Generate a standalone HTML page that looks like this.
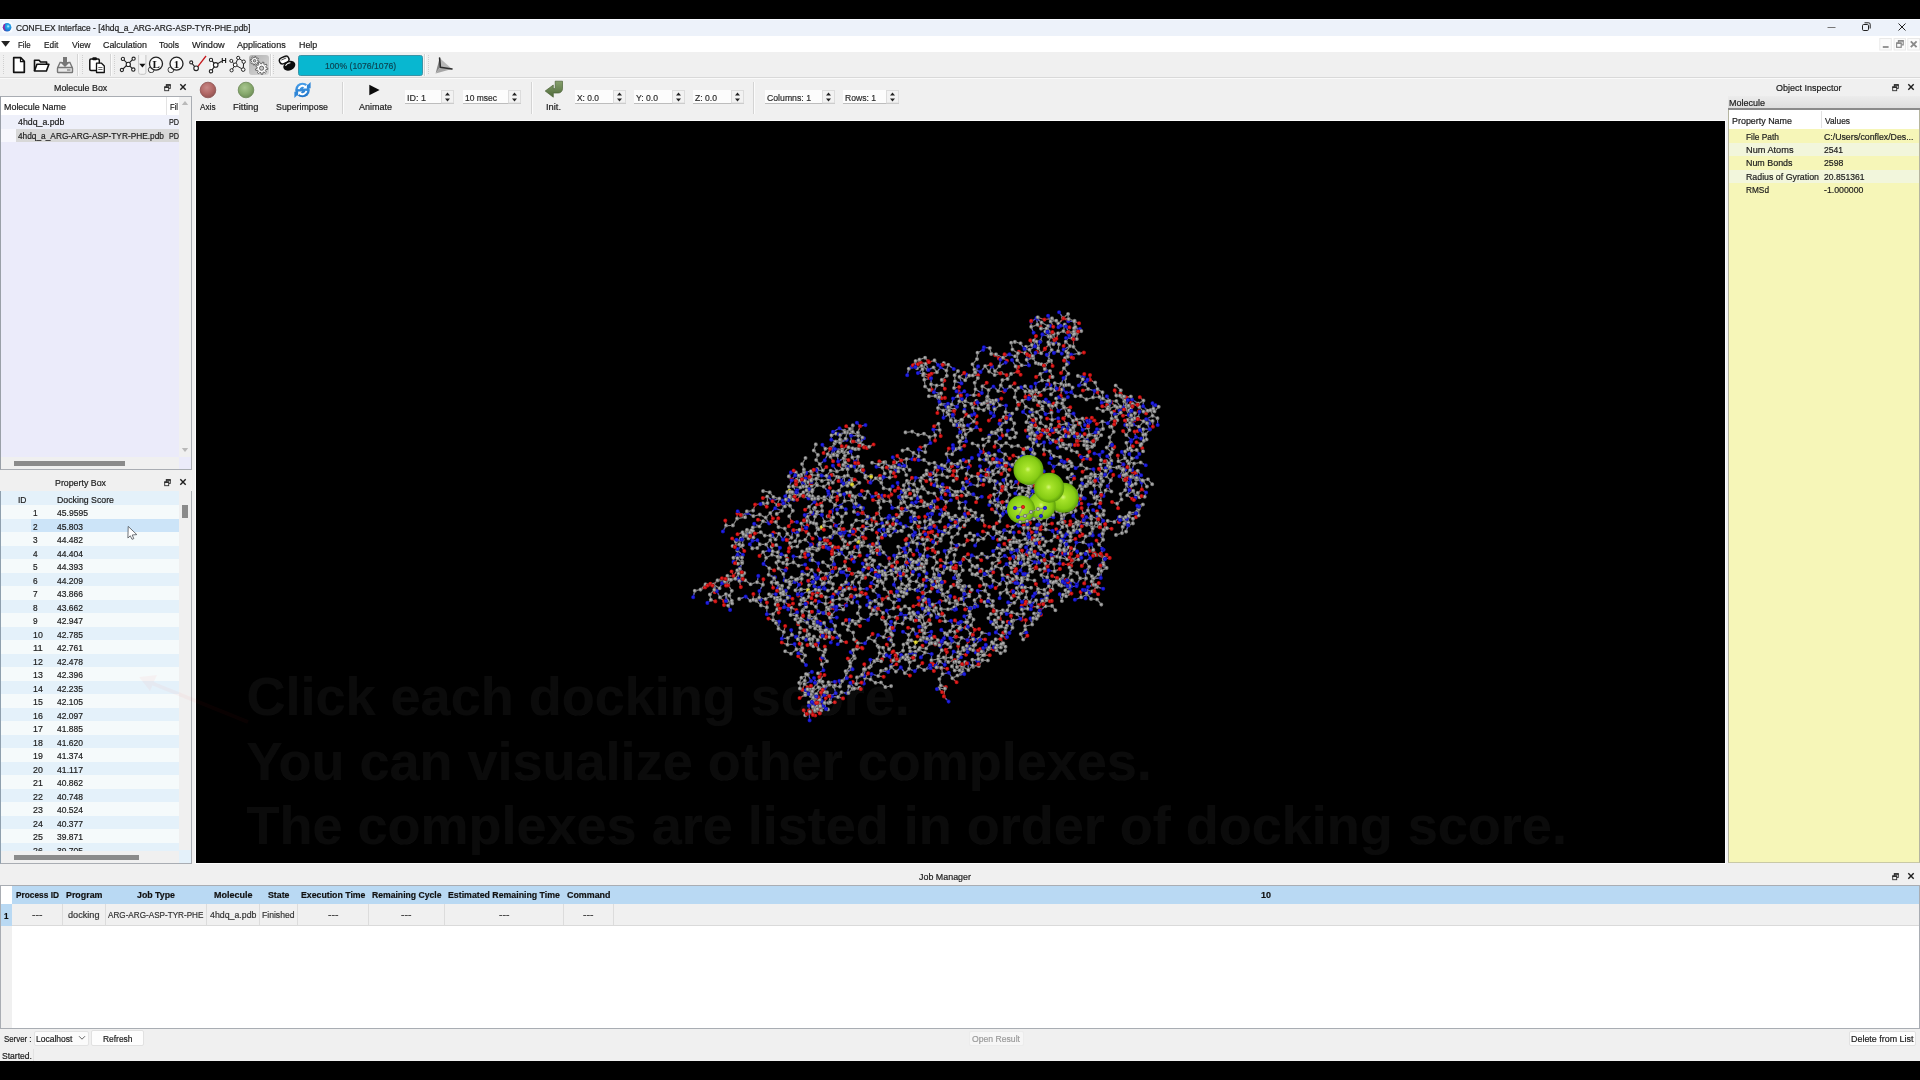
<!DOCTYPE html>
<html><head><meta charset="utf-8"><title>CONFLEX Interface</title>
<style>
html,body{margin:0;padding:0;background:#000;}
body{width:1920px;height:1080px;position:relative;overflow:hidden;font-family:"Liberation Sans",sans-serif;}
body div, body svg{position:absolute;box-sizing:border-box;}
.t{white-space:nowrap;transform-origin:0 50%;-webkit-text-stroke:0.2px;}
</style></head><body><div id="root" style="left:0;top:0;width:1920px;height:1080px;will-change:transform;">
<div style="left:0px;top:19px;width:1920px;height:1042px;background:#f0f0f0;"></div>
<div style="left:0px;top:19px;width:1920px;height:17px;background:#edf2fa;"></div>
<div style="left:0px;top:19px;width:1920px;height:1px;background:#f8fbff;"></div>
<svg style="left:1px;top:21px;" width="12" height="12" viewBox="0 0 12 12"><defs><radialGradient id="ai" cx="0.620" cy="0.400" r="0.650"><stop offset="0" stop-color="#c8f2ff"/><stop offset="0.300" stop-color="#22a8ea"/><stop offset="0.800" stop-color="#1c6fd0"/><stop offset="1" stop-color="#2a4fb0"/></radialGradient></defs><rect x="0.600" y="0.400" width="10.800" height="11.300" rx="2.500" fill="#f7fbff"/><circle cx="6.100" cy="6.200" r="4.300" fill="url(#ai)"/><path d="M3.800 3.200a4.300 4.300 0 0 0 0 6a5.500 5.500 0 0 1 0-6z" fill="#b0189a" stroke="#b0189a" stroke-width="0.800"/></svg>
<div class="t" style="left:16.00px;top:20.80px;line-height:14px;font-size:9.6px;color:#1b1b1b;transform:scaleX(0.8755);">CONFLEX Interface - [4hdq_a_ARG-ARG-ASP-TYR-PHE.pdb]</div>
<svg style="left:1820px;top:19px;" width="100" height="17" viewBox="0 0 100 17"><g stroke="#222" stroke-width="1" fill="none"><path d="M7.5 8.5h8" stroke="#777"/><rect x="42.5" y="5.5" width="6" height="6" rx="1.2"/><path d="M44.5 3.8h4.2a1.5 1.5 0 0 1 1.5 1.5v4.2" /><path d="M78.5 4.5l7 7M85.500 4.5l-7 7"/></g></svg>
<div style="left:0px;top:36px;width:1920px;height:16px;background:#ffffff;"></div>
<svg style="left:0.4px;top:39px;" width="12" height="10" viewBox="0 0 12 10"><path d="M1.1 2.1h9l-4.5 5.700z" fill="#222"/></svg>
<div class="t" style="left:18.30px;top:37.60px;line-height:14px;font-size:9.6px;color:#1b1b1b;transform:scaleX(0.8210);">File</div>
<div class="t" style="left:44.00px;top:37.60px;line-height:14px;font-size:9.6px;color:#1b1b1b;transform:scaleX(0.8644);">Edit</div>
<div class="t" style="left:71.70px;top:37.60px;line-height:14px;font-size:9.6px;color:#1b1b1b;transform:scaleX(0.9014);">View</div>
<div class="t" style="left:102.70px;top:37.60px;line-height:14px;font-size:9.6px;color:#1b1b1b;transform:scaleX(0.9264);">Calculation</div>
<div class="t" style="left:159.30px;top:37.60px;line-height:14px;font-size:9.6px;color:#1b1b1b;transform:scaleX(0.8924);">Tools</div>
<div class="t" style="left:192.00px;top:37.60px;line-height:14px;font-size:9.6px;color:#1b1b1b;transform:scaleX(0.9577);">Window</div>
<div class="t" style="left:237.30px;top:37.60px;line-height:14px;font-size:9.6px;color:#1b1b1b;transform:scaleX(0.9408);">Applications</div>
<div class="t" style="left:298.70px;top:37.60px;line-height:14px;font-size:9.6px;color:#1b1b1b;transform:scaleX(0.9268);">Help</div>
<svg style="left:1876px;top:37px;" width="44" height="15" viewBox="0 0 44 15"><g fill="none"><rect x="3.800" y="1.500" width="11.500" height="11.500" stroke="#e9e9e9" fill="#fbfbfb"/><rect x="18.100" y="1.500" width="11.400" height="11.500" stroke="#e9e9e9" fill="#fbfbfb"/><rect x="31.800" y="1.500" width="11.700" height="11.500" stroke="#e9e9e9" fill="#fbfbfb"/><path d="M6.800 10h5.800" stroke="#8a8a8a" stroke-width="1.800"/><g stroke="#8a8a8a" stroke-width="1.200"><rect x="20.600" y="6.300" width="4.600" height="4"/><path d="M22.400 6v-2.100h4.800v4h-1.800"/><path d="M22 3.700h5.600M20.200 6.100h5.400" stroke-width="1.600"/></g><path d="M34.800 4.400l5.800 5.800M40.600 4.400l-5.800 5.800" stroke="#8a8a8a" stroke-width="1.900"/></g></svg>
<div style="left:0px;top:52px;width:1920px;height:26px;background:#f0f0f0;"></div>
<div style="left:0px;top:77px;width:1920px;height:1px;background:#d9d9d9;"></div>
<div style="left:0px;top:78px;width:1920px;height:1px;background:#fafafa;"></div>
<svg style="left:2px;top:55px;" width="3" height="20" viewBox="0 0 3 20"><path d="M1.500 0v20" stroke="#d0d0d0" stroke-width="1" stroke-dasharray="1 1"/></svg>
<div style="left:77px;top:54px;width:1px;height:22px;background:#d4d4d4;"></div>
<div style="left:78px;top:54px;width:1px;height:22px;background:#fbfbfb;"></div>
<svg style="left:81px;top:55px;" width="3" height="20" viewBox="0 0 3 20"><path d="M1.500 0v20" stroke="#d0d0d0" stroke-width="1" stroke-dasharray="1 1"/></svg>
<div style="left:110px;top:54px;width:1px;height:22px;background:#d4d4d4;"></div>
<div style="left:111px;top:54px;width:1px;height:22px;background:#fbfbfb;"></div>
<svg style="left:113px;top:55px;" width="3" height="20" viewBox="0 0 3 20"><path d="M1.500 0v20" stroke="#d0d0d0" stroke-width="1" stroke-dasharray="1 1"/></svg>
<div style="left:270px;top:54px;width:1px;height:22px;background:#d4d4d4;"></div>
<div style="left:271px;top:54px;width:1px;height:22px;background:#fbfbfb;"></div>
<svg style="left:272px;top:55px;" width="3" height="20" viewBox="0 0 3 20"><path d="M1.500 0v20" stroke="#d0d0d0" stroke-width="1" stroke-dasharray="1 1"/></svg>
<div style="left:424px;top:54px;width:1px;height:22px;background:#d4d4d4;"></div>
<div style="left:425px;top:54px;width:1px;height:22px;background:#fbfbfb;"></div>
<svg style="left:427px;top:55px;" width="3" height="20" viewBox="0 0 3 20"><path d="M1.500 0v20" stroke="#d0d0d0" stroke-width="1" stroke-dasharray="1 1"/></svg>
<svg style="left:12px;top:56px;" width="14" height="18" viewBox="0 0 14 18"><path d="M1.700 1.700h7l3.600 3.700v10.900h-10.600z" fill="#fff" stroke="#111" stroke-width="1.700" stroke-linejoin="round"/><path d="M8.500 1.700v4h3.800" fill="none" stroke="#111" stroke-width="1.200"/></svg>
<svg style="left:33px;top:58px;" width="17" height="15" viewBox="0 0 17 15"><path d="M1.500 13V2.300h4.600l1.500 1.700h6v2.200" fill="none" stroke="#111" stroke-width="1.600" stroke-linejoin="round"/><path d="M1.500 13l2.400-6.800h12l-2.500 6.800z" fill="#fff" stroke="#111" stroke-width="1.600" stroke-linejoin="round"/></svg>
<svg style="left:56px;top:56px;" width="18" height="18" viewBox="0 0 18 18"><path d="M7 1h4v5h3l-5 5-5-5h3z" fill="#777"/><path d="M1.500 12l2.600-5.500h1.600M16.500 12l-2.600-5.500h-1.600" fill="none" stroke="#777" stroke-width="1.400"/><rect x="1.500" y="11.500" width="15" height="5" rx="0.800" fill="#e9e9e9" stroke="#777" stroke-width="1.400"/><path d="M11 14h3.500" stroke="#777" stroke-width="1.200"/></svg>
<svg style="left:88px;top:56px;" width="18" height="18" viewBox="0 0 18 18"><rect x="1.800" y="3" width="9.500" height="11.500" rx="1.200" fill="#fff" stroke="#111" stroke-width="1.500"/><rect x="4.300" y="1.200" width="4.600" height="3" rx="1" fill="#111"/><path d="M8.500 7.200h5l2.800 2.800v6.500h-7.800z" fill="#fff" stroke="#111" stroke-width="1.300" stroke-linejoin="round"/><path d="M10.300 11.500h4.200M10.300 13.500h4.200" stroke="#555" stroke-width="0.900"/></svg>
<svg style="left:119px;top:55px;" width="18" height="18" viewBox="0 0 18 18"><g stroke="#222" stroke-width="1.100" fill="#fff"><path d="M3.900 3.900L14.300 14.600M14.600 3.700L2.900 15"/><circle cx="9.300" cy="9.400" r="2.100"/><circle cx="3.900" cy="3.900" r="1.600"/><circle cx="2.900" cy="15" r="1.600"/><circle cx="14.300" cy="14.600" r="1.700"/><circle cx="14.600" cy="3.700" r="1.600"/></g></svg>
<svg style="left:138px;top:55px;" width="9" height="20" viewBox="0 0 9 20"><path d="M0.600 0v17.300a2 2 0 0 0 2 2h3.300a2 2 0 0 0 2-2v-17.300" fill="#f4f4f4" stroke="#c4c4c4"/><path d="M1.300 8.800h6.200l-3.100 3.600z" fill="#111"/></svg>
<svg style="left:147px;top:56px;" width="17" height="17" viewBox="0 0 17 17"><circle cx="4.200" cy="13.800" r="2.900" fill="#f4f4f4" stroke="#333" stroke-width="0.900"/><circle cx="9" cy="7.700" r="6.500" fill="#fbfbfb" stroke="#222" stroke-width="1.300"/><text x="9.100" y="11.700" font-family="Liberation Serif,serif" font-weight="700" font-size="11" text-anchor="middle" fill="#111">L</text></svg>
<svg style="left:167px;top:56px;" width="17" height="17" viewBox="0 0 17 17"><circle cx="3.900" cy="13.800" r="2.900" fill="#f4f4f4" stroke="#333" stroke-width="0.900"/><circle cx="9.500" cy="7.700" r="6.500" fill="#fbfbfb" stroke="#222" stroke-width="1.300"/><text x="9.600" y="11.600" font-family="Liberation Serif,serif" font-weight="700" font-size="11" text-anchor="middle" fill="#111">1</text></svg>
<svg style="left:188px;top:54px;" width="20" height="20" viewBox="0 0 20 20"><path d="M9.600 12.800L18 2" stroke="#c4181c" stroke-width="1.300"/><g stroke="#222" stroke-width="1.100" fill="#fff"><path d="M3.200 8.400l4.900 5.900"/><circle cx="3.200" cy="8.400" r="1.500"/><circle cx="8.100" cy="14.300" r="2.300"/></g></svg>
<svg style="left:207px;top:54px;" width="21" height="21" viewBox="0 0 21 21"><g stroke="#222" stroke-width="1.100" fill="#fff"><path d="M4 5.900l4.700 5l-4.700 6.400M8.700 10.900l6-3.600"/><circle cx="4" cy="5.900" r="1.600"/><circle cx="8.700" cy="10.900" r="2.300"/><circle cx="4" cy="17.300" r="1.700"/></g><text x="14.200" y="8.500" font-size="7.500" font-weight="700" fill="#111" font-family="Liberation Sans,sans-serif">H</text></svg>
<svg style="left:228px;top:54px;" width="20" height="21" viewBox="0 0 20 21"><g stroke="#222" stroke-width="1" fill="#fff"><path fill="none" d="M3.300 6.900l3.900 4l3-7l5.500 3.800l-0.500 7.900l-8-4.700M7.200 10.900l-3.600 5.400"/><circle cx="3.300" cy="6.900" r="1.500"/><circle cx="7.200" cy="10.900" r="1.900"/><circle cx="10.200" cy="3.900" r="1.600"/><circle cx="15.700" cy="7.700" r="1.700"/><circle cx="15.200" cy="15.600" r="1.800"/><circle cx="3.600" cy="16.300" r="1.600"/></g></svg>
<div style="left:249px;top:55px;width:19.5px;height:20px;background:linear-gradient(135deg,#b0b0b0,#dadada);border-radius:3px;"></div>
<svg style="left:249px;top:55px;" width="20" height="20" viewBox="0 0 20 20"><g fill="#fdfdfd" stroke="#4c4c4c" stroke-width="0.800" stroke-linejoin="round"><path d="M8.70 5.69L9.89 6.05L9.65 7.24L8.41 7.11L7.87 7.91L8.46 9.01L7.45 9.68L6.66 8.71L5.71 8.90L5.35 10.09L4.16 9.85L4.29 8.61L3.49 8.07L2.39 8.66L1.72 7.65L2.69 6.86L2.50 5.91L1.31 5.55L1.55 4.36L2.79 4.49L3.33 3.69L2.74 2.59L3.75 1.92L4.54 2.89L5.49 2.70L5.85 1.51L7.04 1.75L6.91 2.99L7.71 3.53L8.81 2.94L9.48 3.95L8.51 4.74z"/><circle cx="5.600" cy="5.800" r="1.300" fill="#bdbdbd"/><path d="M17.07 12.71L18.80 13.04L18.64 14.59L16.89 14.57L16.34 15.70L17.45 17.06L16.34 18.15L15.00 17.00L13.86 17.52L13.83 19.28L12.28 19.39L11.99 17.66L10.79 17.32L9.64 18.65L8.38 17.74L9.27 16.23L8.56 15.19L6.83 15.47L6.45 13.96L8.10 13.38L8.23 12.13L6.72 11.23L7.40 9.83L9.04 10.45L9.94 9.57L9.36 7.91L10.78 7.27L11.64 8.80L12.89 8.71L13.52 7.07L15.02 7.49L14.69 9.22L15.71 9.95L17.25 9.09L18.12 10.38L16.76 11.49z"/><circle cx="12.600" cy="13.200" r="2.100" fill="#c8c8c8"/></g></svg>
<svg style="left:277px;top:55px;" width="20" height="19" viewBox="0 0 20 19"><g transform="rotate(-24 7.500 5)"><rect x="2.300" y="1.800" width="9.800" height="6.300" rx="3.100" fill="#fff" stroke="#111" stroke-width="1.500"/><path d="M4.500 3.800h5.500" stroke="#333" stroke-width="0.800"/></g><g transform="rotate(-24 12.300 10.800)"><ellipse cx="12.300" cy="10.800" rx="6.300" ry="4.600" fill="#0c0c0c"/><path d="M8.800 9.300c1.600-1.300 4-1.600 5.800-0.900" stroke="#fff" stroke-width="1" fill="none"/></g></svg>
<div style="left:298px;top:55px;width:125.3px;height:20.8px;background:#08b7d0;border:1px solid #3a93a6;border-radius:2.5px;"></div>
<div class="t" style="left:325.00px;top:58.90px;line-height:14px;font-size:9.6px;color:#0c4452;transform:scaleX(0.9013);">100% (1076/1076)</div>
<svg style="left:434px;top:56px;" width="20" height="20" viewBox="0 0 20 20"><path d="M5.600 2L18 13 6.400 11.300z" fill="#b8b8b8"/><path d="M5.600 2L6.400 11.300 1.600 17.500z" fill="#858585"/><path d="M6.400 11.300L18 13 1.600 17.500z" fill="#a6a6a6"/><path d="M5.600 2L6.400 11.300 18 13" fill="none" stroke="#2c2c2c" stroke-width="1.600" stroke-linejoin="round" stroke-linecap="round"/></svg>
<svg style="left:199px;top:81px;" width="18" height="18" viewBox="0 0 18 18"><defs><radialGradient id="b1" cx="0.420" cy="0.350" r="0.700"><stop offset="0" stop-color="#c98a88"/><stop offset="0.600" stop-color="#b06664"/><stop offset="1" stop-color="#8c5250"/></radialGradient></defs><circle cx="9" cy="9" r="7.800" fill="url(#b1)" stroke="#8c5250" stroke-width="0.800"/></svg>
<div class="t" style="left:199.75px;top:99.70px;line-height:14px;font-size:9.6px;color:#1b1b1b;transform:scaleX(0.8546);">Axis</div>
<svg style="left:237px;top:81px;" width="18" height="18" viewBox="0 0 18 18"><defs><radialGradient id="b2" cx="0.420" cy="0.350" r="0.700"><stop offset="0" stop-color="#a9c690"/><stop offset="0.600" stop-color="#86a86c"/><stop offset="1" stop-color="#6b8856"/></radialGradient></defs><circle cx="9" cy="9" r="7.800" fill="url(#b2)" stroke="#6b8856" stroke-width="0.800"/></svg>
<div class="t" style="left:233.25px;top:99.70px;line-height:14px;font-size:9.6px;color:#1b1b1b;transform:scaleX(0.9754);">Fitting</div>
<svg style="left:293px;top:80px;" width="19" height="19" viewBox="0 0 19 19"><defs><linearGradient id="sup" x1="0" y1="0" x2="0" y2="1"><stop offset="0" stop-color="#4aa0ea"/><stop offset="1" stop-color="#1f74c8"/></linearGradient></defs><circle cx="9.500" cy="10" r="7.300" fill="url(#sup)"/><path d="M17.600 2v6.200h-6.200z" fill="#2f86d8"/><path d="M1.400 18v-6.200h6.200z" fill="#2f86d8"/><g fill="none" stroke="#fff" stroke-width="1.900"><path d="M5.600 9.200a4 4 0 0 1 6.800-2.200"/><path d="M13.400 10.800a4 4 0 0 1-6.800 2.200"/></g><path d="M13.900 4.500v4h-4z" fill="#fff"/><path d="M5.100 15.500v-4h4z" fill="#fff"/></svg>
<div class="t" style="left:276.00px;top:99.70px;line-height:14px;font-size:9.6px;color:#1b1b1b;transform:scaleX(0.9193);">Superimpose</div>
<div style="left:342px;top:82px;width:1px;height:32px;background:#d4d4d4;"></div>
<div style="left:343px;top:82px;width:1px;height:32px;background:#fbfbfb;"></div>
<svg style="left:368px;top:84px;" width="13" height="12" viewBox="0 0 13 12"><path d="M1.300 0.800L11.600 6 1.300 11.200z" fill="#0a0a0a"/></svg>
<div class="t" style="left:358.50px;top:99.70px;line-height:14px;font-size:9.6px;color:#1b1b1b;transform:scaleX(0.9370);">Animate</div>
<div style="left:404.5px;top:90px;width:49.0px;height:14px;background:#fcfcfc;border-bottom:1px solid #bdbdbd;"></div>
<svg style="left:440.5px;top:90px;" width="13" height="14" viewBox="0 0 13 14"><rect x="0.500" y="0.500" width="12" height="12.500" fill="#f2f2f2" stroke="#dcdcdc"/><path d="M4 5.600h5l-2.500-3zM4 8.400h5l-2.500 3z" fill="#222"/></svg>
<div class="t" style="left:406.50px;top:90.50px;line-height:14px;font-size:9.6px;color:#2a2a2a;transform:scaleX(0.9372);">ID: 1</div>
<div style="left:462.5px;top:90px;width:58.5px;height:14px;background:#fcfcfc;border-bottom:1px solid #bdbdbd;"></div>
<svg style="left:508px;top:90px;" width="13" height="14" viewBox="0 0 13 14"><rect x="0.500" y="0.500" width="12" height="12.500" fill="#f2f2f2" stroke="#dcdcdc"/><path d="M4 5.600h5l-2.500-3zM4 8.400h5l-2.500 3z" fill="#222"/></svg>
<div class="t" style="left:464.50px;top:90.50px;line-height:14px;font-size:9.6px;color:#2a2a2a;transform:scaleX(0.8820);">10 msec</div>
<div style="left:531px;top:82px;width:1px;height:32px;background:#d4d4d4;"></div>
<div style="left:532px;top:82px;width:1px;height:32px;background:#fbfbfb;"></div>
<svg style="left:544px;top:80px;" width="21" height="19" viewBox="0 0 21 19"><defs><linearGradient id="ini" x1="0" y1="0" x2="0" y2="1"><stop offset="0" stop-color="#86a06c"/><stop offset="1" stop-color="#4f6a3a"/></linearGradient></defs><path d="M11.200 1.200h7.300v7.600a4.200 4.200 0 0 1-4.200 4.200h-5v4.200L1.200 11 9.300 5v3.600h1.400a.5 .5 0 0 0 .5-.5z" fill="url(#ini)" stroke="#4c6338" stroke-width="0.700" stroke-linejoin="round"/></svg>
<div class="t" style="left:546.00px;top:99.70px;line-height:14px;font-size:9.6px;color:#1b1b1b;transform:scaleX(0.9694);">Init.</div>
<div style="left:574.5px;top:90px;width:51.0px;height:14px;background:#fcfcfc;border-bottom:1px solid #bdbdbd;"></div>
<svg style="left:612.5px;top:90px;" width="13" height="14" viewBox="0 0 13 14"><rect x="0.500" y="0.500" width="12" height="12.500" fill="#f2f2f2" stroke="#dcdcdc"/><path d="M4 5.600h5l-2.500-3zM4 8.400h5l-2.500 3z" fill="#222"/></svg>
<div class="t" style="left:576.50px;top:90.50px;line-height:14px;font-size:9.6px;color:#2a2a2a;transform:scaleX(0.8771);">X: 0.0</div>
<div style="left:634px;top:90px;width:51px;height:14px;background:#fcfcfc;border-bottom:1px solid #bdbdbd;"></div>
<svg style="left:672px;top:90px;" width="13" height="14" viewBox="0 0 13 14"><rect x="0.500" y="0.500" width="12" height="12.500" fill="#f2f2f2" stroke="#dcdcdc"/><path d="M4 5.600h5l-2.500-3zM4 8.400h5l-2.500 3z" fill="#222"/></svg>
<div class="t" style="left:636.00px;top:90.50px;line-height:14px;font-size:9.6px;color:#2a2a2a;transform:scaleX(0.8960);">Y: 0.0</div>
<div style="left:693px;top:90px;width:51px;height:14px;background:#fcfcfc;border-bottom:1px solid #bdbdbd;"></div>
<svg style="left:731px;top:90px;" width="13" height="14" viewBox="0 0 13 14"><rect x="0.500" y="0.500" width="12" height="12.500" fill="#f2f2f2" stroke="#dcdcdc"/><path d="M4 5.600h5l-2.500-3zM4 8.400h5l-2.500 3z" fill="#222"/></svg>
<div class="t" style="left:695.00px;top:90.50px;line-height:14px;font-size:9.6px;color:#2a2a2a;transform:scaleX(0.8964);">Z: 0.0</div>
<div style="left:753px;top:82px;width:1px;height:32px;background:#d4d4d4;"></div>
<div style="left:754px;top:82px;width:1px;height:32px;background:#fbfbfb;"></div>
<div style="left:764.5px;top:90px;width:70.0px;height:14px;background:#fcfcfc;border-bottom:1px solid #bdbdbd;"></div>
<svg style="left:821.5px;top:90px;" width="13" height="14" viewBox="0 0 13 14"><rect x="0.500" y="0.500" width="12" height="12.500" fill="#f2f2f2" stroke="#dcdcdc"/><path d="M4 5.600h5l-2.500-3zM4 8.400h5l-2.500 3z" fill="#222"/></svg>
<div class="t" style="left:766.50px;top:90.50px;line-height:14px;font-size:9.6px;color:#2a2a2a;transform:scaleX(0.9062);">Columns: 1</div>
<div style="left:843px;top:90px;width:56px;height:14px;background:#fcfcfc;border-bottom:1px solid #bdbdbd;"></div>
<svg style="left:886px;top:90px;" width="13" height="14" viewBox="0 0 13 14"><rect x="0.500" y="0.500" width="12" height="12.500" fill="#f2f2f2" stroke="#dcdcdc"/><path d="M4 5.600h5l-2.500-3zM4 8.400h5l-2.500 3z" fill="#222"/></svg>
<div class="t" style="left:845.00px;top:90.50px;line-height:14px;font-size:9.6px;color:#2a2a2a;transform:scaleX(0.8939);">Rows: 1</div>
<div class="t" style="left:54.00px;top:81.00px;line-height:14px;font-size:9.6px;color:#1b1b1b;transform:scaleX(0.9249);">Molecule Box</div>
<svg style="left:164.0px;top:83.5px;" width="8" height="8" viewBox="0 0 8 8"><g fill="none" stroke="#2e2e2e" stroke-width="0.900"><rect x="2.300" y="0.800" width="4" height="3.600"/><path d="M1.900 1h4.800" stroke-width="1.600"/><rect x="0.700" y="3" width="4" height="3.700" fill="#f0f0f0"/><path d="M0.300 3.200h4.800" stroke-width="1.600"/></g></svg>
<svg style="left:179px;top:83px;" width="8" height="8" viewBox="0 0 8 8"><path d="M1.300 1.300l5.400 5.400M6.700 1.300l-5.400 5.400" stroke="#1d1d1d" stroke-width="1.400"/></svg>
<div style="left:0px;top:96px;width:192px;height:374px;background:#ebebfa;border:1px solid #a9adb3;border-left-color:#9aa0a8;"></div>
<div style="left:1px;top:97px;width:190px;height:18px;background:#ffffff;"></div>
<div style="left:166px;top:97px;width:1px;height:18px;background:#e3e3e3;"></div>
<div class="t" style="left:4.00px;top:99.70px;line-height:14px;font-size:9.6px;color:#1b1b1b;transform:scaleX(0.9296);">Molecule Name</div>
<div style="left:1px;top:115px;width:178px;height:13.5px;background:#eef0fa;"></div>
<div class="t" style="left:18.00px;top:115.30px;line-height:14px;font-size:9.6px;color:#1b1b1b;transform:scaleX(0.9148);">4hdq_a.pdb</div>
<div style="left:1px;top:128.5px;width:15px;height:13.5px;background:#f7f7fd;"></div>
<div style="left:16px;top:128.5px;width:163px;height:13.5px;background:#d8d8d8;"></div>
<div class="t" style="left:18.00px;top:128.70px;line-height:14px;font-size:9.6px;color:#1b1b1b;transform:scaleX(0.8659);">4hdq_a_ARG-ARG-ASP-TYR-PHE.pdb</div>
<div style="left:167px;top:97px;width:12px;height:46px;overflow:hidden;">
<div class="t" style="left:3.00px;top:2.70px;line-height:14px;font-size:9.6px;color:#1b1b1b;transform:scaleX(0.7897);">Fil</div>
<div class="t" style="left:2.00px;top:18.20px;line-height:14px;font-size:9.6px;color:#1b1b1b;transform:scaleX(0.7599);">PDB</div>
<div class="t" style="left:2.00px;top:31.70px;line-height:14px;font-size:9.6px;color:#1b1b1b;transform:scaleX(0.7599);">PDB</div>
</div>
<div style="left:179px;top:97px;width:12px;height:360px;background:#f0f0f0;"></div>
<svg style="left:181px;top:100px;" width="8" height="6" viewBox="0 0 8 6"><path d="M0.800 5h6.400l-3.200-4z" fill="#b9b9b9"/></svg>
<svg style="left:181px;top:447px;" width="8" height="6" viewBox="0 0 8 6"><path d="M0.800 1h6.400l-3.200 4z" fill="#b9b9b9"/></svg>
<div style="left:1px;top:457px;width:178px;height:12px;background:#f0f0f0;"></div>
<div style="left:13.5px;top:461px;width:111.5px;height:5px;background:#8b8b8b;"></div>
<div class="t" style="left:55.00px;top:476.20px;line-height:14px;font-size:9.6px;color:#1b1b1b;transform:scaleX(0.9190);">Property Box</div>
<svg style="left:164.0px;top:478.5px;" width="8" height="8" viewBox="0 0 8 8"><g fill="none" stroke="#2e2e2e" stroke-width="0.900"><rect x="2.300" y="0.800" width="4" height="3.600"/><path d="M1.900 1h4.800" stroke-width="1.600"/><rect x="0.700" y="3" width="4" height="3.700" fill="#f0f0f0"/><path d="M0.300 3.200h4.800" stroke-width="1.600"/></g></svg>
<svg style="left:179px;top:478px;" width="8" height="8" viewBox="0 0 8 8"><path d="M1.300 1.300l5.400 5.400M6.700 1.300l-5.400 5.400" stroke="#1d1d1d" stroke-width="1.400"/></svg>
<div style="left:0px;top:491px;width:192px;height:373px;background:#f0f0f0;border:1px solid #a9adb3;border-top:none;border-left-color:#8fa0ae;"></div>
<div style="left:1px;top:491px;width:178px;height:359.6px;overflow:hidden;background:#f5fafb;">
<div style="left:0px;top:0px;width:178px;height:14px;background:#e4f1fa;"></div>
<div class="t" style="left:17.00px;top:1.60px;line-height:14px;font-size:9.6px;color:#1b1b1b;transform:scaleX(0.8854);">ID</div>
<div class="t" style="left:56.00px;top:1.60px;line-height:14px;font-size:9.6px;color:#1b1b1b;transform:scaleX(0.9130);">Docking Score</div>
<div class="t" style="left:32.00px;top:15.30px;line-height:14px;font-size:9.6px;color:#1b1b1b;transform:scaleX(0.8615);">1</div>
<div class="t" style="left:56.00px;top:15.30px;line-height:14px;font-size:9.6px;color:#1b1b1b;transform:scaleX(0.8933);">45.9595</div>
<div style="left:0px;top:27.5px;width:178px;height:13.5px;background:#e4f1fa;"></div>
<div style="left:30px;top:27.5px;width:148px;height:13.5px;background:#cce4f8;"></div>
<div class="t" style="left:32.00px;top:28.80px;line-height:14px;font-size:9.6px;color:#1b1b1b;transform:scaleX(0.8615);">2</div>
<div class="t" style="left:56.00px;top:28.80px;line-height:14px;font-size:9.6px;color:#1b1b1b;transform:scaleX(0.8855);">45.803</div>
<div class="t" style="left:32.00px;top:42.30px;line-height:14px;font-size:9.6px;color:#1b1b1b;transform:scaleX(0.8615);">3</div>
<div class="t" style="left:56.00px;top:42.30px;line-height:14px;font-size:9.6px;color:#1b1b1b;transform:scaleX(0.8855);">44.482</div>
<div style="left:0px;top:54.5px;width:178px;height:13.5px;background:#e4f1fa;"></div>
<div class="t" style="left:32.00px;top:55.80px;line-height:14px;font-size:9.6px;color:#1b1b1b;transform:scaleX(0.8615);">4</div>
<div class="t" style="left:56.00px;top:55.80px;line-height:14px;font-size:9.6px;color:#1b1b1b;transform:scaleX(0.8855);">44.404</div>
<div class="t" style="left:32.00px;top:69.30px;line-height:14px;font-size:9.6px;color:#1b1b1b;transform:scaleX(0.8615);">5</div>
<div class="t" style="left:56.00px;top:69.30px;line-height:14px;font-size:9.6px;color:#1b1b1b;transform:scaleX(0.8855);">44.393</div>
<div style="left:0px;top:81.5px;width:178px;height:13.5px;background:#e4f1fa;"></div>
<div class="t" style="left:32.00px;top:82.80px;line-height:14px;font-size:9.6px;color:#1b1b1b;transform:scaleX(0.8615);">6</div>
<div class="t" style="left:56.00px;top:82.80px;line-height:14px;font-size:9.6px;color:#1b1b1b;transform:scaleX(0.8855);">44.209</div>
<div class="t" style="left:32.00px;top:96.30px;line-height:14px;font-size:9.6px;color:#1b1b1b;transform:scaleX(0.8615);">7</div>
<div class="t" style="left:56.00px;top:96.30px;line-height:14px;font-size:9.6px;color:#1b1b1b;transform:scaleX(0.8855);">43.866</div>
<div style="left:0px;top:108.5px;width:178px;height:13.5px;background:#e4f1fa;"></div>
<div class="t" style="left:32.00px;top:109.80px;line-height:14px;font-size:9.6px;color:#1b1b1b;transform:scaleX(0.8615);">8</div>
<div class="t" style="left:56.00px;top:109.80px;line-height:14px;font-size:9.6px;color:#1b1b1b;transform:scaleX(0.8855);">43.662</div>
<div class="t" style="left:32.00px;top:123.30px;line-height:14px;font-size:9.6px;color:#1b1b1b;transform:scaleX(0.8615);">9</div>
<div class="t" style="left:56.00px;top:123.30px;line-height:14px;font-size:9.6px;color:#1b1b1b;transform:scaleX(0.8855);">42.947</div>
<div style="left:0px;top:135.5px;width:178px;height:13.5px;background:#e4f1fa;"></div>
<div class="t" style="left:32.00px;top:136.80px;line-height:14px;font-size:9.6px;color:#1b1b1b;transform:scaleX(0.9177);">10</div>
<div class="t" style="left:56.00px;top:136.80px;line-height:14px;font-size:9.6px;color:#1b1b1b;transform:scaleX(0.8855);">42.785</div>
<div class="t" style="left:32.00px;top:150.30px;line-height:14px;font-size:9.6px;color:#1b1b1b;transform:scaleX(0.9833);">11</div>
<div class="t" style="left:56.00px;top:150.30px;line-height:14px;font-size:9.6px;color:#1b1b1b;transform:scaleX(0.8855);">42.761</div>
<div style="left:0px;top:162.5px;width:178px;height:13.5px;background:#e4f1fa;"></div>
<div class="t" style="left:32.00px;top:163.80px;line-height:14px;font-size:9.6px;color:#1b1b1b;transform:scaleX(0.9177);">12</div>
<div class="t" style="left:56.00px;top:163.80px;line-height:14px;font-size:9.6px;color:#1b1b1b;transform:scaleX(0.8855);">42.478</div>
<div class="t" style="left:32.00px;top:177.30px;line-height:14px;font-size:9.6px;color:#1b1b1b;transform:scaleX(0.9177);">13</div>
<div class="t" style="left:56.00px;top:177.30px;line-height:14px;font-size:9.6px;color:#1b1b1b;transform:scaleX(0.8855);">42.396</div>
<div style="left:0px;top:189.5px;width:178px;height:13.5px;background:#e4f1fa;"></div>
<div class="t" style="left:32.00px;top:190.80px;line-height:14px;font-size:9.6px;color:#1b1b1b;transform:scaleX(0.9177);">14</div>
<div class="t" style="left:56.00px;top:190.80px;line-height:14px;font-size:9.6px;color:#1b1b1b;transform:scaleX(0.8855);">42.235</div>
<div class="t" style="left:32.00px;top:204.30px;line-height:14px;font-size:9.6px;color:#1b1b1b;transform:scaleX(0.9177);">15</div>
<div class="t" style="left:56.00px;top:204.30px;line-height:14px;font-size:9.6px;color:#1b1b1b;transform:scaleX(0.8855);">42.105</div>
<div style="left:0px;top:216.5px;width:178px;height:13.5px;background:#e4f1fa;"></div>
<div class="t" style="left:32.00px;top:217.80px;line-height:14px;font-size:9.6px;color:#1b1b1b;transform:scaleX(0.9177);">16</div>
<div class="t" style="left:56.00px;top:217.80px;line-height:14px;font-size:9.6px;color:#1b1b1b;transform:scaleX(0.8855);">42.097</div>
<div class="t" style="left:32.00px;top:231.30px;line-height:14px;font-size:9.6px;color:#1b1b1b;transform:scaleX(0.9177);">17</div>
<div class="t" style="left:56.00px;top:231.30px;line-height:14px;font-size:9.6px;color:#1b1b1b;transform:scaleX(0.8855);">41.885</div>
<div style="left:0px;top:243.5px;width:178px;height:13.5px;background:#e4f1fa;"></div>
<div class="t" style="left:32.00px;top:244.80px;line-height:14px;font-size:9.6px;color:#1b1b1b;transform:scaleX(0.9177);">18</div>
<div class="t" style="left:56.00px;top:244.80px;line-height:14px;font-size:9.6px;color:#1b1b1b;transform:scaleX(0.8855);">41.620</div>
<div class="t" style="left:32.00px;top:258.30px;line-height:14px;font-size:9.6px;color:#1b1b1b;transform:scaleX(0.9177);">19</div>
<div class="t" style="left:56.00px;top:258.30px;line-height:14px;font-size:9.6px;color:#1b1b1b;transform:scaleX(0.8855);">41.374</div>
<div style="left:0px;top:270.5px;width:178px;height:13.5px;background:#e4f1fa;"></div>
<div class="t" style="left:32.00px;top:271.80px;line-height:14px;font-size:9.6px;color:#1b1b1b;transform:scaleX(0.9177);">20</div>
<div class="t" style="left:56.00px;top:271.80px;line-height:14px;font-size:9.6px;color:#1b1b1b;transform:scaleX(0.9075);">41.117</div>
<div class="t" style="left:32.00px;top:285.30px;line-height:14px;font-size:9.6px;color:#1b1b1b;transform:scaleX(0.9177);">21</div>
<div class="t" style="left:56.00px;top:285.30px;line-height:14px;font-size:9.6px;color:#1b1b1b;transform:scaleX(0.8855);">40.862</div>
<div style="left:0px;top:297.5px;width:178px;height:13.5px;background:#e4f1fa;"></div>
<div class="t" style="left:32.00px;top:298.80px;line-height:14px;font-size:9.6px;color:#1b1b1b;transform:scaleX(0.9177);">22</div>
<div class="t" style="left:56.00px;top:298.80px;line-height:14px;font-size:9.6px;color:#1b1b1b;transform:scaleX(0.8855);">40.748</div>
<div class="t" style="left:32.00px;top:312.30px;line-height:14px;font-size:9.6px;color:#1b1b1b;transform:scaleX(0.9177);">23</div>
<div class="t" style="left:56.00px;top:312.30px;line-height:14px;font-size:9.6px;color:#1b1b1b;transform:scaleX(0.8855);">40.524</div>
<div style="left:0px;top:324.5px;width:178px;height:13.5px;background:#e4f1fa;"></div>
<div class="t" style="left:32.00px;top:325.80px;line-height:14px;font-size:9.6px;color:#1b1b1b;transform:scaleX(0.9177);">24</div>
<div class="t" style="left:56.00px;top:325.80px;line-height:14px;font-size:9.6px;color:#1b1b1b;transform:scaleX(0.8855);">40.377</div>
<div class="t" style="left:32.00px;top:339.30px;line-height:14px;font-size:9.6px;color:#1b1b1b;transform:scaleX(0.9177);">25</div>
<div class="t" style="left:56.00px;top:339.30px;line-height:14px;font-size:9.6px;color:#1b1b1b;transform:scaleX(0.8855);">39.871</div>
<div style="left:0px;top:351.5px;width:178px;height:13.5px;background:#e4f1fa;"></div>
<div class="t" style="left:32.00px;top:352.80px;line-height:14px;font-size:9.6px;color:#1b1b1b;transform:scaleX(0.9177);">26</div>
<div class="t" style="left:56.00px;top:352.80px;line-height:14px;font-size:9.6px;color:#1b1b1b;transform:scaleX(0.8855);">39.705</div>
</div>
<div style="left:182px;top:505px;width:6px;height:13px;background:#8b8b8b;"></div>
<div style="left:13.7px;top:855px;width:125.3px;height:5px;background:#8b8b8b;"></div>
<div style="left:179px;top:850px;width:12px;height:13px;background:#e4f1fa;"></div>
<svg style="left:126px;top:525px;" width="13" height="16" viewBox="0 0 13 16"><path d="M2.200 1.400L1.900 13 4.300 10.800 6 14.300 7.800 13.600 6.200 10 10.800 9.600z" fill="#fff" stroke="#4a4f55" stroke-width="0.800" stroke-linejoin="round"/></svg>
<div class="t" style="left:1776.00px;top:81.00px;line-height:14px;font-size:9.6px;color:#1b1b1b;transform:scaleX(0.9370);">Object Inspector</div>
<svg style="left:1892.0px;top:83.5px;" width="8" height="8" viewBox="0 0 8 8"><g fill="none" stroke="#2e2e2e" stroke-width="0.900"><rect x="2.300" y="0.800" width="4" height="3.600"/><path d="M1.900 1h4.800" stroke-width="1.600"/><rect x="0.700" y="3" width="4" height="3.700" fill="#f0f0f0"/><path d="M0.300 3.200h4.800" stroke-width="1.600"/></g></svg>
<svg style="left:1907px;top:83px;" width="8" height="8" viewBox="0 0 8 8"><path d="M1.300 1.300l5.400 5.400M6.700 1.300l-5.400 5.400" stroke="#1d1d1d" stroke-width="1.400"/></svg>
<div style="left:1728px;top:96px;width:192px;height:13px;background:linear-gradient(#ececec,#dcdcdc);"></div>
<div style="left:1728px;top:108.4px;width:192px;height:1.6px;background:#8a8a8a;"></div>
<div class="t" style="left:1728.50px;top:95.70px;line-height:14px;font-size:9.6px;color:#1b1b1b;transform:scaleX(0.9370);">Molecule</div>
<div style="left:1728px;top:110px;width:192px;height:753px;background:#f6f6b8;border-left:1px solid #b5b5a0;border-right:1px solid #b5b5a0;border-bottom:1px solid #c9c9a6;"></div>
<div style="left:1729px;top:110px;width:190px;height:19px;background:#ffffff;"></div>
<div style="left:1821px;top:111px;width:1px;height:17px;background:#e2e2e2;"></div>
<div class="t" style="left:1732.00px;top:113.80px;line-height:14px;font-size:9.6px;color:#1b1b1b;transform:scaleX(0.9294);">Property Name</div>
<div class="t" style="left:1825.00px;top:113.80px;line-height:14px;font-size:9.6px;color:#1b1b1b;transform:scaleX(0.8729);">Values</div>
<div class="t" style="left:1746.00px;top:129.60px;line-height:14px;font-size:9.6px;color:#1b1b1b;transform:scaleX(0.8710);">File Path</div>
<div class="t" style="left:1824.00px;top:129.60px;line-height:14px;font-size:9.6px;color:#1b1b1b;transform:scaleX(0.9118);">C:/Users/conflex/Des...</div>
<div style="left:1729px;top:142.9px;width:190px;height:13.4px;background:#f2f6dc;"></div>
<div class="t" style="left:1746.00px;top:143.00px;line-height:14px;font-size:9.6px;color:#1b1b1b;transform:scaleX(0.9574);">Num Atoms</div>
<div class="t" style="left:1824.00px;top:143.00px;line-height:14px;font-size:9.6px;color:#1b1b1b;transform:scaleX(0.8896);">2541</div>
<div class="t" style="left:1746.00px;top:156.40px;line-height:14px;font-size:9.6px;color:#1b1b1b;transform:scaleX(0.9271);">Num Bonds</div>
<div class="t" style="left:1824.00px;top:156.40px;line-height:14px;font-size:9.6px;color:#1b1b1b;transform:scaleX(0.9130);">2598</div>
<div style="left:1729px;top:169.7px;width:190px;height:13.4px;background:#f2f6dc;"></div>
<div class="t" style="left:1746.00px;top:169.80px;line-height:14px;font-size:9.6px;color:#1b1b1b;transform:scaleX(0.9182);">Radius of Gyration</div>
<div class="t" style="left:1824.00px;top:169.80px;line-height:14px;font-size:9.6px;color:#1b1b1b;transform:scaleX(0.8924);">20.851361</div>
<div class="t" style="left:1746.00px;top:183.20px;line-height:14px;font-size:9.6px;color:#1b1b1b;transform:scaleX(0.8623);">RMSd</div>
<div class="t" style="left:1824.00px;top:183.20px;line-height:14px;font-size:9.6px;color:#1b1b1b;transform:scaleX(0.9135);">-1.000000</div>
<div class="t" style="left:918.50px;top:869.50px;line-height:14px;font-size:9.6px;color:#1b1b1b;transform:scaleX(0.9280);">Job Manager</div>
<svg style="left:1891.5px;top:872.5px;" width="8" height="8" viewBox="0 0 8 8"><g fill="none" stroke="#2e2e2e" stroke-width="0.900"><rect x="2.300" y="0.800" width="4" height="3.600"/><path d="M1.900 1h4.800" stroke-width="1.600"/><rect x="0.700" y="3" width="4" height="3.700" fill="#f0f0f0"/><path d="M0.300 3.200h4.800" stroke-width="1.600"/></g></svg>
<svg style="left:1907px;top:872px;" width="8" height="8" viewBox="0 0 8 8"><path d="M1.300 1.300l5.400 5.400M6.700 1.300l-5.400 5.400" stroke="#1d1d1d" stroke-width="1.400"/></svg>
<div style="left:0px;top:885px;width:1920px;height:144px;background:#ffffff;border:1px solid #a9adb3;"></div>
<div style="left:1px;top:886px;width:11px;height:142px;background:#f0f0f0;"></div>
<div style="left:1px;top:886px;width:11px;height:18px;background:#ffffff;"></div>
<div style="left:12px;top:886px;width:1907px;height:18px;background:#b9d9f3;"></div>
<div style="left:1px;top:904px;width:11px;height:22.2px;background:#b9d9f3;"></div>
<div class="t" style="left:3.50px;top:908.50px;line-height:14px;font-size:9.6px;color:#111;transform:scaleX(0.8428);font-weight:700;">1</div>
<div style="left:12px;top:904px;width:1907px;height:22.2px;background:#f0f0f0;border-bottom:1px solid #dadada;"></div>
<div class="t" style="left:15.50px;top:887.90px;line-height:14px;font-size:9.6px;color:#111;transform:scaleX(0.8665);font-weight:700;">Process ID</div>
<div class="t" style="left:31.75px;top:908.20px;line-height:14px;font-size:9.6px;color:#333;transform:scaleX(1.0947);">---</div>
<div class="t" style="left:65.50px;top:887.90px;line-height:14px;font-size:9.6px;color:#111;transform:scaleX(0.9246);font-weight:700;">Program</div>
<div class="t" style="left:68.00px;top:908.20px;line-height:14px;font-size:9.6px;color:#333;transform:scaleX(0.9519);">docking</div>
<div style="left:61.5px;top:904px;width:1px;height:21px;background:#dcdcdc;"></div>
<div class="t" style="left:137.00px;top:887.90px;line-height:14px;font-size:9.6px;color:#111;transform:scaleX(0.9172);font-weight:700;">Job Type</div>
<div class="t" style="left:108.25px;top:908.20px;line-height:14px;font-size:9.6px;color:#333;transform:scaleX(0.8485);">ARG-ARG-ASP-TYR-PHE</div>
<div style="left:105.0px;top:904px;width:1px;height:21px;background:#dcdcdc;"></div>
<div class="t" style="left:213.50px;top:887.90px;line-height:14px;font-size:9.6px;color:#111;transform:scaleX(0.9373);font-weight:700;">Molecule</div>
<div class="t" style="left:209.50px;top:908.20px;line-height:14px;font-size:9.6px;color:#333;transform:scaleX(0.9168);">4hdq_a.pdb</div>
<div style="left:206.0px;top:904px;width:1px;height:21px;background:#dcdcdc;"></div>
<div class="t" style="left:267.50px;top:887.90px;line-height:14px;font-size:9.6px;color:#111;transform:scaleX(0.9158);font-weight:700;">State</div>
<div class="t" style="left:262.00px;top:908.20px;line-height:14px;font-size:9.6px;color:#333;transform:scaleX(0.8956);">Finished</div>
<div style="left:258.5px;top:904px;width:1px;height:21px;background:#dcdcdc;"></div>
<div class="t" style="left:300.75px;top:887.90px;line-height:14px;font-size:9.6px;color:#111;transform:scaleX(0.9113);font-weight:700;">Execution Time</div>
<div class="t" style="left:327.75px;top:908.20px;line-height:14px;font-size:9.6px;color:#333;transform:scaleX(1.0947);">---</div>
<div style="left:297.0px;top:904px;width:1px;height:21px;background:#dcdcdc;"></div>
<div class="t" style="left:371.75px;top:887.90px;line-height:14px;font-size:9.6px;color:#111;transform:scaleX(0.8984);font-weight:700;">Remaining Cycle</div>
<div class="t" style="left:401.25px;top:908.20px;line-height:14px;font-size:9.6px;color:#333;transform:scaleX(1.0947);">---</div>
<div style="left:368.0px;top:904px;width:1px;height:21px;background:#dcdcdc;"></div>
<div class="t" style="left:448.00px;top:887.90px;line-height:14px;font-size:9.6px;color:#111;transform:scaleX(0.9141);font-weight:700;">Estimated Remaining Time</div>
<div class="t" style="left:498.75px;top:908.20px;line-height:14px;font-size:9.6px;color:#333;transform:scaleX(1.0947);">---</div>
<div style="left:444.0px;top:904px;width:1px;height:21px;background:#dcdcdc;"></div>
<div class="t" style="left:566.50px;top:887.90px;line-height:14px;font-size:9.6px;color:#111;transform:scaleX(0.9268);font-weight:700;">Command</div>
<div class="t" style="left:583.00px;top:908.20px;line-height:14px;font-size:9.6px;color:#333;transform:scaleX(1.0947);">---</div>
<div style="left:563.0px;top:904px;width:1px;height:21px;background:#dcdcdc;"></div>
<div class="t" style="left:1261.00px;top:887.90px;line-height:14px;font-size:9.6px;color:#111;transform:scaleX(0.9365);font-weight:700;">10</div>
<div style="left:612.5px;top:904px;width:1px;height:21px;background:#dcdcdc;"></div>
<div class="t" style="left:4.00px;top:1031.70px;line-height:14px;font-size:9.6px;color:#1b1b1b;transform:scaleX(0.8182);">Server :</div>
<div style="left:33.5px;top:1031px;width:55.5px;height:14.5px;background:#fbfbfb;border:1px solid #e3e3e3;border-radius:2px;"></div>
<div class="t" style="left:36.00px;top:1031.70px;line-height:14px;font-size:9.6px;color:#1b1b1b;transform:scaleX(0.8882);">Localhost</div>
<svg style="left:78px;top:1035px;" width="8" height="6" viewBox="0 0 8 6"><path d="M1 1.200l3 3 3-3" fill="none" stroke="#555" stroke-width="0.900"/></svg>
<div style="left:91px;top:1030px;width:53px;height:16px;background:#fdfdfd;border:1px solid #e1e1e1;border-radius:2px;"></div>
<div class="t" style="left:102.75px;top:1031.60px;line-height:14px;font-size:9.6px;color:#1b1b1b;transform:scaleX(0.8776);">Refresh</div>
<div style="left:969px;top:1030.5px;width:54.5px;height:15px;background:#f6f6f6;border:1px solid #ececec;border-radius:2px;"></div>
<div class="t" style="left:972.00px;top:1031.50px;line-height:14px;font-size:9.6px;color:#9a9a9a;transform:scaleX(0.8995);">Open Result</div>
<div style="left:1848.5px;top:1030.5px;width:67px;height:15px;background:#fdfdfd;border:1px solid #e1e1e1;border-radius:2px;"></div>
<div class="t" style="left:1850.75px;top:1031.50px;line-height:14px;font-size:9.6px;color:#1b1b1b;transform:scaleX(0.9297);">Delete from List</div>
<div class="t" style="left:1.50px;top:1049.20px;line-height:14px;font-size:9.6px;color:#1b1b1b;transform:scaleX(0.8923);">Started.</div>
<div style="left:33px;top:1049px;width:1px;height:12px;background:#e2e2e2;"></div>
<div style="left:192px;top:119px;width:1536px;height:746px;background:#f0f0f0;"></div>
<div style="left:195px;top:120px;width:1531px;height:744px;background:#fbfbfb;"></div>
<div style="left:196px;top:121px;width:1528.5px;height:742px;background:#000000;"></div>
<svg style="left:196px;top:121px;" width="1528" height="742" viewBox="0 0 1528 742"><defs><radialGradient id="sg" cx="0.480" cy="0.480" r="0.560"><stop offset="0" stop-color="#d4f77a"/><stop offset="0.180" stop-color="#a6e32a"/><stop offset="0.700" stop-color="#86cc14"/><stop offset="0.920" stop-color="#5fa00c"/><stop offset="1" stop-color="#3d6d06"/></radialGradient></defs><g fill="none" stroke-width="1.250" stroke-linecap="round"><path stroke="#858585" d="M846.6 487.4L849.5 485.3M849.5 485.3L852.8 485.1M852.8 485.1L856.1 484.9M856.1 484.9L857.7 487.1M857.7 487.1L859.4 489.3M849.5 485.3L848 482.6M848 482.6L846.5 480M846.5 480L844.7 482M846.5 480L848.7 477.2M849.7 471.6L848.4 468.8M848.4 468.8L845.3 468.4M845.3 468.4L842.1 468.1M842.1 468.1L840.5 470.4M842.1 468.1L841 465.6M848.4 468.8L850.7 467M850.7 467L852.9 465.2M852.9 465.2L853.7 467.5M852.9 465.2L852 462.1M854 460.4L856.9 461.9M856.9 461.9L856.6 465.2M856.6 465.2L856.4 468.4M856.4 468.4L854.1 470.2M854.1 470.2L851.9 472.1M851.9 472.1L851.3 474.7M851.3 474.7L850.7 477.3M850.7 477.3L852.4 478.8M850.7 477.3L848.1 478.1M856.9 461.9L859.1 459.6M859.1 459.6L861.2 457.2M861.2 457.2L858.7 456.1M861.2 457.2L864 458.9M867.1 457.7L867.5 454.8M867.5 454.8L865.6 456.7M865.6 456.7L863.8 458.6M867.5 454.8L866.4 457.6M866.4 457.6L865.4 460.4M865.4 460.4L863.2 458.6M865.4 460.4L868.2 459.9M872.2 462.2L873.3 465M873.3 465L871 463.4M866 462.8L863.2 463.8M863.2 463.8L860.6 462.4M860.6 462.4L858 461M858 461L855.2 461.8M873.3 465L874.6 462.2M874.6 462.2L875.9 459.4M875.9 459.4L872.9 459.1M875.9 459.4L878.4 461.5M882.5 460.4L884.2 457.3M884.2 457.3L882.6 454.6M882.6 454.6L881.1 451.9M881.1 451.9L878.2 450.8M878.2 450.8L875.3 449.7M875.3 449.7L874 446.6M884.2 457.3L887.1 457.3M887.1 457.3L890 457.4M890 457.4L889.1 459.9M890 457.4L889.5 453.8M891.1 448L893.2 445.8M893.2 445.8L892.5 448.6M892.5 448.6L891.9 451.4M891.9 451.4L894 453.3M894 453.3L896 455.3M896 455.3L895.8 457.9M895.8 457.9L895.7 460.5M895.7 460.5L897.7 462.2M897.7 462.2L899.7 464M899.7 464L899.1 467.1M893.2 445.8L891.3 443M891.3 443L889.5 440.2M889.5 440.2L887.7 442.5M889.5 440.2L891.9 438.5M892.6 433.9L890.9 430.8M890.9 430.8L887.8 431.9M887.8 431.9L884.8 432.9M884.8 432.9L883.7 435.7M883.7 435.7L882.6 438.5M882.6 438.5L879.7 439.2M879.7 439.2L876.7 439.9M876.7 439.9L876 442.4M876.7 439.9L875.1 438.2M890.9 430.8L894.1 429.9M894.1 429.9L897.3 428.9M897.3 428.9L897.2 431.9M897.3 428.9L896.5 426.1M683.5 346.3L686.5 346.7M686.5 346.7L687.6 349.6M687.6 349.6L688.7 352.5M688.7 352.5L686.4 355M686.4 355L684.2 357.5M686.5 346.7L687.9 343.9M687.9 343.9L689.2 341.1M689.2 341.1L686.2 340.7M689.2 341.1L691.1 343.7M695.9 346L698.7 345.7M698.7 345.7L695.7 345.6M695.7 345.6L692.7 345.4M692.7 345.4L690.3 343.3M690.3 343.3L687.9 341.3M687.9 341.3L685.2 342.4M685.2 342.4L682.6 343.5M682.6 343.5L679.3 342.6M679.3 342.6L676.1 341.7M698.7 345.7L700.6 348.1M700.6 348.1L702.4 350.5M702.4 350.5L700 351.3M702.4 350.5L702.8 347.3M706.6 344.6L710 345.2M710 345.2L711.8 347.1M711.8 347.1L713.7 348.9M710 345.2L710.3 341.6M710.3 341.6L710.6 338.1M710.6 338.1L707.8 338.8M710.6 338.1L713.4 338.2M716.9 335.1L717.5 331.9M717.5 331.9L714.6 330M714.6 330L711.7 328M711.7 328L709.1 328.8M709.1 328.8L706.5 329.6M717.5 331.9L720.1 333.6M720.1 333.6L722.7 335.3M722.7 335.3L720.7 336.9M722.7 335.3L722.8 331.9M726 329.8L729.3 331.1M729.3 331.1L729.3 328M729.3 328L729.3 324.9M729.3 324.9L726.8 325.8M729.3 324.9L731.9 323.5M734 319L733.5 316.1M733.5 316.1L730.7 314.4M730.7 314.4L728 312.7M728 312.7L725.1 313.3M725.1 313.3L722.1 313.8M722.1 313.8L719.2 312.2M719.2 312.2L716.2 310.6M716.2 310.6L712.9 311M712.9 311L709.5 311.4M733.5 316.1L736.3 315.1M736.3 315.1L739.2 314.2M739.2 314.2L739.2 316.9M739.2 314.2L738.2 311.3M740.5 308.7L743.7 309M743.7 309L744.2 312.1M743.7 309L743.1 305.9M743.1 305.9L742.5 302.8M742.5 302.8L740.3 304M603.6 516.5L607.2 516.9M607.2 516.9L610.1 515.2M610.1 515.2L613.1 513.4M613.1 513.4L610.7 511.4M613.1 513.4L611.5 516.1M613.2 518.4L616.4 518.1M616.4 518.1L613.8 516.3M613.8 516.3L611.2 514.6M611.2 514.6L610.9 512M610.9 512L610.6 509.4M610.6 509.4L607.4 508.2M607.4 508.2L604.3 507M604.3 507L603.4 504.3M603.4 504.3L602.5 501.6M616.4 518.1L616.9 521.7M616.9 521.7L617.3 525.3M617.3 525.3L614.3 524.7M617.3 525.3L619.7 523.5M622.4 525.1L622.7 528.5M622.7 528.5L621.2 526.1M617.2 523.3L614.6 523M614.6 523L614 520.6M614 520.6L613.5 518.2M613.5 518.2L615.7 516.9M615.7 516.9L617.9 515.6M617.9 515.6L619.9 517.3M619.9 517.3L621.8 519.1M621.8 519.1L620.8 521.4M622.7 528.5L625.6 529.7M625.6 529.7L628.5 530.9M628.5 530.9L628.6 528.2M628.5 530.9L627.4 533.7M628.7 538.4L631 540.3M631 540.3L629.2 537.3M629.2 537.3L627.3 534.4M627.3 534.4L628.4 531.6M628.4 531.6L629.4 528.8M631 540.3L628.5 541.8M628.5 541.8L625.9 543.3M625.9 543.3L625.4 540.5M625.9 543.3L626.7 546.3M624.8 550.8L622 552.3M622 552.3L623.1 555M623.1 555L624.2 557.7M624.2 557.7L626.3 555.8M624.2 557.7L621.6 559.7M620.7 564L622.5 566.3M622.5 566.3L625.6 566.7M631.1 565.4L633.5 563.7M633.5 563.7L636.2 564.1M636.2 564.1L638.9 564.5M622.5 566.3L619.5 568.3M619.5 568.3L616.5 570.4M616.5 570.4L615.7 567.7M616.5 570.4L618.5 572.9M617.6 575.2L614.8 575M614.8 575L617.6 574M617.6 574L620.4 573M620.4 573L622.2 570.1M622.2 570.1L624 567.1M624 567.1L626.7 566.4M626.7 566.4L629.5 565.7M629.5 565.7L631 563.5M631 563.5L632.5 561.3M632.5 561.3L635.7 561M614.8 575L616.1 577.7M616.1 577.7L617.4 580.4M617.4 580.4L619.4 578.5M617.4 580.4L615.1 582.6M613.3 587.7L613.8 590.8M613.8 590.8L611.5 592.5M611.5 592.5L609.2 594.2M609.2 594.2L608.5 591.7M529.9 476.6L529.9 473.2M529.9 473.2L530.7 476.5M530.7 476.5L531.4 479.8M531.4 479.8L533.8 481.1M533.8 481.1L536.2 482.5M529.9 473.2L526.9 474.8M526.9 474.8L524 476.4M524 476.4L526.1 478.4M524 476.4L522.4 473.2M519.1 466.7L517.4 463.5M517.4 463.5L517.9 466.1M517.9 466.1L518.3 468.8M518.3 468.8L516.1 471.2M516.1 471.2L513.9 473.6M513.9 473.6L514.4 476.2M514.4 476.2L514.9 478.8M514.9 478.8L517.2 479.6M514.9 478.8L513.1 480.4M517.4 463.5L520.5 465.4M520.5 465.4L523.6 467.3M523.6 467.3L521.2 469.3M523.6 467.3L524.8 464.8M529.2 463L532.3 463.9M532.3 463.9L534.1 466.8M534.1 466.8L535.8 469.8M535.8 469.8L534.6 472.2M534.6 472.2L533.4 474.6M533.4 474.6L534.6 477.2M534.6 477.2L535.8 479.8M535.8 479.8L534 482.2M534 482.2L532.2 484.6M532.2 484.6L533.2 486.8M532.2 484.6L530.1 484.4M532.3 463.9L533.7 461.3M533.7 461.3L535.1 458.8M535.1 458.8L532.3 458.3M535.1 458.8L538.8 458.5M542.5 455.4L542.5 452.6M542.5 452.6L541 455.1M541 455.1L539.4 457.7M539.4 457.7L536 458M536 458L532.6 458.4M532.6 458.4L531.3 461.5M542.5 452.6L545.4 452.4M545.4 452.4L548.3 452.1M548.3 452.1L547.6 455.1M548.3 452.1L545.9 449.7M544.9 444.6L546.2 441.9M546.2 441.9L545 444.9M545 444.9L543.8 447.9M543.8 447.9L544.9 451.2M544.9 451.2L546.1 454.4M546.1 454.4L544.8 457.2M544.8 457.2L543.4 460M543.4 460L544.1 463.1M546.2 441.9L543.9 439.5M543.9 439.5L541.5 437.2M541.5 437.2L540.3 439.7M541.5 437.2L544.2 435.5M544.1 431.7L541.3 429.5M541.3 429.5L543.2 427.2M543.2 427.2L545 424.9M545 424.9L546.6 427.4M698.3 338.9L699.8 341.5M699.8 341.5L697.6 343.7M697.6 343.7L695.5 345.9M699.8 341.5L702.4 340.4M702.4 340.4L705.1 339.4M705.1 339.4L703.2 337.1M705.1 339.4L706.7 342.1M705.4 345.9L702.4 347.1M702.4 347.1L705.1 347.7M705.1 347.7L707.7 348.3M707.7 348.3L709 351.1M709 351.1L710.3 354M702.4 347.1L699 346.6M699 346.6L695.6 346.1M695.6 346.1L696.8 343.7M695.6 346.1L698.2 347.9M697.7 350.3L694.6 350.9M694.6 350.9L692.6 348.7M694.6 350.9L694.2 353.7M694.2 353.7L693.7 356.6M693.7 356.6L696.6 356M693.7 356.6L690.7 356.3M686.5 358.9L685.3 361.8M685.3 361.8L686.5 364.5M686.5 364.5L687.6 367.2M687.6 367.2L690.7 367.8M690.7 367.8L693.8 368.5M693.8 368.5L695.3 366.9M693.8 368.5L694.6 371.1M685.3 361.8L682.5 359.6M682.5 359.6L679.8 357.3M679.8 357.3L681.9 356M679.8 357.3L677.1 359.5M674.8 358.2L675.1 354.6M675.1 354.6L672.2 355.6M672.2 355.6L669.3 356.6M669.3 356.6L671 358.8M669.3 356.6L668.4 353.3M664.1 349.8L660.6 349.6M660.6 349.6L663.3 350.1M663.3 350.1L665.9 350.5M665.9 350.5L667.7 352.6M667.7 352.6L669.5 354.7M669.5 354.7L672.3 355.2M660.6 349.6L662.1 347.2M662.1 347.2L663.6 344.8M663.6 344.8L665.4 346.9M663.6 344.8L661.3 342.9M660.5 338.3L662 335.7M662 335.7L662.1 338.9M664.4 343.7L666.6 345.3M666.6 345.3L665.9 347.2M665.9 347.2L665.2 349.2M665.2 349.2L662.7 349.5M662.7 349.5L660.1 349.8M660.1 349.8L659.2 347.6M662 335.7L659.2 336.1M659.2 336.1L656.4 336.5M656.4 336.5L657.8 339.2M656.4 336.5L655.6 333.5M651.8 332.7L648.9 334.8M648.9 334.8L649.1 338.3M649.1 338.3L649.3 341.7M649.3 341.7L652.2 343.4M652.2 343.4L655.1 345.1M647.4 320.2L644 321.6M644 321.6L646.9 319.7M646.9 319.7L649.7 317.7M649.7 317.7L650.3 314.7M650.3 314.7L650.9 311.6M650.9 311.6L652.8 309.9M652.8 309.9L654.7 308.1M644 321.6L645.1 325M645.1 325L646.3 328.3M646.3 328.3L648.3 326.8M646.3 328.3L642.6 328.2M638.3 330.9L637.6 333.7M637.6 333.7L639.9 332.2M639.9 332.2L642.2 330.8M642.2 330.8L645.1 331.1M645.1 331.1L647.9 331.5M647.9 331.5L650.3 329M650.3 329L652.6 326.4M652.6 326.4L655.9 327.3M655.9 327.3L659.3 328.2M659.3 328.2L661.3 326.4M637.6 333.7L634.6 333.5M634.6 333.5L631.7 333.2M631.7 333.2L632.9 330.5M631.7 333.2L630.2 336.3M626.3 341.3L623.8 343.2M623.8 343.2L622 341.1M622 341.1L620.2 339M620.2 339L621 336.4M621 336.4L621.9 333.9M621.9 333.9L619.8 331.7M619.8 331.7L617.8 329.5M617.8 329.5L618.8 326.4M618.8 326.4L619.8 323.4M623.8 343.2L625.3 346.4M625.3 346.4L626.7 349.5M626.7 349.5L628.6 347.8M626.7 349.5L623.4 349.3M621.2 351.7L622.2 354.3M622.2 354.3L621.7 351.2M621.7 351.2L621.3 348M622.2 354.3L619 354.2M619 354.2L615.7 354.1M615.7 354.1L616.7 351.4M615.7 354.1L615.6 357.5M612.1 360.3L608.7 359.8M608.7 359.8L607.1 356.7M607.1 356.7L605.4 353.7M605.4 353.7L606.7 351.2M606.7 351.2L607.9 348.6M607.9 348.6L607 345.9M607 345.9L606.1 343.1M606.1 343.1L607.8 340.1M607.8 340.1L609.5 337M608.7 359.8L609.7 362.7M609.7 362.7L610.6 365.6M610.6 365.6L612.9 363.9M610.6 365.6L608.8 363.3M605.7 363.8L604.4 366.5M604.4 366.5L600.8 365.9M600.8 365.9L597.2 365.3M597.2 365.3L598.5 362.8M597.2 365.3L598.8 368.3M597.3 371.1L594.1 370.9M594.1 370.9L593.5 368.4M593.5 368.4L592.9 365.8M592.9 365.8L594.3 362.7M594.3 357.4L592.8 355.4M592.8 355.4L593.8 353.4M597.3 351.3L599.8 351.3M599.8 351.3L601.3 352.9M601.3 352.9L602.8 354.5M602.8 354.5L601.7 356.7M601.7 356.7L600.7 358.8M600.7 358.8L598.2 359.1M594.1 370.9L593.7 373.8M593.7 373.8L593.4 376.7M593.4 376.7L596 376.1M593.4 376.7L590 378.1M587.8 382.5L588.9 385.4M588.9 385.4L589.4 381.9M589.4 381.9L589.9 378.5M589.9 378.5L591.8 376.7M591.8 376.7L593.8 375M593.8 375L593.7 372.3M543.6 418.7L546.6 418.7M546.6 418.7L546.7 421.5M546.7 421.5L546.8 424.3M546.8 424.3L544.2 426.2M543.8 435.2L546 436.6M546 436.6L546.1 438.7M546.1 438.7L546.2 440.7M546.2 440.7L544.1 441.7M544.1 441.7L541.9 442.7M541.9 442.7L539.7 441.8M537.5 438.8L537.4 436.8M537.4 436.8L539.5 435.3M546.6 418.7L546.6 415.1M546.6 415.1L546.6 411.4M546.6 411.4L544 412.3M546.6 411.4L549.5 413.5M551.7 412.2L551 408.9M551 408.9L550.6 411.8M550.6 411.8L550.2 414.7M550.2 414.7L547.6 416.1M547.6 416.1L545 417.4M545 417.4L544.1 420.4M544.1 420.4L543.3 423.4M543.3 423.4L540 424.2M540 424.2L536.6 425M551 408.9L554 409.4M554 409.4L557 410M557 410L555.6 412.5M557 410L557.6 406.4M560.8 404.1L563.5 405.5M563.5 405.5L560.1 406M560.1 406L556.8 406.6M556.8 406.6L555.4 409.1M555.4 409.1L553.9 411.6M553.9 411.6L550.6 412.5M550.6 412.5L547.4 413.3M547.4 413.3L546.7 416M542.9 419.6L539.9 420.7M539.9 420.7L539.4 423.3M539.9 420.7L538.1 419.1M563.5 405.5L565.3 402.8M565.3 402.8L567.1 400.2M567.1 400.2L564.5 399.4M567.1 400.2L570.2 401.4M571.4 399.6L569.7 396.6M569.7 396.6L566.7 395.1M566.7 395.1L563.8 393.6M563.8 393.6L560.6 394.4M560.6 394.4L557.4 395.1M557.4 395.1L554.4 393.6M548.6 393L545.8 394M545.8 394L543.7 392.2M569.7 396.6L572 394.4M572 394.4L574.3 392.1M574.3 392.1L575.6 394.8M574.3 392.1L576.8 389.6M582.6 388.5L586 389.8M586 389.8L583.4 391.4M583.4 391.4L580.8 392.9M586 389.8L587 386.8M587 386.8L588.1 383.7M588.1 383.7L585.4 383.7M884.8 255.2L881.9 254.9M881.9 254.9L884.4 256.6M884.4 256.6L886.8 258.3M886.8 258.3L887.5 255.7M886.8 258.3L884.9 261.4M886 263.9L889 263.4M889 263.4L890.3 261M889 263.4L890.6 265.7M890.6 265.7L892.2 268M892.2 268L889.5 268.8M892.2 268L895.4 268.9M897.8 273.2L897 276.5M897 276.5L893.8 277.4M893.8 277.4L890.5 278.4M890.5 278.4L887.6 276.7M887.6 276.7L884.7 274.9M884.7 274.9L882 275.1M882 275.1L879.4 275.3M879.4 275.3L877.3 273.2M867.5 266.5L868.2 264.4M868.2 264.4L870.6 264.1M870.6 264.1L873 263.8M873 263.8L874.8 265.1M874.8 265.1L876.6 266.5M876.6 266.5L875.9 268.8M897 276.5L900.3 276.2M900.3 276.2L903.5 276M903.5 276L902.4 273.5M903.5 276L904.6 278.9M908.6 281.1L911.4 280.3M911.4 280.3L909.1 278.9M909.1 278.9L906.8 277.5M906.8 277.5L906.6 274.4M906.6 274.4L906.5 271.3M906.5 271.3L904 269.7M904 269.7L901.5 268.1M901.5 268.1L900.3 264.9M900.3 264.9L899.2 261.6M899.2 261.6L896.6 260.2M911.4 280.3L911.9 283.3M911.9 283.3L912.3 286.3M912.3 286.3L909.3 285.8M912.3 286.3L913.4 283.6M913.9 284.4L913.4 287.8M913.4 287.8L910.2 288.9M910.2 288.9L907.1 290M907.1 290L904.2 288.7M904.2 288.7L901.3 287.5M913.4 287.8L916.3 286.4M916.3 286.4L919.1 285M919.1 285L917.1 283.1M919.1 285L921.3 287.4M926.5 288.6L929.5 287.4M929.5 287.4L926.9 286.5M926.9 286.5L924.4 285.6M924.4 285.6L922.4 282.8M922.4 282.8L920.4 280M920.4 280L916.9 280M916.9 280L913.5 279.9M913.5 279.9L912.3 281.9M913.5 279.9L912.2 277.6M929.5 287.4L931.2 290.6M931.2 290.6L932.9 293.8M932.9 293.8L929.9 294.3M932.9 293.8L935.5 296.1M934.7 298.7L931.4 299M931.4 299L933.3 296.7M933.3 296.7L935.2 294.4M935.2 294.4L934.3 291.8M934.3 291.8L933.3 289.3M933.3 289.3L930.6 288.9M933.3 289.3L934.9 287.4M931.4 299L933.5 301.5M933.5 301.5L935.7 304M935.7 304L937 301.7M935.7 304L932.4 304M931.3 306.5L933.5 309M933.5 309L933.8 305.5M933.8 305.5L934.1 302.1M934.1 302.1L936.3 299.7M936.3 299.7L938.5 297.4M938.5 297.4L938.7 294.8M938.7 294.8L938.9 292.2M938.9 292.2L937.1 291M938.9 292.2L940.9 291.2M933.5 309L931.9 311.5M931.9 311.5L930.3 314M930.3 314L928.7 312M930.3 314L932.9 316.6M932.9 320.5L930.4 321.8M930.4 321.8L931.2 325.1M931.2 325.1L932 328.5M932 328.5L934.4 326.9M932 328.5L929 329.7M927.5 334L929 337.2M929 337.2L929.1 333.9M929.1 333.9L929.2 330.6M929.2 330.6L931.7 329M931.7 329L934.1 327.3M934.1 327.3L934.6 323.9M929 337.2L925.7 338.7M925.7 338.7L922.5 340.3M922.5 340.3L922.1 337.4M922.5 340.3L925 341.8M924.3 345L921 346.6M921 346.6L917.6 346.3M917.6 346.3L914.1 346M914.1 346L912.2 343.1M912.2 343.1L910.3 340.2M910.3 340.2L907.6 339.7M907.6 339.7L905 339.1M905 339.1L904.3 336.5M921 346.6L923.9 347.9M923.9 347.9L926.8 349.2M926.8 349.2L927.1 346.3M926.8 349.2L925.1 352.2M927 354L930.5 352.9M930.5 352.9L932.3 351M932.3 351L934.1 349.1M934.1 349.1L933.6 345.8M933.6 345.8L933 342.5M933 342.5L934.4 340M934.4 340L935.9 337.5M935.9 337.5L934.6 335.3M934.5 331.3L935.7 329.5M935.7 329.5L938.2 329.3M938.2 329.3L940.7 329M940.7 329L942 331M938.4 336.9L935.9 337.5M930.5 352.9L929.3 355.9M929.3 355.9L928 358.9M928 358.9L926 357.1M928 358.9L930.5 360.8M797.1 523.8L796 521.2M796 521.2L798.4 522.8M798.4 522.8L800.9 524.5M800.9 524.5L803.1 523.8M803.1 523.8L805.4 523.1M805.4 523.1L807.4 524.4M807.4 524.4L809.5 525.7M809.5 525.7L809.3 527.8M809.3 527.8L809.1 529.8M809.1 529.8L806.8 531M806.8 531L804.6 532.2M804.6 532.2L802.5 530.7M802.5 530.7L800.5 529.3M800.5 529.3L800.7 526.9M800.7 526.9L800.9 524.5M796 521.2L794.6 523.9M794.6 523.9L793.2 526.6M793.2 526.6L795.7 527M793.2 526.6L790.3 526.8M787.9 530.5L788.4 533.9M788.4 533.9L790.2 531.1M790.2 531.1L792.1 528.2M792.1 528.2L791 526.1M792.1 528.2L794.8 528.3M788.4 533.9L785.2 533.6M785.2 533.6L782 533.4M782 533.4L783.2 530.7M782 533.4L782.1 537.1M779.3 539.7L776.4 538.7M776.4 538.7L779.4 538.5M779.4 538.5L782.5 538.2M782.5 538.2L784.7 536.3M784.7 536.3L787 534.3M787 534.3L790.4 534.3M776.4 538.7L776.7 542.3M776.7 542.3L777 545.8M777 545.8L779.8 544.6M777 545.8L774.6 544.1M772.2 545.6L772.4 548.9M772.4 548.9L774.5 546.8M774.5 546.8L776.7 544.7M776.7 544.7L779.7 544.8M779.7 544.8L782.8 544.9M782.8 544.9L784.6 542M784.6 542L786.4 539.1M786.4 539.1L789.2 539.3M789.2 539.3L791.9 539.5M772.4 548.9L769.6 547.4M769.6 547.4L766.9 545.8M766.9 545.8L768.9 544M766.9 545.8L767.6 549.4M764.9 553.8L761.5 554.5M761.5 554.5L763.9 552.8M763.9 552.8L766.3 551M766.3 551L766.2 548.2M766.2 548.2L766.1 545.5M766.1 545.5L767.6 543.2M767.6 543.2L769.2 541M761.5 554.5L758.9 555.9M758.9 555.9L756.4 557.3M756.4 557.3L758.5 559.3M756.4 557.3L754.6 554.5M749.7 552.3L746.6 553M746.6 553L745 555.6M745 555.6L743.4 558.1M743.4 558.1L744.1 561.4M744.1 561.4L744.8 564.6M744.8 564.6L747.3 565.4M744.8 564.6L742.9 566.3M746.6 553L746 549.9M746 549.9L745.4 546.9M745.4 546.9L748.3 547.4M745.4 546.9L742.6 545.8M741 541.4L742.2 538.1M742.2 538.1L745 537.3M745 537.3L747.8 536.5M747.8 536.5L750 538.8M750 538.8L752.3 541M752.3 541L755.5 540M742.2 538.1L738.8 538.6M738.8 538.6L735.4 539.2M735.4 539.2L736.6 541.3M735.4 539.2L735.5 536.1M732.2 532.3L728.8 531.6M728.8 531.6L726.8 534M728.8 531.6L725.7 530.2M725.7 530.2L722.7 528.7M722.7 528.7L724.6 526.7M722.7 528.7L720.8 531.1M716.6 531.9L714.2 530.2M714.2 530.2L716.9 530.4M716.9 530.4L719.6 530.7M719.6 530.7L721.7 528.8M721.7 528.8L723.9 526.9M723.9 526.9L727 527.2M727 527.2L730.2 527.5M730.2 527.5L732 525M732 525L733.8 522.6M733.8 522.6L736.5 523M714.2 530.2L712.9 533.2M712.9 533.2L711.6 536.3M711.6 536.3L714.4 536.5M711.6 536.3L708.4 535.1M704.1 536.9L703 539.9M703 539.9L705 538.2M705 538.2L707 536.5M707 536.5L709.7 537.5M709.7 537.5L712.3 538.5M712.3 538.5L714.8 537.4M714.8 537.4L717.2 536.4M703 539.9L700.2 539.8M700.2 539.8L697.3 539.6M697.3 539.6L698.4 536.9M697.3 539.6L696 542.4M568 382.6L571.5 382.1M571.5 382.1L571.4 378.8M571.4 378.8L571.3 375.5M571.3 375.5L569.1 376.3M571.3 375.5L573.8 377.5M579.9 378.6L583.4 377.6M583.4 377.6L580.4 376.8M580.4 376.8L577.5 376M577.5 376L575.6 373.7M575.6 373.7L573.7 371.4M573.7 371.4L570.4 370.7M570.4 370.7L567.1 370.1M583.4 377.6L582.3 380.8M582.3 380.8L581.2 383.9M581.2 383.9L578.8 382.1M581.2 383.9L584.4 383.1M590.8 383.6L594 384.8M594 384.8L595.4 387.3M595.4 387.3L596.8 389.8M596.8 389.8L595 392.5M595 392.5L593.2 395.2M593.2 395.2L594.5 398M594 384.8L592.5 381.6M592.5 381.6L590.9 378.4M590.9 378.4L589.2 380.1M590.9 378.4L594.5 378.6M597.6 375.6L597.2 372.4M597.2 372.4L600.7 373.4M600.7 373.4L604.2 374.4M604.2 374.4L602.7 376.6M604.2 374.4L602.6 371.9M604 367.5L607.2 365.6M607.2 365.6L610 366.8M610 366.8L612.8 367.9M612.8 367.9L613.1 371.3M613.1 371.3L613.5 374.8M613.5 374.8L616 376.2M616 376.2L618.6 377.6M618.6 377.6L619.7 380.6M623.3 384.2L625.8 384.9M625.8 384.9L625.9 387.4M625.9 387.4L626.1 389.9M626.1 389.9L623.6 390.4M623.6 390.4L621.2 390.9M621.2 390.9L619.6 389.4M619.6 389.4L618 387.8M618 387.8L619.4 385.7M607.2 365.6L605.5 362.6M605.5 362.6L603.9 359.5M603.9 359.5L602 361.5M603.9 359.5L606.8 358.6M608.9 354.4L608.1 351.1M608.1 351.1L606.3 353.3M606.3 353.3L604.4 355.5M604.4 355.5L601.8 355M608.1 351.1L611.5 350.7M611.5 350.7L615 350.3M615 350.3L614.4 353.1M806.5 243.4L803.4 245.2M803.4 245.2L804 241.9M803.4 245.2L801.2 247.6M801.2 247.6L799 250.1M799 250.1L801.7 251.2M799 250.1L797.5 247.6M794.5 247.9L793.1 250.6M793.1 250.6L795.9 252.3M795.9 252.3L798.7 254M798.7 254L802.1 253M802.1 253L805.4 252M805.4 252L808 253.1M793.1 250.6L791.1 247.8M791.1 247.8L789.2 245.1M789.2 245.1L792 244.3M789.2 245.1L786.9 248M781.5 249.7L778.4 248.6M778.4 248.6L777.5 245.9M777.5 245.9L776.5 243.3M776.5 243.3L778.8 240.7M778.8 240.7L781 238.1M781 238.1L781.3 234.9M781.3 234.9L781.5 231.7M781.5 231.7L784.4 230.3M778.4 248.6L777.6 251.6M777.6 251.6L776.8 254.5M776.8 254.5L779.6 254.3M776.8 254.5L773.6 254M769.8 256.3L769.2 259.2M769.2 259.2L771.3 256.9M771.3 256.9L773.3 254.6M769.2 259.2L766.4 257.5M766.4 257.5L763.5 255.9M763.5 255.9L765.8 253.9M763.5 255.9L764.5 259.1M762.2 261.3L759 260.3M759 260.3L758.8 257.3M758.8 257.3L758.6 254.2M758.6 254.2L760.3 252.2M760.3 252.2L762 250.1M759 260.3L758.5 263.6M758.5 263.6L758.1 267M758.1 267L760.6 266.5M938.3 373.4L937.2 369.9M937.2 369.9L938.7 372.5M938.7 372.5L940.2 375.1M940.2 375.1L942.9 375.1M940.2 375.1L939.1 377.1M937.2 369.9L934.2 372M934.2 372L931.2 374.2M931.2 374.2L933.7 376M931.2 374.2L932.3 371.6M931.9 366.2L930.5 363.3M930.5 363.3L929.9 366.2M929.9 366.2L929.2 369.1M929.2 369.1L926.9 371.1M926.9 371.1L924.6 373.1M924.6 373.1L925 375.8M925 375.8L925.5 378.5M925.5 378.5L923.3 380.6M923.3 380.6L921.1 382.6M921.1 382.6L921.6 384.9M921.1 382.6L918.6 381.8M930.5 363.3L933.4 363.7M933.4 363.7L936.4 364M936.4 364L935.3 366.3M936.4 364L935.3 360.9M937.5 357.3L940.7 357M940.7 357L943.2 359.3M949.4 373.6L948.7 375.7M948.7 375.7L946.1 376M946.1 376L943.5 376.3M943.5 376.3L942.7 374.1M942.7 374.1L941.8 371.9M941.8 371.9L943.8 370.2M940.7 357L941.2 353.4M941.2 353.4L941.7 349.8M941.7 349.8L939.1 350.3M941.7 349.8L943.4 352M943.2 356.4L941.1 358.5M941.1 358.5L944.2 359.1M944.2 359.1L947.2 359.8M947.2 359.8L949 362.7M949 362.7L950.9 365.6M941.1 358.5L938.5 356.9M938.5 356.9L935.8 355.3M935.8 355.3L937.7 353.7M935.8 355.3L934.5 358.5M934 358.8L934.9 355.8M934.9 355.8L937.8 355.5M943.6 357.3L946.4 359.4M946.4 359.4L949.2 358.8M949.2 358.8L952 358.3M952 358.3L954.1 360.8M954.1 360.8L956.2 363.2M934.9 355.8L932 354.8M932 354.8L929.1 353.9M929.1 353.9L929.1 356.4M929.1 353.9L929.3 351.1M926.2 347L922.9 345.8M922.9 345.8L925.2 347.2M925.2 347.2L927.5 348.5M927.5 348.5L927.4 351.3M927.4 351.3L927.3 354.1M927.3 354.1L929.5 355.7M933.9 356.6L936.2 356.1M936.2 356.1L938.2 357.2M938.2 357.2L940.2 358.4M940.2 358.4L940 360.5M940 360.5L939.7 362.7M939.7 362.7L937.4 363.7M937.4 363.7L935.1 364.7M935.1 364.7L933.1 363.2M933.1 363.2L931.1 361.8M931.1 361.8L931.4 359.5M810.3 513.3L809.5 510.6M809.5 510.6L810.2 507.6M810.2 507.6L810.9 504.7M810.9 504.7L813.3 502.5M813.3 502.5L815.8 500.3M815.8 500.3L815.4 497.6M809.5 510.6L807.6 512.7M807.6 512.7L805.6 514.8M805.6 514.8L807.8 515.8M805.6 514.8L802.7 513.1M801.4 508.7L803 506M803 506L801.5 503.6M801.5 503.6L800.1 501.2M800.1 501.2L797.6 501.2M793.7 499.1L792.4 497.1M792.4 497.1L793.6 495.1M793.6 495.1L794.8 493M794.8 493L797.3 493.1M797.3 493.1L799.8 493.1M799.8 493.1L801.1 495M801.1 495L802.4 496.8M802.4 496.8L801.2 499M801.2 499L800.1 501.2M803 506L806.4 506.5M806.4 506.5L809.8 507.1M809.8 507.1L808.5 509.4M809.8 507.1L811.7 504.5M815.1 504.2L816.5 506.7M816.5 506.7L815 509.3M810.7 511.9L807.9 511.9M807.9 511.9L806.3 515M806 520.1L807.3 522.3M807.3 522.3L806.1 524.4M806.1 524.4L804.9 526.5M804.9 526.5L802.4 526.6M802.4 526.6L799.9 526.8M799.9 526.8L798.6 524.7M798.6 524.7L797.3 522.6M797.3 522.6L798.5 520.5M798.5 520.5L799.7 518.4M799.7 518.4L802.2 518.2M816.5 506.7L816.9 503.1M816.9 503.1L817.2 499.5M817.2 499.5L814.4 500.2M817.2 499.5L820.8 498.6M822.7 495.4L821.1 493.1M821.1 493.1L818.5 492.3M818.5 492.3L815.8 491.4M815.8 491.4L813.3 492.2M808.8 491.2L806.8 489.3M806.8 489.3L803.8 489.7M803.8 489.7L800.7 490M800.7 490L798.3 487.5M798.3 487.5L796 485M796 485L793.4 485M793.4 485L790.8 485M790.8 485L789.7 483M789.7 483L788.6 481M788.6 481L790.5 479.3M790.5 479.3L792.4 477.7M792.4 477.7L794.7 478.9M794.7 478.9L796.9 480.1M796.9 480.1L796.4 482.6M796.4 482.6L796 485M821.1 493.1L824.4 493.1M824.4 493.1L827.6 493M827.6 493L826.7 495.9M827.6 493L826.5 489.9M828.7 487.2L831.9 487.7M831.9 487.7L828.9 488.1M828.9 488.1L825.9 488.5M831.9 487.7L831.1 484.8M831.1 484.8L830.4 481.8M830.4 481.8L828 483.4M830.4 481.8L832.9 483.1M837.7 481.8L840.1 479.3M840.1 479.3L837.3 481.1M840.1 479.3L840.9 482.6M840.9 482.6L841.7 486M841.7 486L838.7 485.7M841.7 486L843 489.2M841.3 492.5L838.1 492.5M838.1 492.5L840.7 491.8M840.7 491.8L843.2 491.1M838.1 492.5L839.4 495.2M839.4 495.2L840.7 497.8M840.7 497.8L842.8 495.7M840.7 497.8L837.6 497.6M835.3 500.5L836.2 503.5M836.2 503.5L836.8 500.4M836.8 500.4L837.3 497.2M837.3 497.2L839.8 496M839.8 496L842.3 494.7M842.3 494.7L843.3 491.8M836.2 503.5L832.7 504.3M832.7 504.3L829.1 505M829.1 505L829.5 502M829.1 505L829.8 508.3M827.6 512.3L824.8 513M824.8 513L827.1 510.9M827.1 510.9L829.4 508.9M824.8 513L826 515.7M826 515.7L827.2 518.5M827.2 518.5L829.3 516.6M689 397.2L685.6 398.1M685.6 398.1L684 395.2M684 395.2L682.3 392.3M682.3 392.3L683.3 389.5M683.3 389.5L684.3 386.8M684.3 386.8L683.3 384.3M683.3 384.3L682.4 381.8M682.4 381.8L683.1 378.9M683.1 378.9L683.8 376M683.8 376L682 374.2M683.8 376L686.3 375.3M685.6 398.1L686.4 401.7M686.4 401.7L687.2 405.2M687.2 405.2L689.4 403.9M687.2 405.2L685.1 407.2M685 411.4L686.9 413.8M686.9 413.8L689.7 412.2M689.7 412.2L692.4 410.5M692.4 410.5L693.3 408M693.3 408L694.2 405.4M694.2 405.4L692.6 403.5M692.6 403.5L691 401.6M691 401.6L691.8 399.4M700 401.8L699.1 403.6M699.1 403.6L696.7 404.5M696.7 404.5L694.2 405.4M686.9 413.8L684.5 415.3M684.5 415.3L682 416.8M682 416.8L681.5 414.1M682 416.8L682.2 419.8M679.1 424.2L675.8 425.7M675.8 425.7L678.3 424M678.3 424L680.9 422.4M680.9 422.4L681.8 419.7M681.8 419.7L682.7 417M682.7 417L685.9 415.7M690.6 411.5L692.1 408.5M692.1 408.5L694.9 408.1M694.9 408.1L697.8 407.6M697.8 407.6L698.6 405.4M698.6 405.4L699.5 403.2M699.5 403.2L702 402.9M706 404.3L707.6 406.1M707.6 406.1L706.8 408M706.8 408L705.9 410M705.9 410L703.4 410.3M703.4 410.3L701 410.5M701 410.5L699.4 409.1M699.4 409.1L697.8 407.6M675.8 425.7L676.4 428.8M676.4 428.8L677.1 431.8M677.1 431.8L679.2 430.5M677.1 431.8L674.2 433.1M674 436.8L676.7 439.1M676.7 439.1L674.2 441.6M674.2 441.6L671.8 444.1M671.8 444.1L670.5 441.6M671.8 444.1L673.8 446.4M674 451.1L672.2 453.5M672.2 453.5L669.6 454.1M669.6 454.1L666.9 454.6M666.9 454.6L664.7 452.9M664.7 452.9L662.4 451.2M662.4 451.2L659.6 451.9M659.6 451.9L656.8 452.7M656.8 452.7L653.9 450.8M653.9 450.8L651 449M651 449L648.1 450M672.2 453.5L675.5 455.2M675.5 455.2L678.8 456.8M678.8 456.8L679.1 454.3M678.8 456.8L677.1 459.4M678.2 463.4L681 464.9M681 464.9L682.9 462.4M682.9 462.4L684.9 460M684.9 460L684.2 457.4M681 464.9L679.2 467.3M679.2 467.3L677.4 469.7M677.4 469.7L675.9 467.6M677.4 469.7L680 472.1M681.2 477.4L679.7 480.2M679.7 480.2L676.6 480.2M679.7 480.2L682.6 481.9M682.6 481.9L685.5 483.6M685.5 483.6L686 480.8M685.5 483.6L682.4 484.9M680 489.6L680.7 493.1M680.7 493.1L681.1 490.2M681.1 490.2L681.4 487.3M681.4 487.3L683.5 485.5M683.5 485.5L685.6 483.8M685.6 483.8L686 481M686 481L686.5 478.3M686.5 478.3L684.6 476.8M686.5 478.3L688.8 477.3M680.7 493.1L677.9 493.2M677.9 493.2L675.1 493.3M675.1 493.3L675.9 490.7M675.1 493.3L673.6 496.1M668.5 498.3L664.8 497.7M664.8 497.7L663.3 494.9M663.3 494.9L661.8 492.2M661.8 492.2L662.8 489.1M662.8 489.1L663.8 486M663.8 486L662.5 483.5M664.8 497.7L662.2 500.2M662.2 500.2L659.6 502.7M659.6 502.7L661.8 503.9M659.6 502.7L656.5 500.8M653 502L652.6 505.3M652.6 505.3L654.5 502.5M654.5 502.5L656.5 499.7M656.5 499.7L659.6 499.9M659.6 499.9L662.8 500.2M652.6 505.3L649.7 504.1M649.7 504.1L646.8 502.8M646.8 502.8L648.5 500.9M791.6 335.3L790.3 338.5M790.3 338.5L790.1 335.9M790.1 335.9L789.9 333.2M789.9 333.2L787.4 332M783.4 327.7L782 324.6M782 324.6L779.3 323.5M779.3 323.5L776.5 322.5M790.3 338.5L792.6 340.6M792.6 340.6L794.9 342.7M794.9 342.7L795.9 340.3M794.9 342.7L793.5 345.8M794.7 351.1L797.4 353.3M797.4 353.3L799.9 352.2M799.9 352.2L802.5 351M802.5 351L804 348M797.4 353.3L795.7 355.8M795.7 355.8L794.1 358.4M794.1 358.4L792.3 356.1M794.1 358.4L797.4 359.7M799.7 364.1L798.7 367.2M798.7 367.2L798.7 363.7M798.7 363.7L798.7 360.2M798.7 360.2L796.2 358.7M796.2 358.7L793.7 357.3M793.7 357.3L792.7 354.4M792.7 354.4L791.7 351.5M791.7 351.5L788.4 350.6M788.4 350.6L785.1 349.7M785.1 349.7L783.6 351.2M785.1 349.7L784.5 347.4M798.7 367.2L801.6 369.4M801.6 369.4L804.4 371.7M804.4 371.7L805.4 368.8M804.4 371.7L802.9 375M801.9 381.5L802.2 384.7M802.2 384.7L804.6 385.9M804.6 385.9L806.9 387.2M806.9 387.2L809 385.9M806.9 387.2L806.9 390M802.2 384.7L801 388M801 388L799.8 391.4M799.8 391.4L797.9 389.8M799.8 391.4L802.7 392.9M804.5 397.5L803.4 400.5M803.4 400.5L803.9 397.6M803.9 397.6L804.5 394.7M804.5 394.7L802.5 392.9M800.4 387.6L800.2 384.2M800.2 384.2L797.2 382.5M797.2 382.5L794.3 380.9M794.3 380.9L794.4 377.8M813.7 295.2L816.2 292.5M816.2 292.5L815.5 295.4M815.5 295.4L814.9 298.2M814.9 298.2L816.6 300.3M816.6 300.3L818.3 302.4M818.3 302.4L817.5 305.4M817.5 305.4L816.7 308.3M816.7 308.3L818.4 310.2M818.4 310.2L820.2 312M820.2 312L819.5 314.1M819.5 314.1L818.8 316.2M818.8 316.2L816.4 316.7M816.4 316.7L814 317.2M814 317.2L812.2 315.7M812.2 315.7L810.5 314.1M810.5 314.1L811.2 311.9M814.3 309L816.7 308.3M816.2 292.5L812.9 291.8M812.9 291.8L809.6 291.1M809.6 291.1L809.9 294M809.6 291.1L809.8 287.8M806.9 284.4L803.9 284.3M803.9 284.3L801.3 286.2M801.3 286.2L798.7 288.2M798.7 288.2L798.3 291.5M803.9 284.3L802 281.7M802 281.7L800.1 279.2M800.1 279.2L802.7 278.4M800.1 279.2L797.4 280.8M792.9 279.4L791.1 276.3M791.1 276.3L793.9 278M793.9 278L796.7 279.7M791.1 276.3L789.6 279.2M789.6 279.2L788.1 282.1M788.1 282.1L790.8 282.5M788.1 282.1L784.7 281.8M781.9 284.6L782.5 287.7M782.5 287.7L785.2 288.4M785.2 288.4L787.8 289.1M787.8 289.1L789.9 286.7M789.9 286.7L792.1 284.4M782.5 287.7L779.7 287.2M779.7 287.2L776.8 286.7M776.8 286.7L778 284.5M776.8 286.7L777.7 289.8M775.6 294.1L772.8 295.3M772.8 295.3L770.4 293M770.4 293L768.1 290.8M768.1 290.8L768.5 287.7M768.5 287.7L768.9 284.7M768.9 284.7L766.8 282M766.8 282L764.7 279.4M764.7 279.4L764.6 276M772.8 295.3L775.3 297.9M775.3 297.9L777.8 300.5M777.8 300.5L779.2 297.8M777.8 300.5L774.8 302.4M773.5 306.6L775.3 308.9M775.3 308.9L777.9 307.6M775.3 308.9L772.5 311.2M772.5 311.2L769.6 313.4M769.6 313.4L768.7 311M769.6 313.4L769.9 316.9M766.7 320.6L763.3 321M763.3 321L765 318.8M765 318.8L766.6 316.7M766.6 316.7L765.8 313.9M765.8 313.9L765 311.1M765 311.1L766.3 307.9M766.3 307.9L767.7 304.7M767.7 304.7L766.9 301.7M766.9 301.7L766.1 298.7M766.1 298.7L768.2 296.1M763.3 321L763.5 323.9M763.5 323.9L763.7 326.7M763.7 326.7L766.1 325.7M763.7 326.7L760.3 327.1M756.6 330.4L756.2 333.3M756.2 333.3L757.8 330.8M757.8 330.8L759.3 328.4M759.3 328.4L758.1 326.2M759.3 328.4L762 328.4M756.2 333.3L753.4 333.2M753.4 333.2L750.6 333M750.6 333L751.7 330.3M750.6 333L751.5 336.3M750.6 342.3L748.7 345M748.7 345L745.8 345.6M740.8 344L738.5 341.8M738.5 341.8L735.8 342.2M735.8 342.2L733.1 342.6M733.1 342.6L730.6 340.7M730.6 340.7L728 338.9M728 338.9L725.3 339M748.7 345L751.1 347.5M751.1 347.5L753.5 350M753.5 350L754.8 347.6M824.8 338.9L823.8 342.1M823.8 342.1L823.3 339.4M823.3 339.4L822.9 336.6M822.9 336.6L820.1 335.6M823.8 342.1L826.8 343.4M826.8 343.4L829.8 344.6M829.8 344.6L829.9 342M829.8 344.6L828.1 347.7M829 352L831.5 353.3M831.5 353.3L834.6 352.9M834.6 352.9L837.8 352.5M837.8 352.5L839.7 350.2M831.5 353.3L830.1 356.3M830.1 356.3L828.8 359.2M828.8 359.2L826.9 357.4M828.8 359.2L831.9 360.3M833.8 364.2L832.7 367.1M832.7 367.1L829.3 367.1M829.3 367.1L825.9 367.1M832.7 367.1L835.3 368.6M835.3 368.6L837.9 370.1M837.9 370.1L838.4 367.6M837.9 370.1L836.2 373.2M837.7 377.9L840.7 379.5M840.7 379.5L843.7 378.6M843.7 378.6L846.6 377.6M846.6 377.6L847.5 375.2M847.5 375.2L848.4 372.7M848.4 372.7L851.1 371.4M851.1 371.4L853.7 370M853.7 370L854.8 367.5M854.8 367.5L855.9 364.9M855.9 364.9L854.4 362.9M853.9 358.6L854.9 356.3M854.9 356.3L857.4 356.5M861.4 358.2L862.9 359.7M862.9 359.7L861.9 361.6M861.9 361.6L860.9 363.4M860.9 363.4L858.4 364.1M858.4 364.1L855.9 364.9M840.7 379.5L838.4 381.9M838.4 381.9L836.1 384.2M836.1 384.2L834.9 381.8M836.1 384.2L838.6 386.7M840.1 392L839.1 394.8M839.1 394.8L839.2 391.4M839.2 391.4L839.3 387.9M839.3 387.9L837 385.5M837 385.5L834.6 383.1M834.6 383.1L835.4 380.3M835.4 380.3L836.1 377.6M836.1 377.6L834.4 374.6M834.4 374.6L832.6 371.6M832.6 371.6L833.7 368.5M833.7 368.5L834.8 365.4M834.8 365.4L833.3 363.6M834.8 365.4L837.5 364.9M839.1 394.8L841.9 396.6M841.9 396.6L844.8 398.3M844.8 398.3L845.3 395.9M844.8 398.3L843 401M844.6 403.5L848 403.1M848 403.1L848.9 405.8M848.9 405.8L849.8 408.5M849.8 408.5L847.1 408.5M849.8 408.5L853.2 409.2M857.6 412.6L858.7 415.4M858.7 415.4L857 417.5M857 417.5L855.4 419.7M855.4 419.7L852.6 420.2M852.6 420.2L849.9 420.6M849.9 420.6L849 422.5M849 422.5L848.1 424.4M848.1 424.4L845.7 425.3M845.7 425.3L843.2 426.1M843.2 426.1L841.6 424.1M840.9 420.2L841.8 418.3M841.8 418.3L844.3 417.7M848.3 418.9L849.9 420.6M858.7 415.4L861.5 413.4M861.5 413.4L864.4 411.5M864.4 411.5L862.3 409.9M864.4 411.5L866.5 413.3M870.4 412.9L872.2 410.6M872.2 410.6L871.6 407.9M871.6 407.9L870.9 405.1M870.9 405.1L868.8 403.3M868.8 403.3L866.6 401.4M866.6 401.4L866.2 398.1M866.2 398.1L865.8 394.8M865.8 394.8L863.4 392.4M863.4 392.4L861 390M861 390L860.5 387.2M860.5 387.2L860 384.4M615.3 436.3L616.3 433.6M616.3 433.6L616.3 436.4M616.3 436.4L616.4 439.1M616.4 439.1L619.4 440.8M616.3 433.6L613.8 431M613.8 431L611.2 428.3M611.2 428.3L610 430.6M611.2 428.3L613 426M612.1 421.1L609.3 418.7M609.3 418.7L606.7 419.5M606.7 419.5L604 420.4M604 420.4L602.7 423M602.7 423L601.3 425.5M601.3 425.5L598.3 425.7M598.3 425.7L595.4 426M595.4 426L594 428.3M609.3 418.7L611 415.8M611 415.8L612.6 413M612.6 413L614.6 415.3M612.6 413L611.2 409.8M612.3 404.1L614.7 401.5M614.7 401.5L617.5 402.2M617.5 402.2L620.4 402.9M620.4 402.9L621.5 405.6M621.5 405.6L622.6 408.2M622.6 408.2L625.2 408.5M614.7 401.5L613.1 398.6M613.1 398.6L611.5 395.6M611.5 395.6L609.8 397.5M611.5 395.6L614 394.1M617.8 389.7L619 386.7M619 386.7L619.7 389.9M619.7 389.9L620.3 393.1M620.3 393.1L617.9 392.8M620.3 393.1L623.1 393.5M627.1 397.4L628.4 400.8M628.4 400.8L627 403.5M628.4 400.8L631.9 400.1M631.9 400.1L635.4 399.3M635.4 399.3L634.1 397.2M635.4 399.3L637.8 402M643.1 403L646.1 401.3M646.1 401.3L645.9 398.4M645.9 398.4L645.8 395.6M645.8 395.6L643.6 394.1M643.6 394.1L641.4 392.6M641.4 392.6L641.3 390.6M643.3 387.4L645.4 386.1M645.4 386.1L647.6 387.1M649.9 390.2L650 392.3M650 392.3L647.9 393.9M647.9 393.9L645.8 395.6M646.1 401.3L644.6 404.7M644.6 404.7L643.2 408.1M643.2 408.1L641 406.2M643.2 408.1L645.9 409.9M647.7 415.1L646.8 418.5M646.8 418.5L645.8 415.6M641.4 411.6L638.1 410.7M638.1 410.7L636.4 408.4M636.4 408.4L634.6 406M634.6 406L631.3 405.3M631.3 405.3L628 404.6M646.8 418.5L647.6 422M647.6 422L648.3 425.5M648.3 425.5L650.4 424.3M648.3 425.5L645.1 426.6M642.5 430.4L643.1 433.1M643.1 433.1L644.4 430.6M644.4 430.6L645.7 428.1M645.7 428.1L648.5 427.5M648.5 427.5L651.3 427M651.3 427L652.7 424.4M652.7 424.4L654 421.8M654 421.8L656.9 420.4M656.9 420.4L659.8 419M643.1 433.1L639.9 434.7M639.9 434.7L636.7 436.2M636.7 436.2L636.4 433.3M636.7 436.2L637.5 439.7M635.2 444.1L632.2 445M632.2 445L629.6 443.1M629.6 443.1L627 441.2M632.2 445L634.2 448.1M634.2 448.1L636.1 451.2M636.1 451.2L637.8 449.1M636.1 451.2L633.4 453.7M632.4 458.9L634.1 461.6M634.1 461.6L634.5 458.9M634.5 458.9L634.9 456.3M634.9 456.3L637.8 455.2M637.8 455.2L640.7 454.1M640.7 454.1L642.2 451M642.2 451L643.7 448M643.7 448L646.3 446.7M646.3 446.7L648.8 445.4M648.8 445.4L648.9 442.9M648.8 445.4L651 446.8M634.1 461.6L631.1 461.9M631.1 461.9L628.1 462.1M628.1 462.1L628.7 459.7M628.1 462.1L628.4 464.9M625.9 468.5L623 469.3M623 469.3L625.4 468.2M630.6 461.8L632.9 461.2M632.9 461.2L634.9 462.1M634.9 462.1L637 463.1M637 463.1L636.7 465.4M636.7 465.4L636.5 467.6M636.5 467.6L634.2 468.6M634.2 468.6L631.9 469.6M631.9 469.6L629.9 468.4M623 469.3L621.8 472M621.8 472L620.6 474.8M620.6 474.8L623 475M620.6 474.8L620.2 471.8M616.6 470.1L613.4 471.4M613.4 471.4L616.5 470M616.5 470L619.6 468.7M725.1 422.9L727.9 423.3M727.9 423.3L728.6 425.9M728.6 425.9L729.4 428.6M729.4 428.6L728.3 431.8M728.3 431.8L727.3 435.1M727.3 435.1L728.8 437.3M728.8 437.3L730.4 439.5M730.4 439.5L729.2 442.8M729.2 442.8L727.9 446M727.9 446L729.3 449.1M727.9 423.3L729.6 421M729.6 421L731.3 418.8M731.3 418.8L728.7 417.9M731.3 418.8L734.2 419.9M738.3 418.2L739.5 415.4M739.5 415.4L737 413.4M739.5 415.4L742.1 416.7M742.1 416.7L744.6 417.9M744.6 417.9L742.5 420.1M744.6 417.9L745.8 414.5M749.8 411.5L752.7 411.9M752.7 411.9L749.6 412.8M749.6 412.8L746.6 413.7M746.6 413.7L745.7 416.7M745.7 416.7L744.7 419.7M744.7 419.7L742 421M742 421L739.3 422.3M739.3 422.3L738.1 424.8M738.1 424.8L736.8 427.3M736.8 427.3L738.2 429.3M736.8 427.3L734.2 427.4M752.7 411.9L753.7 409.2M753.7 409.2L754.8 406.4M754.8 406.4L751.9 406.3M754.8 406.4L758.2 406.1M762.6 402.6L763.6 399.4M763.6 399.4L761.3 402M761.3 402L759.1 404.6M759.1 404.6L755.8 404.3M750.7 406.8L748.8 409.5M748.8 409.5L745.8 409.9M763.6 399.4L766.9 399.6M766.9 399.6L770.3 399.8M770.3 399.8L769.2 402.6M770.3 399.8L769.7 396.8M771.9 391.6L774.6 389.4M774.6 389.4L777 390.6M777 390.6L779.4 391.8M779.4 391.8L779.9 394.6M779.9 394.6L780.3 397.3M780.3 397.3L783.5 398.3M783.5 398.3L786.7 399.3M786.7 399.3L787.7 402M774.6 389.4L771.8 388.3M771.8 388.3L769.1 387.1M769.1 387.1L768.9 390M769.1 387.1L769.4 384.1M766.4 381.3L763.2 381.7M763.2 381.7L763.3 384.4M763.3 384.4L763.4 387.2M763.2 381.7L762 378.2M762 378.2L760.8 374.7M760.8 374.7L763.3 374.7M760.8 374.7L757.6 374.5M753.9 370.8L753.4 367.3M753.4 367.3L756.4 369.1M756.4 369.1L759.4 370.8M759.4 370.8L762.4 370.4M762.4 370.4L765.5 370.1M765.5 370.1L767.9 372.2M767.9 372.2L770.4 374.3M770.4 374.3L773.8 373.9M773.8 373.9L777.2 373.5M777.2 373.5L779.1 375.3M779.1 375.3L781.1 377.1M781.1 377.1L783.4 376.4M781.1 377.1L780.6 379.2M753.4 367.3L750 368.4M750 368.4L746.6 369.5M746.6 369.5L748 371.5M746.6 369.5L746.6 366.4M796.1 381.7L799 379.4M799 379.4L802.1 380.6M802.1 380.6L805.2 381.8M805.2 381.8L805.6 384.5M805.6 384.5L806 387.3M806 387.3L808.3 389.1M799 379.4L798.5 376.4M798.5 376.4L798 373.5M798 373.5L795.4 374.8M798 373.5L801.2 372M804.4 366.8L804.3 363.2M804.3 363.2L801.7 361.6M801.7 361.6L799 360M799 360L796.2 360.2M796.2 360.2L793.4 360.5M793.4 360.5L791.9 358.1M791.9 358.1L790.3 355.8M790.3 355.8L787.4 355.3M804.3 363.2L807 364.7M807 364.7L809.6 366.2M809.6 366.2L807.6 367.9M809.6 366.2L808.4 362.6M809.8 356.6L812.2 354M812.2 354L810.8 356.3M810.8 356.3L809.4 358.5M809.4 358.5L810.5 360.9M810.5 360.9L811.6 363.3M811.6 363.3L810.7 365.9M810.7 365.9L809.8 368.5M809.8 368.5L811.7 371.2M811.7 371.2L813.5 373.9M813.5 373.9L812.3 377.1M812.3 377.1L811 380.4M811 380.4L812.4 382M811 380.4L808.7 380.7M812.2 354L810.7 351.3M810.7 351.3L809.2 348.6M809.2 348.6L807.3 350.7M809.2 348.6L810.4 345.6M809.2 340.5L806.9 338.5M806.9 338.5L804 338.3M799.7 339.8L798.4 341.5M798.4 341.5L795.9 341.5M795.9 341.5L793.4 341.5M793.4 341.5L792.2 339.7M792.2 339.7L791.1 337.9M791.1 337.9L792.4 336.1M792.4 336.1L793.7 334.4M793.7 334.4L796.2 334.2M796.2 334.2L798.7 333.9M798.7 333.9L799.9 336.1M806.9 338.5L808 335.9M808 335.9L809.2 333.3M809.2 333.3L811.4 335.4M809.2 333.3L806.1 331.6M804.2 327.3L805.4 324.8M805.4 324.8L807.8 323.4M807.8 323.4L810.2 322M810.2 322L813 323.7M813 323.7L815.8 325.4M815.8 325.4L818.9 325.1M818.9 325.1L822.1 324.7M822.1 324.7L824.8 326.5M829.8 327.4L832 326.6M832 326.6L834.1 327.8M834.1 327.8L836.2 329M836.2 329L836.1 331.3M833.8 334.7L831.6 335.8M831.6 335.8L829.5 334.4M829.5 334.4L827.4 332.9M827.4 332.9L827.5 330.6M805.4 324.8L802.5 322.9M802.5 322.9L799.7 321M799.7 321L799.1 323.4M799.7 321L801.9 319.2M801.9 314.7L799.7 312.1M799.7 312.1L796.5 313.3M793 317.3L792.6 320.1M792.6 320.1L790.1 322.4M790.1 322.4L787.7 324.6M787.7 324.6L787.4 327.8M789 332.9L790.9 334.7M790.9 334.7L789.8 336.7M786.2 338.7L783.7 338.5M783.7 338.5L783.1 336.3M799.7 312.1L802.5 310.4M802.5 310.4L805.3 308.7M805.3 308.7L805.9 311.6M805.3 308.7L804.3 305.7M806.7 302L810.1 301.3M810.1 301.3L807.4 302.7M807.4 302.7L804.7 304M804.7 304L803.4 306.5M803.4 306.5L802 309M802 309L798.9 310.2M798.9 310.2L795.8 311.4M795.8 311.4L794.4 313.8M794.4 313.8L793 316.3M793 316.3L789.9 317.3M789.9 317.3L786.9 318.3M810.1 301.3L808.9 298.6M808.9 298.6L807.7 296M807.7 296L805.8 297.8M807.7 296L811 295M667.6 467.8L664.2 467.7M664.2 467.7L663.6 464.6M663.6 464.6L663 461.6M663 461.6L664.6 459.2M664.6 459.2L666.2 456.9M666.2 456.9L665.3 454.5M665.3 454.5L664.4 452M664.4 452L666.4 449.4M666.4 449.4L668.4 446.7M668.4 446.7L667.6 444.7M668.4 446.7L670.5 447M664.2 467.7L664.1 471.2M664.1 471.2L664 474.7M664 474.7L666.9 473.8M664 474.7L661 475.5M657 479L656.1 481.7M656.1 481.7L653.8 479.9M653.8 479.9L651.4 478.1M651.4 478.1L653.4 476.8M651.4 478.1L650.9 481.3M646.9 484.4L643.4 484.2M643.4 484.2L645.3 486.3M645.3 486.3L647.2 488.5M647.2 488.5L648.5 486.2M647.2 488.5L643.7 488.6M637.8 491.3L635.4 493.9M635.4 493.9L635.2 497.2M637.1 502.7L639.2 504.9M639.2 504.9L639 508M639 508L638.7 511M638.7 511L641.1 512.8M641.1 512.8L643.6 514.6M643.6 514.6L644.3 517.3M644.3 517.3L645 520M645 520L647.6 520.6M645 520L643.4 521.6M635.4 493.9L633.9 491.1M633.9 491.1L632.5 488.2M632.5 488.2L635.3 487.8M632.5 488.2L629.9 490.2M788.7 434.6L785.9 432.7M785.9 432.7L788.6 434.5M788.6 434.5L791.2 436.4M791.2 436.4L794.3 435.3M794.3 435.3L797.4 434.2M797.4 434.2L799.9 435.9M799.9 435.9L802.4 437.6M802.4 437.6L805.6 436.2M816 436.4L818.2 435.2M818.2 435.2L820.4 436.4M820.4 436.4L822.5 437.7M822.5 437.7L822.6 440M822.6 440L822.6 442.3M822.6 442.3L820.5 443.5M820.5 443.5L818.3 444.7M818.3 444.7L816.1 443.5M816.1 443.5L814 442.3M814 442.3L813.9 439.9M785.9 432.7L783.5 434.5M783.5 434.5L781.1 436.4M781.1 436.4L783.2 437.8M781.1 436.4L778.5 435.4M774.7 437.1L773.6 439.8M773.6 439.8L775 442.2M775 442.2L776.4 444.7M776.4 444.7L778.9 444.7M778.9 444.7L781.4 444.7M781.4 444.7L782.7 446.8M782.7 450.7L781.4 452.5M781.4 452.5L778.9 452.9M778.9 452.9L776.4 453.2M776.4 453.2L775.2 451.1M775.2 451.1L773.9 449M773.9 449L775.2 446.8M775.2 446.8L776.4 444.7M773.6 439.8L770.8 438.2M770.8 438.2L768.1 436.5M768.1 436.5L770 434.9M768.1 436.5L766.1 439.2M761 441.3L758 440.7M758 440.7L758.3 437.3M758.3 437.3L758.5 433.9M758 440.7L756.4 443.5M756.4 443.5L754.8 446.3M754.8 446.3L757.3 446.7M754.8 446.3L751.6 445.9M747.6 448.7L746.9 451.8M746.9 451.8L748.8 449.4M748.8 449.4L750.8 446.9M750.8 446.9L754.1 446.8M746.9 451.8L743.9 450.3M743.9 450.3L741 448.7M741 448.7L743 446.9M741 448.7L742.1 451.5M742.3 457.3L741.4 460.3M741.4 460.3L742.2 457.1M742.2 457.1L743 453.9M743 453.9L741.9 451.1M741.9 451.1L740.9 448.3M741.4 460.3L743.1 462.9M743.1 462.9L744.8 465.6M744.8 465.6L746.7 463.2M744.8 465.6L743.2 468M744.4 471.8L747 473.2M747 473.2L749.4 472.1M749.4 472.1L751.8 471M751.8 471L753.4 468.4M753.4 468.4L754.9 465.7M754.9 465.7L758.2 465M758.2 465L761.4 464.2M761.4 464.2L763 461.8M763 461.8L764.6 459.5M747 473.2L748.5 476.4M748.5 476.4L749.9 479.6M749.9 479.6L747.1 479.8M749.9 479.6L752.1 477.3M753.9 478.5L753.6 481.9M753.6 481.9L753.1 478.9M753.1 478.9L752.6 476M752.6 476L749.7 475M749.7 475L746.7 473.9M746.7 473.9L746.1 471.3M746.1 471.3L745.6 468.6M745.6 468.6L742.9 467M742.9 467L740.2 465.3M740.2 465.3L738 466.5M740.2 465.3L740.3 462.7M753.6 481.9L757.2 481.8M757.2 481.8L760.7 481.7M760.7 481.7L759.7 479.1M760.7 481.7L760.4 485M719.6 449L722.1 447.4M722.1 447.4L725.1 448.9M725.1 448.9L728.2 450.4M728.2 450.4L729.3 453.3M729.3 453.3L730.4 456.3M730.4 456.3L733.2 457.8M738.1 458.2L740.3 457.1M740.3 457.1L742.4 458.4M742.4 458.4L744.6 459.8M744.6 459.8L744.7 461.9M744.7 461.9L744.7 464M744.7 464L742.6 465.1M742.6 465.1L740.5 466.2M740.5 466.2L738.3 465M738.3 465L736.1 463.9M736.1 463.9L736 461.6M722.1 447.4L718.5 446.9M718.5 446.9L715 446.3M715 446.3L715.5 449.1M715 446.3L714.5 443M711.9 437.2L709.8 434.8M709.8 434.8L709.9 437.9M709.9 437.9L710 441M710 441L708.4 443.4M708.4 443.4L706.9 445.8M706.9 445.8L707.3 448.8M707.3 448.8L707.7 451.8M707.7 451.8L706.1 454.4M705.2 460L706 463M706 463L708.4 464.1M708.4 464.1L710.8 465.2M710.8 465.2L710.6 467.5M707.9 470.2L705.4 470.8M705.4 470.8L704.1 468.9M704.1 468.9L702.7 467M702.7 467L704.3 465M704.3 465L706 463M709.8 434.8L712 431.8M712 431.8L714.2 428.9M714.2 428.9L715.8 431.4M714.2 428.9L712.6 425.8M713.8 421.4L716.5 420.2M716.5 420.2L718.9 421.5M718.9 421.5L721.2 422.8M721.2 422.8L721.1 426M723.3 436.4L722.5 439.1M722.5 439.1L724.2 441.1M724.2 441.1L725.9 443M725.9 443L725.2 445M725.2 445L724.5 447.1M724.5 447.1L722.1 447.8M722.1 447.8L719.6 448.4M719.6 448.4L717.9 446.6M717.9 446.6L716.2 444.8M716.2 444.8L716.9 442.7M716.9 442.7L717.6 440.5M717.6 440.5L720.1 439.8M720.1 439.8L722.5 439.1M716.5 420.2L714.8 417.4M714.8 417.4L713.1 414.6M713.1 414.6L711.3 416.8M713.1 414.6L716 413.1M717.2 409L715.6 406.5M715.6 406.5L712.6 405.8M707.3 407.4L705.1 409.7M705.1 409.7L702.1 409.6M696.7 412L694.3 414.6M694.3 414.6L691.7 414M691.7 414L689.1 413.4M689.1 413.4L687.6 415M689.1 413.4L688.4 411M715.6 406.5L717.1 403.8M717.1 403.8L718.7 401.2M718.7 401.2L720.6 403.4M718.7 401.2L716.7 399M716.6 394.5L718.4 392.1M718.4 392.1L718.8 395M721.5 399.7L723.7 401.4M874.7 356.3L871.5 356.8M871.5 356.8L873.7 355M873.7 355L876 353.2M871.5 356.8L873.2 359.3M873.2 359.3L875 361.9M875 361.9L876.6 359.7M875 361.9L873.1 364.1M872.6 369L873.9 371.7M873.9 371.7L877 371.1M877 371.1L880 370.5M880 370.5L882.2 367.8M882.2 367.8L884.3 365.1M884.3 365.1L887 365.2M887 365.2L889.6 365.3M889.6 365.3L891.2 363M891.2 363L892.8 360.8M892.8 360.8L891.9 358.4M891.9 358.4L891.1 356M891.1 356L893.2 354.6M893.2 354.6L895.2 353.2M895.2 353.2L897.3 354.6M897.3 354.6L899.5 356M899.5 356L898.7 358M898.7 358L898 360.1M898 360.1L895.4 360.4M895.4 360.4L892.8 360.8M873.9 371.7L872.2 374.1M872.2 374.1L870.5 376.6M870.5 376.6L868.8 374.4M870.5 376.6L872.5 378.6M874.2 384.1L873.9 387.8M873.9 387.8L873.5 384.8M873.5 384.8L873.1 381.8M873.1 381.8L870.8 380.1M870.8 380.1L868.5 378.4M868.5 378.4L866 379.4M868.5 378.4L868.8 376.1M873.9 387.8L876.7 388.8M876.7 388.8L879.6 389.8M879.6 389.8L879.6 387.2M879.6 389.8L878.4 392.3M879.6 397.8L881.9 400.6M881.9 400.6L884.7 400.5M884.7 400.5L887.5 400.4M887.5 400.4L888.9 398.2M892.8 396.9L895.3 397.7M895.3 397.7L895.4 399.9M895.4 399.9L895.5 402.2M895.5 402.2L893.1 403M893.1 403L890.7 403.8M890.7 403.8L889.1 402.1M889.1 402.1L887.5 400.4M881.9 400.6L879.6 403.2M879.6 403.2L877.2 405.7M877.2 405.7L875.8 403.1M877.2 405.7L879.1 408.4M877.8 411.8L874.6 412.4M874.6 412.4L877.4 411.1M877.4 411.1L880.1 409.7M880.1 409.7L881 406.6M881 406.6L881.9 403.6M881.9 403.6L884.4 401.8M874.6 412.4L874.5 416M874.5 416L874.5 419.5M874.5 419.5L877 418.7M874.5 419.5L870.8 419.4M865.6 421.9L864 424.4M784.6 415.7L787.6 417.7M787.6 417.7L784.9 418.3M784.9 418.3L782.2 418.9M782.2 418.9L780.6 421.7M787.6 417.7L789.7 415M789.7 415L791.9 412.3M791.9 412.3L789.4 411.4M791.9 412.3L794.5 414.7M799 414.6L800.9 412.1M800.9 412.1L799.4 409.1M799.4 409.1L798 406.1M798 406.1L795.7 405.9M798 406.1L799.4 404.2M800.9 412.1L803.5 414M803.5 414L806.1 416M806.1 416L804 417.4M806.1 416L807.1 412.6M811 410.1L814 411M814 411L811.3 410.2M811.3 410.2L808.6 409.3M808.6 409.3L806.1 410.3M806.1 410.3L803.6 411.2M803.6 411.2L800.7 409.5M800.7 409.5L797.9 407.7M814 411L815.3 408.5M815.3 408.5L816.7 406M816.7 406L814.1 405.5M816.7 406L819.4 404M823.9 399.9L825.8 397.8M825.8 397.8L824.5 395.1M824.5 395.1L823.2 392.3M823.2 392.3L820 391.4M820 391.4L816.8 390.6M816.8 390.6L815 388.2M815 388.2L813.3 385.9M813.3 385.9L810.7 386.3M810.7 386.3L808.1 386.7M825.8 397.8L828.8 399.5M828.8 399.5L831.8 401.2M831.8 401.2L829.8 403M831.8 401.2L834.2 398.8M839.4 396.9L842.3 397.3M842.3 397.3L842.9 400.2M842.9 400.2L843.4 403M843.4 403L842.1 405.3M842.1 405.3L840.7 407.6M840.7 407.6L842 410.7M842 410.7L843.4 413.8M843.4 413.8L841.9 416.6M841.9 416.6L840.5 419.3M842.3 397.3L841.6 393.8M841.6 393.8L840.9 390.2M840.9 390.2L838.4 391.6M840.9 390.2L844.5 390.1M846.5 387.1L844.8 384.2M844.8 384.2L845.8 387M844.8 384.2L847.2 381.9M847.2 381.9L849.6 379.6M849.6 379.6L850.9 382.4M849.6 379.6L847.5 377M847.7 372.5L850.1 370.5M850.1 370.5L852.5 372.6M852.5 372.6L854.8 374.7M854.8 374.7L855.6 378.1M855.6 378.1L856.4 381.4M721.7 457.2L720.4 460.5M720.4 460.5L717.3 460.4M717.3 460.4L714.3 460.3M714.3 460.3L712.4 457.6M712.4 457.6L710.4 455M710.4 455L707.6 454.7M707.6 454.7L704.8 454.4M704.8 454.4L703.5 451.2M703.5 451.2L702.3 448M702.3 448L699.2 446.6M720.4 460.5L723.5 462.3M723.5 462.3L726.6 464.1M726.6 464.1L727.1 461.4M726.6 464.1L724.1 466.8M725 471L728.3 472.3M728.3 472.3L731.3 471.4M731.3 471.4L734.3 470.5M734.3 470.5L736.2 467.8M736.2 467.8L738.1 465.1M738.1 465.1L737.1 462.8M737.1 462.8L736 460.6M736 460.6L737.5 458.8M737.5 458.8L738.9 456.9M738.9 456.9L741.4 457M741.4 457L743.9 457.1M743.9 457.1L744.9 459.2M744.5 463L743.1 464.8M743.1 464.8L740.6 464.9M740.6 464.9L738.1 465.1M728.3 472.3L728 475.8M728 475.8L727.6 479.3M727.6 479.3L724.9 478M727.6 479.3L730.4 480.1M732.9 484.4L732.5 487.8M732.5 487.8L729.7 487.7M732.5 487.8L735.2 488.7M735.2 488.7L738 489.7M738 489.7L738 487.2M738 489.7L739.5 493M744.4 495.5L747.9 494.6M747.9 494.6L745.3 494M745.3 494L742.7 493.3M742.7 493.3L741.3 490.2M741.3 490.2L739.9 487M739.9 487L737.1 485.7M747.9 494.6L748.6 497.5M748.6 497.5L749.4 500.3M749.4 500.3L746.6 500.1M749.4 500.3L752.2 500.1M756 502.6L757 505.3M757 505.3L755.6 507.9M755.6 507.9L754.1 510.5M754.1 510.5L751.6 511.3M751.6 511.3L749 512.2M749 512.2L748.5 514.8M749 512.2L747.1 510.5M757 505.3L759.7 504.2M759.7 504.2L762.3 503.1M762.3 503.1L760.7 501.2M762.3 503.1L763.6 505.7M764.7 504.7L764.6 501.1M764.6 501.1L763.9 504.4M763.9 504.4L763.2 507.6M763.2 507.6L761.1 509.3M761.1 509.3L759 510.9M759 510.9L759.2 513.3M759.2 513.3L759.3 515.7M759.3 515.7L756.8 516.5M752.8 515.6L751.2 513.8M751.2 513.8L752.6 512M752.6 512L754.1 510.1M754.1 510.1L756.6 510.5M756.6 510.5L759 510.9M764.6 501.1L768 501.1M768 501.1L771.5 501.1M771.5 501.1L770.6 503.8M771.5 501.1L769.9 498.2M771.3 494.4L774.2 493.5M774.2 493.5L775.9 496M775.9 496L777.5 498.5M777.5 498.5L776.3 501.3M776.3 501.3L775.1 504.2M775.1 504.2L776.9 506.5M774.2 493.5L774.4 490.1M774.4 490.1L774.6 486.8M774.6 486.8L771.9 487.6M774.6 486.8L778 486M779.9 482.2L778.5 479.2M778.5 479.2L778.5 482.7M776 488.1L773.5 490M773.5 490L773.5 493M773.5 493L773.5 496M773.5 496L771.7 498.6M771.7 498.6L770 501.2M770 501.2L771 503.4M770 501.2L767.5 501M778.5 479.2L781.1 477.2M781.1 477.2L783.7 475.2M783.7 475.2L784.5 477.5M783.7 475.2L782.7 472.4M785.4 469.7L789 469.7M789 469.7L790.9 471.7M790.9 471.7L792.8 473.8M792.8 473.8L792.4 477M794.4 482.4L796.8 484.6M796.8 484.6L797.2 487.2M789 469.7L789.5 466.7M789.5 466.7L789.9 463.7M789.9 463.7L786.8 464.3M789.9 463.7L792.9 464.5M796.6 462.5L797.3 459.7M797.3 459.7L795.7 457.4M795.7 457.4L794.2 455.1M794.2 455.1L791.3 454.5M791.3 454.5L788.3 453.9M788.3 453.9L787 451.2M787 451.2L785.7 448.5M785.7 448.5L782.6 447.3M782.6 447.3L779.5 446.1M797.3 459.7L800.6 461.3M800.6 461.3L803.8 463M803.8 463L801.7 465M803.8 463L805.3 460.4M808.8 460.2L810.9 462.5M810.9 462.5L810.7 465.6M810.7 465.6L810.5 468.8M810.5 468.8L807.5 470.4M807.5 470.4L804.4 472.1M804.4 472.1L804 474.7M810.9 462.5L813.8 460.3M813.8 460.3L816.7 458.2M816.7 458.2L814.2 456.4M816.7 458.2L819.2 460.2M821 459L820.3 455.7M820.3 455.7L818 453.6M818 453.6L815.7 451.4M867.5 342.6L869.6 345.3M869.6 345.3L866.4 344.2M866.4 344.2L863.3 343.2M863.3 343.2L860.5 344.3M869.6 345.3L872.5 343.8M872.5 343.8L875.4 342.3M875.4 342.3L873.5 340.5M875.4 342.3L877.5 344.8M882.4 345.6L885 343.9M885 343.9L886 341.1M885 343.9L887.8 345.7M887.8 345.7L890.7 347.5M890.7 347.5L888.6 349.2M890.7 347.5L894.1 347.9M898.2 351L899 353.7M899 353.7L896.6 355.4M896.6 355.4L894.3 357.1M894.3 357.1L894.5 359.5M894.5 359.5L894.8 361.9M894.8 361.9L892.8 363.3M892.8 363.3L890.8 364.8M890.8 364.8L888.5 363.7M885.9 360.5L885.7 358.4M885.7 358.4L887.7 357.2M887.7 357.2L889.7 356.1M889.7 356.1L892 356.6M892 356.6L894.3 357.1M899 353.7L902.2 353.4M902.2 353.4L905.4 353M905.4 353L904.2 350.4M905.4 353L903.1 355.8M902.9 361.2L905 363.8M905 363.8L905.1 360.7M905.1 360.7L905.2 357.6M905.2 357.6L907.1 355.6M905 363.8L901.6 364.2M901.6 364.2L898.2 364.5M898.2 364.5L898.8 362.2M898.2 364.5L898.6 367.7M898.7 373.8L898.4 376.8M898.4 376.8L896.7 374.2M896.7 374.2L895 371.6M898.4 376.8L901.3 378.4M901.3 378.4L904.3 380.1M904.3 380.1L904.8 377.1M904.3 380.1L903.9 383M905.7 387.8L907.9 389.8M907.9 389.8L905.9 392.3M905.9 392.3L903.8 394.8M903.8 394.8L902.4 392.6M903.8 394.8L905.5 397.2M905 402.6L902.8 405.6M902.8 405.6L899.6 405.9M899.6 405.9L896.3 406.2M896.3 406.2L893.7 404.4M893.7 404.4L891 402.5M891 402.5L888 403.7M882.7 403.1L880.4 401.4M880.4 401.4L877.2 402.6M902.8 405.6L905.3 407.2M905.3 407.2L907.7 408.9M907.7 408.9L908.5 406.1M907.7 408.9L905.5 411.6M905.2 416.5L907.1 418.7M907.1 418.7L907 415.7M907 415.7L906.8 412.8M906.8 412.8L908.9 410M908.9 410L910.9 407.2M910.9 407.2L910 405.1M910.9 407.2L913.3 407.5M907.1 418.7L905.1 421.2M905.1 421.2L903.1 423.6M903.1 423.6L901.8 421.5M903.1 423.6L905.4 426.2M905.8 431.3L904 433.9M904 433.9L901.3 433.9M901.3 433.9L898.6 433.9M904 433.9L905.9 436.1M905.9 436.1L907.9 438.4M907.9 438.4L909.2 436.2M907.9 438.4L905.8 441.4M907.2 445.7L910.6 446.9M910.6 446.9L909 444.6M909 444.6L907.4 442.3M907.4 442.3L908 439.5M908 439.5L908.6 436.8M908.6 436.8L906.7 434.8M910.6 446.9L908 448.4M908 448.4L905.4 449.9M905.4 449.9L904.9 447.2M905.4 449.9L905.1 453.4M901.2 457.1L897.6 457.3M897.6 457.3L900.1 455.3M900.1 455.3L902.5 453.3M902.5 453.3L902.6 450.6M902.6 450.6L902.7 447.9M902.7 447.9L905.1 445.8M905.1 445.8L907.5 443.7M907.5 443.7L908.3 440.9M897.6 457.3L897.6 460.5M897.6 460.5L897.7 463.8M897.7 463.8L900.2 462.9M897.7 463.8L894.8 464.9M891.7 469.6L891.4 473.2M891.4 473.2L893.3 475.6M893.3 475.6L895.1 477.9M895.1 477.9L898.1 478.2M898.1 478.2L901.1 478.5M901.1 478.5L903.2 481M903.2 481L905.3 483.6M891.4 473.2L888.3 474.7M888.3 474.7L885.2 476.3M885.2 476.3L884.9 473.6M885.2 476.3L882.1 477.5M720 496.1L718.3 493.2M718.3 493.2L720.8 494.7M720.8 494.7L723.4 496.2M718.3 493.2L716.5 495.6M716.5 495.6L714.8 497.9M714.8 497.9L717.3 498.7M714.8 497.9L711.7 497M707.5 499.4L706.5 502.6M706.5 502.6L707.9 499.8M707.9 499.8L709.4 497M706.5 502.6L702.9 502.4M702.9 502.4L699.3 502.1M699.3 502.1L700.3 499.7M699.3 502.1L698.7 505.7M694.4 509.6L690.8 510.1M690.8 510.1L692.8 508.4M692.8 508.4L694.8 506.7M694.8 506.7L695 503.7M690.8 510.1L689.2 513.1M689.2 513.1L687.7 516.1M687.7 516.1L690.6 516.5M687.7 516.1L684.9 515M680.3 517L678.6 520.1M678.6 520.1L680.1 522.4M680.1 522.4L681.6 524.8M681.6 524.8L684.3 525.7M684.3 525.7L687.1 526.7M687.1 526.7L688.1 529.8M688.1 529.8L689.2 532.9M678.6 520.1L675.5 518.6M675.5 518.6L672.5 517.1M672.5 517.1L674.6 515M672.5 517.1L670.7 519.7M665.4 522.2L661.9 522.1M661.9 522.1L660 520.2M660 520.2L658.1 518.4M658.1 518.4L657.6 515M657.6 515L657.2 511.6M657.2 511.6L654.5 510.2M654.5 510.2L651.8 508.8M661.9 522.1L661.4 524.9M661.4 524.9L661 527.7M661 527.7L663.5 527.2M661 527.7L657.8 529.4M656.7 534.1L658.8 537.1M658.8 537.1L656.6 539.5M656.6 539.5L654.4 542M654.4 542L653.1 539.8M654.4 542L655.5 545.2M653.1 549.3L649.6 550.2M649.6 550.2L651.9 547.9M651.9 547.9L654.1 545.5M654.1 545.5L653.7 542.6M653.7 542.6L653.3 539.6M653.3 539.6L655.6 537.4M655.6 537.4L658 535.1M658 535.1L657.6 532.1M657.6 532.1L657.2 529.1M657.2 529.1L659.3 527.3M649.6 550.2L649.6 553.7M649.6 553.7L649.7 557.2M649.7 557.2L652.2 556.3M649.7 557.2L646.5 558.5M643.7 562.8L643.9 565.6M643.9 565.6L645.1 562.9M645.1 562.9L646.2 560.1M646.2 560.1L648.5 558.7M650.6 554.6L650.4 551.8M650.4 551.8L653.1 550M653.1 550L655.9 548.2M643.9 565.6L640.9 565.6M640.9 565.6L637.9 565.6M637.9 565.6L638.7 563.3M637.9 565.6L638.8 568.9M637 573.5L634.4 574.8M634.4 574.8L631.5 572.9M631.5 572.9L628.6 571M628.6 571L628.3 568.1M628.3 568.1L628.1 565.3M628.1 565.3L625.9 562.8M625.9 562.8L623.6 560.2M623.6 560.2L623.9 556.8M634.4 574.8L633.5 578.3M633.5 578.3L632.6 581.9M632.6 581.9L635.7 581.6M632.6 581.9L629.3 581.2M626.6 583.3L627.3 586.1M627.3 586.1L629.6 587.2M629.6 587.2L631.9 588.4M627.3 586.1L624.4 587M624.4 587L621.5 588M621.5 588L621.5 584.9M758 423.2L755.3 421.8M755.3 421.8L755.6 419M755.6 419L755.9 416.2M755.9 416.2L758.9 414.5M758.9 414.5L761.8 412.7M761.8 412.7L762.6 410.2M762.6 410.2L763.4 407.6M763.4 407.6L766 405.9M766 405.9L768.6 404.2M755.3 421.8L755.2 424.8M755.2 424.8L755.1 427.7M755.1 427.7L757.9 426.9M755.1 427.7L751.8 428.8M749.7 433.2L750.8 436.4M750.8 436.4L752.1 433.6M752.1 433.6L753.3 430.8M753.3 430.8L756.5 429.7M756.5 429.7L759.8 428.6M759.8 428.6L761.3 426.2M761.3 426.2L762.8 423.8M762.8 423.8L765.4 424M765.4 424L768 424.1M768 424.1L769.7 421.8M770.6 417.2L769.8 414.9M769.8 414.9L771.9 413.6M771.9 413.6L774 412.3M774 412.3L776.1 413.5M776.1 413.5L778.2 414.7M778.2 414.7L777.4 416.8M777.4 416.8L776.6 418.9M776.6 418.9L774 419.2M750.8 436.4L750.2 439.2M750.2 439.2L749.7 442.1M749.7 442.1L747.1 440.6M749.7 442.1L752.5 441.9M755 445.2L754.6 448.7M754.6 448.7L757.3 449.6M757.3 449.6L760 450.5M760 450.5L759.9 447.7M760 450.5L759 453.7M760.5 458.7L763.1 460.5M763.1 460.5L763.1 457.2M763.1 457.2L763.1 453.9M763.1 453.9L765 451.6M765 451.6L766.8 449.3M766.8 449.3L765.6 446.5M765.6 446.5L764.4 443.7M764.4 443.7L765.8 441M763.1 460.5L762.8 463.3M762.8 463.3L762.5 466.1M762.5 466.1L760 465M762.5 466.1L765.8 465.9M768.7 468.8L768.2 471.9M768.2 471.9L767.6 468.7M767.6 468.7L767 465.5M767 465.5L764.3 463.5M764.3 463.5L761.5 461.5M761.5 461.5L761.7 458.2M761.7 458.2L761.9 455M761.9 455L760.2 452.5M760.2 452.5L758.5 450M768.2 471.9L770.7 473.6M770.7 473.6L773.3 475.3M773.3 475.3L774 472.8M773.3 475.3L770.2 476.6M767.7 480.8L768.2 483.6M768.2 483.6L771.1 485.5M776.5 486.1L779 484.8M768.2 483.6L764.8 483.4M764.8 483.4L761.4 483.2M761.4 483.2L762.4 480.6M761.4 483.2L760.1 486M755.4 488.6L752 488.3M752 488.3L755.1 487.3M755.1 487.3L758.3 486.3M758.3 486.3L758.9 483M758.9 483L759.5 479.8M759.5 479.8L762.5 478.9M762.5 478.9L765.4 477.9M765.4 477.9L766.8 475.5M767 470.9L765.8 468.7M765.8 468.7L767.1 466.9M767.1 466.9L768.4 465.1M768.4 465.1L770.9 465.2M770.9 465.2L773.4 465.3M773.4 465.3L774.6 467.1M774.6 467.1L775.8 468.8M775.8 468.8L774.5 471M774.5 471L773.3 473.1M773.3 473.1L770.8 473.1M752 488.3L748.5 488.1M748.5 488.1L745 487.9M745 487.9L745.6 490.3M745 487.9L744.1 484.6M740 482.4L736.7 483.6M736.7 483.6L734.7 486.2M734.7 486.2L732.6 488.8M732.6 488.8L733.9 491.6M733.9 491.6L735.1 494.4M735.1 494.4L734.1 497.3M734.1 497.3L733 500.1M736.7 483.6L733.8 485.1M733.8 485.1L730.9 486.6M730.9 486.6L730.5 483.7M730.9 486.6L731.8 489.5M729.6 494.3L726.4 496.1M726.4 496.1L727.8 493M727.8 493L729.2 489.9M729.2 489.9L727.6 486.9M727.6 486.9L725.9 483.9M725.9 483.9L727.5 480.9M727.5 480.9L729.1 477.9M729.1 477.9L727.8 474.7M727.8 474.7L726.6 471.4M726.6 471.4L728.1 468.3M726.4 496.1L727.5 499.4M727.5 499.4L728.6 502.7M728.6 502.7L731 500.9M728.6 502.7L725.8 504.2M726.2 506.1L729.5 506.4M729.5 506.4L732 504.8M732 504.8L734.5 503.2M729.5 506.4L729.1 509.3M729.1 509.3L728.6 512.2M728.6 512.2L726.4 511.1M728.6 512.2L732 511.5M735.6 513.9L735.9 517.2M735.9 517.2L733 519M727.4 519.9L724.7 519M724.7 519L722.3 520.2M719.3 523.7L718.8 526.1M718.8 526.1L716.3 526.4M716.3 526.4L713.7 526.7M713.7 526.7L712.6 524.5M712.6 524.5L711.5 522.4M711.5 522.4L713.4 520.9M713.4 520.9L715.3 519.4M715.3 519.4L717.6 520.4M864.9 309.1L862.7 311.4M862.7 311.4L859.9 311.3M862.7 311.4L865.2 313.3M865.2 313.3L867.8 315.2M867.8 315.2L868.6 312.7M867.8 315.2L865 316.9M863.3 322.1L864.4 325.5M864.4 325.5L867.4 326.5M867.4 326.5L870.4 327.5M870.4 327.5L872.8 325.6M864.4 325.5L862.6 323.4M862.6 323.4L860.7 321.2M860.7 321.2L863.2 320.2M860.7 321.2L857.6 321.4M853 318.9L851.6 316M851.6 316L854.3 317.7M854.3 317.7L857 319.4M857 319.4L860.2 319.1M860.2 319.1L863.5 318.7M863.5 318.7L865.5 321.2M865.5 321.2L867.5 323.7M867.5 323.7L870.9 323.8M870.9 323.8L874.2 323.9M851.6 316L850.4 313.3M850.4 313.3L849.2 310.6M849.2 310.6L847 312.7M849.2 310.6L852.6 310M855.5 306.5L855 303.6M855 303.6L853.1 306.5M657.5 463.9L656.5 461.2M656.5 461.2L658.5 458.3M658.5 458.3L660.5 455.5M660.5 455.5L663.3 454.6M663.3 454.6L666 453.8M666 453.8L666.6 451.3M666 453.8L667.6 455.3M656.5 461.2L654.8 464.4M654.8 464.4L653.1 467.6M653.1 467.6L656.2 468M653.1 467.6L649.8 467.5M646.4 470.9L646.3 474.2M646.3 474.2L647.4 471.6M647.4 471.6L648.6 469M648.6 469L651.7 468.1M646.3 474.2L643.1 472.4M643.1 472.4L640 470.5M640 470.5L642 468.8M640 470.5L638.2 473.1M633.2 476L630 476.3M630 476.3L627.6 474.8M627.6 474.8L625.2 473.4M625.2 473.4L624.2 470.1M622.8 458.1L625.2 458.4M625.2 458.4L625.9 460.7M625.9 460.7L626.6 462.9M626.6 462.9L624.9 464.8M630 476.3L629.8 479.5M629.8 479.5L629.6 482.8M629.6 482.8L632.5 482M629.6 482.8L626.3 481.7M621.4 483.2L619.9 485.8M619.9 485.8L621.5 488.8M621.5 488.8L623.2 491.8M623.2 491.8L626.2 491.8M626.2 491.8L629.2 491.8M629.2 491.8L631.5 494.3M631.5 494.3L633.9 496.8M633.9 496.8L637.3 496.7M619.9 485.8L617.7 484M617.7 484L615.5 482.2M615.5 482.2L617.5 480.9M804.6 426.6L806.4 429.2M806.4 429.2L804 428M804 428L801.5 426.8M801.5 426.8L799.3 428.5M806.4 429.2L809.1 428.1M809.1 428.1L811.8 427M811.8 427L810.1 424.9M811.8 427L813.6 429.2M818.8 430.5L822.3 429.5M822.3 429.5L824.2 432M824.2 432L826.2 434.5M826.2 434.5L823.3 435.5M826.2 434.5L828.9 432.6M832.9 433.4L834.3 436.1M834.3 436.1L833.1 438.8M833.1 438.8L831.9 441.5M831.9 441.5L829.3 442.6M829.3 442.6L826.8 443.8M826.8 443.8L825.6 446.7M834.3 436.1L837.6 436M837.6 436L840.9 435.9M840.9 435.9L839.9 433.3M840.9 435.9L842.1 438.7M845.9 440.2L848.6 438.8M848.6 438.8L848.8 435.5M848.8 435.5L849.1 432.1M849.1 432.1L846.8 430.1M846.8 430.1L844.6 428.1M844.6 428.1L843.9 424.9M840.9 420.4L838.5 419.2M838.5 419.2L838.8 416.9M838.8 416.9L839.1 414.5M839.1 414.5L841.6 413.9M841.6 413.9L844.2 413.4M844.2 413.4L845.4 415.6M845.4 415.6L846.7 417.8M846.7 417.8L845 419.7M848.6 438.8L851.8 439.9M851.8 439.9L855 440.9M855 440.9L853.2 443.3M855 440.9L855.2 437.3M858.2 434.7L861 435.6M861 435.6L858.4 435.8M861 435.6L862.5 432.4M862.5 432.4L863.9 429.1M863.9 429.1L861.1 428.8M863.9 429.1L866.6 430.9M870.9 429.5L872.7 426.3M872.7 426.3L870.6 428.1M870.6 428.1L868.5 429.8M868.5 429.8L865.9 428.8M865.9 428.8L863.2 427.9M863.2 427.9L860.2 429.6M860.2 429.6L857.1 431.3M857.1 431.3L854.4 430.7M854.4 430.7L851.7 430M851.7 430L849.5 432.2M872.7 426.3L875.5 427.3M875.5 427.3L878.4 428.3M878.4 428.3L876.6 430.6M878.4 428.3L879.4 424.9M883.8 421.4L887.2 421.3M887.2 421.3L890 422.7M887.2 421.3L888.4 418.3M888.4 418.3L889.6 415.4M889.6 415.4L886.7 415.3M889.6 415.4L893.1 414.9M896.7 411L896.7 407.6M896.7 407.6L895.4 410.1M895.4 410.1L894.1 412.5M896.7 407.6L898.4 404.8M898.4 404.8L900.2 402M900.2 402L902 404.2M900.2 402L900.8 398.9M904.5 394.8L907.5 393.8M907.5 393.8L904.5 393.2M904.5 393.2L901.6 392.6M901.6 392.6L902 395.4M901.6 392.6L899.4 390.8M736.7 382.1L734.7 384.1M734.7 384.1L731.5 382.8M731.5 382.8L728.3 381.6M728.3 381.6L726.4 378.8M726.4 378.8L724.6 376M724.6 376L721.7 375.2M721.7 375.2L718.8 374.4M718.8 374.4L717 376M717 376L715.3 377.5M715.3 377.5L712.9 376.7M712.9 376.7L710.4 375.9M710.4 375.9L709.8 373.9M709.8 373.9L709.2 372M709.2 372L711 370.2M711 370.2L712.7 368.4M712.7 368.4L715.1 369M715.1 369L717.6 369.7M717.6 369.7L718.2 372M718.2 372L718.8 374.4M734.7 384.1L735.8 387M735.8 387L737 389.9M737 389.9L739.1 388.2M737 389.9L734.3 391.6M733 396.1L734.3 398.9M734.3 398.9L735.2 395.9M734.3 398.9L731.6 399.7M731.6 399.7L728.9 400.4M728.9 400.4L729 398M728.9 400.4L728.9 403.9M725.8 407.1L722.6 406.8M722.6 406.8L726 406.9M726 406.9L729.3 407M729.3 407L731.7 405.1M731.7 405.1L734.1 403.2M734.1 403.2L733.7 400.5M734.1 403.2L736.3 404M722.6 406.8L723.2 410.2M723.2 410.2L723.9 413.5M723.9 413.5L726 412.3M723.9 413.5L720.6 414M717.2 417.9L717.1 421.3M717.1 421.3L719.4 419M719.4 419L721.7 416.8M721.7 416.8L724.2 417.6M724.2 417.6L726.8 418.4M726.8 418.4L729.3 417.4M717.1 421.3L713.7 422.2M713.7 422.2L710.3 423.1M710.3 423.1L710.4 420.5M710.3 423.1L709.4 425.8M705.4 427.1L702.2 425.7M702.2 425.7L705.3 426.5M702.2 425.7L702.9 429.1M702.9 429.1L703.5 432.5M703.5 432.5L706.2 431M703.5 432.5L700.8 433.5M698.7 437.8L699.3 441.1M699.3 441.1L700.2 438.6M700.2 438.6L701.1 436.1M701.1 436.1L704.4 435.7M704.4 435.7L707.8 435.3M699.3 441.1L696.3 442.2M696.3 442.2L693.4 443.3M693.4 443.3L693.3 440.4M693.4 443.3L695.4 445.5M696.6 450.5L695.8 453.2M695.8 453.2L692.8 453.7M692.8 453.7L689.8 454.2M689.8 454.2L688.1 452.3M688.1 452.3L686.3 450.3M686.3 450.3L683 450M683 450L679.7 449.8M679.7 449.8L678 447M678 447L676.2 444.2M676.2 444.2L673.7 443.9M673.7 443.9L671.1 443.5M671.1 443.5L670.5 441.3M670.5 441.3L669.8 439M669.8 439L672 437.9M672 437.9L674.2 436.9M674.2 436.9L676.2 438.3M676.2 438.3L678.2 439.6M678.2 439.6L677.2 441.9M677.2 441.9L676.2 444.2M695.8 453.2L697.5 455.6M697.5 455.6L699.2 458M699.2 458L700.9 455.7M699.2 458L698.5 460.9M699.7 466.8L701.6 469.9M701.6 469.9L704.8 470.7M704.8 470.7L708.1 471.6M708.1 471.6L711 469.8M711 469.8L713.8 468M713.8 468L716.6 468.4M716.6 468.4L719.4 468.8M719.4 468.8L721.4 466.8M721.4 466.8L723.3 464.8M701.6 469.9L700.1 472.5M700.1 472.5L698.7 475.1M698.7 475.1L696.8 473M698.7 475.1L701 477M700.6 480.1L697.9 481.4M697.9 481.4L695.2 479.5M695.2 479.5L692.5 477.5M692.5 477.5L692.8 474.5M692.8 474.5L693.2 471.4M693.2 471.4L690.8 469.7M690.8 469.7L688.4 468M688.4 468L687.6 465M687.6 465L686.7 461.9M686.7 461.9L684.2 461M684.2 461L681.8 460.2M681.8 460.2L681.9 457.7M684.4 454.5L686.9 453.6M686.9 453.6L688.4 455.7M688.4 455.7L689.8 457.8M689.8 457.8L688.3 459.9M688.3 459.9L686.7 461.9M697.9 481.4L697.8 484.4M697.8 484.4L697.6 487.4M697.6 487.4L700.1 486.7M697.6 487.4L694.2 488.5M692 492.7L693.2 495.9M693.2 495.9L696.5 496M696.5 496L699.8 496.2M699.8 496.2L702.4 494.6M704.8 490.7L704.7 488.5M704.7 488.5L706.9 486.9M706.9 486.9L709 485.4M709 485.4L711.2 486.6M711.2 486.6L713.4 487.7M713.4 487.7L713.5 490M713.5 490L713.6 492.2M713.6 492.2L711.5 493.5M693.2 495.9L691.3 498.3M691.3 498.3L689.3 500.7M689.3 500.7L688 498.6M689.3 500.7L692.2 502.8M692.7 507.4L690.3 509.7M690.3 509.7L690.2 506.5M690.2 506.5L690.1 503.2M690.1 503.2L688 500.7M688 500.7L686 498.1M686 498.1L686.5 495M686.5 495L687.1 491.9M687.1 491.9L684.6 489.8M679.8 488.5L677.4 489.2M677.4 489.2L675.5 487.7M675.5 487.7L673.6 486.2M673.6 486.2L674 484.1M674 484.1L674.4 482.1M674.4 482.1L676.7 480.9M676.7 480.9L679.1 479.7M679.1 479.7L681 481.3M681 481.3L682.9 483M682.9 483L682.5 485.4M690.3 509.7L692.8 511.2M692.8 511.2L695.2 512.7M695.2 512.7L695.9 509.8M695.2 512.7L694.1 515.5M695.3 521L697.5 523.9M697.5 523.9L696.3 521.6M696.3 521.6L695 519.2M695 519.2L695.7 516.6M695.7 516.6L696.4 514M696.4 514L695.3 511M695.3 511L694.1 507.9M697.5 523.9L695.3 526M695.3 526L693 528.2M693 528.2L691.9 525.8M664.6 414.8L662.7 417M662.7 417L660.1 414.9M662.7 417L664.2 419.5M664.2 419.5L665.7 421.9M665.7 421.9L667.6 419.6M665.7 421.9L663.6 423.9M662.5 428.8L663.5 431.9M663.5 431.9L663.5 428.7M663.5 428.7L663.5 425.5M663.5 425.5L665.4 423.5M665.4 423.5L667.3 421.4M667.3 421.4L667.2 418.6M663.5 431.9L660.1 431.5M660.1 431.5L656.8 431.1M656.8 431.1L658 428.5M656.8 431.1L656.2 434.1M654.8 434.4L653.9 431.7M653.9 431.7L656.4 434M656.4 434L658.9 436.2M658.9 436.2L661.4 435.4M658.9 436.2L658.4 438.5M653.9 431.7L652.1 434.3M652.1 434.3L650.3 436.9M650.3 436.9L653.2 437.8M650.3 436.9L647.8 434.3M641.6 431.9L637.9 432M637.9 432L636.7 435M636.7 435L635.5 438M635.5 438L636.5 440.6M636.5 440.6L637.6 443.1M637.6 443.1L636.7 446.4M637.9 432L637.3 428.7M637.3 428.7L636.7 425.4M636.7 425.4L639.6 425.8M636.7 425.4L633.3 425.7M629.8 423L629.6 419.8M629.6 419.8L630 423.1M629.6 419.8L626.7 420.9M626.7 420.9L623.8 422M623.8 422L625.5 424.1M648.4 376.6L648.7 380M648.7 380L646.5 382.4M641.7 384.5L638.9 384.2M648.7 380L652.3 379.7M652.3 379.7L655.9 379.4M655.9 379.4L654.8 376.9M655.9 379.4L657.2 382.7M661.7 386.3L664.9 386.5M664.9 386.5L662.4 384.6M662.4 384.6L659.9 382.6M659.9 382.6L659.5 379.4M659.5 379.4L659.1 376.2M659.1 376.2L656.7 373.8M656.7 373.8L654.2 371.4M664.9 386.5L665.8 389.3M665.8 389.3L666.7 392.1M666.7 392.1L664.3 392.1M666.7 392.1L669.5 394M671.4 398.9L670.5 401.9M670.5 401.9L671 398.8M671 398.8L671.5 395.7M671.5 395.7L669 393.8M659.9 392.1L657.9 390.8M657.9 390.8L658.2 388.5M658.2 388.5L658.5 386.1M658.5 386.1L660.8 385.3M670.5 401.9L673 403.2M673 403.2L675.4 404.5M675.4 404.5L675.9 401.6M675.4 404.5L672.2 405.7M667.8 409.6L666.6 412.4M666.6 412.4L668.3 410.1M668.3 410.1L670 407.8M670 407.8L673.1 408.3M673.1 408.3L676.3 408.7M676.3 408.7L678.4 406M678.4 406L680.6 403.2M680.6 403.2L683.3 402.8M666.6 412.4L664.3 410.2M664.3 410.2L661.9 407.9M661.9 407.9L664.5 406.6M661.9 407.9L659.4 409.3M656.4 407.5L655.9 404.3M655.9 404.3L658 401.8M658 401.8L660.2 399.3M660.2 399.3L663.4 399.7M663.4 399.7L666.7 400M666.7 400L669.2 398.4M674.9 396.9L678 397.1M678 397.1L679.4 394.8M678 397.1L679 399.2M655.9 404.3L655 407.3M655 407.3L654.2 410.3M654.2 410.3L656.7 410.2M654.2 410.3L651.3 410.1M646.7 412.5L645 415.1M645 415.1L647 417.7M647 417.7L649 420.4M645 415.1L642.3 413.4M642.3 413.4L639.6 411.7M639.6 411.7L642 409.7M639.6 411.7L637.5 414.1M632 416.8L628.5 417.1M628.5 417.1L631.3 416.4M631.3 416.4L634.1 415.7M634.1 415.7L636.1 413.4M636.1 413.4L638.1 411.1M638.1 411.1L641.1 411.7M628.5 417.1L628.4 420.7M628.4 420.7L628.3 424.4M628.3 424.4L631.2 423.5M628.3 424.4L625.3 424.1M621.6 426.5L621 429.2M621 429.2L622.1 426.6M622.1 426.6L623.3 423.9M623.3 423.9L626.5 423.7M626.5 423.7L629.6 423.4M629.6 423.4L630.6 421.5M629.6 423.4L631 425.4M621 429.2L617.4 428.6M617.4 428.6L613.7 428M613.7 428L615 425.6M613.7 428L613 431M609.1 432.2L606 430.4M606 430.4L609.1 430.2M609.1 430.2L612.1 429.9M612.1 429.9L614.2 427.9M614.2 427.9L616.3 426M616.3 426L619.5 426.9M619.5 426.9L622.6 427.9M622.6 427.9L625.7 426.3M606 430.4L605.1 433.2M605.1 433.2L604.1 436M604.1 436L606.8 436M604.1 436L600.8 435.7M597.4 438.3L597.5 441.4M597.5 441.4L600 443M600 443L602.6 444.7M602.6 444.7L605.9 444.2M597.5 441.4L594.3 442.3M594.3 442.3L591.1 443.2M591.1 443.2L591.3 440.4M591.1 443.2L590.3 446.3M586 448.4L582.5 447.5M582.5 447.5L581.5 444.6M581.5 444.6L580.4 441.6M580.4 441.6L582.3 438.8M582.3 438.8L584.3 436M584.3 436L583 433.7M583 433.7L581.8 431.3M581.8 431.3L579.2 430.8M579.2 430.8L576.6 430.3M576.6 430.3L576.2 428.1M576.2 428.1L575.7 425.8M575.7 425.8L578 424.9M578 424.9L580.3 424M580.3 424L582.2 425.4M582.9 429.1L581.8 431.3M582.5 447.5L585 450.2M585 450.2L587.4 453M587.4 453L588.9 450.3M587.4 453L588 456.1M591.3 461.3L594.1 463.4M594.1 463.4L596.5 462.2M648.9 463.6L645.7 464.3M645.7 464.3L647.8 462.8M647.8 462.8L650 461.3M650 461.3L650.6 457.9M645.7 464.3L646.5 467.1M646.5 467.1L647.3 469.8M647.3 469.8L649.3 468.4M647.3 469.8L644.4 470.9M642.6 474.9L643.6 477.8M643.6 477.8L646.8 477.9M646.8 477.9L650 478M650 478L652.4 476.1M652.4 476.1L654.7 474.1M654.7 474.1L657.5 474.3M657.5 474.3L660.4 474.6M660.4 474.6L663 473M643.6 477.8L640.2 478.5M640.2 478.5L636.9 479.3M636.9 479.3L637.2 476.3M636.9 479.3L637.5 482.4M634.5 486.1L631 486.6M631 486.6L633.7 485M633.7 485L636.4 483.4M636.4 483.4L636.4 480.7M636.4 483.4L638.5 484.5M631 486.6L629.5 489.2M629.5 489.2L628 491.8M628 491.8L630.4 492.3M628 491.8L625.2 491M620.7 493.3L619 496.4M619 496.4L620.4 498.7M624.9 501.4L628.1 501.9M628.1 501.9L629.3 504.8M619 496.4L616.1 495.6M616.1 495.6L613.2 494.7M613.2 494.7L614.6 492.7M613.2 494.7L612.3 498.1M608.4 499.2L605.5 497.1M605.5 497.1L605.9 493.7M605.9 493.7L606.3 490.3M606.3 490.3L608.3 488.1M608.3 488.1L610.3 485.8M610.3 485.8L609.6 482.8M609.6 482.8L608.9 479.7M608.9 479.7L610.9 477.7M610.9 477.7L612.8 475.8M612.8 475.8L612.5 472.5M605.5 497.1L602.4 497.7M602.4 497.7L599.3 498.3M599.3 498.3L600.8 500.8M599.3 498.3L600.3 494.8M597.9 492.6L594.6 493.9M594.6 493.9L597.7 494.3M597.7 494.3L600.7 494.7M600.7 494.7L602.7 497.3M602.7 497.3L604.7 500M604.7 500L607.9 500.8M607.9 500.8L611.2 501.6M611.2 501.6L612.7 503.7M612.7 503.7L614.2 505.9M614.2 505.9L617.7 505.4M617.7 505.4L621.1 505M594.6 493.9L595 490.3M595 490.3L595.3 486.7M595.3 486.7L597.9 487.9M595.3 486.7L592 486.4M588.3 483.2L588.1 480.4M588.1 480.4L590.5 482.3M588.1 480.4L584.7 479.7M584.7 479.7L581.3 479M581.3 479L581.6 481.5M581.3 479L580.6 476.1M576.5 473.2L573.1 473.3M573.1 473.3L576.1 475.3M576.1 475.3L579 477.2M579 477.2L579.3 480.3M579.3 480.3L579.6 483.4M579.6 483.4L581.7 485.4M615.4 460.8L618.9 461.6M618.9 461.6L616 462.9M616 462.9L613 464.2M613 464.2L612.5 467.2M612.5 467.2L611.9 470.2M611.9 470.2L608.8 471.7M605.6 476.1L605.3 479.1M618.9 461.6L617.6 458.8M617.6 458.8L616.4 456M616.4 456L614.3 457.9M616.4 456L619.2 456.4M623.3 454L624.4 451.2M624.4 451.2L627.3 451.9M627.3 451.9L630.2 452.7M630.2 452.7L628.7 455.1M630.2 452.7L633.4 451.7M773.4 358L775.8 355.2M775.8 355.2L778.7 355.2M778.7 355.2L781.6 355.3M781.6 355.3L783.4 357.3M775.8 355.2L773.3 354M773.3 354L770.7 352.8M770.7 352.8L770.4 355.3M770.7 352.8L771.5 349.6M769.2 346.5L766 346.6M766 346.6L763.3 348.3M763.3 348.3L760.6 350.1M760.6 350.1L760.8 352.9M760.8 352.9L761 355.8M761 355.8L759.3 357.8M759.3 357.8L757.5 359.7M766 346.6L765.2 343.3M765.2 343.3L764.4 340M764.4 340L767.2 340.2M764.4 340L763 342.7M758.5 344L755.4 342.6M755.4 342.6L758.6 342.7M758.6 342.7L761.8 342.8M761.8 342.8L764.7 340.8M770.1 339.5L772.7 340.1M772.7 340.1L774.3 338.5M772.7 340.1L773.3 342.5M755.4 342.6L753.7 345.9M753.7 345.9L752.1 349.2M752.1 349.2L755 349.5M752.1 349.2L749.3 348.5M746.4 350.9L746.3 353.9M746.3 353.9L748.8 355M748.8 355L751.3 356.1M751.3 356.1L754.1 355.2M746.3 353.9L743.1 354M743.1 354L739.9 354.2M739.9 354.2L740.7 351.4M739.9 354.2L737.4 356M732.8 355.5L730.6 353.2M730.6 353.2L733.8 352.8M733.8 352.8L736.9 352.3M736.9 352.3L738.1 349.3M738.1 349.3L739.4 346.4M739.4 346.4L742.6 345.2M742.6 345.2L745.8 344M730.6 353.2L728.1 355.1M728.1 355.1L725.6 356.9M725.6 356.9L728 358.6M725.6 356.9L722.7 356.9M718.9 360.1L717.9 363.4M717.9 363.4L719.7 365.8M719.7 365.8L721.5 368.2M721.5 368.2L724.6 368M724.6 368L727.7 367.8M727.7 367.8L730 369.8M730 369.8L732.3 371.8M732.3 371.8L735.3 372.1M735.3 372.1L738.3 372.5M738.3 372.5L740 375.4M717.9 363.4L715.2 362.6M715.2 362.6L712.5 361.9M712.5 361.9L714.2 359.3M712.5 361.9L712.9 364.8M710.5 368.5L707.7 369.3M707.7 369.3L705 368.2M707.7 369.3L708.7 372.6M708.7 372.6L709.8 375.8M709.8 375.8L712 374.2M709.8 375.8L706.5 376M705.8 378.6L708.3 381M708.3 381L707.5 378.6M707.5 378.6L706.7 376.1M706.7 376.1L708 373.4M708 373.4L709.3 370.8M709.3 370.8L708.5 367.6M708.5 367.6L707.8 364.4M707.8 364.4L709.4 362.1M709.4 362.1L711 359.8M708.3 381L709.9 383.8M709.9 383.8L711.5 386.5M711.5 386.5L708.7 387.1M711.5 386.5L713.8 384.3M718.7 384L721.4 386M721.4 386L718.2 385.3M718.2 385.3L714.9 384.6M714.9 384.6L712.9 386.9M712.9 386.9L710.8 389.2M710.8 389.2L708.1 389.6M708.1 389.6L705.3 390.1M705.3 390.1L704.1 392.9M704.1 392.9L702.9 395.7M702.9 395.7L700.2 396.8M700.2 396.8L697.5 398M697.5 398L697.2 400.5M697.5 398L695.4 396.3M721.4 386L724.7 385.4M724.7 385.4L727.9 384.9M727.9 384.9L726.7 382.5M727.9 384.9L731.4 385.5M736 383.2L737.1 380.4M737.1 380.4L734.4 382M734.4 382L731.7 383.6M731.7 383.6L728.9 381.8M728.9 381.8L726.1 380.1M726.1 380.1L723.1 380.6M737.1 380.4L738.3 383.5M738.3 383.5L739.4 386.6M739.4 386.6L736.7 386.7M739.4 386.6L742.5 387.8M746.3 391.9L746.9 394.8M746.9 394.8L745.4 397.7M745.4 397.7L743.9 400.6M743.9 400.6L740.4 401M740.4 401L737 401.4M737 401.4L735.5 404.2M746.9 394.8L749.6 393.6M749.6 393.6L752.2 392.5M752.2 392.5L750.1 390.3M752.2 392.5L753.6 395.8M757.2 397L759.4 394.8M759.4 394.8L756.5 395.6M756.5 395.6L753.6 396.5M753.6 396.5L751.5 394.6M751.5 394.6L749.3 392.8M749.3 392.8L746.7 393.1M759.4 394.8L761.7 396.7M761.7 396.7L763.9 398.6M763.9 398.6L761.7 399.9M763.9 398.6L766.3 395.8M770.5 396.1L772.4 399M772.4 399L769.6 397.7M769.6 397.7L766.8 396.3M766.8 396.3L764 398M758.7 398.9L756.2 398.1M772.4 399L774.6 397M774.6 397L776.9 394.9M776.9 394.9L774.6 393.7M776.9 394.9L779.5 396.8M784.2 396.8L786.3 394.8M887.8 300.8L886.5 297.6M886.5 297.6L889 298.7M886.5 297.6L883.5 298.1M883.5 298.1L880.5 298.5M880.5 298.5L881.7 300.7M880.5 298.5L879.1 295.6M874.1 292.9L870.6 293.2M870.6 293.2L869.2 295.4M870.6 293.2L869.4 289.9M869.4 289.9L868.2 286.6M868.2 286.6L871.2 286.5M868.2 286.6L865.2 288.4M861.1 287.3L859.8 284.3M859.8 284.3L856.4 284.5M856.4 284.5L853.1 284.6M853.1 284.6L854.2 287.5M853.1 284.6L851.5 281.6M846.5 280.1L843.2 281.6M843.2 281.6L846 281.2M846 281.2L848.7 280.9M848.7 280.9L850.8 282.5M850.8 282.5L852.9 284.1M852.9 284.1L855.4 283.3M843.2 281.6L841.1 278.8M841.1 278.8L839 276M839 276L841.8 275.1M839 276L835.9 277.1M834.3 275.3L835.7 272.5M835.7 272.5L836.7 275.7M836.7 275.7L837.7 278.9M837.7 278.9L840.5 279.9M840.5 279.9L843.3 280.8M843.3 280.8L844.9 283.2M844.9 283.2L846.5 285.6M835.7 272.5L832.5 271.5M832.5 271.5L829.3 270.5M829.3 270.5L829.3 273.2M829.3 270.5L827.1 268.4M822.3 267.9L819.6 269.5M819.6 269.5L819.2 272.9M819.2 272.9L818.8 276.2M818.8 276.2L820.3 278.9M820.3 278.9L821.9 281.6M821.9 281.6L821.3 284.7M821.3 284.7L820.8 287.9M819.6 269.5L816.9 267.6M816.9 267.6L814.1 265.6M814.1 265.6L816.4 264M814.1 265.6L811.7 267.5M807 266.9L804.8 264.4M804.8 264.4L805.6 261.7M805.6 261.7L806.4 259.1M806.4 259.1L809 258.5M809 258.5L811.6 257.9M811.6 257.9L813.3 255.4M813.3 255.4L815.1 252.9M815.1 252.9L818.2 251.9M804.8 264.4L803.5 267.2M803.5 267.2L802.2 270M802.2 270L805.1 270.3M802.2 270L799.9 267.8M795.1 267.3L792.6 269.1M792.6 269.1L792.1 272.4M792.1 272.4L791.6 275.6M791.6 275.6L793.2 278.3M793.2 278.3L794.7 281M794.7 281L793.6 284M793.6 284L792.4 287.1M792.4 287.1L793.7 289.5M792.6 269.1L789.5 267.3M789.5 267.3L786.4 265.4M786.4 265.4L788.6 263.6M786.4 265.4L786.1 268.7M782.7 270.2L779.5 268.3M779.5 268.3L779.1 265M779.1 265L778.7 261.8M778.7 261.8L780.3 259.4M780.3 259.4L781.9 257.1M781.9 257.1L780.6 254.3M780.6 254.3L779.3 251.4M779.3 251.4L780.7 248.4M779.5 268.3L778.7 271.2M778.7 271.2L777.9 274.2M777.9 274.2L780.5 274.1M777.9 274.2L774.6 274.2M770.2 277.1L769.3 280.1M769.3 280.1L772.4 281.5M772.4 281.5L775.4 282.9M775.4 282.9L777.8 281.4M777.8 281.4L780.3 279.9M780.3 279.9L783 281.6M783 281.6L785.8 283.2M785.8 283.2L788.4 281.6M788.4 281.6L791.1 280M791.1 280L794.2 281.3M794.2 281.3L797.4 282.5M797.4 282.5L799.5 280.8M797.4 282.5L797.7 284.6M769.3 280.1L766.3 280.2M766.3 280.2L763.3 280.3M763.3 280.3L764.1 277.4M763.3 280.3L762.1 283.1M758.3 284.7L755.7 283.6M755.7 283.6L756.3 280.6M759.5 276.4L762.1 275.2M762.1 275.2L762.4 272.8M762.1 275.2L764 276.6M755.7 283.6L754.3 286.6M754.3 286.6L753 289.5M753 289.5L755.5 289.8M753 289.5L752.5 286.1M748.3 282.9L744.6 283.1M744.6 283.1L747.5 284.3M750.9 288.4L751.4 291.4M744.6 283.1L743.9 279.6M743.9 279.6L743.1 276.2M743.1 276.2L746 276.5M854.2 396.5L851 396.8M851 396.8L854.1 395.3M854.1 395.3L857.1 393.8M857.1 393.8L857.6 390.4M857.6 390.4L858 386.9M858 386.9L860.5 385.7M860.5 385.7L863.1 384.5M851 396.8L850.5 400.2M850.5 400.2L850 403.7M850 403.7L853 403.1M850 403.7L846.3 403.6M840.6 405.4L838.4 407.2M838.4 407.2L841.6 406.4M838.4 407.2L835.2 407M835.2 407L832 406.9M832 406.9L833 404.4M832 406.9L832.2 409.8M830.9 415.4L829.3 418.1M829.3 418.1L826.3 419.1M826.3 419.1L823.4 420M823.4 420L820.6 418.5M820.6 418.5L817.8 416.9M817.8 416.9L815.5 418.3M817.8 416.9L817.8 414.2M829.3 418.1L832.2 419.9M832.2 419.9L835 421.8M835 421.8L835.6 419.4M835 421.8L832.5 424.1M831.7 429.1L833.4 431.9M833.4 431.9L830.3 433.6M830.3 433.6L827.2 435.4M827.2 435.4L826.6 432.5M827.2 435.4L826 438.7M821.9 441.6L819.1 441.3M819.1 441.3L818.1 438.5M819.1 441.3L817.3 444.1M817.3 444.1L815.4 446.8M815.4 446.8L817.8 447.4M815.4 446.8L812.9 445M807.9 445.4L805.4 447.8M805.4 447.8L805.9 450.9M805.9 450.9L806.4 454M806.4 454L809.1 455.1M809.1 455.1L811.7 456.2M811.7 456.2L812.9 458.7M812.9 458.7L814.1 461.2M814.1 461.2L816.8 461.6M805.4 447.8L802.6 446.6M802.6 446.6L799.7 445.5M799.7 445.5L801.7 443.2M799.7 445.5L798.3 448M793.9 450.5L790.9 450.5M790.9 450.5L793.3 449.2M793.3 449.2L795.7 447.9M795.7 447.9L796 445M796 445L796.4 442.2M796.4 442.2L799.4 440.7M799.4 440.7L802.4 439.3M802.4 439.3L803.1 435.9M803.1 435.9L803.7 432.5M803.7 432.5L805.9 430.6M805.9 430.6L808 428.8M790.9 450.5L792.8 452.9M792.8 452.9L794.7 455.3M794.7 455.3L796 453.3M794.7 455.3L791.6 454.1M786.9 455.2L785.3 457.5M785.3 457.5L786.7 460.5M786.7 460.5L788.1 463.5M788.1 463.5L791.2 464.7M785.3 457.5L782.5 455.6M782.5 455.6L779.7 453.8M779.7 453.8L782.1 452M813.2 343.7L810.6 342.4M810.6 342.4L813.5 343.1M813.5 343.1L816.4 343.8M816.4 343.8L818.5 342.1M818.5 342.1L820.6 340.4M820.6 340.4L823.4 340.5M823.4 340.5L826.2 340.6M826.2 340.6L827.7 338.2M828.1 333.6L827 331.4M827 331.4L828.3 329.3M828.3 329.3L829.7 327.2M829.7 327.2L832.2 327.8M835.8 330.1L837 331.8M837 331.8L835.6 333.8M835.6 333.8L834.3 335.8M834.3 335.8L831.8 335.8M810.6 342.4L809.3 345.3M809.3 345.3L808 348.1M808 348.1L810.7 348.4M808 348.1L804.8 346.4M799.2 347.4L796.8 350.1M796.8 350.1L799 348M799 348L801.2 346M801.2 346L800.9 343.6M800.9 343.6L800.6 341.3M800.6 341.3L803 340.3M807.1 340.9L808.8 342.6M808.8 342.6L807.6 344.5M807.6 344.5L806.3 346.5M806.3 346.5L803.8 346.2M803.8 346.2L801.2 346M796.8 350.1L794.1 351.8M794.1 351.8L791.4 353.5M791.4 353.5L790.9 351.1M791.4 353.5L789.9 356.1M785.6 358.4L782.8 358.1M782.8 358.1L785.4 358.5M785.4 358.5L788 358.9M788 358.9L790 356.4M782.8 358.1L782.2 361.3M782.2 361.3L781.6 364.6M781.6 364.6L784.4 364.2M781.6 364.6L778.1 364M771.9 365.2L769.1 367.1M769.1 367.1L770.7 369.4M770.7 369.4L772.3 371.8M772.3 371.8L774.8 372.6M769.1 367.1L768 364.4M768 364.4L766.8 361.7M766.8 361.7L769.8 361.5M766.8 361.7L766.9 364.7M764.4 369.2L761.7 370.7M761.7 370.7L759.3 372.5M759.3 372.5L757 374.2M757 374.2L759 375.6M757 374.2L754.4 372M748.7 370.4L745.7 371.2M745.7 371.2L745.4 374.1M747.7 379L750.2 381M750.2 381L752.6 380.1M750.2 381L749.7 383.7M745.7 371.2L745.5 368.3M745.5 368.3L745.3 365.4M745.3 365.4L748.1 366.2M745.3 365.4L741.8 364.9M739.4 361.6L740.6 358.9M740.6 358.9L741 362.1M741 362.1L741.4 365.2M741.4 365.2L743.3 367.3M740.6 358.9L737.4 358.7M737.4 358.7L734.3 358.5M734.3 358.5L734.9 360.9M734.3 358.5L734.5 355.4M731.3 353.4L727.9 354.5M727.9 354.5L726.2 357.1M726.2 357.1L724.4 359.8M724.4 359.8L725.4 362.8M725.4 362.8L726.3 365.8M726.3 365.8L723.8 368.3M723.8 368.3L721.4 370.8M721.4 370.8L721.5 374.1M727.9 354.5L729.3 352M729.3 352L730.6 349.5M730.6 349.5L732.4 351.5M837.5 291L840.8 291.1M840.8 291.1L842.8 293.7M842.8 293.7L844.9 296.2M844.9 296.2L844.7 299M844.7 299L844.4 301.9M844.4 301.9L847.2 303.7M847.2 303.7L849.9 305.5M849.9 305.5L850.5 308.1M850.5 308.1L851.2 310.6M840.8 291.1L843.6 289.5M843.6 289.5L846.4 287.9M846.4 287.9L844.1 285.9M846.4 287.9L848 290.5M852.5 292.4L855.5 291.8M855.5 291.8L856 288.4M856 288.4L856.6 285M856.6 285L854.6 283.1M855.5 291.8L855.8 295.3M855.8 295.3L856.2 298.8M856.2 298.8L853.7 298.2M856.2 298.8L859.2 298M862.9 300.7L863.6 304M863.6 304L861.9 306.5M861.9 306.5L860.2 309M860.2 309L856.8 308.6M856.8 308.6L853.4 308.2M853.4 308.2L850.6 310M845 311.2L842.2 310.7M842.2 310.7L840.6 312.4M840.6 312.4L838.9 314.2M838.9 314.2L836.5 313.6M836.5 313.6L834 312.9M834 312.9L833.2 310.9M833.2 310.9L832.4 308.9M832.4 308.9L834 307.5M834 307.5L835.6 306M835.6 306L838.1 306M838.1 306L840.5 306M840.5 306L841.4 308.4M841.4 308.4L842.2 310.7M863.6 304L866.9 303.4M866.9 303.4L870.2 302.9M870.2 302.9L868.7 300.2M870.2 302.9L870.8 305.6M874.4 307.5L877.3 306.7M877.3 306.7L877.2 303.2M877.2 303.2L877.1 299.8M877.1 299.8L875 297.4M875 297.4L872.8 294.9M872.8 294.9L873 292.2M873 292.2L873.1 289.5M873.1 289.5L870.4 287.5M870.4 287.5L867.6 285.5M867.6 285.5L867.5 282.2M867.5 282.2L867.3 278.9M867.3 278.9L865 277.7M867.3 278.9L869.6 277.5M877.3 306.7L877 309.5M877 309.5L876.6 312.3M876.6 312.3L874.3 311.2M876.6 312.3L879.9 313.1M882.1 316.9L880.9 320.1M880.9 320.1L881.4 317.5M881.4 317.5L882 314.9M880.9 320.1L883.4 317.7M883.4 317.7L885.9 315.3M885.9 315.3L883.5 314M885.9 315.3L888.7 317.7M891.7 317.3L892.1 314.5M892.1 314.5L890.2 317.3M890.2 317.3L888.3 320.1M888.3 320.1L884.8 320.1M892.1 314.5L895.7 314.7M895.7 314.7L899.3 315M899.3 315L898.3 317.5M899.3 315L900.2 311.6M904 308.1L907 307.9M907 307.9L904.6 309.6M904.6 309.6L902.2 311.4M902.2 311.4L901.4 314.5M901.4 314.5L900.6 317.6M900.6 317.6L898.3 319.4M898.3 319.4L896 321.2M896 321.2L896.1 323.5M896.1 323.5L896.2 325.8M896.2 325.8L893.7 326.8M893.7 326.8L891.3 327.7M891.3 327.7L889.7 325.9M889.7 325.9L888.1 324.1M888.1 324.1L889.6 322.4M889.6 322.4L891 320.7M891 320.7L893.5 321M893.5 321L896 321.2M907 307.9L906.7 304.3M906.7 304.3L906.4 300.6M906.4 300.6L903.6 301.8M906.4 300.6L909.1 301.4M913.8 299.9L915.7 297.6M915.7 297.6L915.6 294.6M915.6 294.6L915.5 291.6M915.5 291.6L913.5 289.7M913.5 289.7L911.6 287.8M911.6 287.8L912.5 284.6M912.5 284.6L913.5 281.5M915.7 297.6L918.5 298.4M918.5 298.4L921.3 299.2M921.3 299.2L919.8 301.3M921.3 299.2L920.1 296.2M921.8 292.5L924.8 291.7M924.8 291.7L922.3 293.9M922.3 293.9L919.9 296.1M919.9 296.1L919.7 299.1M919.7 299.1L919.4 302M919.4 302L916.8 303.9M916.8 303.9L914.1 305.7M924.8 291.7L923 289.1M923 289.1L921.2 286.4M921.2 286.4L919.5 288.6M921.2 286.4L924.1 286.6M927.6 283.6L928.2 280.5M928.2 280.5L926.9 278.1M926.9 278.1L925.6 275.7M925.6 275.7L923 275.2M923 275.2L920.3 274.6M920.3 274.6L919.5 272M928.2 280.5L930.4 282.6M930.4 282.6L932.6 284.7M932.6 284.7L930.2 286M932.6 284.7L934.4 281.6M939.2 280.5L942.3 282.5M942.3 282.5L944.9 281.1M944.9 281.1L947.5 279.6M947.5 279.6L945.6 277.9M947.5 279.6L947.3 282.5M949.5 287.5L951.8 289.7M951.8 289.7L955.1 290.1M955.1 290.1L958.5 290.5M958.5 290.5L960.6 288.1M960.6 288.1L962.7 285.8M844.1 350.7L840.4 351.1M840.4 351.1L842.4 349.3M842.4 349.3L844.5 347.6M840.4 351.1L841.7 354.5M841.7 354.5L842.9 357.9M842.9 357.9L845.3 356M842.9 357.9L839.9 357.3M837.7 359.8L838.5 362.9M838.5 362.9L835.7 363.6M835.7 363.6L832.8 364.3M832.8 364.3L833 361.5M832.8 364.3L834.7 367.3M833.6 372.2L830.6 374.2M830.6 374.2L831.9 371.3M831.9 371.3L833.1 368.3M833.1 368.3L831.6 365.3M831.6 365.3L830.1 362.3M830.1 362.3L831.2 359.2M831.2 359.2L832.3 356.2M832.3 356.2L830.6 354.3M830.6 354.3L829 352.3M829 352.3L829.8 350.4M829.8 350.4L830.7 348.4M830.7 348.4L833.1 347.9M833.1 347.9L835.6 347.3M835.6 347.3L837.2 349.1M837.2 349.1L838.8 350.8M838.8 350.8L838 353M838 353L837.2 355.2M837.2 355.2L834.7 355.7M834.7 355.7L832.3 356.2M830.6 374.2L829.8 377.7M829.8 377.7L828.9 381.3M828.9 381.3L831.5 381.1M828.9 381.3L826.3 383M825.3 387.1L826.8 389.5M826.8 389.5L825.8 386.4M825.8 386.4L824.8 383.4M824.8 383.4L825.8 380.5M825.8 380.5L826.7 377.5M826.7 377.5L825.2 375.4M825.2 375.4L823.7 373.3M823.7 373.3L825.2 371.6M825.2 371.6L826.7 369.9M826.7 369.9L829.2 370.4M829.2 370.4L831.7 370.8M831.7 370.8L831.7 373.2M831.7 373.2L831.7 375.6M831.7 375.6L829.2 376.6M829.2 376.6L826.7 377.5M826.8 389.5L823.3 389.9M823.3 389.9L819.8 390.3M819.8 390.3L820.4 387.6M819.8 390.3L822.1 392.2M820.8 395.2L817.4 396.4M817.4 396.4L815.6 394.4M815.6 394.4L813.9 392.5M813.9 392.5L814.6 389.7M817.4 396.4L820.5 397.1M820.5 397.1L823.6 397.8M823.6 397.8L823.3 395.3M823.6 397.8L823.1 401.2M825.3 405.7L827.9 406.9M827.9 406.9L829.8 405M827.9 406.9L827.7 409.9M827.7 409.9L827.5 412.9M827.5 412.9L825.2 412M827.5 412.9L830.3 414.5M832.3 419.1L831.4 422M831.4 422L828.3 423M828.3 423L825.3 424M825.3 424L823 422.4M823 422.4L820.7 420.9M820.7 420.9L817.5 421.1M817.5 421.1L814.4 421.2M814.4 421.2L811.7 419.2M811.7 419.2L809.1 417.2M809.1 417.2L806.5 417.8M806.5 417.8L803.9 418.4M831.4 422L834.5 423M834.5 423L837.7 424M837.7 424L837.6 421M837.7 424L835.8 426.6M835.9 431.8L837.9 434.4M837.9 434.4L836.5 431.3M836.5 431.3L835.1 428.3M835.1 428.3L835.7 425.4M835.7 425.4L836.4 422.6M836.4 422.6L834.8 419.5M834.8 419.5L833.3 416.5M833.3 416.5L834.5 413.9M837.9 434.4L835.2 436.2M835.2 436.2L832.4 438.1M832.4 438.1L831.7 435.6M832.4 438.1L835.6 439.6M836.3 443.1L833.8 445M833.8 445L831.2 444M831.2 444L828.6 443.1M828.6 443.1L828.1 440.4M828.1 440.4L827.6 437.6M827.6 437.6L825.1 436.3M825.1 436.3L822.6 435M822.6 435L821.7 432.2M818.3 428.8L815.9 428.1M815.9 428.1L815.1 426M815.1 426L814.3 423.9M814.3 423.9L816 422.4M816 422.4L817.7 421M817.7 421L820.1 421.2M820.1 421.2L822.6 421.3M822.6 421.3L823.3 423.5M823.3 423.5L824.1 425.6M824.1 425.6L822.4 427.5M833.8 445L835 447.8M835 447.8L836.2 450.7M836.2 450.7L838.3 448.9M836.2 450.7L832.8 451.9M830.5 455.8L831.6 458.5M831.6 458.5L835 459M835 459L838.5 459.6M831.6 458.5L828.8 458.2M828.8 458.2L825.9 458M825.9 458L827.2 455.3M825.9 458L826.2 461.3M823.6 465.8L820.8 467M820.8 467L822.9 464.8M822.9 464.8L825 462.6M825 462.6L825.4 459.9M825.4 459.9L825.8 457.1M825.8 457.1L828.9 455.9M828.9 455.9L832.1 454.7M832.1 454.7L833 451.5M833 451.5L834 448.3M834 448.3L837 447.2M840.5 443.9L840.9 441.6M840.9 441.6L843.3 440.6M843.3 440.6L845.6 439.6M845.6 439.6L847.5 441.1M847.5 441.1L849.5 442.6M849.5 442.6L849 445.1M849 445.1L848.6 447.5M848.6 447.5L846.2 448.2M846.2 448.2L843.9 448.8M843.9 448.8L842 447.5M820.8 467L822.1 470M822.1 470L823.3 472.9M823.3 472.9L825.2 471.3M823.3 472.9L820.3 471.7M816.5 473.7L815.6 476.9M815.6 476.9L817.8 474.5M817.8 474.5L819.9 472.1M819.9 472.1L822.8 472M822.8 472L825.8 471.8M825.8 471.8L827.4 469.1M827.4 469.1L829.1 466.3M829.1 466.3L832.1 466.5M832.1 466.5L835.1 466.7M815.6 476.9L813.5 474.3M813.5 474.3L811.4 471.7M811.4 471.7L813.9 470.8M854.3 333.8L853.7 330.3M853.7 330.3L855.7 332.8M855.7 332.8L857.8 335.2M857.8 335.2L860.9 335.6M860.9 335.6L864 336.1M864 336.1L866.3 338.6M871.1 340.8L873.7 340.5M873.7 340.5L874.7 342.8M874.7 342.8L875.8 345.1M875.8 345.1L873.9 346.6M873.9 346.6L872 348.1M872 348.1L869.7 346.9M869.7 346.9L867.5 345.7M867.5 345.7L868 343.4M853.7 330.3L850.8 329.5M850.8 329.5L847.9 328.6M847.9 328.6L848 331M847.9 328.6L848 325M845.2 322.9L842.3 324.4M842.3 324.4L840.3 321.4M840.3 321.4L838.3 318.3M838.3 318.3L840.8 317.7M838.3 318.3L835.1 317M834.1 313.8L836.4 312M836.4 312L835.3 314.9M835.3 314.9L834.2 317.8M834.2 317.8L835.8 320M835.8 320L837.4 322.1M837.4 322.1L836.6 325.2M836.6 325.2L835.8 328.2M835.8 328.2L837.2 330.5M837.2 330.5L838.6 332.8M838.6 332.8L837.4 335.4M837.4 335.4L836.1 338M836.1 338L837.4 340.3M837.4 340.3L838.6 342.5M838.6 342.5L836.9 344.2M836.9 344.2L835.1 345.9M835.1 345.9L832.8 344.8M832.8 344.8L830.4 343.7M830.4 343.7L830.7 341.6M830.7 341.6L831.1 339.5M831.1 339.5L833.6 338.8M833.6 338.8L836.1 338M836.4 312L834.7 309M834.7 309L833 306M833 306L831.4 307.8M833 306L834.9 303.6M833.6 301.2L830.4 301.2M830.4 301.2L832.9 302.7M832.9 302.7L835.5 304.2M835.5 304.2L835.9 307.6M835.9 307.6L836.3 311M836.3 311L838.8 313.2M830.4 301.2L831.6 298.4M831.6 298.4L832.8 295.5M832.8 295.5L835 297.5M832.8 295.5L829.9 293.3M828.4 288.4L829.8 285.7M829.8 285.7L832.8 287.1M832.8 287.1L835.8 288.6M835.8 288.6L836.2 291.3M836.2 291.3L836.5 294.1M836.5 294.1L838.3 296.1M838.3 296.1L840 298M840 298L839.7 301.1M841.3 306L843.2 307.8M843.2 307.8L842.2 309.8M838.5 311.8L836 311.8M836 311.8L835.4 309.5M835.4 309.5L834.9 307.1M834.9 307.1L837.1 305.7M829.8 285.7L828.1 282.7M828.1 282.7L826.4 279.7M826.4 279.7L824.6 281.7M826.4 279.7L829.6 278.4M833.2 273.7L833.7 270.2M833.7 270.2L831.4 267.7M831.4 267.7L829 265.2M829 265.2L825.6 266.1M825.6 266.1L822.2 267M833.7 270.2L836.9 269.7M836.9 269.7L840 269.1M840 269.1L839.5 272M840 269.1L839.8 265.8M842.9 260.9L846.2 259.4M846.2 259.4L849.2 259.5M849.2 259.5L852.2 259.5M852.2 259.5L853.3 257.7M852.2 259.5L853.4 261.9M846.2 259.4L845.3 256.1M845.3 256.1L844.4 252.9M844.4 252.9L842.3 254.4M844.4 252.9L847.2 251.5M849.7 246.9L849.2 243.8M849.2 243.8L845.9 243.3M845.9 243.3L842.5 242.8M849.2 243.8L852.1 241.7M852.1 241.7L855 239.7M855 239.7L855.8 242.3M855 239.7L852.9 236.7M853.2 231.4L855.7 229M855.7 229L853.9 231.7M853.9 231.7L852.1 234.3M852.1 234.3L852.5 237.2M852.5 237.2L852.9 240M852.9 240L850.4 242.2M855.7 229L854.4 226.3M854.4 226.3L853.1 223.5M853.1 223.5L851 225.5M853.1 223.5L856 222.5M855.7 221.4L852.3 221.3M852.3 221.3L854.9 222.2M854.9 222.2L857.4 223.1M852.3 221.3L853.6 218.5M853.6 218.5L854.8 215.7M854.8 215.7L856.6 217.3M854.8 215.7L853.1 213.3M851.8 208L852 205.1M852 205.1L852.4 207.8M852.4 207.8L852.7 210.5M852.7 210.5L855.2 211.7M855.2 211.7L857.7 212.8M857.7 212.8L858.2 216.2M858.2 216.2L858.7 219.5M858.7 219.5L860.8 221.4M860.8 221.4L862.9 223.3M862.9 223.3L862.5 226.6M862.5 226.6L862.2 230M862.2 230L864 231.3M862.2 230L860 230.9M852 205.1L848.8 203.3M848.8 203.3L845.6 201.5M845.6 201.5L845.1 203.9M845.6 201.5L843 199.2M841 200.4L841.5 203.7M841.5 203.7L843.2 205.6M843.2 205.6L845 207.6M845 207.6L847.8 207.5M847.8 207.5L850.5 207.5M841.5 203.7L838.4 204.8M838.4 204.8L835.2 205.8M835.2 205.8L835.2 202.9M835.2 205.8L836.4 208.8M674.5 427.3L675.1 430.2M675.1 430.2L673.6 427.7M673.6 427.7L672.2 425.2M672.2 425.2L669.1 424.9M669.1 424.9L666.1 424.6M666.1 424.6L664.1 422.6M675.1 430.2L678.1 428.7M678.1 428.7L681 427.2M681 427.2L678.9 425.1M681 427.2L682.3 430M683.8 429.4L683.9 425.9M683.9 425.9L682.9 428.8M682.9 428.8L681.8 431.7M683.9 425.9L685.7 428.7M685.7 428.7L687.6 431.5M687.6 431.5L684.7 432.2M687.6 431.5L690.1 434.2M693.5 440.1L694.4 443.3M694.4 443.3L692.1 444.9M692.1 444.9L689.8 446.6M689.8 446.6L686.9 445.2M686.9 445.2L683.9 443.9M694.4 443.3L696.9 445.1M696.9 445.1L699.5 446.9M699.5 446.9L700.3 444M699.5 446.9L701.8 449.7M704.5 449.5L704.9 446.5M704.9 446.5L702.5 448.7M702.5 448.7L700.1 451M700.1 451L697.5 450.3M697.5 450.3L694.9 449.6M694.9 449.6L691.9 450.9M691.9 450.9L688.9 452.2M688.9 452.2L686.1 451.4M686.1 451.4L683.4 450.6M683.4 450.6L681.7 452.3M683.4 450.6L682.9 448.4M704.9 446.5L707.9 448.1M707.9 448.1L711 449.8M711 449.8L709.1 451.5M711 449.8L710.5 446.4M712.4 444.8L714.8 446.7M714.8 446.7L715.6 450.1M715.6 450.1L716.5 453.5M716.5 453.5L714.6 455.9M714.6 455.9L712.8 458.2M712.8 458.2L712.8 461.1M712.8 461.1L712.9 463.9M712.9 463.9L711 465.9M711 465.9L709.1 468M709.1 468L709.9 470.3M709.9 470.3L710.6 472.7M710.6 472.7L708.9 474M708.9 474L707.2 475.4M707.2 475.4L704.8 475M704.8 475L702.4 474.6M702.4 474.6L701.6 472.6M702.6 468.9L704.3 467.1M704.3 467.1L706.7 467.5M706.7 467.5L709.1 468M714.8 446.7L715.6 444M715.6 444L716.4 441.2M716.4 441.2L713.8 441.4M716.4 441.2L719.3 442.2M724 440.5L726 437.8M726 437.8L723.2 439.5M723.2 439.5L720.5 441.2M720.5 441.2L717.8 439.8M717.8 439.8L715.1 438.5M726 437.8L728.1 439.9M728.1 439.9L730.3 442.1M730.3 442.1L727.5 443.4M730.3 442.1L730.9 438.6M734.9 435.7L738.2 436.3M738.2 436.3L739.5 438.9M739.5 438.9L740.8 441.5M740.8 441.5L738.9 444.3M738.9 444.3L736.9 447.2M736.9 447.2L737.5 450.3M737.5 450.3L738.2 453.4M738.2 453.4L736.5 456.3M736.5 456.3L734.9 459.2M734.9 459.2L736.1 461.2M734.9 459.2L732.5 459.3M738.2 436.3L740.2 433.8M740.2 433.8L742.2 431.4M742.2 431.4L739.6 430.4M817.9 363.6L815.6 366.3M815.6 366.3L815.3 363.4M815.3 363.4L815 360.5M815.6 366.3L819.3 366.6M819.3 366.6L823 366.9M823 366.9L822.3 364.2M823 366.9L821.1 369.7M821.7 374.3L824.2 376.1M824.2 376.1L827.1 375.8M884 377.2L880.4 377.4M880.4 377.4L882.7 376.1M882.7 376.1L885 374.8M885 374.8L885.4 371.4M885.4 371.4L885.9 368.1M885.9 368.1L888.4 365.9M888.4 365.9L890.8 363.6M880.4 377.4L880.3 380.7M880.3 380.7L880.2 384M880.2 384L882.8 383.2M880.2 384L877.1 384M874.4 387.6L875 391.1M875 391.1L875.8 388.7M875.8 388.7L876.6 386.2M876.6 386.2L879.4 384.5M875 391.1L871.6 392.4M871.6 392.4L868.3 393.8M868.3 393.8L868.2 391.3M868.3 393.8L868.1 397.2M865 401.4L862.1 402.2M862.1 402.2L863.9 400.1M863.9 400.1L865.8 397.9M865.8 397.9L865.2 394.5M865.2 394.5L864.7 391.1M864.7 391.1L865.9 388.6M865.9 388.6L867.1 386.1M867.1 386.1L865.2 383.4M865.2 383.4L863.3 380.6M863.3 380.6L860.7 380.5M858.7 374.5L860.8 373.1M860.8 373.1L862.9 374.4M862.9 374.4L865 375.8M865 375.8L864.1 378.2M864.1 378.2L863.3 380.6M862.1 402.2L864.3 404.1M864.3 404.1L866.5 405.9M866.5 405.9L867.5 403.3M866.5 405.9L864.4 408.4M865.1 412.8L868 414.6M868 414.6L870.8 414.2M870.8 414.2L873.6 413.8M873.6 413.8L875.7 411.6M875.7 411.6L877.8 409.5M877.8 409.5L880.8 409.4M880.8 409.4L883.8 409.2M883.8 409.2L884.8 407.3M883.8 409.2L885.1 411.4M868 414.6L866.4 417.3M866.4 417.3L864.8 420M864.8 420L863.2 418.1M864.8 420L867.6 421.7M869.2 425.8L868 428.4M868 428.4L868.5 425.3M868.5 425.3L869.1 422.2M869.1 422.2L867.2 420.5M865.7 416.8L866.2 414.8M866.2 414.8L868.5 413.9M872.8 414.3L874.7 415.7M874.7 415.7L874.3 417.8M874.3 417.8L873.8 419.9M873.8 419.9L871.5 421.1M871.5 421.1L869.1 422.2M868 428.4L870.3 430.5M870.3 430.5L872.5 432.6M872.5 432.6L873.8 429.9M872.5 432.6L869.5 432.6M868.8 435.4L871.2 438.3M871.2 438.3L874 438.4M874 438.4L876.8 438.6M876.8 438.6L879.2 436.9M871.2 438.3L867.7 437.4M867.7 437.4L864.2 436.5M864.2 436.5L865.6 434.3M864.2 436.5L863.9 439.5M860.8 442.8L858 443.1M858 443.1L857.1 440.4M857.1 440.4L856.3 437.7M858 443.1L858.3 446.7M858.3 446.7L858.6 450.2M858.6 450.2L861.2 449.1M858.6 450.2L855.6 449.8M851.9 452.8L851.2 456.2M851.2 456.2L852.9 458.5M852.9 458.5L854.7 460.8M854.7 460.8L857.5 460.5M857.5 460.5L860.2 460.3M860.2 460.3L862.8 462.5M862.8 462.5L865.3 464.7M865.3 464.7L868.5 464.9M851.2 456.2L848.3 455.2M848.3 455.2L845.4 454.1M845.4 454.1L847.3 451.8M845.4 454.1L846.8 457M666.5 375.3L668.8 377M668.8 377L666 375.4M666 375.4L663.3 373.9M663.3 373.9L660 374.4M660 374.4L656.7 374.9M656.7 374.9L653.7 373.3M653.7 373.3L650.7 371.7M650.7 371.7L647.4 372.8M647.4 372.8L644.1 373.9M668.8 377L670.3 373.7M670.3 373.7L671.7 370.5M671.7 370.5L668.8 370.2M671.7 370.5L674.1 373.2M679.2 374.8L682 373.8M682 373.8L682.4 377M682.4 377L682.8 380.2M682.8 380.2L679.9 379.6M682.8 380.2L684.4 377.4M687 377.3L687.9 380.2M687.9 380.2L685.3 377.9M687.9 380.2L691 380.3M691 380.3L694.2 380.4M694.2 380.4L693.5 377.9M694.2 380.4L695.2 383.7M699.2 386.7L702.2 386.5M702.2 386.5L703.6 384.3M703.6 384.3L705.1 382.1M705.1 382.1L704 378.9M704 378.9L702.9 375.8M702.9 375.8L704.3 373.3M702.2 386.5L703.9 389.7M703.9 389.7L705.7 392.9M705.7 392.9L703.2 393.4M705.7 392.9L708 390.5M712.9 389.3L715.5 390.6M715.5 390.6L716.8 393.2M716.8 393.2L718.2 395.9M718.2 395.9L720.5 396M718.2 395.9L716.7 398.1M864.4 324.8L867.1 322.8M867.1 322.8L870.2 323.4M870.2 323.4L873.2 324M873.2 324L874.4 326.8M874.4 326.8L875.6 329.6M875.6 329.6L878.3 330.3M878.3 330.3L880.9 331.1M880.9 331.1L883 333.6M888.4 335.5L891.7 334.9M891.7 334.9L892.5 332.8M891.7 334.9L893.1 336.6M867.1 322.8L865.9 319.7M865.9 319.7L864.6 316.7M864.6 316.7L862.3 318.7M864.6 316.7L867.5 315.9M869.3 311.8L868.3 308.5M868.3 308.5L865.5 306.9M868.3 308.5L871.4 308.9M871.4 308.9L874.5 309.3M874.5 309.3L873.3 311.8M874.5 309.3L873.1 306.1M875.3 303.9L878.7 304.9M878.7 304.9L878.5 308.3M878.5 308.3L878.3 311.6M878.3 311.6L875.6 313.6M875.6 313.6L872.8 315.5M878.7 304.9L881.3 303.5M881.3 303.5L883.8 302.1M883.8 302.1L881.9 300.4M883.8 302.1L885.2 305.5M889.4 307.8L892.2 306.8M892.2 306.8L893 303.8M892.2 306.8L892.9 310.3M892.9 310.3L893.5 313.8M893.5 313.8L891 313.5M893.5 313.8L896.5 312.6M900.2 314.8L901 318.2M901 318.2L899.5 321.2M899.5 321.2L898 324.2M898 324.2L894.6 324.6M894.6 324.6L891.2 324.9M901 318.2L903.1 316.2M903.1 316.2L905.2 314.2M905.2 314.2L902.9 313M639.9 371.5L637.1 370.6M637.1 370.6L640 370.2M640 370.2L642.9 369.7M642.9 369.7L644.4 367.2M644.4 367.2L645.9 364.7M645.9 364.7L648.7 364.7M648.7 364.7L651.5 364.7M651.5 364.7L653.8 362.1M653.8 362.1L656.1 359.4M637.1 370.6L636.5 373.5M636.5 373.5L635.9 376.5M635.9 376.5L638.7 376.1M635.9 376.5L634 373.4M629.9 368L627.7 365.6M627.7 365.6L624.4 365M624.4 365L621.2 364.3M621.2 364.3L618.9 366.6M618.9 366.6L616.6 368.9M616.6 368.9L613.6 369.1M613.6 369.1L610.5 369.4M610.5 369.4L608 371.5M608 371.5L605.5 373.7M605.5 373.7L602.3 374M602.3 374L599.2 374.3M599.2 374.3L598.2 376.3M598.2 376.3L597.1 378.3M597.1 378.3L594.7 378.7M590.3 373.1L591.3 371M591.3 371L593.8 371.1M593.8 371.1L596.3 371.2M596.3 371.2L597.7 372.8M597.7 372.8L599.2 374.3M627.7 365.6L630.1 364M630.1 364L632.5 362.3M632.5 362.3L633.2 364.6M632.5 362.3L632.7 359.2M634.9 358.9L636.8 361.7M636.8 361.7L634.5 360.1M634.5 360.1L632.2 358.4M632.2 358.4L629.1 359.1M629.1 359.1L625.9 359.9M625.9 359.9L623.3 358.7M623.3 358.7L620.6 357.6M620.6 357.6L617.9 358.7M617.9 358.7L615.2 359.7M615.2 359.7L612.6 358M636.8 361.7L639 358.7M639 358.7L641.1 355.8M641.1 355.8L638.2 354.9M641.1 355.8L643 357.9M646.8 357.7L648.6 355.2M648.6 355.2L645.7 355.8M645.7 355.8L642.8 356.4M642.8 356.4L639.7 355M639.7 355L636.6 353.7M636.6 353.7L634.3 354.9M634.3 354.9L631.9 356.1M631.9 356.1L628.8 355.4M648.6 355.2L648.4 358.7M648.4 358.7L648.3 362.3M648.3 362.3L645.4 361.1M648.3 362.3L651.1 360.9M655.9 362.5L657.9 365.6M657.9 365.6L655.6 363.9M655.6 363.9L653.3 362.1M653.3 362.1L650.4 362.4M657.9 365.6L660.6 363.7M660.6 363.7L663.4 361.8M663.4 361.8L661 360.1M581.5 464.7L581.4 461.8M581.4 461.8L582.8 464.9M582.8 464.9L584.1 468M584.1 468L586.9 469.4M586.9 469.4L589.7 470.9M589.7 470.9L590.7 473.8M590.7 473.8L591.7 476.8M591.7 476.8L594.1 477.2M591.7 476.8L590.2 478.5M581.4 461.8L578.6 461.6M578.6 461.6L575.7 461.4M575.7 461.4L576.4 464.1M575.7 461.4L577.3 458.8M575.8 455L572.7 453.8M572.7 453.8L575.4 455.4M575.4 455.4L578.2 457.1M578.2 457.1L579.2 459.6M579.2 459.6L580.3 462.2M580.3 462.2L583.2 463.5M583.2 463.5L586.1 464.9M586.1 464.9L586.7 467.9M586.7 467.9L587.3 470.9M572.7 453.8L573 450.5M573 450.5L573.3 447.3M573.3 447.3L575.8 448.3M573.3 447.3L570.4 445.1M568.9 439.8L570.2 436.8M570.2 436.8L573.1 435.2M573.1 435.2L576.1 433.7M576.1 433.7L578.8 434.7M578.8 434.7L581.6 435.7M581.6 435.7L583.5 434.5M587.8 434.1L590.1 434.9M590.1 434.9L590.6 436.9M590.6 436.9L591 438.8M591 438.8L589.1 440.4M589.1 440.4L587.2 441.9M587.2 441.9L584.9 441M584.9 441L582.5 440.1M582.5 440.1L582.1 437.9M582.1 437.9L581.6 435.7M570.2 436.8L568.7 433.9M568.7 433.9L567.2 431M567.2 431L565.3 432.9M567.2 431L570.2 430.2M571.7 426.4L570.1 423.5M570.1 423.5L567 423.4M567 423.4L563.8 423.4M563.8 423.4L562.6 425.2M562.6 425.2L561.3 427M561.3 427L558.8 427.2M558.8 427.2L556.3 427.4M556.3 427.4L555.1 425.4M562.6 421.3L563.8 423.4M570.1 423.5L572.2 421.3M572.2 421.3L574.3 419.1M574.3 419.1L575.6 421.7M574.3 419.1L575.2 416.4M577.9 416.2L579.6 418.5M579.6 418.5L576.9 416.6M576.9 416.6L574.2 414.6M574.2 414.6L571.5 414.6M571.5 414.6L568.8 414.6M568.8 414.6L566.8 412.9M566.8 412.9L564.8 411.2M564.8 411.2L561.9 411.8M558.1 414.5L557.4 416.5M557.4 416.5L554.9 417M554.9 417L552.5 417.5M552.5 417.5L550.8 416M550.8 416L549.1 414.6M549.1 414.6L549.9 412.3M549.9 412.3L550.6 410.1M550.6 410.1L553.1 409.7M553.1 409.7L555.5 409.3M555.5 409.3L557.2 410.9M579.6 418.5L581.3 415.7M581.3 415.7L583 412.8M583 412.8L580.2 412.2M583 412.8L585 415.7M589.1 415.7L591.3 412.8M591.3 412.8L590 410.2M590 410.2L588.8 407.6M588.8 407.6L585.6 406.9M585.6 406.9L582.5 406.1M582.5 406.1L581.2 403.6M581.2 403.6L579.9 401M579.9 401L577.6 400.9M579.9 401L581.1 399.1M591.3 412.8L593.4 414.7M593.4 414.7L595.5 416.6M595.5 416.6L593.2 418M595.5 416.6L596.2 413.3M599.3 412.2L601.9 414.4M601.9 414.4L600.6 417.3M600.6 417.3L599.3 420.2M599.3 420.2L596.7 421.1M596.7 421.1L594 422M594 422L593.5 424.7M594 422L592.2 420.5M601.9 414.4L602.7 411.6M602.7 411.6L603.5 408.8M603.5 408.8L600.5 408.9M603.5 408.8L607 407.8M608 404.7L605.4 402.5M605.4 402.5L605.6 405.6M605.4 402.5L608.1 401.2M608.1 401.2L610.8 399.9M610.8 399.9L611.1 402.4M610.8 399.9L609.7 397M611.8 392.6L614.9 391.2M614.9 391.2L617 393.4M617 393.4L619 395.6M619 395.6L618.3 398.9M618.3 398.9L617.6 402.1M617.6 402.1L619.5 404.6M619.5 404.6L621.3 407.1M621.3 407.1L620.5 409.9M620.5 409.9L619.8 412.6M619.8 412.6L621.9 415.3M614.9 391.2L614 388.4M614 388.4L613.1 385.7M613.1 385.7L611.1 387.2M613.1 385.7L615.7 383.3M620.4 378.4L622.4 376M622.4 376L619.3 376.9M619.3 376.9L616.2 377.9M616.2 377.9L614 375.8M614 375.8L611.8 373.7M611.8 373.7L609.5 374.4M611.8 373.7L612.4 371M622.4 376L625.5 377.3M625.5 377.3L628.5 378.5M628.5 378.5L626.6 380.6M628.5 378.5L630.6 375.6M633.4 376.2L634.3 379.8M634.3 379.8L631.3 378M631.3 378L628.3 376.2M628.3 376.2L625.3 377M625.3 377L622.3 377.8M622.3 377.8L619.5 376.6M619.5 376.6L616.6 375.3M616.6 375.3L614.6 376.4M610.3 376.5L608 375.4M608 375.4L607.7 373.3M607.7 373.3L607.5 371.3M607.5 371.3L609.5 370.3M609.5 370.3L611.6 369.2M611.6 369.2L613.8 369.9M613.8 369.9L616.1 370.6M616.1 370.6L616.4 373M616.4 373L616.6 375.3M634.3 379.8L636.7 381.9M636.7 381.9L639.1 384M639.1 384L640.2 381.4M639.1 384L637.5 387M636.6 393.3L637.2 396.5M637.2 396.5L634.4 395.9M634.4 395.9L631.6 395.4M631.6 395.4L632.9 393.2M638.9 347.5L640.9 350.4M640.9 350.4L637.8 350.1M637.8 350.1L634.7 349.7M634.7 349.7L632.6 352.3M632.6 352.3L630.6 354.8M630.6 354.8L627.7 354.5M627.7 354.5L624.9 354.3M624.9 354.3L622.6 356.2M622.6 356.2L620.2 358.1M620.2 358.1L620.4 360.5M620.4 360.5L620.5 362.9M620.5 362.9L618.1 363.8M618.1 363.8L615.7 364.8M615.7 364.8L614.1 363M614.1 363L612.4 361.2M612.4 361.2L613.8 359.5M613.8 359.5L615.2 357.8M615.2 357.8L617.7 358M617.7 358L620.2 358.1M640.9 350.4L643.7 349.3M643.7 349.3L646.5 348.2M646.5 348.2L644.6 346M646.5 348.2L649.9 347M650.2 344.9L647.3 343.9M647.3 343.9L649.4 346M649.4 346L651.6 348.2M651.6 348.2L651.7 351.3M651.7 351.3L651.8 354.5M651.8 354.5L654 356.2M654 356.2L656.2 358M656.2 358L656.1 360.8M647.3 343.9L647.5 340.5M647.5 340.5L647.7 337.2M647.7 337.2L650.1 338.2M647.7 337.2L644.9 338.9M641.7 337.5L641.3 334.4M641.3 334.4L643.7 332.3M643.7 332.3L646.1 330.2M646.1 330.2L649.4 330.9M649.4 330.9L652.6 331.7M652.6 331.7L654.6 329.5M654.6 329.5L656.6 327.4M656.6 327.4L659.7 327.6M659.7 327.6L662.7 327.9M641.3 334.4L637.9 335.1M637.9 335.1L634.5 335.7M634.5 335.7L635.8 338M634.5 335.7L635.7 332.2M637.7 325.7L638.5 322.6M638.5 322.6L636.6 324.9M636.6 324.9L634.7 327.1M634.7 327.1L632.1 327.4M632.1 327.4L629.4 327.8M629.4 327.8L628.5 329.9M629.4 327.8L627.9 325.8M638.5 322.6L641.7 320.9M641.7 320.9L644.8 319.2M644.8 319.2L645.3 322.2M644.8 319.2L643.8 316.3M645.9 312.4L649 311.4M649 311.4L646.6 312.7M646.6 312.7L644.2 314M644.2 314L644.1 316.3M644.1 316.3L644 318.7M644 318.7L641.8 319.6M641.8 319.6L639.6 320.6M639.6 320.6L637.5 319.6M635.4 316.5L635.5 314.3M635.5 314.3L637.7 313.4M637.7 313.4L639.9 312.6M639.9 312.6L642 313.3M642 313.3L644.2 314M649 311.4L651.5 309.8M651.5 309.8L654 308.1M654 308.1L652.1 306.7M654 308.1L654.5 311.5M658.6 314.7L662.2 314.6M662.2 314.6L659.5 312.7M659.5 312.7L656.7 310.9M656.7 310.9L656.8 307.7M656.8 307.7L656.8 304.4M662.2 314.6L662.6 318.2M662.6 318.2L663.1 321.8M663.1 321.8L660.1 321.1M663.1 321.8L665.5 319.5M666.1 319.9L664.2 322.7M664.2 322.7L665.3 319.6M665.3 319.6L666.4 316.5M666.4 316.5L664.2 314.1M664.2 314.1L661.9 311.6M661.9 311.6L663 308.4M849.7 266.1L848.4 268.7M848.4 268.7L845.7 270.2M845.7 270.2L843 271.7M843 271.7L840 271.2M840 271.2L836.9 270.7M836.9 270.7L835.1 272.8M836.9 270.7L835.9 268.2M848.4 268.7L851.6 268.2M851.6 268.2L854.9 267.7M854.9 267.7L853.7 265.5M854.9 267.7L857.8 267.6M859.8 264.9L858.8 262.2M858.8 262.2L858.9 265.7M858.9 265.7L859 269.1M859 269.1L857 271.3M857 271.3L855 273.4M858.8 262.2L862 262.5M862 262.5L865.2 262.8M865.2 262.8L863.9 265.6M865.2 262.8L866.3 259.9M869.9 254.8L872.4 252.7M872.4 252.7L870.7 255.2M870.7 255.2L869.1 257.8M869.1 257.8L869.6 260.9M869.6 260.9L870 264.1M870 264.1L867.8 266.3M867.8 266.3L865.6 268.6M865.6 268.6L865.2 271.7M866.5 276.7L868.4 278.5M868.4 278.5L867.2 280.4M867.2 280.4L866.1 282.4M866.1 282.4L863.5 282.1M863.5 282.1L861 281.8M861 281.8L860.5 279.6M860.5 279.6L860.1 277.5M860.1 277.5L862.4 276.2M872.4 252.7L870.2 249.9M870.2 249.9L867.9 247.2M867.9 247.2L866.5 249.6M867.9 247.2L870.2 244.7M870.7 239.6L869 237.2M869 237.2L869.9 240.3M869.9 240.3L870.8 243.4M869 237.2L870.5 234.6M870.5 234.6L872 232.1M872 232.1L873.8 234.3M872 232.1L869.8 230.4M870.8 226.8L874 225.1M874 225.1L872.2 227.8M872.2 227.8L870.4 230.5M870.4 230.5L871.1 233.1M871.1 233.1L871.8 235.7M871.8 235.7L874.5 236.4M871.8 235.7L869.9 237.7M874 225.1L871.9 222.9M871.9 222.9L869.8 220.7M869.8 220.7L868.7 222.9M869.8 220.7L871.6 217.6M870.4 212.4L867.5 210.1M867.5 210.1L864.8 211.2M864.8 211.2L862.1 212.3M862.1 212.3L861.3 215M867.5 210.1L868.1 206.9M868.1 206.9L868.8 203.6M868.8 203.6L871.1 205M868.8 203.6L865.6 205M861.4 203L860.3 199.7M860.3 199.7L862.4 202.2M871.3 208.2L872.6 211M872.6 211L875.1 212.3M875.1 212.3L877.7 213.6M877.7 213.6L880 212M877.7 213.6L877.9 215.9M860.3 199.7L857.5 200M857.5 200L854.7 200.4M854.7 200.4L856 203.1M854.7 200.4L853.4 197.6M561.7 458.1L561.1 461.2M561.1 461.2L557.8 462.2M557.8 462.2L554.6 463.3M554.6 463.3L551.9 461.3M551.9 461.3L549.3 459.3M549.3 459.3L546.7 459.6M561.1 461.2L564 462.5M564 462.5L566.9 463.7M566.9 463.7L567.1 461M566.9 463.7L565.2 466.9M563.3 473.3L563.3 476.7M563.3 476.7L566.4 477.3M566.4 477.3L569.6 478M569.6 478L572.3 476.5M572.3 476.5L575.1 475.1M575.1 475.1L578.3 476M578.3 476L581.5 476.9M581.5 476.9L584.5 475.2M584.5 475.2L587.5 473.5M587.5 473.5L590.4 474.6M563.3 476.7L560.3 477.7M560.3 477.7L557.3 478.7M557.3 478.7L557.3 475.8M557.3 478.7L561 478.7M564.8 481.6L564.9 484.4M564.9 484.4L562.6 482.1M562.6 482.1L560.3 479.7M560.3 479.7L557.3 479.7M557.3 479.7L554.4 479.7M554.4 479.7L552.1 477.6M546.5 476.8L543.2 477.9M564.9 484.4L567.9 485.4M567.9 485.4L570.9 486.4M570.9 486.4L570.9 484M570.9 486.4L570.8 489.8M573.9 493.2L577 493.2M577 493.2L579.1 490.8M579.1 490.8L581.2 488.4M581.2 488.4L581.1 485.7M581.1 485.7L580.9 483M580.9 483L582.8 480.9M582.8 480.9L584.6 478.8M584.6 478.8L584.7 475.5M584.7 475.5L584.9 472.2M584.9 472.2L583 470.9M584.9 472.2L587.3 470.9M577 493.2L577.1 496.2M577.1 496.2L577.2 499.1M577.2 499.1L574.8 498.4M577.2 499.1L580.2 499.9M582.9 504.2L582.5 507.7M582.5 507.7L581.2 504.8M581.2 504.8L580 502M582.5 507.7L585.2 509.3M585.2 509.3L587.8 511M587.8 511L588.5 508M587.8 511L586.8 514.3M588.8 517.4L591.8 517.1M591.8 517.1L593.8 515.5M593.8 515.5L595.9 513.8M595.9 513.8L595.5 511.4M595.9 513.8L598 514.7M591.8 517.1L591.7 520.4M591.7 520.4L591.5 523.7M591.5 523.7L588.7 522.6M591.5 523.7L595 523.4M599.5 525.8L600.4 528.4M600.4 528.4L597.7 530.6M597.7 530.6L595 532.7M595 532.7L592.1 531.5M592.1 531.5L589.2 530.3M600.4 528.4L603.3 527.8M603.3 527.8L606.3 527.1M606.3 527.1L604.9 524.9M606.3 527.1L604.3 529.7M605.8 533.4L609.2 534.5M609.2 534.5L607.2 532.1M607.2 532.1L605.3 529.7M605.3 529.7L605.4 526.4M605.4 526.4L605.5 523M605.5 523L603.7 520.6M603.7 520.6L601.9 518.2M601.9 518.2L602.8 514.9M602.8 514.9L603.8 511.6M609.2 534.5L607.8 537.1M607.8 537.1L606.4 539.7M606.4 539.7L604.3 537.5M606.4 539.7L608.2 541.9M709.8 512.3L712.7 513.9M712.7 513.9L712.6 516.6M712.6 516.6L712.4 519.2M712.4 519.2L710 521.4M710 521.4L707.5 523.6M707.5 523.6L707.3 526.6M707.3 526.6L707 529.7M707 529.7L704 531.2M704 531.2L701.1 532.7M701.1 532.7L701 535.4M701.1 532.7L699.2 531.6M712.7 513.9L714.9 511.2M714.9 511.2L717 508.4M717 508.4L714.6 507.5M717 508.4L718.6 510.8M723.2 511.3L726.3 509.4M726.3 509.4L726.7 506.7M726.7 506.7L727.1 504M727.1 504L725.2 501.5M725.2 501.5L723.2 499.1M723.2 499.1L720.8 499.4M720.8 499.4L718.3 499.7M718.3 499.7L716.7 497.8M716.7 497.8L715.2 495.9M715.2 495.9L716.1 493.7M716.1 493.7L717 491.4M717 491.4L719.5 491.5M723.5 493L725.1 494.5M725.1 494.5L724.1 496.8M724.1 496.8L723.2 499.1M726.3 509.4L726.8 513M726.8 513L727.3 516.6M727.3 516.6L724.4 516M727.3 516.6L730.6 515.9M734.8 518.7L735.6 522.1M735.6 522.1L733.4 520M733.4 520L731.2 517.8M731.2 517.8L728.2 518M728.2 518L725.1 518.2M735.6 522.1L738.8 520.7M738.8 520.7L741.9 519.2M741.9 519.2L740.2 517.4M741.9 519.2L743.1 522.3M746.9 523.5L749.5 521.7M749.5 521.7L746.9 521.2M749.5 521.7L752 523.9M752 523.9L754.5 526.1M754.5 526.1L752 527.5M754.5 526.1L755.2 522.9M759.1 521.2L762.3 522.6M762.3 522.6L759.5 521.6M759.5 521.6L756.7 520.7M756.7 520.7L754.2 521.9M754.2 521.9L751.8 523.1M751.8 523.1L748.7 521.9M742.5 521.7L739.5 522.7M762.3 522.6L763.9 519.7M763.9 519.7L765.6 516.8M765.6 516.8L762.9 516.3M765.6 516.8L768.6 518M773 515.9L774.5 512.7M774.5 512.7L772.6 510M772.6 510L770.8 507.3M770.8 507.3L767.5 506.9M767.5 506.9L764.2 506.4M764.2 506.4L762.9 508.1M764.2 506.4L763.4 504.3M774.5 512.7L775.8 515.5M775.8 515.5L777.1 518.3M777.1 518.3L774.3 518.6M777.1 518.3L780.6 518.5M781.7 521.2L779.3 523.8M779.3 523.8L778.2 526.5M778.2 526.5L777.1 529.2M777.1 529.2L779.6 529.3M777.1 529.2L774.8 527.5M770.2 527.4L767.9 529.1M767.9 529.1L771 528.5M771 528.5L774.2 528M774.2 528L777 529.7M782.7 531L785.7 530.6M767.9 529.1L765.1 530.1M765.1 530.1L762.3 531.1M762.3 531.1L762.2 528M762.3 531.1L763.7 533.6M762.5 538.3L759.9 540.5M759.9 540.5L761 538M761 538L762 535.6M759.9 540.5L760.4 543.3M760.4 543.3L761 546.1M761 546.1L763.6 544.6M815.2 481.6L818.4 481.8M818.4 481.8L815.9 483M815.9 483L813.3 484.2M813.3 484.2L812.4 486.7M812.4 486.7L811.4 489.3M811.4 489.3L808.4 490.8M808.4 490.8L805.4 492.3M805.4 492.3L804.5 494.9M805.3 499.4L807 501.3M807 501.3L806.2 503.4M806.2 503.4L805.4 505.5M805.4 505.5L803 506M803 506L800.5 506.5M800.5 506.5L798.8 504.8M798.8 504.8L797.2 503.2M797.2 503.2L798 501.3M798 501.3L798.8 499.3M798.8 499.3L801.2 498.4M818.4 481.8L820.5 479.1M820.5 479.1L822.5 476.5M822.5 476.5L820.1 475.6M822.5 476.5L824.3 478.7M828 478.7L830 476.5M830 476.5L830.3 473.6M830.3 473.6L830.6 470.6M830.6 470.6L828.2 468.6M828.2 468.6L825.9 466.5M825.9 466.5L826 463.2M826 463.2L826 460M826 460L823.6 458.6M823.6 458.6L821.2 457.1M821.2 457.1L819.3 458.3M821.2 457.1L821.2 454.9M830 476.5L831.9 478.8M831.9 478.8L833.8 481.1M833.8 481.1L831.5 482M833.8 481.1L835.4 478.2M840 473.4L843 471.5M843 471.5L845.7 472.3M845.7 472.3L848.4 473.2M848.4 473.2L849.5 476.2M849.5 476.2L850.6 479.1M850.6 479.1L853.1 479.5M850.6 479.1L848.9 481.2M628.6 511.9L630.4 509M630.4 509L630.3 512.4M630.4 509L627.3 508.8M627.3 508.8L624.2 508.5M624.2 508.5L624.9 511.2M624.2 508.5L624.5 505.7M621.3 502.8L617.8 502.8M617.8 502.8L620.8 504.3M620.8 504.3L623.8 505.7M623.8 505.7L625.1 508.5M625.1 508.5L626.4 511.3M626.4 511.3L629.8 511.6M629.8 511.6L633.3 512M633.3 512L635.1 514.5M617.8 502.8L618.8 500.2M618.8 500.2L619.8 497.5M619.8 497.5L621.8 499.1M619.8 497.5L616.2 497.5M613 494.2L613.4 490.9M613.4 490.9L613.3 493.7M613.3 493.7L613.2 496.5M613.2 496.5L615.6 498.7M615.6 498.7L617.9 500.9M617.9 500.9L618.5 504.2M618.5 504.2L619.1 507.4M619.1 507.4L621.9 509.1M621.9 509.1L624.7 510.8M624.7 510.8L626.9 510.2M626.9 510.2L629.1 509.7M629.1 509.7L631.2 510.4M631.2 510.4L633.4 511.1M633.4 511.1L633.3 513.5M633.3 513.5L633.2 516M633.2 516L631 516.6M631 516.6L628.8 517.2M628.8 517.2L626.7 516.4M626.7 516.4L624.6 515.7M624.6 515.7L624.6 513.2M624.6 513.2L624.7 510.8M613.4 490.9L610.2 490M610.2 490L607 489M607 489L607.1 492M607 489L608.3 485.9M606.8 483.2L603.9 483.4M603.9 483.4L605.8 480.4M605.8 480.4L607.7 477.5M607.7 477.5L609.5 479.6M607.7 477.5L604.7 475.4M603.4 470.9L605.1 468.4M605.1 468.4L608.5 468.4M608.5 468.4L611.9 468.5M611.9 468.5L614.2 470.7M605.1 468.4L602.2 468.9M602.2 468.9L599.4 469.3M599.4 469.3L600.8 471.9M599.4 469.3L601.2 466.5M601.4 461.2L599.9 458.7M599.9 458.7L596.7 459.8M596.7 459.8L593.6 460.9M593.6 460.9L593.1 463.8M593.1 463.8L592.5 466.6M599.9 458.7L602.8 458.3M602.8 458.3L605.7 457.8M605.7 457.8L605.2 460.3M605.7 457.8L606 454.4M609.1 452.3L611.9 453.8M611.9 453.8L609.1 453.6M609.1 453.6L606.2 453.5M606.2 453.5L603.9 455.7M603.9 455.7L601.5 458M601.5 458L598.5 457.2M598.5 457.2L595.5 456.5M595.5 456.5L592.7 458.2M592.7 458.2L590 459.9M611.9 453.8L613.8 451.4M613.8 451.4L615.7 449M615.7 449L613.4 448.2M615.7 449L617.5 451.6M789.6 512.3L786 511.8M786 511.8L784.5 514.7M784.5 514.7L783 517.7M783 517.7L786 518.1M783 517.7L780.2 517.6M777.5 521.1L777.6 524.6M777.6 524.6L778.2 521.7M777.6 524.6L774.2 524.8M774.2 524.8L770.8 525M770.8 525L771.4 522.6M770.8 525L771.2 528M769.4 529L767.1 526.9M767.1 526.9L765.6 529.9M765.6 529.9L764.1 533M764.1 533L767 533.4M764.1 533L760.8 531.8M756.5 533.5L755.4 536.5M755.4 536.5L756.8 538.8M756.8 538.8L758.3 541M758.3 541L760.8 541.1M760.8 541.1L763.3 541.2M763.3 541.2L764.7 543.1M764.7 543.1L766 545M766 545L764.9 547.2M764.9 547.2L763.7 549.4M763.7 549.4L761.2 549.4M761.2 549.4L758.7 549.5M758.7 549.5L757.4 547.5M757.4 547.5L756 545.4M756 545.4L757.2 543.2M757.2 543.2L758.3 541M755.4 536.5L752.4 536.7M752.4 536.7L749.4 536.9M749.4 536.9L750.2 534M749.4 536.9L749.1 540.4M746.3 542.2L743.8 540.5M743.8 540.5L743.1 537.9M743.1 537.9L742.5 535.2M742.5 535.2L744.1 532.2M744.1 532.2L745.8 529.2M745.8 529.2L744.6 526.8M744.6 526.8L743.4 524.3M743.4 524.3L744.8 522M743.8 540.5L742.1 543.4M742.1 543.4L740.5 546.4M740.5 546.4L743 546.8M740.5 546.4L737.2 545.3M731.1 546.6L728.3 549M728.3 549L731.4 548M728.3 549L725.3 547.3M725.3 547.3L722.3 545.6M722.3 545.6L724.4 543.9M722.3 545.6L720.6 547.8M715.9 549L713.1 547.8M713.1 547.8L713.4 544.5M713.4 544.5L713.7 541.2M713.7 541.2L711.7 539.8M711.7 539.8L709.7 538.3M709.7 538.3L710 536.2M710 536.2L710.2 534M710.2 534L712.5 532.9M716.8 533.1L718.8 534.5M718.8 534.5L718.6 536.7M718.6 536.7L718.3 539M718.3 539L716 540.1M716 540.1L713.7 541.2M713.1 547.8L710.9 550M710.9 550L708.8 552.1M708.8 552.1L711.4 553.3M708.8 552.1L706.8 549.2M702.4 548.5L699.9 550.6M699.9 550.6L697.5 548.3M697.5 548.3L695.2 545.9M695.2 545.9L697.8 544.6M695.2 545.9L693.7 548.4M688.6 550.4L685 549.8M685 549.8L687.5 548.9M687.5 548.9L690 548M685 549.8L683.7 552.4M683.7 552.4L682.3 555M682.3 555L685 555.4M682.3 555L678.9 554M675.1 555.7L674.6 558.5M674.6 558.5L677 560.1M677 560.1L679.5 561.7M679.5 561.7L682.2 561.6M682.2 561.6L685 561.5M685 561.5L687.2 563.7M687.2 563.7L689.4 566M689.4 566L692.2 565.5M692.2 565.5L695.1 565.1M674.6 558.5L671.8 557.7M671.8 557.7L669.1 556.9M669.1 556.9L670.6 554.6M669.1 556.9L668.5 559.7M687.1 533.2L683.6 532M683.6 532L683.2 529.2M683.2 529.2L682.9 526.3M683.6 532L682.4 535.2M682.4 535.2L681.2 538.3M681.2 538.3L683.7 538.4M681.2 538.3L677.7 538.5M674.5 541.9L674.7 545.2M674.7 545.2L676.6 542.8M676.6 542.8L678.4 540.4M678.4 540.4L681.8 540.3M681.8 540.3L685.2 540.3M685.2 540.3L686.6 537.8M686.6 537.8L688 535.3M688 535.3L690.8 535.5M674.7 545.2L671.9 546.7M671.9 546.7L669.1 548.2M669.1 548.2L668.7 545.7M669.1 548.2L668.6 551.6M664.6 555.7L661 556.4M661 556.4L663.5 555.1M663.5 555.1L666.1 553.7M666.1 553.7L667 551M667 551L667.9 548.2M667.9 548.2L670.6 547.4M670.6 547.4L673.2 546.6M661 556.4L660.7 559.7M660.7 559.7L660.4 562.9M660.4 562.9L663 562.2M660.4 562.9L657.4 562.3M656.4 564.7L658.4 567.6M658.4 567.6L661.6 567.9M658.4 567.6L655.7 566.5M655.7 566.5L653 565.4M653 565.4L654.9 563.2M653 565.4L652.1 568.8M648.3 571.8L645.5 571.2M645.5 571.2L648.9 571.6M648.9 571.6L652.4 571.9M652.4 571.9L654.5 569.8M654.5 569.8L656.7 567.8M656.7 567.8L660.1 567.2M660.1 567.2L663.5 566.7M645.5 571.2L643.8 573.6M643.8 573.6L642.1 576M642.1 576L644.6 576.7M642.1 576L639 575.7M635.1 578.4L634.3 581.3M634.3 581.3L631.5 581.6M631.5 581.6L628.7 581.9M628.7 581.9L629.3 579.5M628.7 581.9L629.3 584.9M627.1 586.6L624.2 585.2M624.2 585.2L623.9 582M623.9 582L623.6 578.7M623.6 578.7L625.9 576.3M624.2 585.2L621.7 587.5M621.7 587.5L619.2 589.8M619.2 589.8L621.5 591.1M619.2 589.8L618.8 586.6M615.7 582.4L612.9 581.4M612.9 581.4L614.9 583.7M614.9 583.7L616.9 585.9M616.9 585.9L616.3 588.6M612.9 581.4L615.1 579M615.1 579L617.3 576.6M617.3 576.6L618.7 579.2M617.3 576.6L614.8 574.8M613.2 570.3L614 567.5M614 567.5L614.6 570.5M614.6 570.5L615.1 573.5M615.1 573.5L617.7 575M617.7 575L620.2 576.6M620.2 576.6L621.3 579.4M621.3 579.4L622.5 582.1M622.5 582.1L624.8 583.4M614 567.5L611.3 565.3M611.3 565.3L608.5 563M608.5 563L607.4 565.9M608.5 563L611.8 561.5M613.4 556.9L611.7 553.7M611.7 553.7L608.5 555.2M608.5 555.2L605.4 556.7M605.4 556.7L604.3 559.2M604.3 559.2L603.2 561.8M913.4 325.3L910.7 326.6M910.7 326.6L912.7 324.2M912.7 324.2L914.7 321.7M914.7 321.7L914.1 319M914.1 319L913.5 316.3M913.5 316.3L915.6 313.5M915.6 313.5L917.7 310.8M917.7 310.8L916.7 308.2M916.7 308.2L915.7 305.6M915.7 305.6L917.2 302.9M910.7 326.6L913.2 329M913.2 329L915.6 331.4M915.6 331.4L916.9 328.7M915.6 331.4L913.4 333.4M913.3 337.6L915.4 339.9M915.4 339.9L914.7 336.8M914.7 336.8L913.9 333.6M913.9 333.6L915.4 330.7M915.4 330.7L916.9 327.7M916.9 327.7L915.6 325.1M915.6 325.1L914.3 322.5M915.4 339.9L913.7 342.3M913.7 342.3L912 344.7M912 344.7L910.4 342.5M912 344.7L913.4 347.2M912.5 352.4L910.3 355.2M910.3 355.2L910 352.6M910 352.6L909.7 349.9M909.7 349.9L907.4 348.6M907.4 348.6L905.1 347.2M905.1 347.2L904.8 345.4M904.8 345.4L904.5 343.5M904.5 343.5L906.5 342.3M906.5 342.3L908.5 341.1M908.5 341.1L910.8 341.7M910.8 341.7L913.1 342.2M913.1 342.2L913.4 344.5M913.4 344.5L913.7 346.8M913.7 346.8L911.7 348.4M911.7 348.4L909.7 349.9M910.3 355.2L912.5 357.3M912.5 357.3L914.8 359.4M914.8 359.4L916.1 356.7M914.8 359.4L913.2 362.3M913.5 367.8L915.4 370.5M915.4 370.5L912.5 370M912.5 370L909.6 369.5M909.6 369.5L910.8 367.3M909.6 369.5L908.6 372.2M904.3 375.4L901.1 375.8M901.1 375.8L903 373.9M903 373.9L905 372.1M905 372.1L904.5 368.6M904.5 368.6L904.1 365.2M904.1 365.2L905.5 362.6M905.5 362.6L907 360.1M907 360.1L905.8 357.4M905.8 357.4L904.7 354.7M901.1 375.8L900.3 379.3M900.3 379.3L899.6 382.8M899.6 382.8L902 382.5M899.6 382.8L896.1 383.2M892.3 386.5L891.9 389.5M891.9 389.5L893.6 392.5M893.6 392.5L895.2 395.4M895.2 395.4L898.4 396.7M898.4 396.7L901.6 398M901.6 398L902.8 400.9M902.8 400.9L904 403.8M891.9 389.5L889.7 391.2M889.7 391.2L887.4 392.9M887.4 392.9L886.5 390M887.4 392.9L887.5 396M762.7 301.6L765.3 298.9M765.3 298.9L763.7 301.7M763.7 301.7L762.2 304.5M762.2 304.5L763.1 307.7M762.8 313.3L761.6 315.6M761.6 315.6L762.9 317.9M762.9 317.9L764.3 320.1M764.3 320.1L763.9 323.6M763.9 323.6L763.5 327.1M765.3 298.9L762.5 299.5M762.5 299.5L759.6 300.1M759.6 300.1L761.2 302.7M759.6 300.1L758.2 297M755.9 296.6L754.9 299.4M754.9 299.4L756.4 301.6M756.4 301.6L757.9 303.9M757.9 303.9L761.2 304M761.2 304L764.4 304.1M764.4 304.1L766.2 306.5M766.2 306.5L767.9 308.9M767.9 308.9L771.2 308.5M771.2 308.5L774.6 308.2M754.9 299.4L753.7 296.4M753.7 296.4L752.6 293.5M752.6 293.5L755.2 293.4M752.6 293.5L750.1 295.1M747.5 293.2L747.4 289.6M747.4 289.6L749.9 287.9M749.9 287.9L752.3 286.2M752.3 286.2L755.5 287.3M755.5 287.3L758.7 288.5M747.4 289.6L744.7 288.3M744.7 288.3L742 287M742 287L741.7 289.5M742 287L742.7 283.8M741.4 277.8L739.4 275M739.4 275L736.2 275.1M736.2 275.1L732.9 275.2M739.4 275L742.2 273.6M742.2 273.6L745.1 272.3M745.1 272.3L745.3 274.8M745.1 272.3L741.5 271.8M739.3 267.9L740.7 264.5M740.7 264.5L743.5 264.3M743.5 264.3L746.2 264M746.2 264L747.3 261.8M746.2 264L747.5 265.9M740.7 264.5L737.9 263.9M737.9 263.9L735.1 263.3M735.1 263.3L735.5 266.1M735.1 263.3L735.1 260.3M731.7 258L728.3 258.7M728.3 258.7L728.7 262.1M728.7 262.1L729.1 265.5M729.1 265.5L731.2 267.3M731.2 267.3L733.3 269.1M728.3 258.7L728 255.7M728 255.7L727.7 252.7M727.7 252.7L730.5 253.4M727.7 252.7L724.8 252.4M724.2 250.1L726.5 248.2M726.5 248.2L726.8 251.2M726.8 251.2L727.1 254.2M727.1 254.2L730.3 255.5M726.5 248.2L728.1 245.5M728.1 245.5L729.8 242.9M729.8 242.9L727.2 242.2M729.8 242.9L731.2 245.9M735 247.7L737.6 246.5M737.6 246.5L734.5 247.5M734.5 247.5L731.5 248.6M731.5 248.6L728.6 246.8M728.6 246.8L725.7 244.9M725.7 244.9L723.4 246.1M723.4 246.1L721 247.3M721 247.3L718.2 246.7M737.6 246.5L739.2 248.8M739.2 248.8L740.9 251.2M740.9 251.2L738.2 251.9M740.9 251.2L742.8 248.7M747.5 247.9L750.4 249.6M750.4 249.6L750.6 252.2M750.6 252.2L750.8 254.8M750.8 254.8L748.3 256.9M748.3 256.9L745.8 258.9M750.4 249.6L751.4 246.7M751.4 246.7L752.3 243.7M752.3 243.7L749.5 243.8M752.3 243.7L755 245.9M617.2 584.1L618.5 587.1M618.5 587.1L616.8 589.5M618.5 587.1L621.8 588.3M621.8 588.3L625.2 589.6M625.2 589.6L625.2 587M607 568.3L603.9 567.5M603.9 567.5L604 564.9M604 564.9L604.1 562.3M604.1 562.3L606.4 561M606.4 561L608.8 559.7M608.8 559.7L609.4 556.4M609.4 556.4L610 553.1M610 553.1L613 552M603.9 567.5L606.7 569.7M606.7 569.7L609.4 572M609.4 572L610.5 569.1M619.2 559.8L620.4 562.5M620.4 562.5L618.9 565M618.9 565L617.3 567.5M617.3 567.5L614.5 567.9M614.5 567.9L611.6 568.3M611.6 568.3L610.5 571.1M610.5 571.1L609.3 573.9M609.3 573.9L606.5 575.4M620.4 562.5L623.5 561.6M623.5 561.6L626.6 560.7M626.6 560.7L625 558.3M851.7 207.8L849.4 210.6M849.4 210.6L851.2 213.2M851.2 213.2L852.9 215.7M852.9 215.7L854.7 213.3M852.9 215.7L849.6 214.5M845.4 216.8L844.5 220.2M844.5 220.2L841.2 219.9M841.2 219.9L837.9 219.5M837.9 219.5L839 217.3M837.9 219.5L838.5 222.4M836.3 227L833.5 228.7M833.5 228.7L830.9 228.3M826.5 225.1L824.6 222.3M824.6 222.3L821.7 221.6M821.7 221.6L818.9 220.9M833.5 228.7L835.1 231.9M835.1 231.9L836.7 235.2M836.7 235.2L838.7 233.2M836.7 235.2L833.8 236.8M873.1 217.1L876.3 217.2M876.3 217.2L877.1 214M877.1 214L877.9 210.7M877.9 210.7L874.9 211M877.9 210.7L880.9 209.4M881 207.7L878.1 207.2M878.1 207.2L879.7 209.6M879.7 209.6L881.2 211.9M881.2 211.9L881 214.9M881 214.9L880.8 218M878.1 207.2L878.3 203.9M878.3 203.9L878.4 200.5M878.4 200.5L880.8 201.4M878.4 200.5L875.4 200.4M872.2 196.6L872.1 193M872.1 193L869.5 194.9M869.5 194.9L867 196.8M867 196.8L869.6 198.5M867 196.8L865.1 194M843.1 224L842.1 227.1M842.1 227.1L841.4 223.8M841.4 223.8L840.6 220.6M842.1 227.1L843.7 229.7M843.7 229.7L845.2 232.3M845.2 232.3L847 230.3M845.2 232.3L842.4 232.1M838.4 234.5L837.3 237.1M837.3 237.1L838.5 239.5M838.5 239.5L839.8 241.9M839.8 241.9L842.6 242.6M842.6 242.6L845.4 243.3M845.4 243.3L847.1 245.7M847.1 245.7L848.8 248.1M848.8 248.1L851.4 249.1M851.4 249.1L854 250M854 250L855.3 252.9M855.3 252.9L856.6 255.9M837.3 237.1L834 237.9M834 237.9L830.7 238.8M830.7 238.8L830.9 236M830.7 238.8L831.9 241.6M829.3 244.4L825.7 244.3M825.7 244.3L823.4 241.7M823.4 241.7L821.2 239.2M821.2 239.2L821.6 235.7M821.6 235.7L821.9 232.3M821.9 232.3L819.2 230.4M819.2 230.4L816.5 228.5M816.5 228.5L815.8 225.1M815.8 225.1L815.2 221.7M825.7 244.3L822.6 244.8M822.6 244.8L819.6 245.4M819.6 245.4L821 248M819.6 245.4L817.8 242.2M930.9 282.3L929.7 285.7M929.7 285.7L929.6 282.3M929.6 282.3L929.4 278.8M929.4 278.8L926.7 276.7M926.7 276.7L924 274.6M924 274.6L924.4 271.9M924.4 271.9L924.8 269.3M924.8 269.3L922.3 266.9M922.3 266.9L919.7 264.5M929.7 285.7L932.4 286.6M932.4 286.6L935.1 287.4M935.1 287.4L935.1 284.5M935.1 287.4L934 290.7M934.6 296.3L936.2 298.7M936.2 298.7L939.1 297.7M939.1 297.7L942.1 296.6M942.1 296.6L942.8 293.7M936.2 298.7L933.7 301.4M933.7 301.4L931.2 304M931.2 304L930.1 301.8M931.2 304L934.2 303.8M940 304.6L942.9 305.8M942.9 305.8L945.3 303.1M945.3 303.1L947.6 300.4M947.6 300.4L944.7 299.2M947.6 300.4L950.5 301.4M945.6 311.4L947.3 313.8M947.3 313.8L947.5 316.8M947.5 316.8L947.8 319.7M947.8 319.7L946.2 322.1M946.2 322.1L944.5 324.4M944.5 324.4L945.8 327.4M945.8 327.4L947.1 330.3M947.3 313.8L947.2 311M947.2 311L947.2 308.2M947.2 308.2L944.3 309.2M947.2 308.2L950.5 308.2M952.4 305.3L951 302.2M951 302.2L952.3 305.3M952.3 305.3L953.7 308.4M953.7 308.4L951.6 310.9M951.6 310.9L949.6 313.4M949.6 313.4L950.1 316M950.1 316L950.6 318.5M950.6 318.5L948.1 320.8M948.1 320.8L945.5 323M945.5 323L945.9 325.1M945.5 323L943 322.1M951 302.2L953.8 301.1M953.8 301.1L956.6 300M956.6 300L956.8 302.8M956.6 300L953.3 299.1M953.4 296.5L956.6 294.8M956.6 294.8L959.1 296M959.1 296L961.5 297.2M961.5 297.2L961.6 300.6M956.6 294.8L955.8 292M955.8 292L954.9 289.1M954.9 289.1L952.5 290.8M954.9 289.1L957.2 286.7M937 345.8L938.1 342.5M938.1 342.5L941.4 342M941.4 342L944.7 341.5M944.7 341.5L947.3 342.9M938.1 342.5L934.8 341.4M934.8 341.4L931.5 340.2M931.5 340.2L931.5 343.2M926.9 399.1L929.7 399.1M929.7 399.1L930.9 401.7M931.1 407.5L930.1 410.6M929.7 399.1L926.8 397.5M926.8 397.5L923.9 395.8M923.9 395.8L923.4 398.4M923.9 395.8L927.4 396.8M932.3 394.9L933.7 391.9M933.7 391.9L931.7 394M931.7 394L929.7 396M929.7 396L926.4 396.1M920.7 398.6L918.4 400.9M918.4 400.9L915 400.4M915 400.4L911.7 399.9M933.7 391.9L937.3 391.3M937.3 391.3L940.9 390.8M940.9 390.8L940.4 393.5M940.9 390.8L941.1 387.8M944.1 384.2L946.9 383.5M946.9 383.5L944.9 385.7M944.9 385.7L942.9 387.8M942.9 387.8L942.8 391.2M942.8 391.2L942.7 394.5M942.7 394.5L939.9 396.1M939.9 396.1L937 397.7M937 397.7L937 400M937 400L936.9 402.4M936.9 402.4L934.7 403.4M934.7 403.4L932.5 404.4M932.5 404.4L930.4 403.5M930.4 403.5L928.3 402.5M928.3 402.5L928.3 400.1M928.3 400.1L928.3 397.8M928.3 397.8L930.5 396.8M930.5 396.8L932.7 395.8M932.7 395.8L934.9 396.7M934.9 396.7L937 397.7M892.6 469.7L896.2 470.4M896.2 470.4L893.4 471.3M893.4 471.3L890.7 472.2M890.7 472.2L890.2 474.8M890.7 472.2L888.8 470.5M896.2 470.4L898.7 468.1M898.7 468.1L901.2 465.8M901.2 465.8L899.1 464.6M901.2 465.8L904.2 466.8M871.7 466.6L869.4 469.3M869.4 469.3L871.4 467.1M871.4 467.1L873.3 464.9M873.3 464.9L872.5 461.7M872.5 461.7L871.7 458.5M871.7 458.5L873.1 455.5M873.1 455.5L874.6 452.5M874.6 452.5L874 449.5M874 449.5L873.5 446.5M869.4 469.3L869.8 472.3M869.8 472.3L870.2 475.3M870.2 475.3L872.9 473.9M870.2 475.3L867 474.2M864.9 476.6L865.9 480M865.9 480L866.5 476.9M866.5 476.9L867.1 473.8M867.1 473.8L869.8 472.4M869.8 472.4L872.5 470.9M872.5 470.9L873.8 468.2M498 473L498.8 469.8M498.8 469.8L501.7 469.2M501.7 469.2L504.5 468.6M504.5 468.6L506.8 467.6M504.5 468.6L507 466M507 466L509.5 463.4M509.5 463.4L511.9 463M509.5 463.4L513 464M519 462L521.5 459.4M521.5 459.4L523.7 458.3M521.5 459.4L525.2 459.9M525.2 459.9L528.9 460.4M528.9 460.4L530.4 462.5M528.9 460.4L530.2 457.7M530.2 457.7L531.4 454.9M531.4 454.9L534.5 455M539.4 452.2L541.3 449.3M541.3 449.3L543.6 450.3M541.3 449.3L543.8 451.5M543.8 451.5L546.2 453.7M616 589.5L619 589.4M619 589.4L618 591.7M619 589.4L619.7 586.9M619.7 586.9L620.4 584.5M620.4 584.5L621.9 586.5M620.4 584.5L623 582M628 571.5L631 571.4M957 285L957.5 287.8M957.5 287.8L956 288.6M956 288.6L954.5 289.4M954.5 289.4L951 290M951 290L947.5 290.6M947.5 290.6L945.4 288.3M945.4 288.3L943.3 285.9M943.3 285.9L940 284.5M940 284.5L936.7 283.1M936.7 283.1L939.1 283.4M936.7 283.1L935.8 279.3M935.8 279.3L934.9 275.5M934.9 275.5L932.4 276M934.9 275.5L931.5 275.5M931.5 275.5L928.1 275.5M928.1 275.5L926.3 273.8M838.5 198.5L841.8 196.3M841.8 196.3L845.1 197.5M852.2 198L856 197.4M856 197.4L859.3 200M859.3 200L862.5 202.6M862.5 202.6L865 200M870.1 197.7L872.7 198.1M872.7 198.1L875.7 199M875.7 199L878.6 199.9M878.6 199.9L879 203M879 203L879.4 206.1M879.4 206.1L882.3 208.1M882.3 208.1L885.3 210.1M885.3 210.1L882 211.5M882 211.5L878.7 212.9M878.7 212.9L878.1 215.6M877.5 222L877.5 225.8M877.5 225.8L880.2 229.1M880.2 229.1L882.9 232.4M882.9 232.4L885.4 232M882.9 232.4L879 233M790.8 226.7L793.8 227.1M793.8 227.1L794.5 230M794.5 230L795.2 232.9M795.2 232.9L797.6 233.1M797.6 233.1L800 233.3M800 233.3L801.5 235.3M800 233.3L803.5 235M803.5 235L807 236.7M807 236.7L809 238.2M807 236.7L810.3 235M816.3 234.3L819.1 235.3M819.1 235.3L821 233M826.1 231.4L829.3 232.1M829.3 232.1L831.4 233.4M829.3 232.1L829.7 229M829.7 229L830 225.9M830 225.9L833 225M833 225L836 224.1M836 224.1L835.2 221.7M748.4 571.5L749 567.6M749 567.6L746 567.5M746 567.5L743 567.4M743 567.4L744.6 569.3M528.5 407.5L530.1 404.5M530.1 404.5L529.7 402.1M530.1 404.5L533.5 404.5M533.5 404.5L536.9 404.4M536.9 404.4L539 401M539 401L541.1 397.6M541.1 397.6L541.2 395.1M541.1 397.6L545.1 396.9M545.1 396.9L549.1 396.3M549.1 396.3L546.9 395.2M549.1 396.3L550 393.3M550 393.3L550.9 390.4M550.9 390.4L554 390M554 390L557.1 389.6M557.1 389.6L558.1 386.6M563 383L566.9 382.4M566.9 382.4L568.8 384.1M646 308.6L648.5 309.9M648.5 309.9L651.5 311.5M651.5 311.5L654.5 313.1M654.5 313.1L655 316.9M655 316.9L655.5 320.6M655.5 320.6L659 320M659 320L662.5 319.4M662.5 319.4L664.7 321.8M664.7 321.8L666.8 324.2M666.8 324.2L668.9 325.6M666.8 324.2L670 325M670 325L673.2 325.8M673.2 325.8L675.4 324.6M712 251L712.8 247.8M712.8 247.8L716.1 246.9M719.5 243L719.6 240M719.6 240L718.3 242.1M719.6 240L721.6 239.3M721.6 239.3L723.5 238.6M723.5 238.6L722.7 241M723.5 238.6L726.3 237.7M726.3 237.7L729.1 236.7M729.1 236.7L730.8 238.6M729.1 236.7L731 239M735.7 240.3L738.5 239.4M738.5 239.4L740.3 241.7M745 243L747.8 242M936.3 393.3L932.5 394.2M932.5 394.2L932.5 398M932.5 398L932.5 401.8M932.5 401.8L929.6 403.8M929.6 403.8L926.7 405.9M926.7 405.9L926.3 409M926.3 409L926 412.1M926 412.1L923 413M923 413L920 413.9"/><path stroke="#b84a4a" d="M844.7 482L842.9 484.1M841 465.6L839.9 463M853.7 467.5L854.6 469.8M852.4 478.8L854 480.3M858.7 456.1L856.2 455M863.2 458.6L861 456.9M872.9 459.1L870 458.8M874 446.6L872.6 443.6M872.6 443.6L869.9 443.3M869.9 443.3L867.2 443.1M872.6 443.6L874.2 441.5M874.2 441.5L875.7 439.4M889.1 459.9L888.2 462.4M899.1 467.1L898.5 470.2M898.5 470.2L900.3 471.8M900.3 471.8L902.2 473.3M898.5 470.2L896.2 471M887.7 442.5L885.8 444.9M876 442.4L875.3 444.8M875.1 438.2L873.5 436.5M897.2 431.9L897.1 434.8M686.2 340.7L683.3 340.4M700 351.3L697.6 352.1M707.8 338.8L705.1 339.5M720.7 336.9L718.7 338.5M726.8 325.8L724.3 326.6M739.2 316.9L739.1 319.6M744.2 312.1L744.7 315.1M740.3 304L738.1 305.3M610.7 511.4L608.4 509.4M614.3 524.7L611.4 524.1M621.2 526.1L619.8 523.6M619.8 523.6L617.2 523.3M620.8 521.4L619.8 523.6M628.6 528.2L628.8 525.6M625.4 540.5L624.8 537.7M626.3 555.8L628.5 554M615.7 567.7L615 564.9M619.4 578.5L621.5 576.5M608.5 591.7L607.7 589.3M526.1 478.4L528.2 480.4M517.2 479.6L519.4 480.4M521.2 469.3L518.8 471.2M530.1 484.4L528 484.1M532.3 458.3L529.6 457.9M531.3 461.5L530 464.6M547.6 455.1L546.8 458M544.1 463.1L544.8 466.1M540.3 439.7L539 442.2M546.6 427.4L548.3 430M703.2 337.1L701.3 334.9M696.8 343.7L698 341.3M692.6 348.7L690.7 346.5M696.6 356L699.4 355.5M694.6 371.1L695.5 373.6M681.9 356L684 354.7M671 358.8L672.7 361.1M665.4 346.9L667.2 349.1M662.1 338.9L662.3 342.2M662.3 342.2L664.4 343.7M660.3 343.8L662.3 342.2M657.8 339.2L659.2 342M648.3 326.8L650.4 325.2M661.3 326.4L663.3 324.7M663.3 324.7L662.8 322.1M663.3 324.7L665.7 325.6M665.7 325.6L668.1 326.4M632.9 330.5L634.1 327.8M628.6 347.8L630.4 346M616.7 351.4L617.8 348.7M612.9 363.9L615.2 362.2M598.5 362.8L599.9 360.2M596 376.1L598.7 375.6M544 412.3L541.5 413.2M555.6 412.5L554.2 415.1M539.4 423.3L538.9 426M538.1 419.1L536.2 417.5M564.5 399.4L562 398.7M575.6 394.8L576.9 397.6M585.4 383.7L582.7 383.7M887.5 255.7L888.3 253.1M889.5 268.8L886.9 269.5M902.4 273.5L901.3 271.1M896.6 260.2L894 258.7M894 258.7L891.8 260.1M894 258.7L894 256.4M894 256.4L894 254.1M909.3 285.8L906.3 285.3M917.1 283.1L915.1 281.1M912.3 281.9L911.1 283.9M929.9 294.3L927 294.7M930.6 288.9L928 288.5M934.9 287.4L936.5 285.4M937 301.7L938.4 299.4M940.9 291.2L942.9 290.2M928.7 312L927.1 310.1M934.4 326.9L936.8 325.3M939.2 313.3L938.6 310.6M922.1 337.4L921.8 334.5M927.1 346.3L927.4 343.4M926 357.1L923.9 355.3M795.7 527L798.3 527.4M794.8 528.3L797.6 528.5M783.2 530.7L784.3 528M790.4 534.3L793.8 534.2M779.8 544.6L782.5 543.3M768.9 544L770.9 542.3M758.5 559.3L760.6 561.3M747.3 565.4L749.8 566.1M748.3 547.4L751.2 547.8M755.5 540L758.8 539M736.6 541.3L737.7 543.5M724.6 526.7L726.5 524.7M736.5 523L739.3 523.4M714.4 536.5L717.2 536.7M698.4 536.9L699.5 534.2M569.1 376.3L566.8 377.1M578.8 382.1L576.5 380.3M594.5 398L595.8 400.7M595.8 400.7L598.4 400.8M595.8 400.7L594.3 402.9M594.3 402.9L592.7 405.2M589.2 380.1L587.5 381.8M602.7 376.6L601.2 378.8M619.7 380.6L620.8 383.5M620.8 383.5L623.3 384.2M619.4 385.7L620.8 383.5M602 361.5L600.2 363.5M597.3 356.5L595.5 358.5M598.4 351.9L597.7 349.5M614.4 353.1L613.8 355.8M801.9 236.4L799.2 234.2M801.7 251.2L804.4 252.4M808 253.1L810.6 254.1M792 244.3L794.8 243.4M779.6 254.3L782.3 254.1M765.8 253.9L768.2 251.9M760.6 266.5L763.2 266M942.9 375.1L945.6 375.1M939.1 377.1L937.9 379M933.7 376L936.2 377.7M921.6 384.9L922.1 387.2M918.6 381.8L916.1 381M935.3 366.3L934.2 368.6M945.7 365.1L945.9 368.5M945.9 368.5L948 370M943.8 370.2L945.9 368.5M939.1 350.3L936.5 350.8M937.7 353.7L939.6 352.1M929.1 356.4L929.2 358.9M929.5 355.7L931.6 357.2M931.6 357.2L933.9 356.6M931.4 359.5L931.6 357.2M815.4 497.6L815 494.9M807.8 515.8L810.1 516.8M808.5 509.4L807.2 511.8M806.3 515L804.6 518M804.6 518L806 520.1M802.2 518.2L804.6 518M814.4 500.2L811.7 500.8M826.7 495.9L825.8 498.7M828 483.4L825.7 484.9M832.3 481.8L830 480.7M838.7 485.7L835.7 485.4M842.8 495.7L844.9 493.7M843.3 491.8L844.2 488.8M829.5 502L829.8 499M829.3 516.6L831.4 514.7M682 374.2L680.1 372.3M686.3 375.3L688.7 374.7M689.4 403.9L691.7 402.5M681.5 414.1L680.9 411.5M679.2 430.5L681.3 429.3M670.5 441.6L669.2 439M679.1 454.3L679.5 451.7M675.9 467.6L674.5 465.5M686 480.8L686.6 478.1M688.8 477.3L691.2 476.4M675.9 490.7L676.7 488.2M661.8 503.9L664.1 505.1M648.5 500.9L650.1 499.1M795.9 340.3L797 338M804.3 343.1L803.1 341.3M807.7 344.8L809.9 344.7M792.3 356.1L790.4 353.7M783.6 351.2L782.1 352.7M805.4 368.8L806.5 365.8M797.9 389.8L795.9 388.3M794.4 377.8L794.5 374.8M809.9 294L810.3 296.9M795.3 297.2L792.8 299.6M802.7 278.4L805.4 277.6M790.8 282.5L793.5 282.9M778 284.5L779.2 282.3M779.2 297.8L780.6 295.1M780.6 304.1L780.7 301.9M782.5 307.6L784.5 308.9M768.7 311L767.8 308.5M768.2 296.1L770.3 293.5M770.3 293.5L769.4 291.2M770.3 293.5L772.9 293.8M766.1 325.7L768.4 324.7M751.7 330.3L752.8 327.6M754.8 347.6L756 345.2M820.1 335.6L817.3 334.6M829.9 342L830.1 339.4M839.7 350.2L841.7 347.8M826.9 357.4L824.9 355.6M838.4 367.6L838.9 365M834.9 381.8L833.7 379.4M837.5 364.9L840.1 364.4M845.3 395.9L845.8 393.5M847.1 408.5L844.4 408.5M862.3 409.9L860.2 408.3M622.4 445.7L622.4 449M610 430.6L608.9 432.9M594 428.3L592.6 430.6M614.6 415.3L616.6 417.6M625.2 408.5L627.9 408.8M609.8 397.5L608 399.4M617.9 392.8L615.5 392.5M634.1 397.2L632.8 395M641 406.2L638.8 404.2M650.4 424.3L652.5 423M636.4 433.3L636 430.5M637.8 449.1L639.5 446.9M648.9 442.9L649.1 440.5M651 446.8L653.1 448.2M628.7 459.7L629.2 457.2M623 475L625.5 475.2M728.7 417.9L726.1 417M737 413.4L734.6 411.3M734.6 411.3L732 412.2M734.6 411.3L735 408.6M742.5 420.1L740.4 422.2M738.2 429.3L739.5 431.3M734.2 427.4L731.6 427.6M751.9 406.3L749 406.2M741.9 412.1L741.1 414.1M769.2 402.6L768 405.4M787.7 402L788.7 404.7M768.9 390L768.7 392.9M763.3 374.7L765.7 374.7M780.6 379.2L780.1 381.3M748 371.5L749.5 373.4M795.4 374.8L792.9 376.2M807.6 367.9L805.7 369.5M808.7 380.7L806.4 381.1M807.3 350.7L805.3 352.9M811.4 335.4L813.7 337.6M824.8 326.5L827.6 328.2M827.6 328.2L829.8 327.4M827.5 330.6L827.6 328.2M799.1 323.4L798.5 325.7M787.4 327.8L787 331.1M787 331.1L789 332.9M784.8 332.6L787 331.1M805.9 311.6L806.6 314.6M805.8 297.8L803.9 299.6M670.5 447L672.7 447.3M666.9 473.8L669.8 472.9M653.4 476.8L655.4 475.4M648.5 486.2L649.8 483.9M647.6 520.6L650.2 521.3M635.3 487.8L638.1 487.4M811.3 436.2L813.9 437.6M813.9 437.6L816 436.4M813.9 439.9L813.9 437.6M783.2 437.8L785.3 439.2M770 434.9L772 433.2M757.3 446.7L759.8 447.2M754.1 446.8L757.4 446.7M743 446.9L744.9 445M746.7 463.2L748.6 460.7M747.1 479.8L744.4 480.1M738 466.5L735.9 467.6M740.3 462.7L740.4 460.1M759.7 479.1L758.7 476.4M715.5 449.1L716 452M715.8 431.4L717.5 433.8M711.3 416.8L709.4 419M687.6 415L686 416.7M720.6 403.4L722.6 405.6M876.6 359.7L878.2 357.5M868.8 374.4L867.2 372.2M868.8 376.1L869.1 373.7M879.6 387.2L879.6 384.7M875.8 403.1L874.4 400.4M884.4 401.8L886.8 400.1M886.8 400.1L886.6 397.5M886.6 397.5L886.4 394.8M886.8 400.1L889.3 401.3M877 418.7L879.5 417.9M789.4 411.4L786.9 410.5M795.7 405.9L793.3 405.7M799.4 404.2L800.7 402.3M804 417.4L802 418.8M814.1 405.5L811.5 405.1M829.8 403L827.8 404.8M838.4 391.6L836 393.1M845.8 387L846.7 389.8M850.9 382.4L852.2 385.1M699.2 446.6L696.1 445.3M727.1 461.4L727.7 458.7M724.9 478L722.2 476.8M724.7 485.7L722.6 483.6M722.6 483.6L720 484.4M720 484.4L717.4 485.2M722.6 483.6L723.2 481.1M723.2 481.1L723.8 478.6M738 487.2L738 484.7M726.8 473.9L726.6 471.8M746.6 500.1L743.8 500M760.7 501.2L759 499.4M770.6 503.8L769.7 506.5M776.9 506.5L778.8 508.8M778.8 508.8L780.9 508.4M780.9 508.4L783.1 508.1M778.8 508.8L777.9 511.3M777.9 511.3L776.9 513.9M771.9 487.6L769.2 488.4M784.5 477.5L785.3 479.9M797.2 487.2L797.6 489.9M786.8 464.3L783.8 464.9M801.7 465L799.6 467.1M814.2 456.4L811.7 454.7M857.4 348L857 350.6M873.5 340.5L871.7 338.7M886 341.1L886.9 338.3M886.9 338.3L885.2 336.4M885.2 336.4L883.6 334.5M886.9 338.3L889.1 337.9M888.6 349.2L886.5 350.8M904.2 350.4L902.9 347.9M898.8 362.2L899.3 359.8M904.8 377.1L905.4 374M902.4 392.6L901 390.3M877.2 402.6L873.9 403.7M908.5 406.1L909.3 403.2M910 405.1L909.1 403.1M913.3 407.5L915.6 407.8M901.8 421.5L900.5 419.5M909.2 436.2L910.6 433.9M906.7 434.8L904.7 432.8M904.7 432.8L902.6 433.3M902.6 433.3L900.4 433.9M904.7 432.8L905.5 430.3M904.9 447.2L904.4 444.5M907.2 436.4L905.5 434.7M911.3 437.5L913.7 436.9M900.2 462.9L902.8 462M884.9 473.6L884.6 471M717.3 498.7L719.9 499.5M700.3 499.7L701.3 497.2M690.6 516.5L693.5 517M674.6 515L676.6 512.9M663.5 527.2L665.9 526.8M653.1 539.8L651.8 537.5M659.3 527.3L661.3 525.5M661.3 525.5L660.8 522.9M660.8 522.9L660.3 520.2M661.3 525.5L663.9 526.5M663.9 526.5L666.5 527.4M652.2 556.3L654.8 555.4M638.7 563.3L639.5 561M623.9 556.8L624.1 553.3M635.7 581.6L638.8 581.3M621.5 584.9L621.5 581.8M757.9 426.9L760.7 426.1M769.7 421.8L771.4 419.5M771.4 419.5L770.6 417.2M774 419.2L771.4 419.5M747.1 440.6L744.5 439.1M759.9 447.7L759.9 444.9M765.8 441L767.3 438.3M760 465L757.5 463.8M774 472.8L774.6 470.2M762.4 480.6L763.5 478M745.6 490.3L746.3 492.7M730.5 483.7L730.1 480.8M731 500.9L733.4 499M726.4 511.1L724.1 509.9M859.9 311.3L857.2 311.3M868.6 312.7L869.4 310.3M878.6 323.8L882 324M863.2 320.2L865.7 319.3M847 312.7L844.8 314.7M853.1 306.5L851.2 309.4M851.2 309.4L852.4 311.6M852.4 311.6L853.5 313.8M851.2 309.4L849.1 309.3M849.1 309.3L846.9 309.1M667.6 455.3L669.2 456.8M656.2 468L659.2 468.5M651.7 468.1L654.9 467.1M642 468.8L644.1 467M632.5 482L635.4 481.1M617.5 480.9L619.6 479.6M810.1 424.9L808.3 422.9M823.3 435.5L820.4 436.5M821.7 449.9L818.9 450.3M839.9 433.3L838.9 430.6M843.9 424.9L843.2 421.6M843.2 421.6L840.9 420.4M845 419.7L843.2 421.6M853.2 443.3L851.5 445.6M858.4 435.8L855.7 436M861.1 428.8L858.3 428.6M847.9 436.7L848.5 439.1M876.6 430.6L874.9 432.9M893.2 427L893.5 429.9M893.5 429.9L896.1 431M896.1 431L898.6 432.1M893.5 429.9L891.6 431.4M886.7 415.3L883.8 415.1M902 404.2L903.9 406.4M902 395.4L902.4 398.2M739.1 388.2L741.2 386.4M729 398L729.2 395.6M736.3 404L738.4 404.9M726 412.3L728.1 411.1M729.3 417.4L731.8 416.3M731.8 416.3L732.1 414M732.1 414L732.3 411.7M731.8 416.3L733.7 417.8M733.7 417.8L735.5 419.2M710.4 420.5L710.6 417.9M706.2 431L708.8 429.5M693.3 440.4L693.2 437.4M700.9 455.7L702.6 453.3M696.8 473L694.9 470.9M700.1 486.7L702.5 486M688 498.6L686.7 496.5M684.6 489.8L682.1 487.7M682.1 487.7L679.8 488.5M682.5 485.4L682.1 487.7M695.9 509.8L696.6 506.9M691.9 525.8L690.8 523.5M660.1 414.9L657.4 412.8M657.4 412.8L655.3 413.6M657.4 412.8L657.8 410.7M657.8 410.7L658.1 408.5M667.6 419.6L669.6 417.3M667.2 418.6L667.1 415.7M658 428.5L659.2 426M661.4 435.4L663.9 434.6M653.2 437.8L656.2 438.6M636.7 446.4L635.9 449.7M639.6 425.8L642.5 426.3M633 427.6L635.6 428.9M635.6 428.9L637.4 427.7M637.4 427.7L639.2 426.5M635.6 428.9L635.7 431M635.7 431L635.9 433.1M625.5 424.1L627.2 426.1M654.8 376.9L653.7 374.4M664.3 392.1L661.9 392M669 393.8L666.5 391.9M666.5 391.9L664.2 392.6M666.8 389.5L666.5 391.9M675.9 401.6L676.3 398.7M664.5 406.6L667 405.3M679.4 394.8L680.8 392.6M679 399.2L680.1 401.3M656.7 410.2L659.2 410.1M642 409.7L644.4 407.8M645.8 410.1L647.6 408M644.8 414.5L645.7 416.9M631.2 423.5L634.2 422.6M630.6 421.5L631.5 419.6M615 425.6L616.3 423.2M628.8 422.1L628.9 419.3M606.8 436L609.5 436M591.3 440.4L591.4 437.7M588.9 450.3L590.4 447.6M653.5 453.7L655.9 452.8M649.3 468.4L651.4 466.9M663 473L665.7 471.5M637.2 476.3L637.6 473.4M630.4 492.3L632.9 492.8M628.7 509.9L627 512M614.6 492.7L616 490.7M600.8 500.8L602.2 503.3M597.9 487.9L600.4 489.1M590.5 482.3L592.9 484.3M592.9 484.3L595 483.5M595 483.5L597 482.6M592.9 484.3L592.6 486.4M581.6 481.5L581.9 484M581.7 485.4L583.8 487.5M583.8 487.5L585.9 486.9M583.8 487.5L583.3 489.5M583.3 489.5L582.7 491.6M614.3 457.9L612.3 459.8M628.7 455.1L627.1 457.5M770.4 355.3L770.1 357.8M767.2 340.2L769.9 340.5M773.3 342.5L773.9 344.9M755 349.5L757.9 349.9M754.1 355.2L756.9 354.3M756.9 354.3L757.3 352.2M757.3 352.2L757.8 350.1M756.9 354.3L758.8 356.1M758.8 356.1L760.7 357.8M740.7 351.4L741.5 348.7M728 358.6L730.4 360.2M740 375.4L741.8 378.4M714.2 359.3L716 356.8M705 368.2L702.3 367.1M702.3 367.1L700.6 368.4M700.6 368.4L698.9 369.8M702.3 367.1L702 364.5M712 374.2L714.1 372.6M708.7 387.1L705.8 387.6M697.2 400.5L696.9 403.1M726.7 382.5L725.4 380.1M736.7 386.7L734.1 386.7M735.1 408.8L736.3 410.6M750.1 390.3L748.1 388M761.7 399.9L759.5 401.2M774.6 393.7L772.2 392.4M893.7 298.3L895.9 296.7M891.8 302.6L892.1 305.3M881.7 300.7L882.8 302.9M869.2 295.4L867.8 297.6M871.2 286.5L874.3 286.4M854.2 287.5L855.4 290.4M855.4 283.3L857.9 282.5M841.8 275.1L844.7 274.2M829.3 273.2L829.4 275.9M816.4 264L818.6 262.4M818.2 251.9L821.4 250.8M821.4 250.8L821.9 248.4M821.9 248.4L822.4 246M821.4 250.8L823 252.3M823 252.3L824.6 253.7M805.1 270.3L808.1 270.6M788.6 263.6L790.7 261.7M780.5 274.1L783 273.9M764.1 277.4L765 274.5M762.4 272.8L762.6 270.3M755.5 289.8L758.1 290M746 276.5L748.9 276.9M853 403.1L856 402.6M841.6 406.4L844.8 405.6M833 404.4L833.9 401.9M815.5 418.3L813.2 419.7M835.6 419.4L836.3 417M826.6 432.5L826 429.5M817.8 447.4L820.1 448M801.7 443.2L803.6 440.9M796 453.3L797.3 451.3M782.1 452L784.4 450.2M810.7 348.4L813.5 348.7M790.9 351.1L790.3 348.7M790 356.4L791.9 353.9M784.4 364.2L787.2 363.8M769.8 361.5L772.8 361.2M759 375.6L761 377M749.7 383.7L749.3 386.3M748.1 366.2L751 366.9M734.9 360.9L735.6 363.3M732.4 351.5L734.2 353.4M844.1 285.9L841.9 284M853.7 298.2L851.1 297.6M868.7 300.2L867.2 297.4M874.3 311.2L872.1 310M883.5 314L881.1 312.8M884.8 320.1L881.3 320.1M881.3 320.1L880.1 322.1M880.1 322.1L878.9 324.1M881.3 320.1L879.9 317.7M898.3 317.5L897.2 320M903.6 301.8L900.8 303M919.8 301.3L918.3 303.5M919.5 288.6L917.9 290.8M919.5 272L918.7 269.4M930.2 286L927.9 287.2M945.6 277.9L943.8 276.2M845.3 356L847.6 354.1M833 361.5L833.3 358.7M831.5 381.1L834.1 380.8M820.4 387.6L821 384.8M814.6 389.7L815.2 387M823.3 395.3L823 392.8M825.2 412L823 411M837.6 421L837.5 418M834.5 413.9L835.7 411.3M835.7 411.3L834.4 409.5M834.4 409.5L833.1 407.7M835.7 411.3L838 411.1M831.7 435.6L831.1 433.1M838.3 448.9L840.4 447M827.2 455.3L828.4 452.5M837 447.2L840.1 446.1M840.1 446.1L840.5 443.9M842 447.5L840.1 446.1M825.2 471.3L827 469.7M813.9 470.8L816.3 469.9M848 331L848.1 333.5M840.8 317.7L843.3 317.1M831.4 307.8L829.8 309.6M838.8 313.2L841.2 315.4M841.2 315.4L843.3 314.8M843.3 314.8L845.3 314.1M841.2 315.4L840.7 317.9M835 297.5L837.2 299.4M839.7 301.1L839.4 304.2M839.4 304.2L841.3 306M837.1 305.7L839.4 304.2M824.6 281.7L822.7 283.8M839.5 272L839.1 274.9M853.3 257.7L854.4 255.9M842.3 254.4L840.1 255.9M855.8 242.3L856.6 245M850.4 242.2L848 244.5M851 225.5L849 227.5M856.6 217.3L858.5 219M845.1 203.9L844.7 206.3M835.2 202.9L835.2 199.9M678.9 425.1L676.8 423M684.7 432.2L681.8 433M700.3 444L701.1 441.2M709.1 451.5L707.3 453.2M713.8 441.4L711.2 441.5M727.5 443.4L724.7 444.8M739.6 430.4L736.9 429.4M822.3 364.2L821.7 361.6M882.8 383.2L885.3 382.5M883.4 380.3L884.6 377.8M884.6 377.8L883.3 376.1M884.6 377.8L886.7 377.7M868.2 391.3L868.1 388.8M867.5 403.3L868.6 400.7M884.8 407.3L885.8 405.3M885.1 411.4L886.5 413.5M863.2 418.1L861.6 416.2M873.8 429.9L875 427.1M879.2 436.9L881.7 435.1M881.7 435.1L881.4 432.7M881.7 435.1L883.6 435.9M865.6 434.3L867 432.1M861.2 449.1L863.9 447.9M847.3 451.8L849.2 449.4M668.8 370.2L665.9 369.9M679.9 379.6L677 379M685.3 377.9L682.7 375.7M693.5 377.9L692.7 375.4M703.2 393.4L700.6 393.8M720.5 396L722.8 396.2M892.5 332.8L893.3 330.6M893.1 336.6L894.4 338.2M862.3 318.7L859.9 320.8M865.5 306.9L862.8 305.4M862.8 305.4L860.8 306.5M860.8 306.5L858.9 307.7M862.8 305.4L862.7 302.9M862.7 302.9L862.7 300.5M873.3 311.8L872 314.2M881.9 300.4L880.1 298.8M892.2 299.2L890.5 297.5M896.2 300.2L898.5 299.6M891 313.5L888.6 313.1M902.9 313L900.6 311.9M638.7 376.1L641.5 375.7M633.2 364.6L633.8 367M612.6 358L610 356.3M610 356.3L608 357.4M608 357.4L606 358.4M610 356.3L610.1 354M638.2 354.9L635.4 354M645.4 361.1L642.5 360M661 360.1L658.7 358.5M594.1 477.2L596.5 477.7M576.4 464.1L577.1 466.8M575.8 448.3L578.2 449.4M565.3 432.9L563.5 434.9M575.6 421.7L577 424.2M561.9 411.8L558.9 412.5M558.9 412.5L558.1 414.5M557.2 410.9L558.9 412.5M580.2 412.2L577.4 411.6M577.6 400.9L575.3 400.8M581.1 399.1L582.3 397.2M593.2 418L590.8 419.3M593.5 424.7L593 427.4M592.2 420.5L590.4 418.9M600.5 408.9L597.5 409.1M605.6 405.6L605.8 408.6M605.8 408.6L608.1 409.7M608.1 409.7L610.5 410.9M605.8 408.6L603.5 410.1M611.1 402.4L611.4 404.8M611.1 387.2L609.1 388.7M609.5 374.4L607.3 375.1M626.6 380.6L624.8 382.8M640.2 381.4L641.2 378.8M632.9 393.2L634.2 390.9M644.6 346L642.8 343.8M650.1 338.2L652.5 339.1M635.8 338L637.1 340.3M628.5 329.9L627.6 332M645.3 322.2L645.8 325.3M652.1 306.7L650.2 305.2M660.1 321.1L657.1 320.5M663 308.4L664 305.2M664 305.2L662.5 303.5M664 305.2L666.7 304.6M835.1 272.8L833.4 274.9M853.7 265.5L852.6 263.3M863.9 265.6L862.6 268.4M865.2 271.7L864.7 274.8M864.7 274.8L866.5 276.7M862.4 276.2L864.7 274.8M866.5 249.6L865 252M873.8 234.3L875.7 236.5M874.5 236.4L877.1 237M869.9 237.7L868 239.6M868.7 222.9L867.6 225.1M861.3 215L860.4 217.7M871.1 205L873.5 206.4M880 212L882.2 210.5M856 203.1L857.3 205.8M567.1 461L567.4 458.2M557.3 475.8L557.4 473M570.9 484L570.9 481.5M583 470.9L581 469.7M574.8 498.4L572.4 497.6M588.5 508L589.2 505M588.7 522.6L585.8 521.5M604.9 524.9L603.6 522.7M604.3 537.5L602.2 535.2M701 535.4L700.9 538.1M699.2 531.6L697.4 530.4M714.6 507.5L712.1 506.7M724.4 516L721.5 515.5M740.2 517.4L738.5 515.7M746.9 521.2L744.2 520.8M752 527.5L749.6 528.9M762.9 516.3L760.2 515.7M762.9 508.1L761.6 509.7M774.3 518.6L771.6 518.9M779.6 529.3L782.1 529.5M762.2 528L762.2 525M763.6 544.6L766.3 543.1M804.5 494.9L803.7 497.4M803.7 497.4L805.3 499.4M801.2 498.4L803.7 497.4M820.1 475.6L817.7 474.8M819.3 458.3L817.4 459.4M831.5 482L829.2 482.9M853.1 479.5L855.7 479.9M848.9 481.2L847.2 483.2M630.3 512.4L630.1 515.8M624.9 511.2L625.6 513.8M635.1 514.5L636.8 516.9M636.8 516.9L639.2 516.7M636.8 516.9L635.8 519.2M621.8 499.1L623.7 500.8M607.1 492L607.2 494.9M609.5 479.6L611.2 481.8M614.2 470.7L616.6 473M616.6 473L619.3 472.2M619.3 472.2L621.9 471.4M616.6 473L616.1 475.1M616.1 475.1L615.5 477.2M600.8 471.9L602.2 474.6M605.2 460.3L604.8 462.7M613.4 448.2L611.1 447.4M786 518.1L789.1 518.5M771.4 522.6L772.1 520.3M767 533.4L770 533.8M750.2 534L750.9 531.1M743 546.8L745.5 547.3M735 544.2L735.6 541.5M736.2 548.4L737.9 550M724.4 543.9L726.4 542.1M711.4 553.3L713.9 554.6M697.8 544.6L700.5 543.3M685 555.4L687.7 555.8M670.6 554.6L672.2 552.4M683.7 538.4L686.1 538.4M695 533.3L696.5 531M694.5 537.6L695.6 539.6M668.7 545.7L668.3 543.3M663 562.2L665.6 561.6M661.6 567.9L664.8 568.1M654.9 563.2L656.8 561M644.6 576.7L647 577.4M629.3 579.5L629.8 577.1M627.5 571.4L626.7 568.9M630.8 574.5L633.4 575.2M621.5 591.1L623.8 592.4M616.3 588.6L615.7 591.3M615.7 591.3L617.5 592.9M617.5 592.9L619.2 594.5M615.7 591.3L613.3 592.1M613.3 592.1L610.8 592.9M618.7 579.2L620.2 581.9M607.4 565.9L606.3 568.8M917.2 302.9L918.7 300.3M916.9 328.7L918.3 325.9M910.4 342.5L908.8 340.2M916.1 356.7L917.3 353.9M910.8 367.3L912 365.1M902 382.5L904.4 382.2M886.5 390L885.6 387.1M761.2 302.7L762.7 305.3M755.2 293.4L757.7 293.3M741.7 289.5L741.4 292M745.3 274.8L745.6 277.2M747.3 261.8L748.4 259.5M747.5 265.9L748.8 267.8M735.5 266.1L735.8 268.9M730.5 253.4L733.3 254.1M730.3 255.5L733.5 256.9M727.2 242.2L724.6 241.6M738.2 251.9L735.5 252.7M749.5 243.8L746.7 243.8M616.8 589.5L615.2 591.8M625.2 587L625.3 584.5M610.5 569.1L611.5 566.3M606.5 575.4L603.6 577M625 558.3L623.3 556M854.7 213.3L856.5 211M839 217.3L840 215.1M838.7 233.2L840.8 231.1M874.9 211L871.9 211.2M880.8 201.4L883.1 202.3M869.6 198.5L872.2 200.2M847 230.3L848.8 228.2M830.9 236L831.1 233.2M821 248L822.4 250.5M935.1 284.5L935 281.5M930.1 301.8L928.9 299.5M944.7 299.2L941.8 298.1M944.3 309.2L941.5 310.2M945.9 325.1L946.3 327.2M943 322.1L940.5 321.3M956.8 302.8L956.9 305.7M952.5 290.8L950.1 292.5M931.5 343.2L931.4 346.2M923.4 398.4L922.9 401M940.4 393.5L939.9 396.2M899.1 464.6L896.9 463.4M872.9 473.9L875.5 472.6M873.6 463.3L872.1 461.1M506.8 467.6L509.1 466.5M511.9 463L514.4 462.7M513 464L516.5 464.6M516.5 464.6L514 464.6M514 464.6L511.5 464.6M516.5 464.6L519 462M523.7 458.3L526 457.3M530.4 462.5L531.9 464.5M534.5 455L537.6 455.1M537.6 455.1L536.6 452.8M536.6 452.8L535.6 450.5M537.6 455.1L539.4 452.2M543.6 450.3L545.9 451.3M613.3 594.5L613 589.6M613 589.6L616 589.5M618 591.7L617 594M621.9 586.5L623.3 588.5M623.8 577.8L622 576.1M625.3 575.6L625 571.6M625 571.6L628 571.5M939.1 283.4L941.6 283.8M932.4 276L930 276.4M926.3 273.8L924.4 272.1M845.1 197.5L848.5 198.6M848.5 198.6L852.2 198M865 200L867.5 197.4M867.5 197.4L870.1 197.7M878.1 215.6L877.5 218.2M877.5 218.2L877.5 222M885.4 232L887.9 231.6M801.5 235.3L802.9 237.4M809 238.2L810.9 239.8M811 233.4L808.5 233.4M821 233L822.9 230.7M822.9 230.7L826.1 231.4M831.4 233.4L833.6 234.7M835.2 221.7L834.3 219.4M750.2 578L747.9 575.4M747.9 575.4L748.4 571.5M744.6 569.3L746.2 571.2M529.7 402.1L529.3 399.6M541.2 395.1L541.4 392.6M546.9 395.2L544.7 394M558.1 386.6L559.1 383.6M559.1 383.6L563 383M568.8 384.1L570.7 385.7M668.9 325.6L670.9 327M675.4 324.6L677.6 323.5M718.3 242.1L716.9 244.2M722.7 241L721.9 243.4M730.8 238.6L732.4 240.4M731 239L732.9 241.3M732.9 241.3L735.7 240.3"/><path stroke="#4c4cc4" d="M843.7 489.5L846.6 487.4M848.7 477.2L850.9 474.5M850.9 474.5L849.7 471.6M840.5 470.4L838.9 472.6M852 462.1L851.1 458.9M851.1 458.9L854 460.4M848.1 478.1L845.6 478.9M864 458.9L866.8 460.6M866.8 460.6L867.1 457.7M868.2 459.9L871.1 459.3M871.1 459.3L872.2 462.2M871 463.4L868.8 461.9M868.8 461.9L866 462.8M855.2 461.8L852.4 462.6M878.4 461.5L880.9 463.5M880.9 463.5L882.5 460.4M889.5 453.8L889 450.2M889 450.2L891.1 448M896.2 471L893.9 471.8M891.9 438.5L894.3 436.9M894.3 436.9L892.6 433.9M896.5 426.1L895.6 423.3M680.4 345.8L683.5 346.3M691.1 343.7L693 346.3M693 346.3L695.9 346M702.8 347.3L703.2 344.1M703.2 344.1L706.6 344.6M713.4 338.2L716.3 338.3M716.3 338.3L716.9 335.1M722.8 331.9L722.8 328.6M722.8 328.6L726 329.8M731.9 323.5L734.5 322M734.5 322L734 319M738.2 311.3L737.3 308.4M737.3 308.4L740.5 308.7M600 516.1L603.6 516.5M611.5 516.1L609.9 518.8M609.9 518.8L613.2 518.4M619.7 523.5L622.2 521.7M622.2 521.7L622.4 525.1M627.4 533.7L626.3 536.5M626.3 536.5L628.7 538.4M626.7 546.3L627.5 549.3M627.5 549.3L624.8 550.8M621.6 559.7L618.9 561.8M618.9 561.8L620.7 564M625.6 566.7L628.6 567.1M628.6 567.1L631.1 565.4M618.5 572.9L620.4 575.5M620.4 575.5L617.6 575.2M635.7 561L638.8 560.8M615.1 582.6L612.8 584.7M612.8 584.7L613.3 587.7M529.9 480L529.9 476.6M522.4 473.2L520.8 470M520.8 470L519.1 466.7M513.1 480.4L511.4 481.9M524.8 464.8L526.1 462.2M526.1 462.2L529.2 463M533.2 486.8L534.1 488.9M538.8 458.5L542.4 458.2M542.4 458.2L542.5 455.4M545.9 449.7L543.6 447.2M543.6 447.2L544.9 444.6M544.2 435.5L546.9 433.9M546.9 433.9L544.1 431.7M696.8 336.3L698.3 338.9M706.7 342.1L708.4 344.7M708.4 344.7L705.4 345.9M698.2 347.9L700.8 349.7M700.8 349.7L697.7 350.3M690.7 356.3L687.6 356M687.6 356L686.5 358.9M695.3 366.9L696.7 365.3M677.1 359.5L674.5 361.7M674.5 361.7L674.8 358.2M668.4 353.3L667.6 350M667.6 350L664.1 349.8M661.3 342.9L659 340.9M659 340.9L660.5 338.3M659.2 347.6L658.2 345.4M658.2 345.4L660.3 343.8M655.6 333.5L654.8 330.5M654.8 330.5L651.8 332.7M650.7 318.8L647.4 320.2M642.6 328.2L638.9 328M638.9 328L638.3 330.9M662.8 322.1L662.3 319.4M630.2 336.3L628.7 339.4M628.7 339.4L626.3 341.3M623.4 349.3L620.1 349M620.1 349L621.2 351.7M615.6 357.5L615.5 360.9M615.5 360.9L612.1 360.3M608.8 363.3L607.1 361.1M607.1 361.1L605.7 363.8M598.8 368.3L600.4 371.3M600.4 371.3L597.3 371.1M594.3 362.7L595.7 359.5M595.7 359.5L594.3 357.4M593.8 353.4L594.9 351.4M594.9 351.4L597.3 351.3M598.2 359.1L595.7 359.5M590 378.1L586.6 379.6M586.6 379.6L587.8 382.5M540.6 418.7L543.6 418.7M544.2 426.2L541.5 428M541.5 428L541.6 430.9M541.6 430.9L541.6 433.8M541.6 433.8L543.8 435.2M539.7 441.8L537.5 440.9M537.5 440.9L537.5 438.8M539.5 435.3L541.6 433.8M549.5 413.5L552.4 415.6M552.4 415.6L551.7 412.2M557.6 406.4L558.2 402.8M558.2 402.8L560.8 404.1M546.7 416L545.9 418.6M545.9 418.6L542.9 419.6M570.2 401.4L573.2 402.5M573.2 402.5L571.4 399.6M554.4 393.6L551.4 392M551.4 392L548.6 393M543.7 392.2L541.7 390.3M576.8 389.6L579.2 387.2M579.2 387.2L582.6 388.5M887.8 255.5L884.8 255.2M884.9 261.4L882.9 264.5M882.9 264.5L886 263.9M890.3 261L891.5 258.6M895.4 268.9L898.6 269.8M898.6 269.8L897.8 273.2M877.3 273.2L875.2 271.2M875.2 271.2L872.8 271.4M872.8 271.4L870.4 271.5M870.4 271.5L868.6 270.1M868.6 270.1L866.9 268.6M866.9 268.6L867.5 266.5M875.9 268.8L875.2 271.2M904.6 278.9L905.7 281.9M905.7 281.9L908.6 281.1M891.8 260.1L889.6 261.4M913.4 283.6L914.4 280.9M914.4 280.9L913.9 284.4M921.3 287.4L923.6 289.8M923.6 289.8L926.5 288.6M912.2 277.6L910.9 275.3M935.5 296.1L938.1 298.4M938.1 298.4L934.7 298.7M932.4 304L929.2 304M929.2 304L931.3 306.5M937.1 291L935.4 289.8M932.9 316.6L935.4 319.2M935.4 319.2L932.9 320.5M929 329.7L925.9 330.9M925.9 330.9L927.5 334M934.6 323.9L935.1 320.6M935.1 320.6L937.5 318.3M937.5 318.3L939.9 316M939.9 316L939.2 313.3M939.9 316L942.5 316.8M942.5 316.8L945.1 317.6M925 341.8L927.5 343.4M927.5 343.4L924.3 345M904.3 336.5L903.5 333.8M903.5 333.8L901 333.1M901 333.1L898.4 332.5M903.5 333.8L905 332.3M905 332.3L906.6 330.8M925.1 352.2L923.4 355.2M923.4 355.2L927 354M934.6 335.3L933.3 333.1M933.3 333.1L934.5 331.3M942 331L943.3 333M943.3 333L942.1 334.7M942.1 334.7L940.9 336.4M940.9 336.4L938.4 336.9M930.5 360.8L932.9 362.8M798.1 526.4L797.1 523.8M790.3 526.8L787.3 527M787.3 527L787.9 530.5M791 526.1L789.8 523.9M782.1 537.1L782.2 540.7M782.2 540.7L779.3 539.7M774.6 544.1L772.1 542.3M772.1 542.3L772.2 545.6M767.6 549.4L768.3 553.1M768.3 553.1L764.9 553.8M754.6 554.5L752.8 551.7M752.8 551.7L749.7 552.3M742.9 566.3L740.9 568.1M742.6 545.8L739.8 544.7M739.8 544.7L741 541.4M735.5 536.1L735.7 533M735.7 533L732.2 532.3M726.8 534L724.9 536.4M720.8 531.1L719 533.5M719 533.5L716.6 531.9M708.4 535.1L705.2 534M705.2 534L704.1 536.9M696 542.4L694.7 545.1M564.5 383.1L568 382.6M573.8 377.5L576.4 379.5M576.4 379.5L579.9 378.6M584.4 383.1L587.6 382.3M587.6 382.3L590.8 383.6M598.4 400.8L601 401M594.5 378.6L598 378.8M598 378.8L597.6 375.6M602.6 371.9L600.9 369.4M600.9 369.4L604 367.5M606.8 358.6L609.6 357.6M609.6 357.6L608.9 354.4M601.8 355L599.2 354.4M599.2 354.4L597.3 356.5M599.2 354.4L598.4 351.9M809.7 241.6L806.5 243.4M804 241.9L804.6 238.6M804.6 238.6L801.9 236.4M797.5 247.6L795.9 245.2M795.9 245.2L794.5 247.9M786.9 248L784.5 250.9M784.5 250.9L781.5 249.7M784.4 230.3L787.3 228.8M773.6 254L770.4 253.5M770.4 253.5L769.8 256.3M764.5 259.1L765.5 262.4M765.5 262.4L762.2 261.3M939.5 376.9L938.3 373.4M932.3 371.6L933.4 369M933.4 369L931.9 366.2M935.3 360.9L934.2 357.7M934.2 357.7L937.5 357.3M943.2 359.3L945.6 361.6M945.6 361.6L945.7 365.1M948 370L950.1 371.5M950.1 371.5L949.4 373.6M943.4 352L945.2 354.3M945.2 354.3L943.2 356.4M934.5 358.5L933.2 361.8M933.2 361.8L934 358.8M937.8 355.5L940.8 355.3M940.8 355.3L943.6 357.3M929.3 351.1L929.5 348.2M929.5 348.2L926.2 347M811.1 516L810.3 513.3M802.7 513.1L799.8 511.4M799.8 511.4L801.4 508.7M797.6 501.2L795.1 501.2M795.1 501.2L793.7 499.1M811.7 504.5L813.7 501.8M813.7 501.8L815.1 504.2M815 509.3L813.5 511.9M813.5 511.9L810.7 511.9M820.8 498.6L824.4 497.7M824.4 497.7L822.7 495.4M813.3 492.2L810.7 493M810.7 493L808.8 491.2M826.5 489.9L825.5 486.7M825.5 486.7L828.7 487.2M832.9 483.1L835.4 484.4M835.4 484.4L837.7 481.8M837.3 481.1L834.6 483M834.6 483L834.7 485.6M834.7 485.6L834.9 488.2M834.6 483L832.3 481.8M843 489.2L844.4 492.5M844.4 492.5L841.3 492.5M837.6 497.6L834.5 497.4M834.5 497.4L835.3 500.5M829.8 508.3L830.4 511.7M830.4 511.7L827.6 512.3M692.4 396.3L689 397.2M685.1 407.2L683.1 409.1M683.1 409.1L685 411.4M691.8 399.4L692.6 397.1M692.6 397.1L695.1 397.1M695.1 397.1L697.5 397M697.5 397L699.2 398.5M699.2 398.5L700.8 399.9M700.8 399.9L700 401.8M682.2 419.8L682.4 422.8M682.4 422.8L679.1 424.2M685.9 415.7L689.1 414.4M689.1 414.4L690.6 411.5M702 402.9L704.4 402.6M704.4 402.6L706 404.3M674.2 433.1L671.4 434.5M671.4 434.5L674 436.8M673.8 446.4L675.8 448.7M675.8 448.7L674 451.1M648.1 450L645.1 451.1M677.1 459.4L675.4 462M675.4 462L678.2 463.4M684.2 457.4L683.4 454.7M683.4 454.7L685.9 452.4M685.9 452.4L688.3 450.1M680 472.1L682.6 474.5M682.6 474.5L681.2 477.4M676.6 480.2L673.5 480.1M673.5 480.1L672.3 482.2M672.3 482.2L671 484.3M673.5 480.1L672.5 478.2M672.5 478.2L671.5 476.3M682.4 484.9L679.3 486.2M679.3 486.2L680 489.6M684.6 476.8L682.7 475.3M673.6 496.1L672.1 498.9M672.1 498.9L668.5 498.3M662.5 483.5L661.3 481M656.5 500.8L653.4 498.8M653.4 498.8L653 502M792.8 332.2L791.6 335.3M787.4 332L784.8 330.8M784.8 330.8L783.4 327.7M793.5 345.8L792 349M792 349L794.7 351.1M804 348L805.5 345M805.5 345L804.3 343.1M805.5 345L807.7 344.8M797.4 359.7L800.7 361M800.7 361L799.7 364.1M784.5 347.4L784 345.2M802.9 375L801.5 378.4M801.5 378.4L801.9 381.5M809 385.9L811.1 384.6M806.9 390L807 392.7M802.7 392.9L805.7 394.5M805.7 394.5L804.5 397.5M802.5 392.9L800.5 391M800.5 391L800.4 387.6M811.2 297.8L813.7 295.2M811.2 311.9L811.8 309.6M811.8 309.6L814.3 309M809.8 287.8L810 284.5M810 284.5L806.9 284.4M798.3 291.5L797.9 294.9M797.9 294.9L795.3 297.2M797.4 280.8L794.6 282.5M794.6 282.5L792.9 279.4M784.7 281.8L781.3 281.4M781.3 281.4L781.9 284.6M777.7 289.8L778.5 292.9M778.5 292.9L775.6 294.1M764.6 276L764.5 272.6M764.5 272.6L762.5 271.5M762.5 271.5L760.5 270.4M764.5 272.6L766.5 271.4M766.5 271.4L768.4 270.2M774.8 302.4L771.8 304.3M771.8 304.3L773.5 306.6M777.9 307.6L780.4 306.3M780.4 306.3L780.6 304.1M780.4 306.3L782.5 307.6M769.9 316.9L770.1 320.3M770.1 320.3L766.7 320.6M769.4 291.2L768.5 288.9M772.9 293.8L775.5 294.2M760.3 327.1L757 327.4M757 327.4L756.6 330.4M758.1 326.2L756.9 324.1M762 328.4L764.8 328.5M751.5 336.3L752.5 339.7M752.5 339.7L750.6 342.3M745.8 345.6L743 346.2M743 346.2L740.8 344M725.3 339L722.5 339M825.8 335.6L824.8 338.9M828.1 347.7L826.5 350.7M826.5 350.7L829 352M831.9 360.3L835 361.3M835 361.3L833.8 364.2M836.2 373.2L834.6 376.3M834.6 376.3L837.7 377.9M854.4 362.9L852.9 360.8M852.9 360.8L853.9 358.6M857.4 356.5L859.9 356.7M859.9 356.7L861.4 358.2M838.6 386.7L841.1 389.2M841.1 389.2L840.1 392M833.3 363.6L831.9 361.9M843 401L841.2 403.8M841.2 403.8L844.6 403.5M853.2 409.2L856.6 409.9M856.6 409.9L857.6 412.6M841.6 424.1L840 422.2M840 422.2L840.9 420.2M844.3 417.7L846.7 417.1M846.7 417.1L848.3 418.9M866.5 413.3L868.6 415.2M868.6 415.2L870.4 412.9M614.4 439L615.3 436.3M619.4 440.8L622.4 442.4M622.4 442.4L622.4 445.7M613 426L614.8 423.6M614.8 423.6L612.1 421.1M611.2 409.8L609.8 406.7M609.8 406.7L612.3 404.1M614 394.1L616.6 392.6M616.6 392.6L617.8 389.7M623.1 393.5L625.9 393.9M625.9 393.9L627.1 397.4M637.8 402L640.1 404.7M640.1 404.7L643.1 403M641.3 390.6L641.1 388.6M641.1 388.6L643.3 387.4M647.6 387.1L649.8 388.2M649.8 388.2L649.9 390.2M645.9 409.9L648.6 411.6M648.6 411.6L647.7 415.1M645.8 415.6L644.7 412.6M644.7 412.6L641.4 411.6M645.1 426.6L641.9 427.6M641.9 427.6L642.5 430.4M637.5 439.7L638.2 443.2M638.2 443.2L635.2 444.1M633.4 453.7L630.7 456.1M630.7 456.1L632.4 458.9M628.4 464.9L628.8 467.7M628.8 467.7L625.9 468.5M625.4 468.2L627.8 467.1M627.8 467.1L628.1 464.8M628.1 464.8L628.4 462.5M628.4 462.5L630.6 461.8M629.9 468.4L627.8 467.1M620.2 471.8L619.9 468.8M619.9 468.8L616.6 470.1M722.3 422.5L725.1 422.9M729.3 449.1L730.6 452.2M734.2 419.9L737.1 420.9M737.1 420.9L738.3 418.2M732 412.2L729.4 413.2M735 408.6L735.5 405.8M745.8 414.5L747 411.2M747 411.2L749.8 411.5M758.2 406.1L761.6 405.9M761.6 405.9L762.6 402.6M755.8 404.3L752.6 404M752.6 404L750.7 406.8M745.8 409.9L742.8 410.2M742.8 410.2L741.9 412.1M742.8 410.2L741.4 408.3M741.4 408.3L740 406.4M769.7 396.8L769.1 393.8M769.1 393.8L771.9 391.6M769.4 384.1L769.6 381M769.6 381L766.4 381.3M757.6 374.5L754.4 374.3M754.4 374.3L753.9 370.8M783.4 376.4L785.8 375.7M746.6 366.4L746.6 363.3M793.2 384L796.1 381.7M808.3 389.1L810.7 390.8M801.2 372L804.4 370.5M804.4 370.5L804.4 366.8M787.4 355.3L784.6 354.8M808.4 362.6L807.3 359.1M807.3 359.1L809.8 356.6M812.4 382L813.8 383.7M810.4 345.6L811.6 342.5M811.6 342.5L809.2 340.5M804 338.3L801.1 338.2M801.1 338.2L799.7 339.8M799.9 336.1L801.1 338.2M806.1 331.6L802.9 329.8M802.9 329.8L804.2 327.3M836.1 331.3L836 333.6M836 333.6L833.8 334.7M801.9 319.2L804.1 317.3M804.1 317.3L801.9 314.7M796.5 313.3L793.3 314.5M793.3 314.5L793 317.3M789.8 336.7L788.8 338.8M788.8 338.8L786.2 338.7M783.1 336.3L782.6 334.1M782.6 334.1L784.8 332.6M804.3 305.7L803.4 302.7M803.4 302.7L806.7 302M811 295L814.3 294M671 467.8L667.6 467.8M667.6 444.7L666.7 442.6M661 475.5L657.9 476.3M657.9 476.3L657 479M650.9 481.3L650.4 484.5M650.4 484.5L646.9 484.4M643.7 488.6L640.2 488.7M640.2 488.7L637.8 491.3M635.2 497.2L635.1 500.4M635.1 500.4L637.1 502.7M643.4 521.6L641.7 523.3M629.9 490.2L627.3 492.1M791.5 436.6L788.7 434.6M805.6 436.2L808.8 434.7M808.8 434.7L811.3 436.2M778.5 435.4L775.8 434.4M775.8 434.4L774.7 437.1M782.7 446.8L783.9 449M783.9 449L782.7 450.7M766.1 439.2L764.1 441.9M764.1 441.9L761 441.3M751.6 445.9L748.3 445.5M748.3 445.5L747.6 448.7M742.1 451.5L743.3 454.2M743.3 454.2L742.3 457.3M743.2 468L741.7 470.4M741.7 470.4L744.4 471.8M752.1 477.3L754.3 475M754.3 475L753.9 478.5M760.4 485L760.1 488.2M717.1 450.7L719.6 449M733.2 457.8L736 459.3M736 459.3L738.1 458.2M736 461.6L736 459.3M714.5 443L713.9 439.7M713.9 439.7L711.9 437.2M706.1 454.4L704.5 457.1M704.5 457.1L705.2 460M710.6 467.5L710.5 469.7M710.5 469.7L707.9 470.2M712.6 425.8L711 422.7M711 422.7L713.8 421.4M721.1 426L721 429.2M721 429.2L722.5 431.4M722.5 431.4L724.1 433.7M724.1 433.7L723.3 436.4M716 413.1L718.9 411.6M718.9 411.6L717.2 409M712.6 405.8L709.5 405.1M709.5 405.1L707.3 407.4M702.1 409.6L699.1 409.5M699.1 409.5L696.7 412M688.4 411L687.7 408.6M716.7 399L714.7 396.9M714.7 396.9L716.6 394.5M718.8 395L719.2 398M719.2 398L721.5 399.7M878 355.8L874.7 356.3M873.1 364.1L871.2 366.4M871.2 366.4L872.6 369M872.5 378.6L874.5 380.5M874.5 380.5L874.2 384.1M866 379.4L863.6 380.5M878.4 392.3L877.3 394.9M877.3 394.9L879.6 397.8M888.9 398.2L890.3 396.1M890.3 396.1L892.8 396.9M879.1 408.4L881.1 411.1M881.1 411.1L877.8 411.8M889.3 401.3L891.7 402.4M870.8 419.4L867.1 419.4M867.1 419.4L865.6 421.9M781.6 413.6L784.6 415.7M780.6 421.7L779.1 424.6M794.5 414.7L797.1 417.1M797.1 417.1L799 414.6M807.1 412.6L808.1 409.3M808.1 409.3L811 410.1M819.4 404L822.1 402.1M822.1 402.1L823.9 399.9M834.2 398.8L836.5 396.5M836.5 396.5L839.4 396.9M844.5 390.1L848.2 390M848.2 390L846.5 387.1M847.5 377L845.3 374.4M845.3 374.4L847.7 372.5M723.1 453.9L721.7 457.2M724.1 466.8L721.6 469.6M721.6 469.6L725 471M744.9 459.2L746 461.3M746 461.3L744.5 463M730.4 480.1L733.2 480.9M733.2 480.9L732.9 484.4M729.7 487.7L726.9 487.7M726.9 487.7L724.7 485.7M739.5 493L741 496.4M741 496.4L744.4 495.5M737.1 485.7L734.4 484.4M734.4 484.4L733.6 481.6M733.6 481.6L732.8 478.8M732.8 478.8L729.9 477.4M729.9 477.4L727 476.1M727 476.1L725 477.4M725 477.4L723.1 478.8M727 476.1L726.8 473.9M752.2 500.1L755 499.8M755 499.8L756 502.6M748.5 514.8L748 517.4M747.1 510.5L745.3 508.9M763.6 505.7L764.8 508.4M764.8 508.4L764.7 504.7M756.8 516.5L754.4 517.4M754.4 517.4L752.8 515.6M769.9 498.2L768.3 495.3M768.3 495.3L771.3 494.4M778 486L781.4 485.2M781.4 485.2L779.9 482.2M778.5 482.7L778.6 486.1M778.6 486.1L776 488.1M771 503.4L772.1 505.7M767.5 501L765 500.8M782.7 472.4L781.7 469.7M781.7 469.7L785.4 469.7M792.4 477L792 480.2M792 480.2L794.4 482.4M792.9 464.5L795.9 465.3M795.9 465.3L796.6 462.5M805.3 460.4L806.8 457.9M806.8 457.9L808.8 460.2M804 474.7L803.6 477.3M819.2 460.2L821.7 462.3M821.7 462.3L821 459M865.4 339.9L867.5 342.6M860.5 344.3L857.7 345.5M857.7 345.5L857.4 348M857.7 345.5L855.5 343.8M855.5 343.8L853.3 342M877.5 344.8L879.7 347.2M879.7 347.2L882.4 345.6M889.1 337.9L891.2 337.4M894.1 347.9L897.5 348.2M897.5 348.2L898.2 351M888.5 363.7L886.2 362.6M886.2 362.6L885.9 360.5M903.1 355.8L900.8 358.6M900.8 358.6L902.9 361.2M907.1 355.6L909 353.6M909 353.6L909.4 350.4M909.4 350.4L909.7 347.1M909.7 347.1L912.4 345M912.4 345L915 342.8M898.6 367.7L899 370.9M899 370.9L898.7 373.8M903.9 383L903.6 385.9M903.6 385.9L905.7 387.8M905.5 397.2L907.2 399.7M907.2 399.7L905 402.6M888 403.7L884.9 404.8M884.9 404.8L882.7 403.1M905.5 411.6L903.3 414.3M903.3 414.3L905.2 416.5M905.4 426.2L907.6 428.8M907.6 428.8L905.8 431.3M905.8 441.4L903.8 444.4M903.8 444.4L907.2 445.7M905.5 430.3L906.2 427.7M905.1 453.4L904.8 456.9M904.8 456.9L901.2 457.1M908.3 440.9L909 438.1M909 438.1L907.2 436.4M909 438.1L911.3 437.5M894.8 464.9L892 466M892 466L891.7 469.6M882.1 477.5L878.9 478.7M721.7 499L720 496.1M711.7 497L708.6 496.2M708.6 496.2L707.5 499.4M698.7 505.7L698.1 509.2M698.1 509.2L694.4 509.6M695 503.7L695.1 500.7M684.9 515L682.1 514M682.1 514L680.3 517M670.7 519.7L669 522.3M669 522.3L665.4 522.2M657.8 529.4L654.7 531.1M654.7 531.1L656.7 534.1M655.5 545.2L656.6 548.3M656.6 548.3L653.1 549.3M646.5 558.5L643.4 559.9M643.4 559.9L643.7 562.8M648.5 558.7L650.8 557.3M650.8 557.3L650.6 554.6M638.8 568.9L639.7 572.2M639.7 572.2L637 573.5M629.3 581.2L626 580.5M626 580.5L626.6 583.3M760.7 424.6L758 423.2M751.8 428.8L748.6 429.9M748.6 429.9L749.7 433.2M752.5 441.9L755.3 441.8M755.3 441.8L755 445.2M759 453.7L758 456.9M758 456.9L760.5 458.7M765.8 465.9L769.1 465.6M769.1 465.6L768.7 468.8M770.2 476.6L767.1 477.9M767.1 477.9L767.7 480.8M771.1 485.5L774 487.4M774 487.4L776.5 486.1M760.1 486L758.8 488.8M758.8 488.8L755.4 488.6M766.8 475.5L768.3 473.1M768.3 473.1L767 470.9M770.8 473.1L768.3 473.1M744.1 484.6L743.3 481.2M743.3 481.2L740 482.4M731.8 489.5L732.8 492.5M732.8 492.5L729.6 494.3M728.1 468.3L729.6 465.2M725.8 504.2L723 505.7M723 505.7L726.2 506.1M732 511.5L735.3 510.7M735.3 510.7L735.6 513.9M733 519L730.1 520.8M730.1 520.8L727.4 519.9M867.2 306.9L864.9 309.1M865 316.9L862.3 318.6M862.3 318.6L863.3 322.1M872.8 325.6L875.2 323.7M875.2 323.7L878.6 323.8M857.6 321.4L854.4 321.7M854.4 321.7L853 318.9M852.6 310L856 309.4M856 309.4L855.5 306.5M658.6 466.6L657.5 463.9M666.6 451.3L667.1 448.8M649.8 467.5L646.4 467.5M646.4 467.5L646.4 470.9M638.2 473.1L636.4 475.7M636.4 475.7L633.2 476M624.2 470.1L623.2 466.7M623.2 466.7L620.8 466M620.8 466L618.3 465.3M618.3 465.3L617.6 463.1M617.6 463.1L616.9 460.9M616.9 460.9L618.6 459.3M618.6 459.3L620.4 457.8M620.4 457.8L622.8 458.1M624.9 464.8L623.2 466.7M626.3 481.7L622.9 480.5M622.9 480.5L621.4 483.2M637.3 496.7L640.8 496.6M802.8 424.1L804.6 426.6M799.3 428.5L797.1 430.1M813.6 429.2L815.3 431.4M815.3 431.4L818.8 430.5M828.9 432.6L831.5 430.7M831.5 430.7L832.9 433.4M825.6 446.7L824.5 449.5M824.5 449.5L825.9 451.3M825.9 451.3L827.2 453.1M824.5 449.5L821.7 449.9M842.1 438.7L843.2 441.5M843.2 441.5L845.9 440.2M855.2 437.3L855.4 433.8M855.4 433.8L858.2 434.7M866.6 430.9L869.2 432.7M869.2 432.7L870.9 429.5M849.5 432.2L847.3 434.3M847.3 434.3L847.9 436.7M847.3 434.3L844.7 433.6M844.7 433.6L842.1 432.9M879.4 424.9L880.3 421.6M880.3 421.6L883.8 421.4M890 422.7L892.9 424.1M892.9 424.1L893.2 427M891.6 431.4L889.6 432.9M893.1 414.9L896.7 414.4M896.7 414.4L896.7 411M900.8 398.9L901.5 395.8M901.5 395.8L904.5 394.8M899.4 390.8L897.1 389M738.7 380.1L736.7 382.1M734.3 391.6L731.7 393.2M731.7 393.2L733 396.1M735.2 395.9L736 392.9M728.9 403.9L728.9 407.3M728.9 407.3L725.8 407.1M733.7 400.5L733.3 397.8M720.6 414L717.3 414.5M717.3 414.5L717.2 417.9M709.4 425.8L708.5 428.6M708.5 428.6L705.4 427.1M705.3 426.5L708.3 427.3M708.3 427.3L710.1 425.5M710.1 425.5L711.9 423.7M708.3 427.3L708.9 429.5M708.9 429.5L709.5 431.7M700.8 433.5L698.1 434.5M698.1 434.5L698.7 437.8M695.4 445.5L697.5 447.7M697.5 447.7L696.6 450.5M698.5 460.9L697.9 463.7M697.9 463.7L699.7 466.8M701 477L703.3 478.9M703.3 478.9L700.6 480.1M681.9 457.7L682 455.3M682 455.3L684.4 454.5M694.2 488.5L690.7 489.6M690.7 489.6L692 492.7M702.4 494.6L705 492.9M705 492.9L704.8 490.7M711.5 493.5L709.4 494.7M709.4 494.7L707.2 493.8M707.2 493.8L705 492.9M692.2 502.8L695.1 505M695.1 505L692.7 507.4M694.1 515.5L693.1 518.2M693.1 518.2L695.3 521M666.5 412.7L664.6 414.8M655.3 413.6L653.1 414.5M663.6 423.9L661.5 425.8M661.5 425.8L662.5 428.8M656.2 434.1L655.7 437.2M655.7 437.2L654.8 434.4M658.4 438.5L657.9 440.7M647.8 434.3L645.3 431.7M645.3 431.7L641.6 431.9M633.3 425.7L629.9 426.1M629.9 426.1L629.8 423M630 423.1L630.5 426.4M630.5 426.4L633 427.6M648.1 373.2L648.4 376.6M646.5 382.4L644.4 384.7M644.4 384.7L641.7 384.5M657.2 382.7L658.4 386.1M658.4 386.1L661.7 386.3M669.5 394L672.4 395.9M672.4 395.9L671.4 398.9M664.2 392.6L661.9 393.3M661.9 393.3L659.9 392.1M660.8 385.3L663.1 384.5M663.1 384.5L665.1 385.8M665.1 385.8L667.1 387.1M667.1 387.1L666.8 389.5M672.2 405.7L669 406.8M669 406.8L667.8 409.6M683.3 402.8L686.1 402.3M659.4 409.3L657 410.6M657 410.6L656.4 407.5M669.2 398.4L671.8 396.8M671.8 396.8L674.9 396.9M651.3 410.1L648.4 409.9M648.4 409.9L646.7 412.5M637.5 414.1L635.5 416.6M635.5 416.6L632 416.8M641.1 411.7L644 412.2M644 412.2L645.8 410.1M644 412.2L644.8 414.5M625.3 424.1L622.3 423.7M622.3 423.7L621.6 426.5M631 425.4L632.3 427.4M613 431L612.2 433.9M612.2 433.9L609.1 432.2M625.7 426.3L628.7 424.8M628.7 424.8L628.8 422.1M628.7 424.8L631 426.3M631 426.3L633.3 427.8M600.8 435.7L597.4 435.3M597.4 435.3L597.4 438.3M605.9 444.2L609.2 443.6M590.3 446.3L589.5 449.4M589.5 449.4L586 448.4M582.2 425.4L584 426.8M584 426.8L582.9 429.1M588 456.1L588.5 459.3M588.5 459.3L591.3 461.3M596.5 462.2L598.9 460.9M652.2 462.8L648.9 463.6M650.6 457.9L651.1 454.6M651.1 454.6L649.1 452.9M649.1 452.9L647 451.2M651.1 454.6L653.5 453.7M644.4 470.9L641.6 471.9M641.6 471.9L642.6 474.9M637.5 482.4L638.1 485.6M638.1 485.6L634.5 486.1M636.4 480.7L636.3 477.9M638.5 484.5L640.6 485.7M625.2 491L622.4 490.3M622.4 490.3L620.7 493.3M620.4 498.7L621.7 501M621.7 501L624.9 501.4M629.3 504.8L630.4 507.7M630.4 507.7L633.1 508.1M633.1 508.1L635.8 508.5M630.4 507.7L628.7 509.9M612.3 498.1L611.4 501.4M611.4 501.4L608.4 499.2M600.3 494.8L601.2 491.3M601.2 491.3L597.9 492.6M592 486.4L588.6 486M588.6 486L588.3 483.2M592.6 486.4L592.2 488.5M580.6 476.1L579.9 473.1M579.9 473.1L576.5 473.2M585.9 486.9L588 486.3M612 459.9L615.4 460.8M608.8 471.7L605.8 473.2M605.8 473.2L605.6 476.1M619.2 456.4L622.1 456.9M622.1 456.9L623.3 454M633.4 451.7L636.5 450.7M771 360.7L773.4 358M783.4 357.3L785.1 359.3M771.5 349.6L772.4 346.4M772.4 346.4L769.2 346.5M763 342.7L761.7 345.4M761.7 345.4L758.5 344M764.7 340.8L767.5 338.8M767.5 338.8L770.1 339.5M774.3 338.5L775.9 336.9M749.3 348.5L746.4 347.8M746.4 347.8L746.4 350.9M737.4 356L735 357.8M735 357.8L732.8 355.5M722.7 356.9L719.8 356.8M719.8 356.8L718.9 360.1M712.9 364.8L713.4 367.7M713.4 367.7L710.5 368.5M702 364.5L701.6 361.9M706.5 376L703.2 376.2M703.2 376.2L705.8 378.6M713.8 384.3L716 382.1M716 382.1L718.7 384M695.4 396.3L693.3 394.7M731.4 385.5L734.9 386M734.9 386L736 383.2M723.1 380.6L720 381.1M742.5 387.8L745.7 389M745.7 389L746.3 391.9M735.5 404.2L734 406.9M734 406.9L735.1 408.8M734 406.9L731.7 407M731.7 407L729.4 407.1M753.6 395.8L755 399.1M755 399.1L757.2 397M746.7 393.1L744 393.3M766.3 395.8L768.7 393.1M768.7 393.1L770.5 396.1M764 398L761.2 399.6M761.2 399.6L758.7 398.9M779.5 396.8L782 398.7M782 398.7L784.2 396.8M889.1 304.1L887.8 300.8M889 298.7L891.5 299.9M891.5 299.9L893.7 298.3M891.5 299.9L891.8 302.6M879.1 295.6L877.6 292.6M877.6 292.6L874.1 292.9M865.2 288.4L862.3 290.2M862.3 290.2L861.1 287.3M851.5 281.6L849.9 278.6M849.9 278.6L846.5 280.1M835.9 277.1L832.8 278.2M832.8 278.2L834.3 275.3M827.1 268.4L825 266.3M825 266.3L822.3 267.9M811.7 267.5L809.2 269.4M809.2 269.4L807 266.9M799.9 267.8L797.5 265.5M797.5 265.5L795.1 267.3M793.7 289.5L794.9 292M786.1 268.7L785.8 272.1M785.8 272.1L782.7 270.2M780.7 248.4L782.1 245.4M774.6 274.2L771.2 274.1M771.2 274.1L770.2 277.1M799.5 280.8L801.7 279.1M797.7 284.6L798 286.7M762.1 283.1L761 285.8M761 285.8L758.3 284.7M756.3 280.6L757 277.5M757 277.5L759.5 276.4M764 276.6L765.9 278.1M752.5 286.1L752 282.7M752 282.7L748.3 282.9M747.5 284.3L750.3 285.5M750.3 285.5L750.9 288.4M857.4 396.2L854.2 396.5M846.3 403.6L842.7 403.6M842.7 403.6L840.6 405.4M832.2 409.8L832.4 412.8M832.4 412.8L830.9 415.4M817.8 414.2L817.8 411.5M832.5 424.1L830 426.4M830 426.4L831.7 429.1M826 438.7L824.8 441.9M824.8 441.9L821.9 441.6M818.1 438.5L817.1 435.7M812.9 445L810.5 443.1M810.5 443.1L807.9 445.4M816.8 461.6L819.4 462M798.3 448L796.8 450.6M796.8 450.6L793.9 450.5M791.6 454.1L788.6 452.9M788.6 452.9L786.9 455.2M791.2 464.7L794.3 466M815.7 345L813.2 343.7M827.7 338.2L829.3 335.8M829.3 335.8L828.1 333.6M832.2 327.8L834.7 328.5M834.7 328.5L835.8 330.1M831.8 335.8L829.3 335.8M804.8 346.4L801.7 344.8M801.7 344.8L799.2 347.4M803 340.3L805.3 339.2M805.3 339.2L807.1 340.9M789.9 356.1L788.4 358.7M788.4 358.7L785.6 358.4M778.1 364L774.6 363.3M774.6 363.3L771.9 365.2M774.8 372.6L777.4 373.3M766.9 364.7L767 367.7M767 367.7L764.4 369.2M754.4 372L751.8 369.7M751.8 369.7L748.7 370.4M745.4 374.1L745.2 376.9M745.2 376.9L747.7 379M752.6 380.1L754.9 379.2M741.8 364.9L738.2 364.3M738.2 364.3L739.4 361.6M743.3 367.3L745.3 369.3M734.5 355.4L734.7 352.3M734.7 352.3L731.3 353.4M721.5 374.1L721.7 377.4M834.2 290.8L837.5 291M848 290.5L849.5 293.1M849.5 293.1L852.5 292.4M854.6 283.1L852.7 281.2M859.2 298L862.2 297.3M862.2 297.3L862.9 300.7M850.6 310L847.9 311.8M847.9 311.8L845 311.2M870.8 305.6L871.4 308.4M871.4 308.4L874.4 307.5M865 277.7L862.6 276.4M869.6 277.5L871.9 276.1M879.9 313.1L883.3 313.8M883.3 313.8L882.1 316.9M888.7 317.7L891.4 320.1M891.4 320.1L891.7 317.3M879.9 317.7L878.6 315.3M900.2 311.6L901 308.2M901 308.2L904 308.1M909.1 301.4L911.8 302.2M911.8 302.2L913.8 299.9M920.1 296.2L918.8 293.3M918.8 293.3L921.8 292.5M924.1 286.6L927.1 286.7M927.1 286.7L927.6 283.6M934.4 281.6L936.1 278.5M936.1 278.5L939.2 280.5M947.3 282.5L947.2 285.3M947.2 285.3L949.5 287.5M847.7 350.4L844.1 350.7M839.9 357.3L836.9 356.8M836.9 356.8L837.7 359.8M834.7 367.3L836.6 370.3M836.6 370.3L833.6 372.2M826.3 383L823.8 384.7M823.8 384.7L825.3 387.1M822.1 392.2L824.3 394.1M824.3 394.1L820.8 395.2M823.1 401.2L822.7 404.6M822.7 404.6L825.3 405.7M829.8 405L831.7 403.1M830.3 414.5L833.2 416.1M833.2 416.1L832.3 419.1M835.8 426.6L833.9 429.3M833.9 429.3L835.9 431.8M838 411.1L840.4 410.9M835.6 439.6L838.8 441.1M838.8 441.1L836.3 443.1M821.7 432.2L820.8 429.4M820.8 429.4L818.3 428.8M822.4 427.5L820.8 429.4M832.8 451.9L829.4 453.1M829.4 453.1L830.5 455.8M826.2 461.3L826.4 464.6M826.4 464.6L823.6 465.8M820.3 471.7L817.3 470.4M817.3 470.4L816.5 473.7M855 337.3L854.3 333.8M866.3 338.6L868.5 341.1M868.5 341.1L871.1 340.8M868 343.4L868.5 341.1M848 325L848.1 321.3M848.1 321.3L845.2 322.9M835.1 317L831.9 315.7M831.9 315.7L834.1 313.8M834.9 303.6L836.8 301.2M836.8 301.2L833.6 301.2M840.7 317.9L840.1 320.5M829.9 293.3L827 291M827 291L828.4 288.4M842.2 309.8L841.1 311.7M841.1 311.7L838.5 311.8M829.6 278.4L832.7 277.1M832.7 277.1L833.2 273.7M839.8 265.8L839.5 262.5M839.5 262.5L842.9 260.9M853.4 261.9L854.6 264.2M847.2 251.5L850.1 250M850.1 250L849.7 246.9M852.9 236.7L850.7 233.8M850.7 233.8L853.2 231.4M856 222.5L859 221.5M859 221.5L855.7 221.4M853.1 213.3L851.5 210.9M851.5 210.9L851.8 208M864 231.3L865.8 232.6M860 230.9L857.9 231.9M843 199.2L840.5 197M840.5 197L841 200.4M836.4 208.8L837.6 211.8M673.9 424.3L674.5 427.3M682.3 430L683.7 432.9M683.7 432.9L683.8 429.4M690.1 434.2L692.6 436.9M692.6 436.9L693.5 440.1M701.8 449.7L704.2 452.5M704.2 452.5L704.5 449.5M681.7 452.3L680 453.9M682.9 448.4L682.3 446.2M710.5 446.4L710 442.9M710 442.9L712.4 444.8M701.6 472.6L700.9 470.6M700.9 470.6L702.6 468.9M719.3 442.2L722.1 443.2M722.1 443.2L724 440.5M730.9 438.6L731.6 435.1M731.6 435.1L734.9 435.7M736.1 461.2L737.3 463.2M732.5 459.3L730.1 459.3M820.1 360.8L817.9 363.6M821.1 369.7L819.2 372.5M819.2 372.5L821.7 374.3M827.1 375.8L830 375.5M887.5 377L884 377.2M877.1 384L873.9 384M873.9 384L874.4 387.6M879.4 384.5L882.2 382.8M882.2 382.8L883.4 380.3M883.3 376.1L882.1 374.3M886.7 377.7L888.8 377.5M868.1 397.2L867.9 400.6M867.9 400.6L865 401.4M860.7 380.5L858.1 380.4M858.1 380.4L857.3 378.1M857.3 378.1L856.6 375.8M856.6 375.8L858.7 374.5M864.4 408.4L862.3 410.9M862.3 410.9L865.1 412.8M867.6 421.7L870.5 423.3M870.5 423.3L869.2 425.8M867.2 420.5L865.3 418.7M865.3 418.7L865.7 416.8M868.5 413.9L870.9 412.9M870.9 412.9L872.8 414.3M869.5 432.6L866.4 432.6M866.4 432.6L868.8 435.4M881.4 432.7L881.1 430.4M883.6 435.9L885.5 436.8M863.9 439.5L863.6 442.6M863.6 442.6L860.8 442.8M855.6 449.8L852.7 449.4M852.7 449.4L851.9 452.8M868.5 464.9L871.6 465.1M871.6 465.1L873 463.1M873 463.1L874.3 461.1M871.6 465.1L872.8 467.5M872.8 467.5L874 469.9M846.8 457L848.3 459.9M664.2 373.6L666.5 375.3M674.1 373.2L676.4 375.9M676.4 375.9L679.2 374.8M684.4 377.4L686.1 374.5M686.1 374.5L687 377.3M695.2 383.7L696.2 386.9M696.2 386.9L699.2 386.7M704.3 373.3L705.7 370.8M708 390.5L710.3 388.1M710.3 388.1L712.9 389.3M716.7 398.1L715.2 400.3M861.6 326.8L864.4 324.8M883 333.6L885.1 336.1M885.1 336.1L888.4 335.5M867.5 315.9L870.3 315.1M870.3 315.1L869.3 311.8M873.1 306.1L871.8 302.9M871.8 302.9L875.3 303.9M885.2 305.5L886.6 308.8M886.6 308.8L889.4 307.8M893 303.8L893.9 300.8M893.9 300.8L892.2 299.2M893.9 300.8L896.2 300.2M896.5 312.6L899.5 311.3M899.5 311.3L900.2 314.8M642.6 372.3L639.9 371.5M634 373.4L632.1 370.3M632.1 370.3L629.9 368M594.7 378.7L592.2 379.2M592.2 379.2L590.7 377.2M590.7 377.2L589.2 375.3M589.2 375.3L590.3 373.1M632.7 359.2L633 356.1M633 356.1L634.9 358.9M610.1 354L610.2 351.7M643 357.9L644.9 360.1M644.9 360.1L646.8 357.7M628.8 355.4L625.7 354.6M651.1 360.9L653.9 359.5M653.9 359.5L655.9 362.5M650.4 362.4L647.4 362.6M647.4 362.6L645.3 360M645.3 360L643.2 357.5M581.6 467.5L581.5 464.7M590.2 478.5L588.7 480.2M577.3 458.8L578.9 456.2M578.9 456.2L575.8 455M570.4 445.1L567.5 442.9M567.5 442.9L568.9 439.8M583.5 434.5L585.4 433.3M585.4 433.3L587.8 434.1M570.2 430.2L573.2 429.4M573.2 429.4L571.7 426.4M555.1 425.4L553.8 423.3M553.8 423.3L555.1 421.5M555.1 421.5L556.4 419.7M556.4 419.7L558.9 419.5M558.9 419.5L561.4 419.2M561.4 419.2L562.6 421.3M575.2 416.4L576.2 413.8M576.2 413.8L577.9 416.2M585 415.7L587 418.6M587 418.6L589.1 415.7M596.2 413.3L596.8 409.9M596.8 409.9L599.3 412.2M607 407.8L610.5 406.9M610.5 406.9L608 404.7M603.5 410.1L601.3 411.6M609.7 397L608.7 394M608.7 394L611.8 392.6M621.9 415.3L624 418M615.7 383.3L618.4 380.9M618.4 380.9L620.4 378.4M612.4 371L613 368.3M630.6 375.6L632.6 372.6M632.6 372.6L633.4 376.2M614.6 376.4L612.5 377.5M612.5 377.5L610.3 376.5M637.5 387L635.9 390.1M635.9 390.1L636.6 393.3M636.9 344.6L638.9 347.5M649.9 347L653.2 345.8M653.2 345.8L650.2 344.9M644.9 338.9L642.1 340.5M642.1 340.5L641.7 337.5M635.7 332.2L637 328.8M637 328.8L637.7 325.7M627.9 325.8L626.4 323.8M643.8 316.3L642.8 313.3M642.8 313.3L645.9 312.4M637.5 319.6L635.3 318.7M635.3 318.7L635.4 316.5M654.5 311.5L655.1 314.8M655.1 314.8L658.6 314.7M665.5 319.5L667.9 317.2M667.9 317.2L666.1 319.9M662.5 303.5L660.9 301.7M666.7 304.6L669.5 304.1M851.1 263.5L849.7 266.1M835.9 268.2L835 265.7M857.8 267.6L860.7 267.6M860.7 267.6L859.8 264.9M866.3 259.9L867.5 257M867.5 257L869.9 254.8M870.2 244.7L872.4 242.1M872.4 242.1L870.7 239.6M869.8 230.4L867.6 228.6M867.6 228.6L870.8 226.8M871.6 217.6L873.3 214.6M873.3 214.6L870.4 212.4M865.6 205L862.4 206.3M862.4 206.3L861.4 203M862.4 202.2L864.6 204.7M864.6 204.7L867.3 205.1M867.3 205.1L870 205.5M870 205.5L871.3 208.2M877.9 215.9L878 218.3M853.4 197.6L852.1 194.7M562.3 454.9L561.7 458.1M546.7 459.6L544.1 459.8M565.2 466.9L563.4 470M563.4 470L563.3 473.3M590.4 474.6L593.3 475.7M561 478.7L564.6 478.8M564.6 478.8L564.8 481.6M552.1 477.6L549.7 475.6M549.7 475.6L546.5 476.8M570.8 489.8L570.8 493.2M570.8 493.2L573.9 493.2M587.3 470.9L589.7 469.6M580.2 499.9L583.3 500.6M583.3 500.6L582.9 504.2M586.8 514.3L585.8 517.7M585.8 517.7L588.8 517.4M595.5 511.4L595.2 509.1M598 514.7L600.1 515.6M595 523.4L598.6 523.1M598.6 523.1L599.5 525.8M604.3 529.7L602.3 532.3M602.3 532.3L605.8 533.4M608.2 541.9L610 544.1M707 510.7L709.8 512.3M718.6 510.8L720.2 513.3M720.2 513.3L723.2 511.3M719.5 491.5L721.9 491.6M721.9 491.6L723.5 493M730.6 515.9L733.9 515.2M733.9 515.2L734.8 518.7M743.1 522.3L744.3 525.4M744.3 525.4L746.9 523.5M755.2 522.9L755.9 519.8M755.9 519.8L759.1 521.2M748.7 521.9L745.5 520.8M745.5 520.8L742.5 521.7M768.6 518L771.6 519.1M771.6 519.1L773 515.9M763.4 504.3L762.5 502.1M780.6 518.5L784.1 518.7M784.1 518.7L781.7 521.2M774.8 527.5L772.5 525.8M772.5 525.8L770.2 527.4M777 529.7L779.8 531.4M779.8 531.4L782.7 531M763.7 533.6L765 536.2M765 536.2L762.5 538.3M812.1 481.4L815.2 481.6M824.3 478.7L826 480.9M826 480.9L828 478.7M821.2 454.9L821.2 452.7M835.4 478.2L837.1 475.2M837.1 475.2L840 473.4M626.7 514.9L628.6 511.9M624.5 505.7L624.9 502.8M624.9 502.8L621.3 502.8M639.2 516.7L641.5 516.4M635.8 519.2L634.8 521.5M616.2 497.5L612.6 497.5M612.6 497.5L613 494.2M608.3 485.9L609.7 482.9M609.7 482.9L606.8 483.2M604.7 475.4L601.7 473.4M601.7 473.4L603.4 470.9M601.2 466.5L602.9 463.7M602.9 463.7L601.4 461.2M606 454.4L606.3 450.9M606.3 450.9L609.1 452.3M617.5 451.6L619.3 454.2M793.2 512.9L789.6 512.3M780.2 517.6L777.4 517.6M777.4 517.6L777.5 521.1M778.2 521.7L778.7 518.7M771.2 528L771.7 531M771.7 531L769.4 529M760.8 531.8L757.6 530.6M757.6 530.6L756.5 533.5M749.1 540.4L748.8 543.8M748.8 543.8L746.3 542.2M744.8 522L746.2 519.6M737.2 545.3L733.9 544.2M733.9 544.2L731.1 546.6M731.4 548L734.5 546.9M734.5 546.9L735 544.2M734.5 546.9L736.2 548.4M720.6 547.8L718.8 550.1M718.8 550.1L715.9 549M712.5 532.9L714.8 531.8M714.8 531.8L716.8 533.1M706.8 549.2L704.8 546.4M704.8 546.4L702.4 548.5M693.7 548.4L692.2 550.9M692.2 550.9L688.6 550.4M678.9 554L675.6 553M675.6 553L675.1 555.7M668.5 559.7L667.9 562.6M690.6 534.3L687.1 533.2M677.7 538.5L674.3 538.7M674.3 538.7L674.5 541.9M690.8 535.5L693.5 535.6M693.5 535.6L695 533.3M693.5 535.6L694.5 537.6M668.6 551.6L668.1 554.9M668.1 554.9L664.6 555.7M657.4 562.3L654.4 561.8M654.4 561.8L656.4 564.7M652.1 568.8L651.2 572.3M651.2 572.3L648.3 571.8M639 575.7L635.9 575.5M635.9 575.5L635.1 578.4M629.3 584.9L630 587.9M630 587.9L627.1 586.6M625.9 576.3L628.2 573.9M628.2 573.9L627.5 571.4M628.2 573.9L630.8 574.5M618.8 586.6L618.5 583.3M618.5 583.3L615.7 582.4M614.8 574.8L612.3 573M612.3 573L613.2 570.3M624.8 583.4L627.1 584.7M611.8 561.5L615.1 560M615.1 560L613.4 556.9M916.1 323.9L913.4 325.3M913.4 333.4L911.2 335.3M911.2 335.3L913.3 337.6M913.4 347.2L914.8 349.7M914.8 349.7L912.5 352.4M913.2 362.3L911.6 365.1M911.6 365.1L913.5 367.8M908.6 372.2L907.6 375M907.6 375L904.3 375.4M896.1 383.2L892.6 383.5M892.6 383.5L892.3 386.5M887.5 396L887.7 399.1M760.1 304.2L762.7 301.6M763.1 307.7L764.1 311M764.1 311L762.8 313.3M758.2 297L756.8 293.9M756.8 293.9L755.9 296.6M750.1 295.1L747.5 296.8M747.5 296.8L747.5 293.2M742.7 283.8L743.4 280.7M743.4 280.7L741.4 277.8M741.5 271.8L737.9 271.2M737.9 271.2L739.3 267.9M735.1 260.3L735.1 257.2M735.1 257.2L731.7 258M724.8 252.4L721.9 252.1M721.9 252.1L724.2 250.1M731.2 245.9L732.5 249M732.5 249L735 247.7M718.2 246.7L715.4 246.1M742.8 248.7L744.6 246.3M744.6 246.3L747.5 247.9M755 245.9L757.8 248M616 581L617.2 584.1M610 569L607 568.3M613 552L615.9 550.9M618 557L619.2 559.8M854 205L851.7 207.8M849.6 214.5L846.3 213.4M846.3 213.4L845.4 216.8M838.5 222.4L839.1 225.4M839.1 225.4L836.3 227M830.9 228.3L828.4 227.9M828.4 227.9L826.5 225.1M833.8 236.8L830.9 238.4M870 217L873.1 217.1M880.9 209.4L883.9 208.1M883.9 208.1L881 207.7M875.4 200.4L872.3 200.2M872.3 200.2L872.2 196.6M865.1 194L863.1 191.3M844 221L843.1 224M842.4 232.1L839.5 231.8M839.5 231.8L838.4 234.5M831.9 241.6L833 244.4M833 244.4L829.3 244.4M817.8 242.2L816 239M932 279L930.9 282.3M934 290.7L933 293.9M933 293.9L934.6 296.3M942.8 293.7L943.6 290.8M934.2 303.8L937.2 303.5M937.2 303.5L940 304.6M950.5 301.4L953.3 302.4M944 309L945.6 311.4M950.5 308.2L953.8 308.3M953.8 308.3L952.4 305.3M953.3 299.1L950.1 298.2M950.1 298.2L953.4 296.5M961.6 300.6L961.7 304M957.2 286.7L959.5 284.2M936 349L937 345.8M947.3 342.9L949.8 344.3M924 399L926.9 399.1M930.9 401.7L932.1 404.3M932.1 404.3L931.1 407.5M927.4 396.8L930.8 397.8M930.8 397.8L932.3 394.9M926.4 396.1L923 396.3M923 396.3L920.7 398.6M941.1 387.8L941.3 384.8M941.3 384.8L944.1 384.2M889 469L892.6 469.7M890.2 474.8L889.6 477.4M888.8 470.5L886.8 468.8M904.2 466.8L907.2 467.7M874 464L871.7 466.6M867 474.2L863.8 473.2M863.8 473.2L864.9 476.6M873.8 468.2L875.1 465.5M875.1 465.5L873.6 463.3M875.1 465.5L877.8 465.3M877.8 465.3L880.6 465.1M497.2 476.2L498 473M613.6 599.4L613.3 594.5M623 582L625.6 579.5M625.6 579.5L623.8 577.8M625.6 579.5L625.3 575.6M956.5 282.2L957 285M835.2 200.7L838.5 198.5M879 233L875.1 233.6M787.9 226.3L790.8 226.7M810.3 235L813.5 233.4M813.5 233.4L811 233.4M813.5 233.4L816.3 234.3M752.6 580.6L750.2 578M526.9 410.5L528.5 407.5M637 310.7L640.2 309M640.2 309L643.5 307.3M643.5 307.3L646 308.6M711.2 254.2L712 251M716.1 246.9L719.4 246M719.4 246L719.5 243M740.3 241.7L742.2 244M742.2 244L745 243M942.9 385.7L941.5 389M941.5 389L940.1 392.3M940.1 392.3L936.3 393.3"/><path stroke="#b8b050" d="M672.3 355.2L675.2 355.8M593.7 372.3L593.6 369.7M627 403.5L625.6 406.2M722.3 520.2L719.8 521.3M719.8 521.3L719.3 523.7M717.6 520.4L719.8 521.3M612.5 472.5L612.1 469.3M664.1 422.6L662.2 420.7M656.1 360.8L656.1 363.6"/></g><g fill="none" stroke-linecap="round"><path stroke="#a30808" stroke-width="4.100" d="M842.9 484.1h0M872.6 443.6h0M888.2 462.4h0M902.2 473.3h0M885.8 444.9h0M875.3 444.8h0M683.3 340.4h0M724.3 326.6h0M624.8 537.7h0M628.5 554h0M621.5 576.5h0M518.8 471.2h0M684 354.7h0M672.7 361.1h0M650.4 325.2h0M901.3 271.1h0M894 258.7h0M894 254.1h0M915.1 281.1h0M911.1 283.9h0M938.4 299.4h0M942.9 290.2h0M936.8 325.3h0M921.8 334.5h0M797.6 528.5h0M784.3 528h0M749.8 566.1h0M751.2 547.8h0M758.8 539h0M737.7 543.5h0M726.5 524.7h0M739.3 523.4h0M592.7 405.2h0M587.5 381.8h0M620.8 383.5h0M595.5 358.5h0M799.2 234.2h0M782.3 254.1h0M763.2 266h0M934.2 368.6h0M945.9 368.5h0M936.5 350.8h0M939.6 352.1h0M931.6 357.2h0M810.1 516.8h0M804.6 518h0M825.8 498.7h0M825.7 484.9h0M844.9 493.7h0M829.8 499h0M691.7 402.5h0M680.9 411.5h0M674.5 465.5h0M691.2 476.4h0M676.7 488.2h0M803.1 341.3h0M793.5 282.9h0M780.6 295.1h0M780.7 301.9h0M768.4 324.7h0M756 345.2h0M830.1 339.4h0M841.7 347.8h0M833.7 379.4h0M844.4 408.5h0M615.5 392.5h0M638.8 404.2h0M652.5 423h0M639.5 446.9h0M740.4 422.2h0M739.5 431.3h0M749 406.2h0M741.1 414.1h0M768.7 392.9h0M805.3 352.9h0M787 331.1h0M806.6 314.6h0M638.1 487.4h0M744.9 445h0M748.6 460.7h0M744.4 480.1h0M740.4 460.1h0M716 452h0M717.5 433.8h0M867.2 372.2h0M869.1 373.7h0M879.6 384.7h0M886.8 400.1h0M793.3 405.7h0M802 418.8h0M827.8 404.8h0M836 393.1h0M846.7 389.8h0M723.8 478.6h0M738 484.7h0M769.7 506.5h0M783.1 508.1h0M785.3 479.9h0M811.7 454.7h0M871.7 338.7h0M886.9 338.3h0M883.6 334.5h0M886.5 350.8h0M901 390.3h0M909.3 403.2h0M915.6 407.8h0M910.6 433.9h0M900.4 433.9h0M905.5 434.7h0M913.7 436.9h0M693.5 517h0M660.3 520.2h0M654.8 555.4h0M639.5 561h0M624.1 553.3h0M771.4 419.5h0M757.5 463.8h0M763.5 478h0M730.1 480.8h0M724.1 509.9h0M857.2 311.3h0M853.5 313.8h0M669.2 456.8h0M654.9 467.1h0M635.4 481.1h0M619.6 479.6h0M820.4 436.5h0M843.2 421.6h0M858.3 428.6h0M893.5 429.9h0M898.6 432.1h0M883.8 415.1h0M729.2 395.6h0M728.1 411.1h0M731.8 416.3h0M732.3 411.7h0M735.5 419.2h0M708.8 429.5h0M702.6 453.3h0M702.5 486h0M635.9 449.7h0M635.6 428.9h0M653.7 374.4h0M661.9 392h0M676.3 398.7h0M680.1 401.3h0M644.4 407.8h0M645.7 416.9h0M616.3 423.2h0M590.4 447.6h0M651.4 466.9h0M665.7 471.5h0M637.6 473.4h0M627 512h0M602.2 503.3h0M600.4 489.1h0M582.7 491.6h0M770.1 357.8h0M756.9 354.3h0M741.5 348.7h0M730.4 360.2h0M716 356.8h0M714.1 372.6h0M734.1 386.7h0M882.8 302.9h0M867.8 297.6h0M874.3 286.4h0M855.4 290.4h0M829.4 275.9h0M821.4 250.8h0M822.4 246h0M824.6 253.7h0M783 273.9h0M762.6 270.3h0M844.8 405.6h0M813.2 419.7h0M836.3 417h0M826 429.5h0M803.6 440.9h0M790.3 348.7h0M791.9 353.9h0M772.8 361.2h0M841.9 284h0M851.1 297.6h0M867.2 297.4h0M872.1 310h0M878.9 324.1h0M900.8 303h0M917.9 290.8h0M918.7 269.4h0M927.9 287.2h0M833.3 358.7h0M821 384.8h0M823 392.8h0M823 411h0M835.7 411.3h0M833.1 407.7h0M831.1 433.1h0M816.3 469.9h0M829.8 309.6h0M841.2 315.4h0M839.1 274.9h0M854.4 255.9h0M840.1 255.9h0M844.7 206.3h0M681.8 433h0M821.7 361.6h0M885.3 382.5h0M884.6 377.8h0M886.5 413.5h0M861.6 416.2h0M863.9 447.9h0M849.2 449.4h0M665.9 369.9h0M893.3 330.6h0M858.9 307.7h0M862.7 300.5h0M872 314.2h0M880.1 298.8h0M890.5 297.5h0M900.6 311.9h0M633.8 367h0M610 356.3h0M577.1 466.8h0M563.5 434.9h0M577.4 411.6h0M582.3 397.2h0M590.8 419.3h0M590.4 418.9h0M610.5 410.9h0M611.4 404.8h0M624.8 382.8h0M642.8 343.8h0M652.5 339.1h0M627.6 332h0M650.2 305.2h0M833.4 274.9h0M864.7 274.8h0M877.1 237h0M867.6 225.1h0M570.9 481.5h0M572.4 497.6h0M589.2 505h0M602.2 535.2h0M749.6 528.9h0M771.6 518.9h0M762.2 525h0M817.4 459.4h0M623.7 500.8h0M621.9 471.4h0M602.2 474.6h0M604.8 462.7h0M772.1 520.3h0M735.6 541.5h0M687.7 555.8h0M695.6 539.6h0M656.8 561h0M629.8 577.1h0M615.7 591.3h0M619.2 594.5h0M606.3 568.8h0M912 365.1h0M885.6 387.1h0M762.7 305.3h0M745.6 277.2h0M735.8 268.9h0M733.5 256.9h0M724.6 241.6h0M625.3 584.5h0M840.8 231.1h0M872.2 200.2h0M848.8 228.2h0M822.4 250.5h0M946.3 327.2h0M940.5 321.3h0M950.1 292.5h0M939.9 396.2h0M896.9 463.4h0M509.1 466.5h0M537.6 455.1h0M623.3 588.5h0M924.4 272.1h0M848.5 198.6h0M802.9 237.4h0M822.9 230.7h0M833.6 234.7h0M834.3 219.4h0M541.4 392.6h0M670.9 327h0M721.9 243.4h0"/><path stroke="#c01818" stroke-width="3.200" d="M842.9 484.1h0M872.6 443.6h0M888.2 462.4h0M902.2 473.3h0M885.8 444.9h0M875.3 444.8h0M683.3 340.4h0M724.3 326.6h0M624.8 537.7h0M628.5 554h0M621.5 576.5h0M518.8 471.2h0M684 354.7h0M672.7 361.1h0M650.4 325.2h0M901.3 271.1h0M894 258.7h0M894 254.1h0M915.1 281.1h0M911.1 283.9h0M938.4 299.4h0M942.9 290.2h0M936.8 325.3h0M921.8 334.5h0M797.6 528.5h0M784.3 528h0M749.8 566.1h0M751.2 547.8h0M758.8 539h0M737.7 543.5h0M726.5 524.7h0M739.3 523.4h0M592.7 405.2h0M587.5 381.8h0M620.8 383.5h0M595.5 358.5h0M799.2 234.2h0M782.3 254.1h0M763.2 266h0M934.2 368.6h0M945.9 368.5h0M936.5 350.8h0M939.6 352.1h0M931.6 357.2h0M810.1 516.8h0M804.6 518h0M825.8 498.7h0M825.7 484.9h0M844.9 493.7h0M829.8 499h0M691.7 402.5h0M680.9 411.5h0M674.5 465.5h0M691.2 476.4h0M676.7 488.2h0M803.1 341.3h0M793.5 282.9h0M780.6 295.1h0M780.7 301.9h0M768.4 324.7h0M756 345.2h0M830.1 339.4h0M841.7 347.8h0M833.7 379.4h0M844.4 408.5h0M615.5 392.5h0M638.8 404.2h0M652.5 423h0M639.5 446.9h0M740.4 422.2h0M739.5 431.3h0M749 406.2h0M741.1 414.1h0M768.7 392.9h0M805.3 352.9h0M787 331.1h0M806.6 314.6h0M638.1 487.4h0M744.9 445h0M748.6 460.7h0M744.4 480.1h0M740.4 460.1h0M716 452h0M717.5 433.8h0M867.2 372.2h0M869.1 373.7h0M879.6 384.7h0M886.8 400.1h0M793.3 405.7h0M802 418.8h0M827.8 404.8h0M836 393.1h0M846.7 389.8h0M723.8 478.6h0M738 484.7h0M769.7 506.5h0M783.1 508.1h0M785.3 479.9h0M811.7 454.7h0M871.7 338.7h0M886.9 338.3h0M883.6 334.5h0M886.5 350.8h0M901 390.3h0M909.3 403.2h0M915.6 407.8h0M910.6 433.9h0M900.4 433.9h0M905.5 434.7h0M913.7 436.9h0M693.5 517h0M660.3 520.2h0M654.8 555.4h0M639.5 561h0M624.1 553.3h0M771.4 419.5h0M757.5 463.8h0M763.5 478h0M730.1 480.8h0M724.1 509.9h0M857.2 311.3h0M853.5 313.8h0M669.2 456.8h0M654.9 467.1h0M635.4 481.1h0M619.6 479.6h0M820.4 436.5h0M843.2 421.6h0M858.3 428.6h0M893.5 429.9h0M898.6 432.1h0M883.8 415.1h0M729.2 395.6h0M728.1 411.1h0M731.8 416.3h0M732.3 411.7h0M735.5 419.2h0M708.8 429.5h0M702.6 453.3h0M702.5 486h0M635.9 449.7h0M635.6 428.9h0M653.7 374.4h0M661.9 392h0M676.3 398.7h0M680.1 401.3h0M644.4 407.8h0M645.7 416.9h0M616.3 423.2h0M590.4 447.6h0M651.4 466.9h0M665.7 471.5h0M637.6 473.4h0M627 512h0M602.2 503.3h0M600.4 489.1h0M582.7 491.6h0M770.1 357.8h0M756.9 354.3h0M741.5 348.7h0M730.4 360.2h0M716 356.8h0M714.1 372.6h0M734.1 386.7h0M882.8 302.9h0M867.8 297.6h0M874.3 286.4h0M855.4 290.4h0M829.4 275.9h0M821.4 250.8h0M822.4 246h0M824.6 253.7h0M783 273.9h0M762.6 270.3h0M844.8 405.6h0M813.2 419.7h0M836.3 417h0M826 429.5h0M803.6 440.9h0M790.3 348.7h0M791.9 353.9h0M772.8 361.2h0M841.9 284h0M851.1 297.6h0M867.2 297.4h0M872.1 310h0M878.9 324.1h0M900.8 303h0M917.9 290.8h0M918.7 269.4h0M927.9 287.2h0M833.3 358.7h0M821 384.8h0M823 392.8h0M823 411h0M835.7 411.3h0M833.1 407.7h0M831.1 433.1h0M816.3 469.9h0M829.8 309.6h0M841.2 315.4h0M839.1 274.9h0M854.4 255.9h0M840.1 255.9h0M844.7 206.3h0M681.8 433h0M821.7 361.6h0M885.3 382.5h0M884.6 377.8h0M886.5 413.5h0M861.6 416.2h0M863.9 447.9h0M849.2 449.4h0M665.9 369.9h0M893.3 330.6h0M858.9 307.7h0M862.7 300.5h0M872 314.2h0M880.1 298.8h0M890.5 297.5h0M900.6 311.9h0M633.8 367h0M610 356.3h0M577.1 466.8h0M563.5 434.9h0M577.4 411.6h0M582.3 397.2h0M590.8 419.3h0M590.4 418.9h0M610.5 410.9h0M611.4 404.8h0M624.8 382.8h0M642.8 343.8h0M652.5 339.1h0M627.6 332h0M650.2 305.2h0M833.4 274.9h0M864.7 274.8h0M877.1 237h0M867.6 225.1h0M570.9 481.5h0M572.4 497.6h0M589.2 505h0M602.2 535.2h0M749.6 528.9h0M771.6 518.9h0M762.2 525h0M817.4 459.4h0M623.7 500.8h0M621.9 471.4h0M602.2 474.6h0M604.8 462.7h0M772.1 520.3h0M735.6 541.5h0M687.7 555.8h0M695.6 539.6h0M656.8 561h0M629.8 577.1h0M615.7 591.3h0M619.2 594.5h0M606.3 568.8h0M912 365.1h0M885.6 387.1h0M762.7 305.3h0M745.6 277.2h0M735.8 268.9h0M733.5 256.9h0M724.6 241.6h0M625.3 584.5h0M840.8 231.1h0M872.2 200.2h0M848.8 228.2h0M822.4 250.5h0M946.3 327.2h0M940.5 321.3h0M950.1 292.5h0M939.9 396.2h0M896.9 463.4h0M509.1 466.5h0M537.6 455.1h0M623.3 588.5h0M924.4 272.1h0M848.5 198.6h0M802.9 237.4h0M822.9 230.7h0M833.6 234.7h0M834.3 219.4h0M541.4 392.6h0M670.9 327h0M721.9 243.4h0"/><path stroke="#f02020" stroke-width="1.800" d="M842.9 484.1h0M872.6 443.6h0M888.2 462.4h0M902.2 473.3h0M885.8 444.9h0M875.3 444.8h0M683.3 340.4h0M724.3 326.6h0M624.8 537.7h0M628.5 554h0M621.5 576.5h0M518.8 471.2h0M684 354.7h0M672.7 361.1h0M650.4 325.2h0M901.3 271.1h0M894 258.7h0M894 254.1h0M915.1 281.1h0M911.1 283.9h0M938.4 299.4h0M942.9 290.2h0M936.8 325.3h0M921.8 334.5h0M797.6 528.5h0M784.3 528h0M749.8 566.1h0M751.2 547.8h0M758.8 539h0M737.7 543.5h0M726.5 524.7h0M739.3 523.4h0M592.7 405.2h0M587.5 381.8h0M620.8 383.5h0M595.5 358.5h0M799.2 234.2h0M782.3 254.1h0M763.2 266h0M934.2 368.6h0M945.9 368.5h0M936.5 350.8h0M939.6 352.1h0M931.6 357.2h0M810.1 516.8h0M804.6 518h0M825.8 498.7h0M825.7 484.9h0M844.9 493.7h0M829.8 499h0M691.7 402.5h0M680.9 411.5h0M674.5 465.5h0M691.2 476.4h0M676.7 488.2h0M803.1 341.3h0M793.5 282.9h0M780.6 295.1h0M780.7 301.9h0M768.4 324.7h0M756 345.2h0M830.1 339.4h0M841.7 347.8h0M833.7 379.4h0M844.4 408.5h0M615.5 392.5h0M638.8 404.2h0M652.5 423h0M639.5 446.9h0M740.4 422.2h0M739.5 431.3h0M749 406.2h0M741.1 414.1h0M768.7 392.9h0M805.3 352.9h0M787 331.1h0M806.6 314.6h0M638.1 487.4h0M744.9 445h0M748.6 460.7h0M744.4 480.1h0M740.4 460.1h0M716 452h0M717.5 433.8h0M867.2 372.2h0M869.1 373.7h0M879.6 384.7h0M886.8 400.1h0M793.3 405.7h0M802 418.8h0M827.8 404.8h0M836 393.1h0M846.7 389.8h0M723.8 478.6h0M738 484.7h0M769.7 506.5h0M783.1 508.1h0M785.3 479.9h0M811.7 454.7h0M871.7 338.7h0M886.9 338.3h0M883.6 334.5h0M886.5 350.8h0M901 390.3h0M909.3 403.2h0M915.6 407.8h0M910.6 433.9h0M900.4 433.9h0M905.5 434.7h0M913.7 436.9h0M693.5 517h0M660.3 520.2h0M654.8 555.4h0M639.5 561h0M624.1 553.3h0M771.4 419.5h0M757.5 463.8h0M763.5 478h0M730.1 480.8h0M724.1 509.9h0M857.2 311.3h0M853.5 313.8h0M669.2 456.8h0M654.9 467.1h0M635.4 481.1h0M619.6 479.6h0M820.4 436.5h0M843.2 421.6h0M858.3 428.6h0M893.5 429.9h0M898.6 432.1h0M883.8 415.1h0M729.2 395.6h0M728.1 411.1h0M731.8 416.3h0M732.3 411.7h0M735.5 419.2h0M708.8 429.5h0M702.6 453.3h0M702.5 486h0M635.9 449.7h0M635.6 428.9h0M653.7 374.4h0M661.9 392h0M676.3 398.7h0M680.1 401.3h0M644.4 407.8h0M645.7 416.9h0M616.3 423.2h0M590.4 447.6h0M651.4 466.9h0M665.7 471.5h0M637.6 473.4h0M627 512h0M602.2 503.3h0M600.4 489.1h0M582.7 491.6h0M770.1 357.8h0M756.9 354.3h0M741.5 348.7h0M730.4 360.2h0M716 356.8h0M714.1 372.6h0M734.1 386.7h0M882.8 302.9h0M867.8 297.6h0M874.3 286.4h0M855.4 290.4h0M829.4 275.9h0M821.4 250.8h0M822.4 246h0M824.6 253.7h0M783 273.9h0M762.6 270.3h0M844.8 405.6h0M813.2 419.7h0M836.3 417h0M826 429.5h0M803.6 440.9h0M790.3 348.7h0M791.9 353.9h0M772.8 361.2h0M841.9 284h0M851.1 297.6h0M867.2 297.4h0M872.1 310h0M878.9 324.1h0M900.8 303h0M917.9 290.8h0M918.7 269.4h0M927.9 287.2h0M833.3 358.7h0M821 384.8h0M823 392.8h0M823 411h0M835.7 411.3h0M833.1 407.7h0M831.1 433.1h0M816.3 469.9h0M829.8 309.6h0M841.2 315.4h0M839.1 274.9h0M854.4 255.9h0M840.1 255.9h0M844.7 206.3h0M681.8 433h0M821.7 361.6h0M885.3 382.5h0M884.6 377.8h0M886.5 413.5h0M861.6 416.2h0M863.9 447.9h0M849.2 449.4h0M665.9 369.9h0M893.3 330.6h0M858.9 307.7h0M862.7 300.5h0M872 314.2h0M880.1 298.8h0M890.5 297.5h0M900.6 311.9h0M633.8 367h0M610 356.3h0M577.1 466.8h0M563.5 434.9h0M577.4 411.6h0M582.3 397.2h0M590.8 419.3h0M590.4 418.9h0M610.5 410.9h0M611.4 404.8h0M624.8 382.8h0M642.8 343.8h0M652.5 339.1h0M627.6 332h0M650.2 305.2h0M833.4 274.9h0M864.7 274.8h0M877.1 237h0M867.6 225.1h0M570.9 481.5h0M572.4 497.6h0M589.2 505h0M602.2 535.2h0M749.6 528.9h0M771.6 518.9h0M762.2 525h0M817.4 459.4h0M623.7 500.8h0M621.9 471.4h0M602.2 474.6h0M604.8 462.7h0M772.1 520.3h0M735.6 541.5h0M687.7 555.8h0M695.6 539.6h0M656.8 561h0M629.8 577.1h0M615.7 591.3h0M619.2 594.5h0M606.3 568.8h0M912 365.1h0M885.6 387.1h0M762.7 305.3h0M745.6 277.2h0M735.8 268.9h0M733.5 256.9h0M724.6 241.6h0M625.3 584.5h0M840.8 231.1h0M872.2 200.2h0M848.8 228.2h0M822.4 250.5h0M946.3 327.2h0M940.5 321.3h0M950.1 292.5h0M939.9 396.2h0M896.9 463.4h0M509.1 466.5h0M537.6 455.1h0M623.3 588.5h0M924.4 272.1h0M848.5 198.6h0M802.9 237.4h0M822.9 230.7h0M833.6 234.7h0M834.3 219.4h0M541.4 392.6h0M670.9 327h0M721.9 243.4h0" transform="translate(-0.3,-0.3)"/><path stroke="#0a0aa8" stroke-width="4.100" d="M850.9 474.5h0M845.6 478.9h0M868.8 461.9h0M852.4 462.6h0M880.9 463.5h0M693 346.3h0M716.3 338.3h0M722.8 328.6h0M737.3 308.4h0M609.9 518.8h0M622.2 521.7h0M626.3 536.5h0M520.8 470h0M542.4 458.2h0M543.6 447.2h0M700.8 349.7h0M674.5 361.7h0M667.6 350h0M607.1 361.1h0M586.6 379.6h0M552.4 415.6h0M558.2 402.8h0M573.2 402.5h0M551.4 392h0M887.8 255.5h0M875.2 271.2h0M866.9 268.6h0M923.6 289.8h0M910.9 275.3h0M938.1 298.4h0M929.2 304h0M935.4 319.2h0M925.9 330.9h0M939.9 316h0M787.3 527h0M782.2 540.7h0M772.1 542.3h0M739.8 544.7h0M724.9 536.4h0M694.7 545.1h0M601 401h0M609.6 357.6h0M795.9 245.2h0M787.3 228.8h0M770.4 253.5h0M945.6 361.6h0M950.1 371.5h0M929.5 348.2h0M795.1 501.2h0M825.5 486.7h0M834.6 483h0M844.4 492.5h0M834.5 497.4h0M700.8 399.9h0M682.4 422.8h0M671.4 434.5h0M683.4 454.7h0M688.3 450.1h0M673.5 480.1h0M671 484.3h0M682.7 475.3h0M653.4 498.8h0M805.5 345h0M784 345.2h0M811.1 384.6h0M805.7 394.5h0M800.5 391h0M811.8 309.6h0M794.6 282.5h0M764.5 272.6h0M760.5 270.4h0M780.4 306.3h0M835 361.3h0M834.6 376.3h0M852.9 360.8h0M841.1 389.2h0M846.7 417.1h0M622.4 442.4h0M609.8 406.7h0M648.6 411.6h0M641.9 427.6h0M630.7 456.1h0M627.8 467.1h0M735.5 405.8h0M747 411.2h0M752.6 404h0M742.8 410.2h0M769.1 393.8h0M785.8 375.7h0M793.2 384h0M810.7 390.8h0M813.8 383.7h0M836 333.6h0M804.1 317.3h0M793.3 314.5h0M788.8 338.8h0M814.3 294h0M666.7 442.6h0M791.5 436.6h0M741.7 470.4h0M736 459.3h0M704.5 457.1h0M710.5 469.7h0M721 429.2h0M724.1 433.7h0M718.9 411.6h0M709.5 405.1h0M714.7 396.9h0M871.2 366.4h0M874.5 380.5h0M863.6 380.5h0M877.3 394.9h0M891.7 402.4h0M836.5 396.5h0M845.3 374.4h0M726.9 487.7h0M734.4 484.4h0M727 476.1h0M748 517.4h0M764.8 508.4h0M781.4 485.2h0M803.6 477.3h0M891.2 337.4h0M909.7 347.1h0M903.6 385.9h0M884.9 404.8h0M903.3 414.3h0M903.8 444.4h0M878.9 478.7h0M695.1 500.7h0M654.7 531.1h0M639.7 572.2h0M626 580.5h0M748.6 429.9h0M769.1 465.6h0M729.6 465.2h0M862.3 318.6h0M875.2 323.7h0M646.4 467.5h0M618.3 465.3h0M620.4 457.8h0M815.3 431.4h0M896.7 414.4h0M901.5 395.8h0M731.7 393.2h0M733.3 397.8h0M708.5 428.6h0M708.3 427.3h0M709.5 431.7h0M693.1 518.2h0M655.7 437.2h0M645.3 431.7h0M630.5 426.4h0M644.4 384.7h0M663.1 384.5h0M667.1 387.1h0M669 406.8h0M686.1 402.3h0M628.7 424.8h0M633.3 427.8h0M588.5 459.3h0M652.2 462.8h0M651.1 454.6h0M641.6 471.9h0M638.1 485.6h0M630.4 507.7h0M611.4 501.4h0M601.2 491.3h0M612 459.9h0M622.1 456.9h0M785.1 359.3h0M761.7 345.4h0M775.9 336.9h0M719.8 356.8h0M713.4 367.7h0M716 382.1h0M693.3 394.7h0M745.7 389h0M755 399.1h0M744 393.3h0M768.7 393.1h0M761.2 399.6h0M891.5 299.9h0M862.3 290.2h0M832.8 278.2h0M782.1 245.4h0M801.7 279.1h0M798 286.7h0M757 277.5h0M750.3 285.5h0M857.4 396.2h0M817.8 411.5h0M796.8 450.6h0M794.3 466h0M829.3 335.8h0M774.6 363.3h0M745.2 376.9h0M745.3 369.3h0M721.7 377.4h0M852.7 281.2h0M847.9 311.8h0M871.4 308.4h0M862.6 276.4h0M871.9 276.1h0M878.6 315.3h0M918.8 293.3h0M947.2 285.3h0M836.9 356.8h0M822.7 404.6h0M840.4 410.9h0M868.5 341.1h0M831.9 315.7h0M836.8 301.2h0M840.1 320.5h0M832.7 277.1h0M854.6 264.2h0M859 221.5h0M837.6 211.8h0M673.9 424.3h0M710 442.9h0M731.6 435.1h0M730.1 459.3h0M820.1 360.8h0M830 375.5h0M882.2 382.8h0M882.1 374.3h0M888.8 377.5h0M867.9 400.6h0M865.3 418.7h0M866.4 432.6h0M874.3 461.1h0M874 469.9h0M848.3 459.9h0M676.4 375.9h0M715.2 400.3h0M861.6 326.8h0M642.6 372.3h0M610.2 351.7h0M644.9 360.1h0M653.9 359.5h0M581.6 467.5h0M588.7 480.2h0M578.9 456.2h0M567.5 442.9h0M556.4 419.7h0M561.4 419.2h0M576.2 413.8h0M587 418.6h0M601.3 411.6h0M618.4 380.9h0M635.9 390.1h0M642.1 340.5h0M637 328.8h0M626.4 323.8h0M635.3 318.7h0M667.9 317.2h0M872.4 242.1h0M867.6 228.6h0M852.1 194.7h0M583.3 500.6h0M585.8 517.7h0M600.1 515.6h0M602.3 532.3h0M720.2 513.3h0M772.5 525.8h0M779.8 531.4h0M765 536.2h0M821.2 452.7h0M641.5 516.4h0M612.6 497.5h0M602.9 463.7h0M793.2 512.9h0M757.6 530.6h0M748.8 543.8h0M718.8 550.1h0M674.3 538.7h0M651.2 572.3h0M628.2 573.9h0M914.8 349.7h0M907.6 375h0M735.1 257.2h0M721.9 252.1h0M715.4 246.1h0M615.9 550.9h0M854 205h0M846.3 213.4h0M872.3 200.2h0M863.1 191.3h0M816 239h0M937.2 303.5h0M953.3 302.4h0M950.1 298.2h0M959.5 284.2h0M936 349h0M923 396.3h0M874 464h0M875.1 465.5h0M625.6 579.5h0M835.2 200.7h0M875.1 233.6h0M813.5 233.4h0M643.5 307.3h0"/><path stroke="#1c1cc8" stroke-width="3.200" d="M850.9 474.5h0M845.6 478.9h0M868.8 461.9h0M852.4 462.6h0M880.9 463.5h0M693 346.3h0M716.3 338.3h0M722.8 328.6h0M737.3 308.4h0M609.9 518.8h0M622.2 521.7h0M626.3 536.5h0M520.8 470h0M542.4 458.2h0M543.6 447.2h0M700.8 349.7h0M674.5 361.7h0M667.6 350h0M607.1 361.1h0M586.6 379.6h0M552.4 415.6h0M558.2 402.8h0M573.2 402.5h0M551.4 392h0M887.8 255.5h0M875.2 271.2h0M866.9 268.6h0M923.6 289.8h0M910.9 275.3h0M938.1 298.4h0M929.2 304h0M935.4 319.2h0M925.9 330.9h0M939.9 316h0M787.3 527h0M782.2 540.7h0M772.1 542.3h0M739.8 544.7h0M724.9 536.4h0M694.7 545.1h0M601 401h0M609.6 357.6h0M795.9 245.2h0M787.3 228.8h0M770.4 253.5h0M945.6 361.6h0M950.1 371.5h0M929.5 348.2h0M795.1 501.2h0M825.5 486.7h0M834.6 483h0M844.4 492.5h0M834.5 497.4h0M700.8 399.9h0M682.4 422.8h0M671.4 434.5h0M683.4 454.7h0M688.3 450.1h0M673.5 480.1h0M671 484.3h0M682.7 475.3h0M653.4 498.8h0M805.5 345h0M784 345.2h0M811.1 384.6h0M805.7 394.5h0M800.5 391h0M811.8 309.6h0M794.6 282.5h0M764.5 272.6h0M760.5 270.4h0M780.4 306.3h0M835 361.3h0M834.6 376.3h0M852.9 360.8h0M841.1 389.2h0M846.7 417.1h0M622.4 442.4h0M609.8 406.7h0M648.6 411.6h0M641.9 427.6h0M630.7 456.1h0M627.8 467.1h0M735.5 405.8h0M747 411.2h0M752.6 404h0M742.8 410.2h0M769.1 393.8h0M785.8 375.7h0M793.2 384h0M810.7 390.8h0M813.8 383.7h0M836 333.6h0M804.1 317.3h0M793.3 314.5h0M788.8 338.8h0M814.3 294h0M666.7 442.6h0M791.5 436.6h0M741.7 470.4h0M736 459.3h0M704.5 457.1h0M710.5 469.7h0M721 429.2h0M724.1 433.7h0M718.9 411.6h0M709.5 405.1h0M714.7 396.9h0M871.2 366.4h0M874.5 380.5h0M863.6 380.5h0M877.3 394.9h0M891.7 402.4h0M836.5 396.5h0M845.3 374.4h0M726.9 487.7h0M734.4 484.4h0M727 476.1h0M748 517.4h0M764.8 508.4h0M781.4 485.2h0M803.6 477.3h0M891.2 337.4h0M909.7 347.1h0M903.6 385.9h0M884.9 404.8h0M903.3 414.3h0M903.8 444.4h0M878.9 478.7h0M695.1 500.7h0M654.7 531.1h0M639.7 572.2h0M626 580.5h0M748.6 429.9h0M769.1 465.6h0M729.6 465.2h0M862.3 318.6h0M875.2 323.7h0M646.4 467.5h0M618.3 465.3h0M620.4 457.8h0M815.3 431.4h0M896.7 414.4h0M901.5 395.8h0M731.7 393.2h0M733.3 397.8h0M708.5 428.6h0M708.3 427.3h0M709.5 431.7h0M693.1 518.2h0M655.7 437.2h0M645.3 431.7h0M630.5 426.4h0M644.4 384.7h0M663.1 384.5h0M667.1 387.1h0M669 406.8h0M686.1 402.3h0M628.7 424.8h0M633.3 427.8h0M588.5 459.3h0M652.2 462.8h0M651.1 454.6h0M641.6 471.9h0M638.1 485.6h0M630.4 507.7h0M611.4 501.4h0M601.2 491.3h0M612 459.9h0M622.1 456.9h0M785.1 359.3h0M761.7 345.4h0M775.9 336.9h0M719.8 356.8h0M713.4 367.7h0M716 382.1h0M693.3 394.7h0M745.7 389h0M755 399.1h0M744 393.3h0M768.7 393.1h0M761.2 399.6h0M891.5 299.9h0M862.3 290.2h0M832.8 278.2h0M782.1 245.4h0M801.7 279.1h0M798 286.7h0M757 277.5h0M750.3 285.5h0M857.4 396.2h0M817.8 411.5h0M796.8 450.6h0M794.3 466h0M829.3 335.8h0M774.6 363.3h0M745.2 376.9h0M745.3 369.3h0M721.7 377.4h0M852.7 281.2h0M847.9 311.8h0M871.4 308.4h0M862.6 276.4h0M871.9 276.1h0M878.6 315.3h0M918.8 293.3h0M947.2 285.3h0M836.9 356.8h0M822.7 404.6h0M840.4 410.9h0M868.5 341.1h0M831.9 315.7h0M836.8 301.2h0M840.1 320.5h0M832.7 277.1h0M854.6 264.2h0M859 221.5h0M837.6 211.8h0M673.9 424.3h0M710 442.9h0M731.6 435.1h0M730.1 459.3h0M820.1 360.8h0M830 375.5h0M882.2 382.8h0M882.1 374.3h0M888.8 377.5h0M867.9 400.6h0M865.3 418.7h0M866.4 432.6h0M874.3 461.1h0M874 469.9h0M848.3 459.9h0M676.4 375.9h0M715.2 400.3h0M861.6 326.8h0M642.6 372.3h0M610.2 351.7h0M644.9 360.1h0M653.9 359.5h0M581.6 467.5h0M588.7 480.2h0M578.9 456.2h0M567.5 442.9h0M556.4 419.7h0M561.4 419.2h0M576.2 413.8h0M587 418.6h0M601.3 411.6h0M618.4 380.9h0M635.9 390.1h0M642.1 340.5h0M637 328.8h0M626.4 323.8h0M635.3 318.7h0M667.9 317.2h0M872.4 242.1h0M867.6 228.6h0M852.1 194.7h0M583.3 500.6h0M585.8 517.7h0M600.1 515.6h0M602.3 532.3h0M720.2 513.3h0M772.5 525.8h0M779.8 531.4h0M765 536.2h0M821.2 452.7h0M641.5 516.4h0M612.6 497.5h0M602.9 463.7h0M793.2 512.9h0M757.6 530.6h0M748.8 543.8h0M718.8 550.1h0M674.3 538.7h0M651.2 572.3h0M628.2 573.9h0M914.8 349.7h0M907.6 375h0M735.1 257.2h0M721.9 252.1h0M715.4 246.1h0M615.9 550.9h0M854 205h0M846.3 213.4h0M872.3 200.2h0M863.1 191.3h0M816 239h0M937.2 303.5h0M953.3 302.4h0M950.1 298.2h0M959.5 284.2h0M936 349h0M923 396.3h0M874 464h0M875.1 465.5h0M625.6 579.5h0M835.2 200.7h0M875.1 233.6h0M813.5 233.4h0M643.5 307.3h0"/><path stroke="#2525ee" stroke-width="1.800" d="M850.9 474.5h0M845.6 478.9h0M868.8 461.9h0M852.4 462.6h0M880.9 463.5h0M693 346.3h0M716.3 338.3h0M722.8 328.6h0M737.3 308.4h0M609.9 518.8h0M622.2 521.7h0M626.3 536.5h0M520.8 470h0M542.4 458.2h0M543.6 447.2h0M700.8 349.7h0M674.5 361.7h0M667.6 350h0M607.1 361.1h0M586.6 379.6h0M552.4 415.6h0M558.2 402.8h0M573.2 402.5h0M551.4 392h0M887.8 255.5h0M875.2 271.2h0M866.9 268.6h0M923.6 289.8h0M910.9 275.3h0M938.1 298.4h0M929.2 304h0M935.4 319.2h0M925.9 330.9h0M939.9 316h0M787.3 527h0M782.2 540.7h0M772.1 542.3h0M739.8 544.7h0M724.9 536.4h0M694.7 545.1h0M601 401h0M609.6 357.6h0M795.9 245.2h0M787.3 228.8h0M770.4 253.5h0M945.6 361.6h0M950.1 371.5h0M929.5 348.2h0M795.1 501.2h0M825.5 486.7h0M834.6 483h0M844.4 492.5h0M834.5 497.4h0M700.8 399.9h0M682.4 422.8h0M671.4 434.5h0M683.4 454.7h0M688.3 450.1h0M673.5 480.1h0M671 484.3h0M682.7 475.3h0M653.4 498.8h0M805.5 345h0M784 345.2h0M811.1 384.6h0M805.7 394.5h0M800.5 391h0M811.8 309.6h0M794.6 282.5h0M764.5 272.6h0M760.5 270.4h0M780.4 306.3h0M835 361.3h0M834.6 376.3h0M852.9 360.8h0M841.1 389.2h0M846.7 417.1h0M622.4 442.4h0M609.8 406.7h0M648.6 411.6h0M641.9 427.6h0M630.7 456.1h0M627.8 467.1h0M735.5 405.8h0M747 411.2h0M752.6 404h0M742.8 410.2h0M769.1 393.8h0M785.8 375.7h0M793.2 384h0M810.7 390.8h0M813.8 383.7h0M836 333.6h0M804.1 317.3h0M793.3 314.5h0M788.8 338.8h0M814.3 294h0M666.7 442.6h0M791.5 436.6h0M741.7 470.4h0M736 459.3h0M704.5 457.1h0M710.5 469.7h0M721 429.2h0M724.1 433.7h0M718.9 411.6h0M709.5 405.1h0M714.7 396.9h0M871.2 366.4h0M874.5 380.5h0M863.6 380.5h0M877.3 394.9h0M891.7 402.4h0M836.5 396.5h0M845.3 374.4h0M726.9 487.7h0M734.4 484.4h0M727 476.1h0M748 517.4h0M764.8 508.4h0M781.4 485.2h0M803.6 477.3h0M891.2 337.4h0M909.7 347.1h0M903.6 385.9h0M884.9 404.8h0M903.3 414.3h0M903.8 444.4h0M878.9 478.7h0M695.1 500.7h0M654.7 531.1h0M639.7 572.2h0M626 580.5h0M748.6 429.9h0M769.1 465.6h0M729.6 465.2h0M862.3 318.6h0M875.2 323.7h0M646.4 467.5h0M618.3 465.3h0M620.4 457.8h0M815.3 431.4h0M896.7 414.4h0M901.5 395.8h0M731.7 393.2h0M733.3 397.8h0M708.5 428.6h0M708.3 427.3h0M709.5 431.7h0M693.1 518.2h0M655.7 437.2h0M645.3 431.7h0M630.5 426.4h0M644.4 384.7h0M663.1 384.5h0M667.1 387.1h0M669 406.8h0M686.1 402.3h0M628.7 424.8h0M633.3 427.8h0M588.5 459.3h0M652.2 462.8h0M651.1 454.6h0M641.6 471.9h0M638.1 485.6h0M630.4 507.7h0M611.4 501.4h0M601.2 491.3h0M612 459.9h0M622.1 456.9h0M785.1 359.3h0M761.7 345.4h0M775.9 336.9h0M719.8 356.8h0M713.4 367.7h0M716 382.1h0M693.3 394.7h0M745.7 389h0M755 399.1h0M744 393.3h0M768.7 393.1h0M761.2 399.6h0M891.5 299.9h0M862.3 290.2h0M832.8 278.2h0M782.1 245.4h0M801.7 279.1h0M798 286.7h0M757 277.5h0M750.3 285.5h0M857.4 396.2h0M817.8 411.5h0M796.8 450.6h0M794.3 466h0M829.3 335.8h0M774.6 363.3h0M745.2 376.9h0M745.3 369.3h0M721.7 377.4h0M852.7 281.2h0M847.9 311.8h0M871.4 308.4h0M862.6 276.4h0M871.9 276.1h0M878.6 315.3h0M918.8 293.3h0M947.2 285.3h0M836.9 356.8h0M822.7 404.6h0M840.4 410.9h0M868.5 341.1h0M831.9 315.7h0M836.8 301.2h0M840.1 320.5h0M832.7 277.1h0M854.6 264.2h0M859 221.5h0M837.6 211.8h0M673.9 424.3h0M710 442.9h0M731.6 435.1h0M730.1 459.3h0M820.1 360.8h0M830 375.5h0M882.2 382.8h0M882.1 374.3h0M888.8 377.5h0M867.9 400.6h0M865.3 418.7h0M866.4 432.6h0M874.3 461.1h0M874 469.9h0M848.3 459.9h0M676.4 375.9h0M715.2 400.3h0M861.6 326.8h0M642.6 372.3h0M610.2 351.7h0M644.9 360.1h0M653.9 359.5h0M581.6 467.5h0M588.7 480.2h0M578.9 456.2h0M567.5 442.9h0M556.4 419.7h0M561.4 419.2h0M576.2 413.8h0M587 418.6h0M601.3 411.6h0M618.4 380.9h0M635.9 390.1h0M642.1 340.5h0M637 328.8h0M626.4 323.8h0M635.3 318.7h0M667.9 317.2h0M872.4 242.1h0M867.6 228.6h0M852.1 194.7h0M583.3 500.6h0M585.8 517.7h0M600.1 515.6h0M602.3 532.3h0M720.2 513.3h0M772.5 525.8h0M779.8 531.4h0M765 536.2h0M821.2 452.7h0M641.5 516.4h0M612.6 497.5h0M602.9 463.7h0M793.2 512.9h0M757.6 530.6h0M748.8 543.8h0M718.8 550.1h0M674.3 538.7h0M651.2 572.3h0M628.2 573.9h0M914.8 349.7h0M907.6 375h0M735.1 257.2h0M721.9 252.1h0M715.4 246.1h0M615.9 550.9h0M854 205h0M846.3 213.4h0M872.3 200.2h0M863.1 191.3h0M816 239h0M937.2 303.5h0M953.3 302.4h0M950.1 298.2h0M959.5 284.2h0M936 349h0M923 396.3h0M874 464h0M875.1 465.5h0M625.6 579.5h0M835.2 200.7h0M875.1 233.6h0M813.5 233.4h0M643.5 307.3h0" transform="translate(-0.3,-0.3)"/><path stroke="#5c5c5c" stroke-width="4.100" d="M856.1 484.9h0M846.5 480h0M848.4 468.8h0M842.1 468.1h0M851.9 472.1h0M863.8 458.6h0M873.3 465h0M891.9 451.4h0M895.7 460.5h0M884.8 432.9h0M876.7 439.9h0M897.3 428.9h0M686.5 346.7h0M689.2 341.1h0M698.7 345.7h0M692.7 345.4h0M702.4 350.5h0M710 345.2h0M713.7 348.9h0M706.5 329.6h0M729.3 331.1h0M716.2 310.6h0M743.7 309h0M607.2 516.9h0M616.4 518.1h0M611.2 514.6h0M610.6 509.4h0M602.5 501.6h0M617.3 525.3h0M622.7 528.5h0M617.9 515.6h0M628.5 530.9h0M627.3 534.4h0M622 552.3h0M614.8 575h0M620.4 573h0M624 567.1h0M609.2 594.2h0M531.4 479.8h0M514.9 478.8h0M533.4 474.6h0M545 424.9h0M699.8 341.5h0M705.1 339.4h0M710.3 354h0M687.6 367.2h0M663.6 344.8h0M662 335.7h0M644 321.6h0M650.9 311.6h0M654.7 308.1h0M637.6 333.7h0M642.2 330.8h0M623.8 343.2h0M620.2 339h0M619.8 323.4h0M622.2 354.3h0M621.3 348h0M609.5 337h0M592.9 365.8h0M600.7 358.8h0M593.4 376.7h0M593.8 375h0M546.8 424.3h0M546.2 440.7h0M536.6 425h0M557 410h0M556.8 406.6h0M553.9 411.6h0M539.9 420.7h0M567.1 400.2h0M557.4 395.1h0M545.8 394h0M574.3 392.1h0M588.1 383.7h0M886.8 258.3h0M892.2 268h0M897 276.5h0M884.7 274.9h0M879.4 275.3h0M868.2 264.4h0M906.8 277.5h0M913.4 287.8h0M901.3 287.5h0M931.4 299h0M935.7 304h0M932 328.5h0M922.5 340.3h0M921 346.6h0M926.8 349.2h0M934.1 349.1h0M935.9 337.5h0M940.7 329h0M796 521.2h0M800.9 524.5h0M809.1 529.8h0M804.6 532.2h0M800.5 529.3h0M792.1 528.2h0M776.4 538.7h0M782.5 538.2h0M777 545.8h0M782.8 544.9h0M786.4 539.1h0M766.9 545.8h0M766.3 551h0M766.1 545.5h0M756.4 557.3h0M746.6 553h0M722.7 528.7h0M719.6 530.7h0M723.9 526.9h0M712.3 538.5h0M717.2 536.4h0M697.3 539.6h0M577.5 376h0M573.7 371.4h0M596.8 389.8h0M593.2 395.2h0M597.2 372.4h0M604.2 374.4h0M607.2 365.6h0M618 387.8h0M608.1 351.1h0M803.4 245.2h0M799 250.1h0M793.1 250.6h0M805.4 252h0M789.2 245.1h0M776.5 243.3h0M781.5 231.7h0M776.8 254.5h0M769.2 259.2h0M773.3 254.6h0M759 260.3h0M762 250.1h0M940.2 375.1h0M948.7 375.7h0M935.8 355.3h0M952 358.3h0M927.5 348.5h0M810.9 504.7h0M800.1 501.2h0M816.5 506.7h0M807.9 511.9h0M804.9 526.5h0M797.3 522.6h0M817.2 499.5h0M806.8 489.3h0M800.7 490h0M796 485h0M788.6 481h0M792.4 477.7h0M830.4 481.8h0M841.7 486h0M829.4 508.9h0M827.2 518.5h0M685.6 398.1h0M683.8 376h0M682.7 417h0M692.1 408.5h0M705.9 410h0M701 410.5h0M671.8 444.1h0M656.8 452.7h0M651 449h0M678.8 456.8h0M681 464.9h0M684.9 460h0M677.4 469.7h0M679.7 480.2h0M680.7 493.1h0M664.8 497.7h0M661.8 492.2h0M789.9 333.2h0M782 324.6h0M776.5 322.5h0M793.7 357.3h0M806.9 387.2h0M803.4 400.5h0M800.2 384.2h0M816.7 308.3h0M803.9 284.3h0M800.1 279.2h0M791.1 276.3h0M796.7 279.7h0M777.8 300.5h0M763.3 321h0M765 311.1h0M763.7 326.7h0M756.2 333.3h0M750.6 333h0M738.5 341.8h0M733.1 342.6h0M831.5 353.3h0M837.9 370.1h0M840.7 379.5h0M848.4 372.7h0M836.1 384.2h0M839.1 394.8h0M836.1 377.6h0M834.8 365.4h0M849.8 408.5h0M858.7 415.4h0M849.9 420.6h0M848.1 424.4h0M841.8 418.3h0M870.9 405.1h0M865.8 394.8h0M860 384.4h0M616.3 433.6h0M609.3 418.7h0M612.6 413h0M611.5 395.6h0M635.4 399.3h0M650 392.3h0M638.1 410.7h0M634.6 406h0M645.7 428.1h0M632.2 445h0M634.1 461.6h0M637 463.1h0M620.6 474.8h0M727.9 423.3h0M727.3 435.1h0M727.9 446h0M752.7 411.9h0M744.7 419.7h0M736.8 427.3h0M763.6 399.4h0M759.1 404.6h0M769.1 387.1h0M777.2 373.5h0M812.2 354h0M811.6 363.3h0M811 380.4h0M798.4 341.5h0M791.1 337.9h0M793.7 334.4h0M798.7 333.9h0M805.4 324.8h0M810.2 322h0M815.8 325.4h0M832 326.6h0M836.2 329h0M827.4 332.9h0M799.7 312.1h0M792.6 320.1h0M787.7 324.6h0M783.7 338.5h0M805.3 308.7h0M807.7 296h0M663 461.6h0M666.2 456.9h0M668.4 446.7h0M656.1 481.7h0M638.7 511h0M645 520h0M785.9 432.7h0M818.2 435.2h0M822.5 437.7h0M776.4 453.2h0M768.1 436.5h0M758.5 433.9h0M754.8 446.3h0M746.9 451.8h0M750.8 446.9h0M741 448.7h0M740.9 448.3h0M744.8 465.6h0M764.6 459.5h0M752.6 476h0M760.7 481.7h0M722.1 447.4h0M730.4 456.3h0M740.3 457.1h0M736.1 463.9h0M715 446.3h0M710.8 465.2h0M705.4 470.8h0M716.5 420.2h0M719.6 448.4h0M705.1 409.7h0M718.7 401.2h0M723.7 401.4h0M871.5 356.8h0M873.9 371.7h0M892.8 360.8h0M891.1 356h0M895.2 353.2h0M899.5 356h0M873.9 387.8h0M873.1 381.8h0M868.5 378.4h0M879.6 389.8h0M881.9 400.6h0M887.5 400.4h0M877.2 405.7h0M880.1 409.7h0M864 424.4h0M787.6 417.7h0M800.9 412.1h0M806.1 416h0M816.7 406h0M825.8 397.8h0M831.8 401.2h0M842.3 397.3h0M840.7 407.6h0M843.4 413.8h0M840.5 419.3h0M840.9 390.2h0M850.1 370.5h0M854.8 374.7h0M720.4 460.5h0M743.9 457.1h0M738 489.7h0M747.9 494.6h0M742.7 493.3h0M757 505.3h0M764.6 501.1h0M759 510.9h0M771.5 501.1h0M778.5 479.2h0M770 501.2h0M796.8 484.6h0M794.2 455.1h0M788.3 453.9h0M803.8 463h0M810.5 468.8h0M869.6 345.3h0M863.3 343.2h0M899 353.7h0M905.2 357.6h0M895 371.6h0M902.8 405.6h0M896.3 406.2h0M910.9 407.2h0M907.9 438.4h0M907.4 442.3h0M908.6 436.8h0M897.6 457.3h0M902.5 453.3h0M897.7 463.8h0M891.4 473.2h0M895.1 477.9h0M905.3 483.6h0M885.2 476.3h0M714.8 497.9h0M678.6 520.1h0M681.6 524.8h0M651.8 508.8h0M658.8 537.1h0M654.1 545.5h0M649.7 557.2h0M655.9 548.2h0M637.9 565.6h0M634.4 574.8h0M632.6 581.9h0M761.8 412.7h0M750.8 436.4h0M769.8 414.9h0M749.7 442.1h0M754.6 448.7h0M760 450.5h0M768.2 471.9h0M761.9 455h0M779 484.8h0M752 488.3h0M758.3 486.3h0M768.4 465.1h0M773.4 465.3h0M730.9 486.6h0M726.4 496.1h0M729.1 477.9h0M726.6 471.4h0M729.5 506.4h0M718.8 526.1h0M713.7 526.7h0M715.3 519.4h0M862.7 311.4h0M870.4 327.5h0M851.6 316h0M849.2 310.6h0M656.5 461.2h0M666 453.8h0M653.1 467.6h0M619.9 485.8h0M623.2 491.8h0M629.2 491.8h0M811.8 427h0M822.3 429.5h0M834.3 436.1h0M826.8 443.8h0M840.9 435.9h0M848.6 438.8h0M844.6 428.1h0M839.1 414.5h0M855 440.9h0M863.9 429.1h0M863.2 427.9h0M887.2 421.3h0M889.6 415.4h0M728.3 381.6h0M724.6 376h0M717.6 369.7h0M737 389.9h0M734.1 403.2h0M723.9 413.5h0M702.2 425.7h0M699.3 441.1h0M695.8 453.2h0M686.3 450.3h0M676.2 444.2h0M699.2 458h0M701.6 469.9h0M708.1 471.6h0M719.4 468.8h0M723.3 464.8h0M697.9 481.4h0M688.4 468h0M686.7 461.9h0M686.9 453.6h0M704.7 488.5h0M713.6 492.2h0M673.6 486.2h0M695 519.2h0M663.5 431.9h0M667.3 421.4h0M656.8 431.1h0M650.3 436.9h0M635.5 438h0M629.6 419.8h0M638.9 384.2h0M655.9 379.4h0M659.1 376.2h0M658.5 386.1h0M670 407.8h0M661.9 407.9h0M660.2 399.3h0M678 397.1h0M654.2 410.3h0M649 420.4h0M639.6 411.7h0M629.6 423.4h0M612.1 429.9h0M604.1 436h0M602.6 444.7h0M591.1 443.2h0M575.7 425.8h0M654.7 474.1h0M660.4 474.6h0M619 496.4h0M605.5 497.1h0M610.3 485.8h0M612.8 475.8h0M599.3 498.3h0M600.7 494.7h0M604.7 500h0M621.1 505h0M588.1 480.4h0M579 477.2h0M611.9 470.2h0M775.8 355.2h0M770.7 352.8h0M760.6 350.1h0M757.5 359.7h0M772.7 340.1h0M752.1 349.2h0M751.3 356.1h0M717.9 363.4h0M738.3 372.5h0M712.5 361.9h0M706.7 376.1h0M721.4 386h0M710.8 389.2h0M737.1 380.4h0M746.9 394.8h0M759.4 394.8h0M763.9 398.6h0M870.6 293.2h0M848.7 280.9h0M839 276h0M835.7 272.5h0M846.5 285.6h0M819.6 269.5h0M820.8 287.9h0M811.6 257.9h0M792.4 287.1h0M786.4 265.4h0M778.7 261.8h0M769.3 280.1h0M780.3 279.9h0M797.4 282.5h0M744.6 283.1h0M751.4 291.4h0M850 403.7h0M829.3 418.1h0M835 421.8h0M805.4 447.8h0M811.7 456.2h0M814.1 461.2h0M799.7 445.5h0M790.9 450.5h0M794.7 455.3h0M826.2 340.6h0M827 331.4h0M829.7 327.2h0M800.6 341.3h0M766.8 361.7h0M745.7 371.2h0M745.3 365.4h0M724.4 359.8h0M721.4 370.8h0M730.6 349.5h0M844.4 301.9h0M851.2 310.6h0M856.6 285h0M835.6 306h0M873.1 289.5h0M876.6 312.3h0M880.9 320.1h0M885.9 315.3h0M899.3 315h0M902.2 311.4h0M896 321.2h0M888.1 324.1h0M913.5 281.5h0M921.3 299.2h0M919.9 296.1h0M919.4 302h0M928.2 280.5h0M925.6 275.7h0M947.5 279.6h0M958.5 290.5h0M962.7 285.8h0M840.4 351.1h0M842.9 357.9h0M832.8 364.3h0M830.6 374.2h0M832.3 356.2h0M829 352.3h0M826.8 389.5h0M823.7 373.3h0M819.8 390.3h0M827.9 406.9h0M831.4 422h0M833.3 416.5h0M822.6 435h0M822.6 421.3h0M836.2 450.7h0M849.5 442.6h0M848.6 447.5h0M815.6 476.9h0M811.4 471.7h0M853.7 330.3h0M836.4 312h0M834.2 317.8h0M831.1 339.5h0M826.4 279.7h0M829 265.2h0M849.2 243.8h0M855 239.7h0M853.1 223.5h0M852.3 221.3h0M852 205.1h0M852.7 210.5h0M862.9 223.3h0M862.2 230h0M845.6 201.5h0M841.5 203.7h0M672.2 425.2h0M681 427.2h0M683.9 425.9h0M681.8 431.7h0M694.4 443.3h0M689.8 446.6h0M714.8 446.7h0M716.5 453.5h0M710.6 472.7h0M707.2 475.4h0M704.3 467.1h0M730.3 442.1h0M734.9 459.2h0M742.2 431.4h0M824.2 376.1h0M875 391.1h0M862.1 402.2h0M860.8 373.1h0M873.6 413.8h0M872.5 432.6h0M871.2 438.3h0M858 443.1h0M854.7 460.8h0M865.3 464.7h0M845.4 454.1h0M668.8 377h0M671.7 370.5h0M682 373.8h0M682.8 380.2h0M867.1 322.8h0M883.8 302.1h0M891.2 324.9h0M637.1 370.6h0M642.9 369.7h0M651.5 364.7h0M591.3 371h0M632.2 358.4h0M625.9 359.9h0M641.1 355.8h0M636.6 353.7h0M653.3 362.1h0M663.4 361.8h0M576.1 433.7h0M590.1 434.9h0M556.3 427.4h0M574.2 414.6h0M568.8 414.6h0M564.8 411.2h0M549.1 414.6h0M555.5 409.3h0M583 412.8h0M579.9 401h0M595.5 416.6h0M599.3 420.2h0M605.4 402.5h0M610.8 399.9h0M621.3 407.1h0M619.8 412.6h0M611.8 373.7h0M628.5 378.5h0M616.6 375.3h0M608 375.4h0M611.6 369.2h0M637.2 396.5h0M634.7 349.7h0M620.5 362.9h0M612.4 361.2h0M646.5 348.2h0M647.7 337.2h0M652.6 331.7h0M644.8 319.2h0M639.9 312.6h0M662.2 314.6h0M663.1 321.8h0M843 271.7h0M854.9 267.7h0M858.8 262.2h0M859 269.1h0M872.4 252.7h0M869.1 257.8h0M868.4 278.5h0M866.1 282.4h0M869 237.2h0M874 225.1h0M870.4 230.5h0M867.5 210.1h0M862.1 212.3h0M860.3 199.7h0M872.6 211h0M854.7 200.4h0M549.3 459.3h0M575.1 475.1h0M543.2 477.9h0M581.2 488.4h0M580.9 483h0M577.2 499.1h0M591.5 523.7h0M609.2 534.5h0M603.8 511.6h0M606.4 539.7h0M712.7 513.9h0M712.4 519.2h0M707.5 523.6h0M726.3 509.4h0M715.2 495.9h0M725.1 494.5h0M727.3 516.6h0M756.7 520.7h0M739.5 522.7h0M765.6 516.8h0M774.5 512.7h0M770.8 507.3h0M762.3 531.1h0M762 535.6h0M807 501.3h0M822.5 476.5h0M850.6 479.1h0M613.4 490.9h0M613.2 496.5h0M617.9 500.9h0M619.1 507.4h0M603.9 483.4h0M605.1 468.4h0M611.9 468.5h0M592.5 466.6h0M786 511.8h0M783 517.7h0M758.3 541h0M758.7 549.5h0M749.4 536.9h0M745.8 529.2h0M728.3 549h0M713.1 547.8h0M710.2 534h0M695.2 545.9h0M682.3 555h0M669.1 556.9h0M683.6 532h0M674.7 545.2h0M688 535.3h0M661 556.4h0M653 565.4h0M645.5 571.2h0M652.4 571.9h0M656.7 567.8h0M663.5 566.7h0M642.1 576h0M623.6 578.7h0M619.2 589.8h0M620.2 576.6h0M605.4 556.7h0M914.7 321.7h0M917.7 310.8h0M915.6 331.4h0M913.9 333.6h0M912 344.7h0M909.7 349.9h0M905.1 347.2h0M913.7 346.8h0M914.8 359.4h0M904.1 365.2h0M904.7 354.7h0M899.6 382.8h0M887.4 392.9h0M764.3 320.1h0M764.4 304.1h0M732.9 275.2h0M735.1 263.3h0M727.7 252.7h0M727.1 254.2h0M604.1 562.3h0M608.8 559.7h0M609.4 572h0M620.4 562.5h0M849.4 210.6h0M852.9 215.7h0M844.5 220.2h0M837.9 219.5h0M881.2 211.9h0M837.3 237.1h0M856.6 255.9h0M821.2 239.2h0M821.9 232.3h0M815.2 221.7h0M819.6 245.4h0M929.7 285.7h0M931.2 304h0M947.3 313.8h0M947.2 308.2h0M951 302.2h0M953.7 308.4h0M949.6 313.4h0M956.6 294.8h0M954.9 289.1h0M929.7 399.1h0M923.9 395.8h0M918.4 400.9h0M911.7 399.9h0M940.9 390.8h0M936.9 402.4h0M932.5 404.4h0M928.3 402.5h0M932.7 395.8h0M901.2 465.8h0M873.3 464.9h0M870.2 475.3h0M498.8 469.8h0M531.4 454.9h0M631 571.4h0M957.5 287.8h0M943.3 285.9h0M862.5 202.6h0M830 225.9h0M743 567.4h0M541.1 397.6h0M566.9 382.4h0M655.5 320.6h0M666.8 324.2h0M673.2 325.8h0M712.8 247.8h0M932.5 394.2h0M920 413.9h0"/><path stroke="#8c8c8c" stroke-width="3.200" d="M856.1 484.9h0M846.5 480h0M848.4 468.8h0M842.1 468.1h0M851.9 472.1h0M863.8 458.6h0M873.3 465h0M891.9 451.4h0M895.7 460.5h0M884.8 432.9h0M876.7 439.9h0M897.3 428.9h0M686.5 346.7h0M689.2 341.1h0M698.7 345.7h0M692.7 345.4h0M702.4 350.5h0M710 345.2h0M713.7 348.9h0M706.5 329.6h0M729.3 331.1h0M716.2 310.6h0M743.7 309h0M607.2 516.9h0M616.4 518.1h0M611.2 514.6h0M610.6 509.4h0M602.5 501.6h0M617.3 525.3h0M622.7 528.5h0M617.9 515.6h0M628.5 530.9h0M627.3 534.4h0M622 552.3h0M614.8 575h0M620.4 573h0M624 567.1h0M609.2 594.2h0M531.4 479.8h0M514.9 478.8h0M533.4 474.6h0M545 424.9h0M699.8 341.5h0M705.1 339.4h0M710.3 354h0M687.6 367.2h0M663.6 344.8h0M662 335.7h0M644 321.6h0M650.9 311.6h0M654.7 308.1h0M637.6 333.7h0M642.2 330.8h0M623.8 343.2h0M620.2 339h0M619.8 323.4h0M622.2 354.3h0M621.3 348h0M609.5 337h0M592.9 365.8h0M600.7 358.8h0M593.4 376.7h0M593.8 375h0M546.8 424.3h0M546.2 440.7h0M536.6 425h0M557 410h0M556.8 406.6h0M553.9 411.6h0M539.9 420.7h0M567.1 400.2h0M557.4 395.1h0M545.8 394h0M574.3 392.1h0M588.1 383.7h0M886.8 258.3h0M892.2 268h0M897 276.5h0M884.7 274.9h0M879.4 275.3h0M868.2 264.4h0M906.8 277.5h0M913.4 287.8h0M901.3 287.5h0M931.4 299h0M935.7 304h0M932 328.5h0M922.5 340.3h0M921 346.6h0M926.8 349.2h0M934.1 349.1h0M935.9 337.5h0M940.7 329h0M796 521.2h0M800.9 524.5h0M809.1 529.8h0M804.6 532.2h0M800.5 529.3h0M792.1 528.2h0M776.4 538.7h0M782.5 538.2h0M777 545.8h0M782.8 544.9h0M786.4 539.1h0M766.9 545.8h0M766.3 551h0M766.1 545.5h0M756.4 557.3h0M746.6 553h0M722.7 528.7h0M719.6 530.7h0M723.9 526.9h0M712.3 538.5h0M717.2 536.4h0M697.3 539.6h0M577.5 376h0M573.7 371.4h0M596.8 389.8h0M593.2 395.2h0M597.2 372.4h0M604.2 374.4h0M607.2 365.6h0M618 387.8h0M608.1 351.1h0M803.4 245.2h0M799 250.1h0M793.1 250.6h0M805.4 252h0M789.2 245.1h0M776.5 243.3h0M781.5 231.7h0M776.8 254.5h0M769.2 259.2h0M773.3 254.6h0M759 260.3h0M762 250.1h0M940.2 375.1h0M948.7 375.7h0M935.8 355.3h0M952 358.3h0M927.5 348.5h0M810.9 504.7h0M800.1 501.2h0M816.5 506.7h0M807.9 511.9h0M804.9 526.5h0M797.3 522.6h0M817.2 499.5h0M806.8 489.3h0M800.7 490h0M796 485h0M788.6 481h0M792.4 477.7h0M830.4 481.8h0M841.7 486h0M829.4 508.9h0M827.2 518.5h0M685.6 398.1h0M683.8 376h0M682.7 417h0M692.1 408.5h0M705.9 410h0M701 410.5h0M671.8 444.1h0M656.8 452.7h0M651 449h0M678.8 456.8h0M681 464.9h0M684.9 460h0M677.4 469.7h0M679.7 480.2h0M680.7 493.1h0M664.8 497.7h0M661.8 492.2h0M789.9 333.2h0M782 324.6h0M776.5 322.5h0M793.7 357.3h0M806.9 387.2h0M803.4 400.5h0M800.2 384.2h0M816.7 308.3h0M803.9 284.3h0M800.1 279.2h0M791.1 276.3h0M796.7 279.7h0M777.8 300.5h0M763.3 321h0M765 311.1h0M763.7 326.7h0M756.2 333.3h0M750.6 333h0M738.5 341.8h0M733.1 342.6h0M831.5 353.3h0M837.9 370.1h0M840.7 379.5h0M848.4 372.7h0M836.1 384.2h0M839.1 394.8h0M836.1 377.6h0M834.8 365.4h0M849.8 408.5h0M858.7 415.4h0M849.9 420.6h0M848.1 424.4h0M841.8 418.3h0M870.9 405.1h0M865.8 394.8h0M860 384.4h0M616.3 433.6h0M609.3 418.7h0M612.6 413h0M611.5 395.6h0M635.4 399.3h0M650 392.3h0M638.1 410.7h0M634.6 406h0M645.7 428.1h0M632.2 445h0M634.1 461.6h0M637 463.1h0M620.6 474.8h0M727.9 423.3h0M727.3 435.1h0M727.9 446h0M752.7 411.9h0M744.7 419.7h0M736.8 427.3h0M763.6 399.4h0M759.1 404.6h0M769.1 387.1h0M777.2 373.5h0M812.2 354h0M811.6 363.3h0M811 380.4h0M798.4 341.5h0M791.1 337.9h0M793.7 334.4h0M798.7 333.9h0M805.4 324.8h0M810.2 322h0M815.8 325.4h0M832 326.6h0M836.2 329h0M827.4 332.9h0M799.7 312.1h0M792.6 320.1h0M787.7 324.6h0M783.7 338.5h0M805.3 308.7h0M807.7 296h0M663 461.6h0M666.2 456.9h0M668.4 446.7h0M656.1 481.7h0M638.7 511h0M645 520h0M785.9 432.7h0M818.2 435.2h0M822.5 437.7h0M776.4 453.2h0M768.1 436.5h0M758.5 433.9h0M754.8 446.3h0M746.9 451.8h0M750.8 446.9h0M741 448.7h0M740.9 448.3h0M744.8 465.6h0M764.6 459.5h0M752.6 476h0M760.7 481.7h0M722.1 447.4h0M730.4 456.3h0M740.3 457.1h0M736.1 463.9h0M715 446.3h0M710.8 465.2h0M705.4 470.8h0M716.5 420.2h0M719.6 448.4h0M705.1 409.7h0M718.7 401.2h0M723.7 401.4h0M871.5 356.8h0M873.9 371.7h0M892.8 360.8h0M891.1 356h0M895.2 353.2h0M899.5 356h0M873.9 387.8h0M873.1 381.8h0M868.5 378.4h0M879.6 389.8h0M881.9 400.6h0M887.5 400.4h0M877.2 405.7h0M880.1 409.7h0M864 424.4h0M787.6 417.7h0M800.9 412.1h0M806.1 416h0M816.7 406h0M825.8 397.8h0M831.8 401.2h0M842.3 397.3h0M840.7 407.6h0M843.4 413.8h0M840.5 419.3h0M840.9 390.2h0M850.1 370.5h0M854.8 374.7h0M720.4 460.5h0M743.9 457.1h0M738 489.7h0M747.9 494.6h0M742.7 493.3h0M757 505.3h0M764.6 501.1h0M759 510.9h0M771.5 501.1h0M778.5 479.2h0M770 501.2h0M796.8 484.6h0M794.2 455.1h0M788.3 453.9h0M803.8 463h0M810.5 468.8h0M869.6 345.3h0M863.3 343.2h0M899 353.7h0M905.2 357.6h0M895 371.6h0M902.8 405.6h0M896.3 406.2h0M910.9 407.2h0M907.9 438.4h0M907.4 442.3h0M908.6 436.8h0M897.6 457.3h0M902.5 453.3h0M897.7 463.8h0M891.4 473.2h0M895.1 477.9h0M905.3 483.6h0M885.2 476.3h0M714.8 497.9h0M678.6 520.1h0M681.6 524.8h0M651.8 508.8h0M658.8 537.1h0M654.1 545.5h0M649.7 557.2h0M655.9 548.2h0M637.9 565.6h0M634.4 574.8h0M632.6 581.9h0M761.8 412.7h0M750.8 436.4h0M769.8 414.9h0M749.7 442.1h0M754.6 448.7h0M760 450.5h0M768.2 471.9h0M761.9 455h0M779 484.8h0M752 488.3h0M758.3 486.3h0M768.4 465.1h0M773.4 465.3h0M730.9 486.6h0M726.4 496.1h0M729.1 477.9h0M726.6 471.4h0M729.5 506.4h0M718.8 526.1h0M713.7 526.7h0M715.3 519.4h0M862.7 311.4h0M870.4 327.5h0M851.6 316h0M849.2 310.6h0M656.5 461.2h0M666 453.8h0M653.1 467.6h0M619.9 485.8h0M623.2 491.8h0M629.2 491.8h0M811.8 427h0M822.3 429.5h0M834.3 436.1h0M826.8 443.8h0M840.9 435.9h0M848.6 438.8h0M844.6 428.1h0M839.1 414.5h0M855 440.9h0M863.9 429.1h0M863.2 427.9h0M887.2 421.3h0M889.6 415.4h0M728.3 381.6h0M724.6 376h0M717.6 369.7h0M737 389.9h0M734.1 403.2h0M723.9 413.5h0M702.2 425.7h0M699.3 441.1h0M695.8 453.2h0M686.3 450.3h0M676.2 444.2h0M699.2 458h0M701.6 469.9h0M708.1 471.6h0M719.4 468.8h0M723.3 464.8h0M697.9 481.4h0M688.4 468h0M686.7 461.9h0M686.9 453.6h0M704.7 488.5h0M713.6 492.2h0M673.6 486.2h0M695 519.2h0M663.5 431.9h0M667.3 421.4h0M656.8 431.1h0M650.3 436.9h0M635.5 438h0M629.6 419.8h0M638.9 384.2h0M655.9 379.4h0M659.1 376.2h0M658.5 386.1h0M670 407.8h0M661.9 407.9h0M660.2 399.3h0M678 397.1h0M654.2 410.3h0M649 420.4h0M639.6 411.7h0M629.6 423.4h0M612.1 429.9h0M604.1 436h0M602.6 444.7h0M591.1 443.2h0M575.7 425.8h0M654.7 474.1h0M660.4 474.6h0M619 496.4h0M605.5 497.1h0M610.3 485.8h0M612.8 475.8h0M599.3 498.3h0M600.7 494.7h0M604.7 500h0M621.1 505h0M588.1 480.4h0M579 477.2h0M611.9 470.2h0M775.8 355.2h0M770.7 352.8h0M760.6 350.1h0M757.5 359.7h0M772.7 340.1h0M752.1 349.2h0M751.3 356.1h0M717.9 363.4h0M738.3 372.5h0M712.5 361.9h0M706.7 376.1h0M721.4 386h0M710.8 389.2h0M737.1 380.4h0M746.9 394.8h0M759.4 394.8h0M763.9 398.6h0M870.6 293.2h0M848.7 280.9h0M839 276h0M835.7 272.5h0M846.5 285.6h0M819.6 269.5h0M820.8 287.9h0M811.6 257.9h0M792.4 287.1h0M786.4 265.4h0M778.7 261.8h0M769.3 280.1h0M780.3 279.9h0M797.4 282.5h0M744.6 283.1h0M751.4 291.4h0M850 403.7h0M829.3 418.1h0M835 421.8h0M805.4 447.8h0M811.7 456.2h0M814.1 461.2h0M799.7 445.5h0M790.9 450.5h0M794.7 455.3h0M826.2 340.6h0M827 331.4h0M829.7 327.2h0M800.6 341.3h0M766.8 361.7h0M745.7 371.2h0M745.3 365.4h0M724.4 359.8h0M721.4 370.8h0M730.6 349.5h0M844.4 301.9h0M851.2 310.6h0M856.6 285h0M835.6 306h0M873.1 289.5h0M876.6 312.3h0M880.9 320.1h0M885.9 315.3h0M899.3 315h0M902.2 311.4h0M896 321.2h0M888.1 324.1h0M913.5 281.5h0M921.3 299.2h0M919.9 296.1h0M919.4 302h0M928.2 280.5h0M925.6 275.7h0M947.5 279.6h0M958.5 290.5h0M962.7 285.8h0M840.4 351.1h0M842.9 357.9h0M832.8 364.3h0M830.6 374.2h0M832.3 356.2h0M829 352.3h0M826.8 389.5h0M823.7 373.3h0M819.8 390.3h0M827.9 406.9h0M831.4 422h0M833.3 416.5h0M822.6 435h0M822.6 421.3h0M836.2 450.7h0M849.5 442.6h0M848.6 447.5h0M815.6 476.9h0M811.4 471.7h0M853.7 330.3h0M836.4 312h0M834.2 317.8h0M831.1 339.5h0M826.4 279.7h0M829 265.2h0M849.2 243.8h0M855 239.7h0M853.1 223.5h0M852.3 221.3h0M852 205.1h0M852.7 210.5h0M862.9 223.3h0M862.2 230h0M845.6 201.5h0M841.5 203.7h0M672.2 425.2h0M681 427.2h0M683.9 425.9h0M681.8 431.7h0M694.4 443.3h0M689.8 446.6h0M714.8 446.7h0M716.5 453.5h0M710.6 472.7h0M707.2 475.4h0M704.3 467.1h0M730.3 442.1h0M734.9 459.2h0M742.2 431.4h0M824.2 376.1h0M875 391.1h0M862.1 402.2h0M860.8 373.1h0M873.6 413.8h0M872.5 432.6h0M871.2 438.3h0M858 443.1h0M854.7 460.8h0M865.3 464.7h0M845.4 454.1h0M668.8 377h0M671.7 370.5h0M682 373.8h0M682.8 380.2h0M867.1 322.8h0M883.8 302.1h0M891.2 324.9h0M637.1 370.6h0M642.9 369.7h0M651.5 364.7h0M591.3 371h0M632.2 358.4h0M625.9 359.9h0M641.1 355.8h0M636.6 353.7h0M653.3 362.1h0M663.4 361.8h0M576.1 433.7h0M590.1 434.9h0M556.3 427.4h0M574.2 414.6h0M568.8 414.6h0M564.8 411.2h0M549.1 414.6h0M555.5 409.3h0M583 412.8h0M579.9 401h0M595.5 416.6h0M599.3 420.2h0M605.4 402.5h0M610.8 399.9h0M621.3 407.1h0M619.8 412.6h0M611.8 373.7h0M628.5 378.5h0M616.6 375.3h0M608 375.4h0M611.6 369.2h0M637.2 396.5h0M634.7 349.7h0M620.5 362.9h0M612.4 361.2h0M646.5 348.2h0M647.7 337.2h0M652.6 331.7h0M644.8 319.2h0M639.9 312.6h0M662.2 314.6h0M663.1 321.8h0M843 271.7h0M854.9 267.7h0M858.8 262.2h0M859 269.1h0M872.4 252.7h0M869.1 257.8h0M868.4 278.5h0M866.1 282.4h0M869 237.2h0M874 225.1h0M870.4 230.5h0M867.5 210.1h0M862.1 212.3h0M860.3 199.7h0M872.6 211h0M854.7 200.4h0M549.3 459.3h0M575.1 475.1h0M543.2 477.9h0M581.2 488.4h0M580.9 483h0M577.2 499.1h0M591.5 523.7h0M609.2 534.5h0M603.8 511.6h0M606.4 539.7h0M712.7 513.9h0M712.4 519.2h0M707.5 523.6h0M726.3 509.4h0M715.2 495.9h0M725.1 494.5h0M727.3 516.6h0M756.7 520.7h0M739.5 522.7h0M765.6 516.8h0M774.5 512.7h0M770.8 507.3h0M762.3 531.1h0M762 535.6h0M807 501.3h0M822.5 476.5h0M850.6 479.1h0M613.4 490.9h0M613.2 496.5h0M617.9 500.9h0M619.1 507.4h0M603.9 483.4h0M605.1 468.4h0M611.9 468.5h0M592.5 466.6h0M786 511.8h0M783 517.7h0M758.3 541h0M758.7 549.5h0M749.4 536.9h0M745.8 529.2h0M728.3 549h0M713.1 547.8h0M710.2 534h0M695.2 545.9h0M682.3 555h0M669.1 556.9h0M683.6 532h0M674.7 545.2h0M688 535.3h0M661 556.4h0M653 565.4h0M645.5 571.2h0M652.4 571.9h0M656.7 567.8h0M663.5 566.7h0M642.1 576h0M623.6 578.7h0M619.2 589.8h0M620.2 576.6h0M605.4 556.7h0M914.7 321.7h0M917.7 310.8h0M915.6 331.4h0M913.9 333.6h0M912 344.7h0M909.7 349.9h0M905.1 347.2h0M913.7 346.8h0M914.8 359.4h0M904.1 365.2h0M904.7 354.7h0M899.6 382.8h0M887.4 392.9h0M764.3 320.1h0M764.4 304.1h0M732.9 275.2h0M735.1 263.3h0M727.7 252.7h0M727.1 254.2h0M604.1 562.3h0M608.8 559.7h0M609.4 572h0M620.4 562.5h0M849.4 210.6h0M852.9 215.7h0M844.5 220.2h0M837.9 219.5h0M881.2 211.9h0M837.3 237.1h0M856.6 255.9h0M821.2 239.2h0M821.9 232.3h0M815.2 221.7h0M819.6 245.4h0M929.7 285.7h0M931.2 304h0M947.3 313.8h0M947.2 308.2h0M951 302.2h0M953.7 308.4h0M949.6 313.4h0M956.6 294.8h0M954.9 289.1h0M929.7 399.1h0M923.9 395.8h0M918.4 400.9h0M911.7 399.9h0M940.9 390.8h0M936.9 402.4h0M932.5 404.4h0M928.3 402.5h0M932.7 395.8h0M901.2 465.8h0M873.3 464.9h0M870.2 475.3h0M498.8 469.8h0M531.4 454.9h0M631 571.4h0M957.5 287.8h0M943.3 285.9h0M862.5 202.6h0M830 225.9h0M743 567.4h0M541.1 397.6h0M566.9 382.4h0M655.5 320.6h0M666.8 324.2h0M673.2 325.8h0M712.8 247.8h0M932.5 394.2h0M920 413.9h0"/><path stroke="#b4b4b4" stroke-width="1.800" d="M856.1 484.9h0M846.5 480h0M848.4 468.8h0M842.1 468.1h0M851.9 472.1h0M863.8 458.6h0M873.3 465h0M891.9 451.4h0M895.7 460.5h0M884.8 432.9h0M876.7 439.9h0M897.3 428.9h0M686.5 346.7h0M689.2 341.1h0M698.7 345.7h0M692.7 345.4h0M702.4 350.5h0M710 345.2h0M713.7 348.9h0M706.5 329.6h0M729.3 331.1h0M716.2 310.6h0M743.7 309h0M607.2 516.9h0M616.4 518.1h0M611.2 514.6h0M610.6 509.4h0M602.5 501.6h0M617.3 525.3h0M622.7 528.5h0M617.9 515.6h0M628.5 530.9h0M627.3 534.4h0M622 552.3h0M614.8 575h0M620.4 573h0M624 567.1h0M609.2 594.2h0M531.4 479.8h0M514.9 478.8h0M533.4 474.6h0M545 424.9h0M699.8 341.5h0M705.1 339.4h0M710.3 354h0M687.6 367.2h0M663.6 344.8h0M662 335.7h0M644 321.6h0M650.9 311.6h0M654.7 308.1h0M637.6 333.7h0M642.2 330.8h0M623.8 343.2h0M620.2 339h0M619.8 323.4h0M622.2 354.3h0M621.3 348h0M609.5 337h0M592.9 365.8h0M600.7 358.8h0M593.4 376.7h0M593.8 375h0M546.8 424.3h0M546.2 440.7h0M536.6 425h0M557 410h0M556.8 406.6h0M553.9 411.6h0M539.9 420.7h0M567.1 400.2h0M557.4 395.1h0M545.8 394h0M574.3 392.1h0M588.1 383.7h0M886.8 258.3h0M892.2 268h0M897 276.5h0M884.7 274.9h0M879.4 275.3h0M868.2 264.4h0M906.8 277.5h0M913.4 287.8h0M901.3 287.5h0M931.4 299h0M935.7 304h0M932 328.5h0M922.5 340.3h0M921 346.6h0M926.8 349.2h0M934.1 349.1h0M935.9 337.5h0M940.7 329h0M796 521.2h0M800.9 524.5h0M809.1 529.8h0M804.6 532.2h0M800.5 529.3h0M792.1 528.2h0M776.4 538.7h0M782.5 538.2h0M777 545.8h0M782.8 544.9h0M786.4 539.1h0M766.9 545.8h0M766.3 551h0M766.1 545.5h0M756.4 557.3h0M746.6 553h0M722.7 528.7h0M719.6 530.7h0M723.9 526.9h0M712.3 538.5h0M717.2 536.4h0M697.3 539.6h0M577.5 376h0M573.7 371.4h0M596.8 389.8h0M593.2 395.2h0M597.2 372.4h0M604.2 374.4h0M607.2 365.6h0M618 387.8h0M608.1 351.1h0M803.4 245.2h0M799 250.1h0M793.1 250.6h0M805.4 252h0M789.2 245.1h0M776.5 243.3h0M781.5 231.7h0M776.8 254.5h0M769.2 259.2h0M773.3 254.6h0M759 260.3h0M762 250.1h0M940.2 375.1h0M948.7 375.7h0M935.8 355.3h0M952 358.3h0M927.5 348.5h0M810.9 504.7h0M800.1 501.2h0M816.5 506.7h0M807.9 511.9h0M804.9 526.5h0M797.3 522.6h0M817.2 499.5h0M806.8 489.3h0M800.7 490h0M796 485h0M788.6 481h0M792.4 477.7h0M830.4 481.8h0M841.7 486h0M829.4 508.9h0M827.2 518.5h0M685.6 398.1h0M683.8 376h0M682.7 417h0M692.1 408.5h0M705.9 410h0M701 410.5h0M671.8 444.1h0M656.8 452.7h0M651 449h0M678.8 456.8h0M681 464.9h0M684.9 460h0M677.4 469.7h0M679.7 480.2h0M680.7 493.1h0M664.8 497.7h0M661.8 492.2h0M789.9 333.2h0M782 324.6h0M776.5 322.5h0M793.7 357.3h0M806.9 387.2h0M803.4 400.5h0M800.2 384.2h0M816.7 308.3h0M803.9 284.3h0M800.1 279.2h0M791.1 276.3h0M796.7 279.7h0M777.8 300.5h0M763.3 321h0M765 311.1h0M763.7 326.7h0M756.2 333.3h0M750.6 333h0M738.5 341.8h0M733.1 342.6h0M831.5 353.3h0M837.9 370.1h0M840.7 379.5h0M848.4 372.7h0M836.1 384.2h0M839.1 394.8h0M836.1 377.6h0M834.8 365.4h0M849.8 408.5h0M858.7 415.4h0M849.9 420.6h0M848.1 424.4h0M841.8 418.3h0M870.9 405.1h0M865.8 394.8h0M860 384.4h0M616.3 433.6h0M609.3 418.7h0M612.6 413h0M611.5 395.6h0M635.4 399.3h0M650 392.3h0M638.1 410.7h0M634.6 406h0M645.7 428.1h0M632.2 445h0M634.1 461.6h0M637 463.1h0M620.6 474.8h0M727.9 423.3h0M727.3 435.1h0M727.9 446h0M752.7 411.9h0M744.7 419.7h0M736.8 427.3h0M763.6 399.4h0M759.1 404.6h0M769.1 387.1h0M777.2 373.5h0M812.2 354h0M811.6 363.3h0M811 380.4h0M798.4 341.5h0M791.1 337.9h0M793.7 334.4h0M798.7 333.9h0M805.4 324.8h0M810.2 322h0M815.8 325.4h0M832 326.6h0M836.2 329h0M827.4 332.9h0M799.7 312.1h0M792.6 320.1h0M787.7 324.6h0M783.7 338.5h0M805.3 308.7h0M807.7 296h0M663 461.6h0M666.2 456.9h0M668.4 446.7h0M656.1 481.7h0M638.7 511h0M645 520h0M785.9 432.7h0M818.2 435.2h0M822.5 437.7h0M776.4 453.2h0M768.1 436.5h0M758.5 433.9h0M754.8 446.3h0M746.9 451.8h0M750.8 446.9h0M741 448.7h0M740.9 448.3h0M744.8 465.6h0M764.6 459.5h0M752.6 476h0M760.7 481.7h0M722.1 447.4h0M730.4 456.3h0M740.3 457.1h0M736.1 463.9h0M715 446.3h0M710.8 465.2h0M705.4 470.8h0M716.5 420.2h0M719.6 448.4h0M705.1 409.7h0M718.7 401.2h0M723.7 401.4h0M871.5 356.8h0M873.9 371.7h0M892.8 360.8h0M891.1 356h0M895.2 353.2h0M899.5 356h0M873.9 387.8h0M873.1 381.8h0M868.5 378.4h0M879.6 389.8h0M881.9 400.6h0M887.5 400.4h0M877.2 405.7h0M880.1 409.7h0M864 424.4h0M787.6 417.7h0M800.9 412.1h0M806.1 416h0M816.7 406h0M825.8 397.8h0M831.8 401.2h0M842.3 397.3h0M840.7 407.6h0M843.4 413.8h0M840.5 419.3h0M840.9 390.2h0M850.1 370.5h0M854.8 374.7h0M720.4 460.5h0M743.9 457.1h0M738 489.7h0M747.9 494.6h0M742.7 493.3h0M757 505.3h0M764.6 501.1h0M759 510.9h0M771.5 501.1h0M778.5 479.2h0M770 501.2h0M796.8 484.6h0M794.2 455.1h0M788.3 453.9h0M803.8 463h0M810.5 468.8h0M869.6 345.3h0M863.3 343.2h0M899 353.7h0M905.2 357.6h0M895 371.6h0M902.8 405.6h0M896.3 406.2h0M910.9 407.2h0M907.9 438.4h0M907.4 442.3h0M908.6 436.8h0M897.6 457.3h0M902.5 453.3h0M897.7 463.8h0M891.4 473.2h0M895.1 477.9h0M905.3 483.6h0M885.2 476.3h0M714.8 497.9h0M678.6 520.1h0M681.6 524.8h0M651.8 508.8h0M658.8 537.1h0M654.1 545.5h0M649.7 557.2h0M655.9 548.2h0M637.9 565.6h0M634.4 574.8h0M632.6 581.9h0M761.8 412.7h0M750.8 436.4h0M769.8 414.9h0M749.7 442.1h0M754.6 448.7h0M760 450.5h0M768.2 471.9h0M761.9 455h0M779 484.8h0M752 488.3h0M758.3 486.3h0M768.4 465.1h0M773.4 465.3h0M730.9 486.6h0M726.4 496.1h0M729.1 477.9h0M726.6 471.4h0M729.5 506.4h0M718.8 526.1h0M713.7 526.7h0M715.3 519.4h0M862.7 311.4h0M870.4 327.5h0M851.6 316h0M849.2 310.6h0M656.5 461.2h0M666 453.8h0M653.1 467.6h0M619.9 485.8h0M623.2 491.8h0M629.2 491.8h0M811.8 427h0M822.3 429.5h0M834.3 436.1h0M826.8 443.8h0M840.9 435.9h0M848.6 438.8h0M844.6 428.1h0M839.1 414.5h0M855 440.9h0M863.9 429.1h0M863.2 427.9h0M887.2 421.3h0M889.6 415.4h0M728.3 381.6h0M724.6 376h0M717.6 369.7h0M737 389.9h0M734.1 403.2h0M723.9 413.5h0M702.2 425.7h0M699.3 441.1h0M695.8 453.2h0M686.3 450.3h0M676.2 444.2h0M699.2 458h0M701.6 469.9h0M708.1 471.6h0M719.4 468.8h0M723.3 464.8h0M697.9 481.4h0M688.4 468h0M686.7 461.9h0M686.9 453.6h0M704.7 488.5h0M713.6 492.2h0M673.6 486.2h0M695 519.2h0M663.5 431.9h0M667.3 421.4h0M656.8 431.1h0M650.3 436.9h0M635.5 438h0M629.6 419.8h0M638.9 384.2h0M655.9 379.4h0M659.1 376.2h0M658.5 386.1h0M670 407.8h0M661.9 407.9h0M660.2 399.3h0M678 397.1h0M654.2 410.3h0M649 420.4h0M639.6 411.7h0M629.6 423.4h0M612.1 429.9h0M604.1 436h0M602.6 444.7h0M591.1 443.2h0M575.7 425.8h0M654.7 474.1h0M660.4 474.6h0M619 496.4h0M605.5 497.1h0M610.3 485.8h0M612.8 475.8h0M599.3 498.3h0M600.7 494.7h0M604.7 500h0M621.1 505h0M588.1 480.4h0M579 477.2h0M611.9 470.2h0M775.8 355.2h0M770.7 352.8h0M760.6 350.1h0M757.5 359.7h0M772.7 340.1h0M752.1 349.2h0M751.3 356.1h0M717.9 363.4h0M738.3 372.5h0M712.5 361.9h0M706.7 376.1h0M721.4 386h0M710.8 389.2h0M737.1 380.4h0M746.9 394.8h0M759.4 394.8h0M763.9 398.6h0M870.6 293.2h0M848.7 280.9h0M839 276h0M835.7 272.5h0M846.5 285.6h0M819.6 269.5h0M820.8 287.9h0M811.6 257.9h0M792.4 287.1h0M786.4 265.4h0M778.7 261.8h0M769.3 280.1h0M780.3 279.9h0M797.4 282.5h0M744.6 283.1h0M751.4 291.4h0M850 403.7h0M829.3 418.1h0M835 421.8h0M805.4 447.8h0M811.7 456.2h0M814.1 461.2h0M799.7 445.5h0M790.9 450.5h0M794.7 455.3h0M826.2 340.6h0M827 331.4h0M829.7 327.2h0M800.6 341.3h0M766.8 361.7h0M745.7 371.2h0M745.3 365.4h0M724.4 359.8h0M721.4 370.8h0M730.6 349.5h0M844.4 301.9h0M851.2 310.6h0M856.6 285h0M835.6 306h0M873.1 289.5h0M876.6 312.3h0M880.9 320.1h0M885.9 315.3h0M899.3 315h0M902.2 311.4h0M896 321.2h0M888.1 324.1h0M913.5 281.5h0M921.3 299.2h0M919.9 296.1h0M919.4 302h0M928.2 280.5h0M925.6 275.7h0M947.5 279.6h0M958.5 290.5h0M962.7 285.8h0M840.4 351.1h0M842.9 357.9h0M832.8 364.3h0M830.6 374.2h0M832.3 356.2h0M829 352.3h0M826.8 389.5h0M823.7 373.3h0M819.8 390.3h0M827.9 406.9h0M831.4 422h0M833.3 416.5h0M822.6 435h0M822.6 421.3h0M836.2 450.7h0M849.5 442.6h0M848.6 447.5h0M815.6 476.9h0M811.4 471.7h0M853.7 330.3h0M836.4 312h0M834.2 317.8h0M831.1 339.5h0M826.4 279.7h0M829 265.2h0M849.2 243.8h0M855 239.7h0M853.1 223.5h0M852.3 221.3h0M852 205.1h0M852.7 210.5h0M862.9 223.3h0M862.2 230h0M845.6 201.5h0M841.5 203.7h0M672.2 425.2h0M681 427.2h0M683.9 425.9h0M681.8 431.7h0M694.4 443.3h0M689.8 446.6h0M714.8 446.7h0M716.5 453.5h0M710.6 472.7h0M707.2 475.4h0M704.3 467.1h0M730.3 442.1h0M734.9 459.2h0M742.2 431.4h0M824.2 376.1h0M875 391.1h0M862.1 402.2h0M860.8 373.1h0M873.6 413.8h0M872.5 432.6h0M871.2 438.3h0M858 443.1h0M854.7 460.8h0M865.3 464.7h0M845.4 454.1h0M668.8 377h0M671.7 370.5h0M682 373.8h0M682.8 380.2h0M867.1 322.8h0M883.8 302.1h0M891.2 324.9h0M637.1 370.6h0M642.9 369.7h0M651.5 364.7h0M591.3 371h0M632.2 358.4h0M625.9 359.9h0M641.1 355.8h0M636.6 353.7h0M653.3 362.1h0M663.4 361.8h0M576.1 433.7h0M590.1 434.9h0M556.3 427.4h0M574.2 414.6h0M568.8 414.6h0M564.8 411.2h0M549.1 414.6h0M555.5 409.3h0M583 412.8h0M579.9 401h0M595.5 416.6h0M599.3 420.2h0M605.4 402.5h0M610.8 399.9h0M621.3 407.1h0M619.8 412.6h0M611.8 373.7h0M628.5 378.5h0M616.6 375.3h0M608 375.4h0M611.6 369.2h0M637.2 396.5h0M634.7 349.7h0M620.5 362.9h0M612.4 361.2h0M646.5 348.2h0M647.7 337.2h0M652.6 331.7h0M644.8 319.2h0M639.9 312.6h0M662.2 314.6h0M663.1 321.8h0M843 271.7h0M854.9 267.7h0M858.8 262.2h0M859 269.1h0M872.4 252.7h0M869.1 257.8h0M868.4 278.5h0M866.1 282.4h0M869 237.2h0M874 225.1h0M870.4 230.5h0M867.5 210.1h0M862.1 212.3h0M860.3 199.7h0M872.6 211h0M854.7 200.4h0M549.3 459.3h0M575.1 475.1h0M543.2 477.9h0M581.2 488.4h0M580.9 483h0M577.2 499.1h0M591.5 523.7h0M609.2 534.5h0M603.8 511.6h0M606.4 539.7h0M712.7 513.9h0M712.4 519.2h0M707.5 523.6h0M726.3 509.4h0M715.2 495.9h0M725.1 494.5h0M727.3 516.6h0M756.7 520.7h0M739.5 522.7h0M765.6 516.8h0M774.5 512.7h0M770.8 507.3h0M762.3 531.1h0M762 535.6h0M807 501.3h0M822.5 476.5h0M850.6 479.1h0M613.4 490.9h0M613.2 496.5h0M617.9 500.9h0M619.1 507.4h0M603.9 483.4h0M605.1 468.4h0M611.9 468.5h0M592.5 466.6h0M786 511.8h0M783 517.7h0M758.3 541h0M758.7 549.5h0M749.4 536.9h0M745.8 529.2h0M728.3 549h0M713.1 547.8h0M710.2 534h0M695.2 545.9h0M682.3 555h0M669.1 556.9h0M683.6 532h0M674.7 545.2h0M688 535.3h0M661 556.4h0M653 565.4h0M645.5 571.2h0M652.4 571.9h0M656.7 567.8h0M663.5 566.7h0M642.1 576h0M623.6 578.7h0M619.2 589.8h0M620.2 576.6h0M605.4 556.7h0M914.7 321.7h0M917.7 310.8h0M915.6 331.4h0M913.9 333.6h0M912 344.7h0M909.7 349.9h0M905.1 347.2h0M913.7 346.8h0M914.8 359.4h0M904.1 365.2h0M904.7 354.7h0M899.6 382.8h0M887.4 392.9h0M764.3 320.1h0M764.4 304.1h0M732.9 275.2h0M735.1 263.3h0M727.7 252.7h0M727.1 254.2h0M604.1 562.3h0M608.8 559.7h0M609.4 572h0M620.4 562.5h0M849.4 210.6h0M852.9 215.7h0M844.5 220.2h0M837.9 219.5h0M881.2 211.9h0M837.3 237.1h0M856.6 255.9h0M821.2 239.2h0M821.9 232.3h0M815.2 221.7h0M819.6 245.4h0M929.7 285.7h0M931.2 304h0M947.3 313.8h0M947.2 308.2h0M951 302.2h0M953.7 308.4h0M949.6 313.4h0M956.6 294.8h0M954.9 289.1h0M929.7 399.1h0M923.9 395.8h0M918.4 400.9h0M911.7 399.9h0M940.9 390.8h0M936.9 402.4h0M932.5 404.4h0M928.3 402.5h0M932.7 395.8h0M901.2 465.8h0M873.3 464.9h0M870.2 475.3h0M498.8 469.8h0M531.4 454.9h0M631 571.4h0M957.5 287.8h0M943.3 285.9h0M862.5 202.6h0M830 225.9h0M743 567.4h0M541.1 397.6h0M566.9 382.4h0M655.5 320.6h0M666.8 324.2h0M673.2 325.8h0M712.8 247.8h0M932.5 394.2h0M920 413.9h0" transform="translate(-0.3,-0.3)"/><path stroke="#a9a018" stroke-width="4.100" d="M593.6 369.7h0M662.2 420.7h0"/><path stroke="#c8c030" stroke-width="3.200" d="M593.6 369.7h0M662.2 420.7h0"/><path stroke="#f0e63c" stroke-width="1.800" d="M593.6 369.7h0M662.2 420.7h0" transform="translate(-0.3,-0.3)"/><path stroke="#5c5c5c" stroke-width="4.100" d="M849.5 485.3h0M852.9 465.2h0M861.2 457.2h0M865.4 460.4h0M863.2 463.8h0M890 457.4h0M896 455.3h0M899.7 464h0M890.9 430.8h0M882.6 438.5h0M687.9 341.3h0M676.1 341.7h0M710.6 338.1h0M717.5 331.9h0M711.7 328h0M733.5 316.1h0M722.1 313.8h0M709.5 311.4h0M604.3 507h0M614.6 523h0M613.5 518.2h0M621.8 519.1h0M625.9 543.3h0M624.2 557.7h0M622.5 566.3h0M633.5 563.7h0M638.9 564.5h0M616.5 570.4h0M629.5 565.7h0M617.4 580.4h0M529.9 473.2h0M523.6 467.3h0M532.3 463.9h0M535.8 469.8h0M532.2 484.6h0M535.1 458.8h0M542.5 452.6h0M539.4 457.7h0M532.6 458.4h0M546.2 441.9h0M543.8 447.9h0M541.3 429.5h0M695.5 345.9h0M707.7 348.3h0M693.8 368.5h0M679.8 357.3h0M665.9 350.5h0M660.1 349.8h0M646.3 328.3h0M647.9 331.5h0M652.6 326.4h0M659.3 328.2h0M621.9 333.9h0M617.8 329.5h0M626.7 349.5h0M615.7 354.1h0M608.7 359.8h0M605.4 353.7h0M610.6 365.6h0M604.4 366.5h0M597.2 365.3h0M594.1 370.9h0M599.8 351.3h0M588.9 385.4h0M546.6 418.7h0M546.6 411.4h0M550.2 414.7h0M545 417.4h0M543.3 423.4h0M563.5 405.5h0M547.4 413.3h0M563.8 393.6h0M580.8 392.9h0M903.5 276h0M912.3 286.3h0M907.1 290h0M929.5 287.4h0M932.9 293.8h0M933.3 289.3h0M933.5 309h0M934.1 302.1h0M938.5 297.4h0M938.9 292.2h0M930.4 321.8h0M929 337.2h0M934.1 327.3h0M905 339.1h0M928 358.9h0M809.5 525.7h0M776.7 544.7h0M761.5 554.5h0M743.4 558.1h0M752.3 541h0M733.8 522.6h0M571.3 375.5h0M567.1 370.1h0M581.2 383.9h0M594 384.8h0M590.9 378.4h0M612.8 367.9h0M618.6 377.6h0M621.2 390.9h0M604.4 355.5h0M615 350.3h0M778.4 248.6h0M763.5 255.9h0M758.1 267h0M937.2 369.9h0M931.2 374.2h0M929.2 369.1h0M921.1 382.6h0M936.4 364h0M943.5 376.3h0M941.8 371.9h0M941.1 358.5h0M922.9 345.8h0M936.2 356.1h0M940.2 358.4h0M935.1 364.7h0M931.1 361.8h0M803 506h0M794.8 493h0M799.8 493.1h0M809.8 507.1h0M799.7 518.4h0M790.8 485h0M831.9 487.7h0M825.9 488.5h0M840.1 479.3h0M838.1 492.5h0M843.2 491.1h0M836.2 503.5h0M842.3 494.7h0M682.3 392.3h0M684.3 386.8h0M682.4 381.8h0M687.2 405.2h0M686.9 413.8h0M692.4 410.5h0M694.2 405.4h0M699.1 403.6h0M682 416.8h0M675.8 425.7h0M699.5 403.2h0M666.9 454.6h0M685.5 483.6h0M663.8 486h0M659.6 502.7h0M652.6 505.3h0M662.8 500.2h0M646.8 502.8h0M790.3 338.5h0M798.7 360.2h0M785.1 349.7h0M802.2 384.7h0M804.5 394.7h0M814.9 298.2h0M818.3 302.4h0M818.8 316.2h0M782.5 287.7h0M787.8 289.1h0M768.9 284.7h0M764.7 279.4h0M769.6 313.4h0M759.3 328.4h0M728 338.9h0M823.8 342.1h0M822.9 336.6h0M829.8 344.6h0M837.8 352.5h0M828.8 359.2h0M832.7 367.1h0M825.9 367.1h0M846.6 377.6h0M853.7 370h0M832.6 371.6h0M844.8 398.3h0M861 390h0M611.2 428.3h0M604 420.4h0M595.4 426h0M614.7 401.5h0M622.6 408.2h0M620.3 393.1h0M628.4 400.8h0M646.1 401.3h0M641.4 392.6h0M645.4 386.1h0M651.3 427h0M654 421.8h0M659.8 419h0M636.7 436.2h0M627 441.2h0M636.1 451.2h0M640.7 454.1h0M643.7 448h0M648.8 445.4h0M729.4 428.6h0M731.3 418.8h0M739.3 422.3h0M754.8 406.4h0M770.3 399.8h0M779.4 391.8h0M780.3 397.3h0M786.7 399.3h0M760.8 374.7h0M753.4 367.3h0M759.4 370.8h0M765.5 370.1h0M799 379.4h0M805.2 381.8h0M806 387.3h0M798 373.5h0M804.3 363.2h0M790.3 355.8h0M809.6 366.2h0M809.4 358.5h0M813.5 373.9h0M809.2 348.6h0M806.9 338.5h0M831.6 335.8h0M799.7 321h0M810.1 301.3h0M804.7 304h0M802 309h0M795.8 311.4h0M793 316.3h0M786.9 318.3h0M664.2 467.7h0M664 474.7h0M643.4 484.2h0M635.4 493.9h0M639.2 504.9h0M643.6 514.6h0M791.2 436.4h0M802.4 437.6h0M822.6 442.3h0M818.3 444.7h0M814 442.3h0M773.6 439.8h0M776.4 444.7h0M781.4 452.5h0M741.4 460.3h0M743 453.9h0M751.8 471h0M761.4 464.2h0M753.6 481.9h0M746.7 473.9h0M745.6 468.6h0M740.2 465.3h0M744.6 459.8h0M744.7 464h0M740.5 466.2h0M710 441h0M707.7 451.8h0M706 463h0M702.7 467h0M714.2 428.9h0M716.2 444.8h0M717.6 440.5h0M713.1 414.6h0M689.1 413.4h0M718.4 392.1h0M876 353.2h0M875 361.9h0M898 360.1h0M870.5 376.6h0M895.3 397.7h0M895.5 402.2h0M890.7 403.8h0M881.9 403.6h0M808.6 409.3h0M823.2 392.3h0M813.3 385.9h0M843.4 403h0M844.8 384.2h0M704.8 454.4h0M726.6 464.1h0M738.1 465.1h0M738.9 456.9h0M727.6 479.3h0M732.5 487.8h0M749.4 500.3h0M754.1 510.5h0M749 512.2h0M762.3 503.1h0M751.2 513.8h0M754.1 510.1h0M774.2 493.5h0M777.5 498.5h0M774.6 486.8h0M773.5 490h0M773.5 496h0M789 469.7h0M789.9 463.7h0M797.3 459.7h0M779.5 446.1h0M810.9 462.5h0M804.4 472.1h0M816.7 458.2h0M815.7 451.4h0M885 343.9h0M894.8 361.9h0M890.8 364.8h0M889.7 356.1h0M905 363.8h0M898.4 376.8h0M904.3 380.1h0M906.8 412.8h0M903.1 423.6h0M904 433.9h0M905.4 449.9h0M907.5 443.7h0M718.3 493.2h0M723.4 496.2h0M706.5 502.6h0M699.3 502.1h0M690.8 510.1h0M687.7 516.1h0M687.1 526.7h0M689.2 532.9h0M672.5 517.1h0M658.1 518.4h0M657.2 511.6h0M654.4 542h0M653.3 539.6h0M657.2 529.1h0M650.4 551.8h0M623.6 560.2h0M627.3 586.1h0M631.9 588.4h0M755.3 421.8h0M753.3 430.8h0M762.8 423.8h0M774 412.3h0M776.6 418.9h0M763.1 460.5h0M763.1 453.9h0M764.4 443.7h0M768.2 483.6h0M759.5 479.8h0M765.8 468.7h0M773.3 473.1h0M733 500.1h0M729.2 489.9h0M734.5 503.2h0M867.8 315.2h0M860.7 321.2h0M857 319.4h0M863.5 318.7h0M874.2 323.9h0M646.3 474.2h0M640 470.5h0M630 476.3h0M625.2 458.4h0M615.5 482.2h0M801.5 426.8h0M849.1 432.1h0M844.2 413.4h0M861 435.6h0M872.7 426.3h0M857.1 431.3h0M878.4 428.3h0M896.7 407.6h0M900.2 402h0M734.7 384.1h0M718.8 374.4h0M710.4 375.9h0M709.2 372h0M712.7 368.4h0M734.3 398.9h0M728.9 400.4h0M722.6 406.8h0M721.7 416.8h0M701.1 436.1h0M707.8 435.3h0M693.4 443.3h0M679.7 449.8h0M674.2 436.9h0M693.2 471.4h0M693.2 495.9h0M709 485.4h0M713.4 487.7h0M689.3 500.7h0M690.3 509.7h0M690.1 503.2h0M686 498.1h0M679.1 479.7h0M697.5 523.9h0M662.7 417h0M665.7 421.9h0M663.5 425.5h0M653.9 431.7h0M658.9 436.2h0M637.9 432h0M637.6 443.1h0M636.7 425.4h0M664.9 386.5h0M666.7 392.1h0M670.5 401.9h0M657.9 390.8h0M675.4 404.5h0M645 415.1h0M628.5 417.1h0M638.1 411.1h0M628.3 424.4h0M621 429.2h0M616.3 426h0M597.5 441.4h0M582.5 447.5h0M580.4 441.6h0M584.3 436h0M576.6 430.3h0M587.4 453h0M645.7 464.3h0M650 461.3h0M647.3 469.8h0M650 478h0M631 486.6h0M636.4 483.4h0M628 491.8h0M613.2 494.7h0M608.9 479.7h0M594.6 493.9h0M611.2 501.6h0M595.3 486.7h0M618.9 461.6h0M624.4 451.2h0M630.2 452.7h0M781.6 355.3h0M766 346.6h0M764.4 340h0M761.8 342.8h0M746.3 353.9h0M736.9 352.3h0M721.5 368.2h0M727.7 367.8h0M732.3 371.8h0M709.8 375.8h0M709.3 370.8h0M707.8 364.4h0M705.3 390.1h0M702.9 395.7h0M727.9 384.9h0M726.1 380.1h0M739.4 386.6h0M743.9 400.6h0M737 401.4h0M753.6 396.5h0M749.3 392.8h0M776.9 394.9h0M786.3 394.8h0M886.5 297.6h0M880.5 298.5h0M853.1 284.6h0M852.9 284.1h0M829.3 270.5h0M818.8 276.2h0M821.9 281.6h0M806.4 259.1h0M794.7 281h0M777.9 274.2h0M775.4 282.9h0M791.1 280h0M755.7 283.6h0M762.1 275.2h0M753 289.5h0M743.1 276.2h0M857.1 393.8h0M858 386.9h0M863.1 384.5h0M838.4 407.2h0M832 406.9h0M823.4 420h0M806.4 454h0M795.7 447.9h0M796.4 442.2h0M808 428.8h0M785.3 457.5h0M779.7 453.8h0M820.6 340.4h0M837 331.8h0M801.2 346h0M806.3 346.5h0M791.4 353.5h0M782.8 358.1h0M781.6 364.6h0M769.1 367.1h0M772.3 371.8h0M761.7 370.7h0M750.2 381h0M741.4 365.2h0M727.9 354.5h0M844.9 296.2h0M849.9 305.5h0M846.4 287.9h0M855.5 291.8h0M856.2 298.8h0M860.2 309h0M853.4 308.2h0M842.2 310.7h0M832.4 308.9h0M840.5 306h0M867.6 285.5h0M867.3 278.9h0M892.1 314.5h0M896.2 325.8h0M915.7 297.6h0M914.1 305.7h0M920.3 274.6h0M942.3 282.5h0M951.8 289.7h0M844.5 347.6h0M838.5 362.9h0M833.1 368.3h0M838.8 350.8h0M828.9 381.3h0M831.7 370.8h0M817.4 396.4h0M813.9 392.5h0M827.5 412.9h0M814.4 421.2h0M837.7 424h0M827.6 437.6h0M831.6 458.5h0M825.9 458h0M820.8 467h0M825 462.6h0M825.8 457.1h0M834 448.3h0M840.9 441.6h0M843.9 448.8h0M819.9 472.1h0M825.8 471.8h0M829.1 466.3h0M835.1 466.7h0M857.8 335.2h0M875.8 345.1h0M867.5 345.7h0M847.9 328.6h0M842.3 324.4h0M835.8 328.2h0M836.1 338h0M833 306h0M835.5 304.2h0M836.3 311h0M832.8 295.5h0M834.9 307.1h0M833.7 270.2h0M846.2 259.4h0M852.2 259.5h0M842.5 242.8h0M855.7 229h0M852.1 234.3h0M857.4 223.1h0M854.8 215.7h0M857.7 212.8h0M858.7 219.5h0M850.5 207.5h0M675.1 430.2h0M683.9 443.9h0M704.9 446.5h0M711 449.8h0M712.8 458.2h0M716.4 441.2h0M740.8 441.5h0M736.9 447.2h0M738.2 453.4h0M880.4 377.4h0M890.8 363.6h0M876.6 386.2h0M865.8 397.9h0M867.1 386.1h0M865 375.8h0M868 414.6h0M883.8 409.2h0M869.1 422.2h0M876.8 438.6h0M858.6 450.2h0M663.3 373.9h0M650.7 371.7h0M694.2 380.4h0M702.2 386.5h0M705.1 382.1h0M702.9 375.8h0M705.7 392.9h0M715.5 390.6h0M718.2 395.9h0M875.6 329.6h0M864.6 316.7h0M892.2 306.8h0M901 318.2h0M898 324.2h0M645.9 364.7h0M627.7 365.6h0M605.5 373.7h0M599.2 374.3h0M596.3 371.2h0M636.8 361.7h0M631.9 356.1h0M648.3 362.3h0M589.7 470.9h0M575.7 461.4h0M578.2 457.1h0M586.1 464.9h0M573.3 447.3h0M570.2 436.8h0M587.2 441.9h0M574.3 419.1h0M579.6 418.5h0M557.4 416.5h0M552.5 417.5h0M550.6 410.1h0M594 422h0M613.1 385.7h0M622.4 376h0M607.5 371.3h0M639.1 384h0M631.6 395.4h0M624.9 354.3h0M615.7 364.8h0M656.2 358h0M656.6 327.4h0M634.5 335.7h0M638.5 322.6h0M629.4 327.8h0M644 318.7h0M635.5 314.3h0M654 308.1h0M656.8 304.4h0M664.2 322.7h0M836.9 270.7h0M855 273.4h0M865.2 262.8h0M865.6 268.6h0M860.1 277.5h0M870.8 243.4h0M872 232.1h0M868.8 203.6h0M561.1 461.2h0M554.6 463.3h0M581.5 476.9h0M554.4 479.7h0M570.9 486.4h0M587.8 511h0M600.4 528.4h0M606.3 527.1h0M605.3 529.7h0M605.5 523h0M727.1 504h0M718.3 499.7h0M717 491.4h0M725.1 518.2h0M749.5 521.7h0M762.3 522.6h0M751.8 523.1h0M777.1 529.2h0M785.7 530.6h0M759.9 540.5h0M761 546.1h0M813.3 484.2h0M805.4 492.3h0M805.4 505.5h0M797.2 503.2h0M798.8 499.3h0M830 476.5h0M830.6 470.6h0M826 460h0M848.4 473.2h0M630.4 509h0M624.2 508.5h0M623.8 505.7h0M633.3 512h0M619.8 497.5h0M629.1 509.7h0M633.4 511.1h0M633.2 516h0M628.8 517.2h0M624.6 515.7h0M607 489h0M599.4 469.3h0M595.5 456.5h0M615.7 449h0M764.1 533h0M763.3 541.2h0M766 545h0M763.7 549.4h0M742.5 535.2h0M709.7 538.3h0M708.8 552.1h0M695.1 565.1h0M682.9 526.3h0M681.2 538.3h0M678.4 540.4h0M669.1 548.2h0M667.9 548.2h0M660.4 562.9h0M634.3 581.3h0M612.9 581.4h0M617.3 576.6h0M614 567.5h0M615.1 573.5h0M622.5 582.1h0M608.5 563h0M603.2 561.8h0M910.7 326.6h0M913.5 316.3h0M915.4 339.9h0M916.9 327.7h0M914.3 322.5h0M910.3 355.2h0M909.6 369.5h0M901.1 375.8h0M905 372.1h0M907 360.1h0M904 403.8h0M762.2 304.5h0M761.6 315.6h0M754.9 299.4h0M752.6 293.5h0M747.4 289.6h0M758.7 288.5h0M742 287h0M746.2 264h0M728.3 258.7h0M726.5 248.2h0M729.8 242.9h0M731.5 248.6h0M721 247.3h0M740.9 251.2h0M750.4 249.6h0M618.5 587.1h0M625.2 589.6h0M603.9 567.5h0M617.3 567.5h0M626.6 560.7h0M833.5 228.7h0M824.6 222.3h0M818.9 220.9h0M876.3 217.2h0M878.1 207.2h0M867 196.8h0M842.1 227.1h0M840.6 220.6h0M845.2 232.3h0M845.4 243.3h0M854 250h0M816.5 228.5h0M929.4 278.8h0M924 274.6h0M935.1 287.4h0M942.1 296.6h0M942.9 305.8h0M944.5 324.4h0M950.6 318.5h0M945.5 323h0M961.5 297.2h0M938.1 342.5h0M944.7 341.5h0M931.5 340.2h0M942.9 387.8h0M942.7 394.5h0M928.3 397.8h0M890.7 472.2h0M869.4 469.3h0M871.7 458.5h0M874.6 452.5h0M504.5 468.6h0M509.5 463.4h0M521.5 459.4h0M546.2 453.7h0M619 589.4h0M620.4 584.5h0M954.5 289.4h0M872.7 198.1h0M879.4 206.1h0M877.5 225.8h0M882.9 232.4h0M795.2 232.9h0M836 224.1h0M749 567.6h0M549.1 396.3h0M648.5 309.9h0M654.5 313.1h0M723.5 238.6h0M738.5 239.4h0M747.8 242h0M932.5 401.8h0M926.7 405.9h0M926 412.1h0"/><path stroke="#8c8c8c" stroke-width="3.200" d="M849.5 485.3h0M852.9 465.2h0M861.2 457.2h0M865.4 460.4h0M863.2 463.8h0M890 457.4h0M896 455.3h0M899.7 464h0M890.9 430.8h0M882.6 438.5h0M687.9 341.3h0M676.1 341.7h0M710.6 338.1h0M717.5 331.9h0M711.7 328h0M733.5 316.1h0M722.1 313.8h0M709.5 311.4h0M604.3 507h0M614.6 523h0M613.5 518.2h0M621.8 519.1h0M625.9 543.3h0M624.2 557.7h0M622.5 566.3h0M633.5 563.7h0M638.9 564.5h0M616.5 570.4h0M629.5 565.7h0M617.4 580.4h0M529.9 473.2h0M523.6 467.3h0M532.3 463.9h0M535.8 469.8h0M532.2 484.6h0M535.1 458.8h0M542.5 452.6h0M539.4 457.7h0M532.6 458.4h0M546.2 441.9h0M543.8 447.9h0M541.3 429.5h0M695.5 345.9h0M707.7 348.3h0M693.8 368.5h0M679.8 357.3h0M665.9 350.5h0M660.1 349.8h0M646.3 328.3h0M647.9 331.5h0M652.6 326.4h0M659.3 328.2h0M621.9 333.9h0M617.8 329.5h0M626.7 349.5h0M615.7 354.1h0M608.7 359.8h0M605.4 353.7h0M610.6 365.6h0M604.4 366.5h0M597.2 365.3h0M594.1 370.9h0M599.8 351.3h0M588.9 385.4h0M546.6 418.7h0M546.6 411.4h0M550.2 414.7h0M545 417.4h0M543.3 423.4h0M563.5 405.5h0M547.4 413.3h0M563.8 393.6h0M580.8 392.9h0M903.5 276h0M912.3 286.3h0M907.1 290h0M929.5 287.4h0M932.9 293.8h0M933.3 289.3h0M933.5 309h0M934.1 302.1h0M938.5 297.4h0M938.9 292.2h0M930.4 321.8h0M929 337.2h0M934.1 327.3h0M905 339.1h0M928 358.9h0M809.5 525.7h0M776.7 544.7h0M761.5 554.5h0M743.4 558.1h0M752.3 541h0M733.8 522.6h0M571.3 375.5h0M567.1 370.1h0M581.2 383.9h0M594 384.8h0M590.9 378.4h0M612.8 367.9h0M618.6 377.6h0M621.2 390.9h0M604.4 355.5h0M615 350.3h0M778.4 248.6h0M763.5 255.9h0M758.1 267h0M937.2 369.9h0M931.2 374.2h0M929.2 369.1h0M921.1 382.6h0M936.4 364h0M943.5 376.3h0M941.8 371.9h0M941.1 358.5h0M922.9 345.8h0M936.2 356.1h0M940.2 358.4h0M935.1 364.7h0M931.1 361.8h0M803 506h0M794.8 493h0M799.8 493.1h0M809.8 507.1h0M799.7 518.4h0M790.8 485h0M831.9 487.7h0M825.9 488.5h0M840.1 479.3h0M838.1 492.5h0M843.2 491.1h0M836.2 503.5h0M842.3 494.7h0M682.3 392.3h0M684.3 386.8h0M682.4 381.8h0M687.2 405.2h0M686.9 413.8h0M692.4 410.5h0M694.2 405.4h0M699.1 403.6h0M682 416.8h0M675.8 425.7h0M699.5 403.2h0M666.9 454.6h0M685.5 483.6h0M663.8 486h0M659.6 502.7h0M652.6 505.3h0M662.8 500.2h0M646.8 502.8h0M790.3 338.5h0M798.7 360.2h0M785.1 349.7h0M802.2 384.7h0M804.5 394.7h0M814.9 298.2h0M818.3 302.4h0M818.8 316.2h0M782.5 287.7h0M787.8 289.1h0M768.9 284.7h0M764.7 279.4h0M769.6 313.4h0M759.3 328.4h0M728 338.9h0M823.8 342.1h0M822.9 336.6h0M829.8 344.6h0M837.8 352.5h0M828.8 359.2h0M832.7 367.1h0M825.9 367.1h0M846.6 377.6h0M853.7 370h0M832.6 371.6h0M844.8 398.3h0M861 390h0M611.2 428.3h0M604 420.4h0M595.4 426h0M614.7 401.5h0M622.6 408.2h0M620.3 393.1h0M628.4 400.8h0M646.1 401.3h0M641.4 392.6h0M645.4 386.1h0M651.3 427h0M654 421.8h0M659.8 419h0M636.7 436.2h0M627 441.2h0M636.1 451.2h0M640.7 454.1h0M643.7 448h0M648.8 445.4h0M729.4 428.6h0M731.3 418.8h0M739.3 422.3h0M754.8 406.4h0M770.3 399.8h0M779.4 391.8h0M780.3 397.3h0M786.7 399.3h0M760.8 374.7h0M753.4 367.3h0M759.4 370.8h0M765.5 370.1h0M799 379.4h0M805.2 381.8h0M806 387.3h0M798 373.5h0M804.3 363.2h0M790.3 355.8h0M809.6 366.2h0M809.4 358.5h0M813.5 373.9h0M809.2 348.6h0M806.9 338.5h0M831.6 335.8h0M799.7 321h0M810.1 301.3h0M804.7 304h0M802 309h0M795.8 311.4h0M793 316.3h0M786.9 318.3h0M664.2 467.7h0M664 474.7h0M643.4 484.2h0M635.4 493.9h0M639.2 504.9h0M643.6 514.6h0M791.2 436.4h0M802.4 437.6h0M822.6 442.3h0M818.3 444.7h0M814 442.3h0M773.6 439.8h0M776.4 444.7h0M781.4 452.5h0M741.4 460.3h0M743 453.9h0M751.8 471h0M761.4 464.2h0M753.6 481.9h0M746.7 473.9h0M745.6 468.6h0M740.2 465.3h0M744.6 459.8h0M744.7 464h0M740.5 466.2h0M710 441h0M707.7 451.8h0M706 463h0M702.7 467h0M714.2 428.9h0M716.2 444.8h0M717.6 440.5h0M713.1 414.6h0M689.1 413.4h0M718.4 392.1h0M876 353.2h0M875 361.9h0M898 360.1h0M870.5 376.6h0M895.3 397.7h0M895.5 402.2h0M890.7 403.8h0M881.9 403.6h0M808.6 409.3h0M823.2 392.3h0M813.3 385.9h0M843.4 403h0M844.8 384.2h0M704.8 454.4h0M726.6 464.1h0M738.1 465.1h0M738.9 456.9h0M727.6 479.3h0M732.5 487.8h0M749.4 500.3h0M754.1 510.5h0M749 512.2h0M762.3 503.1h0M751.2 513.8h0M754.1 510.1h0M774.2 493.5h0M777.5 498.5h0M774.6 486.8h0M773.5 490h0M773.5 496h0M789 469.7h0M789.9 463.7h0M797.3 459.7h0M779.5 446.1h0M810.9 462.5h0M804.4 472.1h0M816.7 458.2h0M815.7 451.4h0M885 343.9h0M894.8 361.9h0M890.8 364.8h0M889.7 356.1h0M905 363.8h0M898.4 376.8h0M904.3 380.1h0M906.8 412.8h0M903.1 423.6h0M904 433.9h0M905.4 449.9h0M907.5 443.7h0M718.3 493.2h0M723.4 496.2h0M706.5 502.6h0M699.3 502.1h0M690.8 510.1h0M687.7 516.1h0M687.1 526.7h0M689.2 532.9h0M672.5 517.1h0M658.1 518.4h0M657.2 511.6h0M654.4 542h0M653.3 539.6h0M657.2 529.1h0M650.4 551.8h0M623.6 560.2h0M627.3 586.1h0M631.9 588.4h0M755.3 421.8h0M753.3 430.8h0M762.8 423.8h0M774 412.3h0M776.6 418.9h0M763.1 460.5h0M763.1 453.9h0M764.4 443.7h0M768.2 483.6h0M759.5 479.8h0M765.8 468.7h0M773.3 473.1h0M733 500.1h0M729.2 489.9h0M734.5 503.2h0M867.8 315.2h0M860.7 321.2h0M857 319.4h0M863.5 318.7h0M874.2 323.9h0M646.3 474.2h0M640 470.5h0M630 476.3h0M625.2 458.4h0M615.5 482.2h0M801.5 426.8h0M849.1 432.1h0M844.2 413.4h0M861 435.6h0M872.7 426.3h0M857.1 431.3h0M878.4 428.3h0M896.7 407.6h0M900.2 402h0M734.7 384.1h0M718.8 374.4h0M710.4 375.9h0M709.2 372h0M712.7 368.4h0M734.3 398.9h0M728.9 400.4h0M722.6 406.8h0M721.7 416.8h0M701.1 436.1h0M707.8 435.3h0M693.4 443.3h0M679.7 449.8h0M674.2 436.9h0M693.2 471.4h0M693.2 495.9h0M709 485.4h0M713.4 487.7h0M689.3 500.7h0M690.3 509.7h0M690.1 503.2h0M686 498.1h0M679.1 479.7h0M697.5 523.9h0M662.7 417h0M665.7 421.9h0M663.5 425.5h0M653.9 431.7h0M658.9 436.2h0M637.9 432h0M637.6 443.1h0M636.7 425.4h0M664.9 386.5h0M666.7 392.1h0M670.5 401.9h0M657.9 390.8h0M675.4 404.5h0M645 415.1h0M628.5 417.1h0M638.1 411.1h0M628.3 424.4h0M621 429.2h0M616.3 426h0M597.5 441.4h0M582.5 447.5h0M580.4 441.6h0M584.3 436h0M576.6 430.3h0M587.4 453h0M645.7 464.3h0M650 461.3h0M647.3 469.8h0M650 478h0M631 486.6h0M636.4 483.4h0M628 491.8h0M613.2 494.7h0M608.9 479.7h0M594.6 493.9h0M611.2 501.6h0M595.3 486.7h0M618.9 461.6h0M624.4 451.2h0M630.2 452.7h0M781.6 355.3h0M766 346.6h0M764.4 340h0M761.8 342.8h0M746.3 353.9h0M736.9 352.3h0M721.5 368.2h0M727.7 367.8h0M732.3 371.8h0M709.8 375.8h0M709.3 370.8h0M707.8 364.4h0M705.3 390.1h0M702.9 395.7h0M727.9 384.9h0M726.1 380.1h0M739.4 386.6h0M743.9 400.6h0M737 401.4h0M753.6 396.5h0M749.3 392.8h0M776.9 394.9h0M786.3 394.8h0M886.5 297.6h0M880.5 298.5h0M853.1 284.6h0M852.9 284.1h0M829.3 270.5h0M818.8 276.2h0M821.9 281.6h0M806.4 259.1h0M794.7 281h0M777.9 274.2h0M775.4 282.9h0M791.1 280h0M755.7 283.6h0M762.1 275.2h0M753 289.5h0M743.1 276.2h0M857.1 393.8h0M858 386.9h0M863.1 384.5h0M838.4 407.2h0M832 406.9h0M823.4 420h0M806.4 454h0M795.7 447.9h0M796.4 442.2h0M808 428.8h0M785.3 457.5h0M779.7 453.8h0M820.6 340.4h0M837 331.8h0M801.2 346h0M806.3 346.5h0M791.4 353.5h0M782.8 358.1h0M781.6 364.6h0M769.1 367.1h0M772.3 371.8h0M761.7 370.7h0M750.2 381h0M741.4 365.2h0M727.9 354.5h0M844.9 296.2h0M849.9 305.5h0M846.4 287.9h0M855.5 291.8h0M856.2 298.8h0M860.2 309h0M853.4 308.2h0M842.2 310.7h0M832.4 308.9h0M840.5 306h0M867.6 285.5h0M867.3 278.9h0M892.1 314.5h0M896.2 325.8h0M915.7 297.6h0M914.1 305.7h0M920.3 274.6h0M942.3 282.5h0M951.8 289.7h0M844.5 347.6h0M838.5 362.9h0M833.1 368.3h0M838.8 350.8h0M828.9 381.3h0M831.7 370.8h0M817.4 396.4h0M813.9 392.5h0M827.5 412.9h0M814.4 421.2h0M837.7 424h0M827.6 437.6h0M831.6 458.5h0M825.9 458h0M820.8 467h0M825 462.6h0M825.8 457.1h0M834 448.3h0M840.9 441.6h0M843.9 448.8h0M819.9 472.1h0M825.8 471.8h0M829.1 466.3h0M835.1 466.7h0M857.8 335.2h0M875.8 345.1h0M867.5 345.7h0M847.9 328.6h0M842.3 324.4h0M835.8 328.2h0M836.1 338h0M833 306h0M835.5 304.2h0M836.3 311h0M832.8 295.5h0M834.9 307.1h0M833.7 270.2h0M846.2 259.4h0M852.2 259.5h0M842.5 242.8h0M855.7 229h0M852.1 234.3h0M857.4 223.1h0M854.8 215.7h0M857.7 212.8h0M858.7 219.5h0M850.5 207.5h0M675.1 430.2h0M683.9 443.9h0M704.9 446.5h0M711 449.8h0M712.8 458.2h0M716.4 441.2h0M740.8 441.5h0M736.9 447.2h0M738.2 453.4h0M880.4 377.4h0M890.8 363.6h0M876.6 386.2h0M865.8 397.9h0M867.1 386.1h0M865 375.8h0M868 414.6h0M883.8 409.2h0M869.1 422.2h0M876.8 438.6h0M858.6 450.2h0M663.3 373.9h0M650.7 371.7h0M694.2 380.4h0M702.2 386.5h0M705.1 382.1h0M702.9 375.8h0M705.7 392.9h0M715.5 390.6h0M718.2 395.9h0M875.6 329.6h0M864.6 316.7h0M892.2 306.8h0M901 318.2h0M898 324.2h0M645.9 364.7h0M627.7 365.6h0M605.5 373.7h0M599.2 374.3h0M596.3 371.2h0M636.8 361.7h0M631.9 356.1h0M648.3 362.3h0M589.7 470.9h0M575.7 461.4h0M578.2 457.1h0M586.1 464.9h0M573.3 447.3h0M570.2 436.8h0M587.2 441.9h0M574.3 419.1h0M579.6 418.5h0M557.4 416.5h0M552.5 417.5h0M550.6 410.1h0M594 422h0M613.1 385.7h0M622.4 376h0M607.5 371.3h0M639.1 384h0M631.6 395.4h0M624.9 354.3h0M615.7 364.8h0M656.2 358h0M656.6 327.4h0M634.5 335.7h0M638.5 322.6h0M629.4 327.8h0M644 318.7h0M635.5 314.3h0M654 308.1h0M656.8 304.4h0M664.2 322.7h0M836.9 270.7h0M855 273.4h0M865.2 262.8h0M865.6 268.6h0M860.1 277.5h0M870.8 243.4h0M872 232.1h0M868.8 203.6h0M561.1 461.2h0M554.6 463.3h0M581.5 476.9h0M554.4 479.7h0M570.9 486.4h0M587.8 511h0M600.4 528.4h0M606.3 527.1h0M605.3 529.7h0M605.5 523h0M727.1 504h0M718.3 499.7h0M717 491.4h0M725.1 518.2h0M749.5 521.7h0M762.3 522.6h0M751.8 523.1h0M777.1 529.2h0M785.7 530.6h0M759.9 540.5h0M761 546.1h0M813.3 484.2h0M805.4 492.3h0M805.4 505.5h0M797.2 503.2h0M798.8 499.3h0M830 476.5h0M830.6 470.6h0M826 460h0M848.4 473.2h0M630.4 509h0M624.2 508.5h0M623.8 505.7h0M633.3 512h0M619.8 497.5h0M629.1 509.7h0M633.4 511.1h0M633.2 516h0M628.8 517.2h0M624.6 515.7h0M607 489h0M599.4 469.3h0M595.5 456.5h0M615.7 449h0M764.1 533h0M763.3 541.2h0M766 545h0M763.7 549.4h0M742.5 535.2h0M709.7 538.3h0M708.8 552.1h0M695.1 565.1h0M682.9 526.3h0M681.2 538.3h0M678.4 540.4h0M669.1 548.2h0M667.9 548.2h0M660.4 562.9h0M634.3 581.3h0M612.9 581.4h0M617.3 576.6h0M614 567.5h0M615.1 573.5h0M622.5 582.1h0M608.5 563h0M603.2 561.8h0M910.7 326.6h0M913.5 316.3h0M915.4 339.9h0M916.9 327.7h0M914.3 322.5h0M910.3 355.2h0M909.6 369.5h0M901.1 375.8h0M905 372.1h0M907 360.1h0M904 403.8h0M762.2 304.5h0M761.6 315.6h0M754.9 299.4h0M752.6 293.5h0M747.4 289.6h0M758.7 288.5h0M742 287h0M746.2 264h0M728.3 258.7h0M726.5 248.2h0M729.8 242.9h0M731.5 248.6h0M721 247.3h0M740.9 251.2h0M750.4 249.6h0M618.5 587.1h0M625.2 589.6h0M603.9 567.5h0M617.3 567.5h0M626.6 560.7h0M833.5 228.7h0M824.6 222.3h0M818.9 220.9h0M876.3 217.2h0M878.1 207.2h0M867 196.8h0M842.1 227.1h0M840.6 220.6h0M845.2 232.3h0M845.4 243.3h0M854 250h0M816.5 228.5h0M929.4 278.8h0M924 274.6h0M935.1 287.4h0M942.1 296.6h0M942.9 305.8h0M944.5 324.4h0M950.6 318.5h0M945.5 323h0M961.5 297.2h0M938.1 342.5h0M944.7 341.5h0M931.5 340.2h0M942.9 387.8h0M942.7 394.5h0M928.3 397.8h0M890.7 472.2h0M869.4 469.3h0M871.7 458.5h0M874.6 452.5h0M504.5 468.6h0M509.5 463.4h0M521.5 459.4h0M546.2 453.7h0M619 589.4h0M620.4 584.5h0M954.5 289.4h0M872.7 198.1h0M879.4 206.1h0M877.5 225.8h0M882.9 232.4h0M795.2 232.9h0M836 224.1h0M749 567.6h0M549.1 396.3h0M648.5 309.9h0M654.5 313.1h0M723.5 238.6h0M738.5 239.4h0M747.8 242h0M932.5 401.8h0M926.7 405.9h0M926 412.1h0"/><path stroke="#b4b4b4" stroke-width="1.800" d="M849.5 485.3h0M852.9 465.2h0M861.2 457.2h0M865.4 460.4h0M863.2 463.8h0M890 457.4h0M896 455.3h0M899.7 464h0M890.9 430.8h0M882.6 438.5h0M687.9 341.3h0M676.1 341.7h0M710.6 338.1h0M717.5 331.9h0M711.7 328h0M733.5 316.1h0M722.1 313.8h0M709.5 311.4h0M604.3 507h0M614.6 523h0M613.5 518.2h0M621.8 519.1h0M625.9 543.3h0M624.2 557.7h0M622.5 566.3h0M633.5 563.7h0M638.9 564.5h0M616.5 570.4h0M629.5 565.7h0M617.4 580.4h0M529.9 473.2h0M523.6 467.3h0M532.3 463.9h0M535.8 469.8h0M532.2 484.6h0M535.1 458.8h0M542.5 452.6h0M539.4 457.7h0M532.6 458.4h0M546.2 441.9h0M543.8 447.9h0M541.3 429.5h0M695.5 345.9h0M707.7 348.3h0M693.8 368.5h0M679.8 357.3h0M665.9 350.5h0M660.1 349.8h0M646.3 328.3h0M647.9 331.5h0M652.6 326.4h0M659.3 328.2h0M621.9 333.9h0M617.8 329.5h0M626.7 349.5h0M615.7 354.1h0M608.7 359.8h0M605.4 353.7h0M610.6 365.6h0M604.4 366.5h0M597.2 365.3h0M594.1 370.9h0M599.8 351.3h0M588.9 385.4h0M546.6 418.7h0M546.6 411.4h0M550.2 414.7h0M545 417.4h0M543.3 423.4h0M563.5 405.5h0M547.4 413.3h0M563.8 393.6h0M580.8 392.9h0M903.5 276h0M912.3 286.3h0M907.1 290h0M929.5 287.4h0M932.9 293.8h0M933.3 289.3h0M933.5 309h0M934.1 302.1h0M938.5 297.4h0M938.9 292.2h0M930.4 321.8h0M929 337.2h0M934.1 327.3h0M905 339.1h0M928 358.9h0M809.5 525.7h0M776.7 544.7h0M761.5 554.5h0M743.4 558.1h0M752.3 541h0M733.8 522.6h0M571.3 375.5h0M567.1 370.1h0M581.2 383.9h0M594 384.8h0M590.9 378.4h0M612.8 367.9h0M618.6 377.6h0M621.2 390.9h0M604.4 355.5h0M615 350.3h0M778.4 248.6h0M763.5 255.9h0M758.1 267h0M937.2 369.9h0M931.2 374.2h0M929.2 369.1h0M921.1 382.6h0M936.4 364h0M943.5 376.3h0M941.8 371.9h0M941.1 358.5h0M922.9 345.8h0M936.2 356.1h0M940.2 358.4h0M935.1 364.7h0M931.1 361.8h0M803 506h0M794.8 493h0M799.8 493.1h0M809.8 507.1h0M799.7 518.4h0M790.8 485h0M831.9 487.7h0M825.9 488.5h0M840.1 479.3h0M838.1 492.5h0M843.2 491.1h0M836.2 503.5h0M842.3 494.7h0M682.3 392.3h0M684.3 386.8h0M682.4 381.8h0M687.2 405.2h0M686.9 413.8h0M692.4 410.5h0M694.2 405.4h0M699.1 403.6h0M682 416.8h0M675.8 425.7h0M699.5 403.2h0M666.9 454.6h0M685.5 483.6h0M663.8 486h0M659.6 502.7h0M652.6 505.3h0M662.8 500.2h0M646.8 502.8h0M790.3 338.5h0M798.7 360.2h0M785.1 349.7h0M802.2 384.7h0M804.5 394.7h0M814.9 298.2h0M818.3 302.4h0M818.8 316.2h0M782.5 287.7h0M787.8 289.1h0M768.9 284.7h0M764.7 279.4h0M769.6 313.4h0M759.3 328.4h0M728 338.9h0M823.8 342.1h0M822.9 336.6h0M829.8 344.6h0M837.8 352.5h0M828.8 359.2h0M832.7 367.1h0M825.9 367.1h0M846.6 377.6h0M853.7 370h0M832.6 371.6h0M844.8 398.3h0M861 390h0M611.2 428.3h0M604 420.4h0M595.4 426h0M614.7 401.5h0M622.6 408.2h0M620.3 393.1h0M628.4 400.8h0M646.1 401.3h0M641.4 392.6h0M645.4 386.1h0M651.3 427h0M654 421.8h0M659.8 419h0M636.7 436.2h0M627 441.2h0M636.1 451.2h0M640.7 454.1h0M643.7 448h0M648.8 445.4h0M729.4 428.6h0M731.3 418.8h0M739.3 422.3h0M754.8 406.4h0M770.3 399.8h0M779.4 391.8h0M780.3 397.3h0M786.7 399.3h0M760.8 374.7h0M753.4 367.3h0M759.4 370.8h0M765.5 370.1h0M799 379.4h0M805.2 381.8h0M806 387.3h0M798 373.5h0M804.3 363.2h0M790.3 355.8h0M809.6 366.2h0M809.4 358.5h0M813.5 373.9h0M809.2 348.6h0M806.9 338.5h0M831.6 335.8h0M799.7 321h0M810.1 301.3h0M804.7 304h0M802 309h0M795.8 311.4h0M793 316.3h0M786.9 318.3h0M664.2 467.7h0M664 474.7h0M643.4 484.2h0M635.4 493.9h0M639.2 504.9h0M643.6 514.6h0M791.2 436.4h0M802.4 437.6h0M822.6 442.3h0M818.3 444.7h0M814 442.3h0M773.6 439.8h0M776.4 444.7h0M781.4 452.5h0M741.4 460.3h0M743 453.9h0M751.8 471h0M761.4 464.2h0M753.6 481.9h0M746.7 473.9h0M745.6 468.6h0M740.2 465.3h0M744.6 459.8h0M744.7 464h0M740.5 466.2h0M710 441h0M707.7 451.8h0M706 463h0M702.7 467h0M714.2 428.9h0M716.2 444.8h0M717.6 440.5h0M713.1 414.6h0M689.1 413.4h0M718.4 392.1h0M876 353.2h0M875 361.9h0M898 360.1h0M870.5 376.6h0M895.3 397.7h0M895.5 402.2h0M890.7 403.8h0M881.9 403.6h0M808.6 409.3h0M823.2 392.3h0M813.3 385.9h0M843.4 403h0M844.8 384.2h0M704.8 454.4h0M726.6 464.1h0M738.1 465.1h0M738.9 456.9h0M727.6 479.3h0M732.5 487.8h0M749.4 500.3h0M754.1 510.5h0M749 512.2h0M762.3 503.1h0M751.2 513.8h0M754.1 510.1h0M774.2 493.5h0M777.5 498.5h0M774.6 486.8h0M773.5 490h0M773.5 496h0M789 469.7h0M789.9 463.7h0M797.3 459.7h0M779.5 446.1h0M810.9 462.5h0M804.4 472.1h0M816.7 458.2h0M815.7 451.4h0M885 343.9h0M894.8 361.9h0M890.8 364.8h0M889.7 356.1h0M905 363.8h0M898.4 376.8h0M904.3 380.1h0M906.8 412.8h0M903.1 423.6h0M904 433.9h0M905.4 449.9h0M907.5 443.7h0M718.3 493.2h0M723.4 496.2h0M706.5 502.6h0M699.3 502.1h0M690.8 510.1h0M687.7 516.1h0M687.1 526.7h0M689.2 532.9h0M672.5 517.1h0M658.1 518.4h0M657.2 511.6h0M654.4 542h0M653.3 539.6h0M657.2 529.1h0M650.4 551.8h0M623.6 560.2h0M627.3 586.1h0M631.9 588.4h0M755.3 421.8h0M753.3 430.8h0M762.8 423.8h0M774 412.3h0M776.6 418.9h0M763.1 460.5h0M763.1 453.9h0M764.4 443.7h0M768.2 483.6h0M759.5 479.8h0M765.8 468.7h0M773.3 473.1h0M733 500.1h0M729.2 489.9h0M734.5 503.2h0M867.8 315.2h0M860.7 321.2h0M857 319.4h0M863.5 318.7h0M874.2 323.9h0M646.3 474.2h0M640 470.5h0M630 476.3h0M625.2 458.4h0M615.5 482.2h0M801.5 426.8h0M849.1 432.1h0M844.2 413.4h0M861 435.6h0M872.7 426.3h0M857.1 431.3h0M878.4 428.3h0M896.7 407.6h0M900.2 402h0M734.7 384.1h0M718.8 374.4h0M710.4 375.9h0M709.2 372h0M712.7 368.4h0M734.3 398.9h0M728.9 400.4h0M722.6 406.8h0M721.7 416.8h0M701.1 436.1h0M707.8 435.3h0M693.4 443.3h0M679.7 449.8h0M674.2 436.9h0M693.2 471.4h0M693.2 495.9h0M709 485.4h0M713.4 487.7h0M689.3 500.7h0M690.3 509.7h0M690.1 503.2h0M686 498.1h0M679.1 479.7h0M697.5 523.9h0M662.7 417h0M665.7 421.9h0M663.5 425.5h0M653.9 431.7h0M658.9 436.2h0M637.9 432h0M637.6 443.1h0M636.7 425.4h0M664.9 386.5h0M666.7 392.1h0M670.5 401.9h0M657.9 390.8h0M675.4 404.5h0M645 415.1h0M628.5 417.1h0M638.1 411.1h0M628.3 424.4h0M621 429.2h0M616.3 426h0M597.5 441.4h0M582.5 447.5h0M580.4 441.6h0M584.3 436h0M576.6 430.3h0M587.4 453h0M645.7 464.3h0M650 461.3h0M647.3 469.8h0M650 478h0M631 486.6h0M636.4 483.4h0M628 491.8h0M613.2 494.7h0M608.9 479.7h0M594.6 493.9h0M611.2 501.6h0M595.3 486.7h0M618.9 461.6h0M624.4 451.2h0M630.2 452.7h0M781.6 355.3h0M766 346.6h0M764.4 340h0M761.8 342.8h0M746.3 353.9h0M736.9 352.3h0M721.5 368.2h0M727.7 367.8h0M732.3 371.8h0M709.8 375.8h0M709.3 370.8h0M707.8 364.4h0M705.3 390.1h0M702.9 395.7h0M727.9 384.9h0M726.1 380.1h0M739.4 386.6h0M743.9 400.6h0M737 401.4h0M753.6 396.5h0M749.3 392.8h0M776.9 394.9h0M786.3 394.8h0M886.5 297.6h0M880.5 298.5h0M853.1 284.6h0M852.9 284.1h0M829.3 270.5h0M818.8 276.2h0M821.9 281.6h0M806.4 259.1h0M794.7 281h0M777.9 274.2h0M775.4 282.9h0M791.1 280h0M755.7 283.6h0M762.1 275.2h0M753 289.5h0M743.1 276.2h0M857.1 393.8h0M858 386.9h0M863.1 384.5h0M838.4 407.2h0M832 406.9h0M823.4 420h0M806.4 454h0M795.7 447.9h0M796.4 442.2h0M808 428.8h0M785.3 457.5h0M779.7 453.8h0M820.6 340.4h0M837 331.8h0M801.2 346h0M806.3 346.5h0M791.4 353.5h0M782.8 358.1h0M781.6 364.6h0M769.1 367.1h0M772.3 371.8h0M761.7 370.7h0M750.2 381h0M741.4 365.2h0M727.9 354.5h0M844.9 296.2h0M849.9 305.5h0M846.4 287.9h0M855.5 291.8h0M856.2 298.8h0M860.2 309h0M853.4 308.2h0M842.2 310.7h0M832.4 308.9h0M840.5 306h0M867.6 285.5h0M867.3 278.9h0M892.1 314.5h0M896.2 325.8h0M915.7 297.6h0M914.1 305.7h0M920.3 274.6h0M942.3 282.5h0M951.8 289.7h0M844.5 347.6h0M838.5 362.9h0M833.1 368.3h0M838.8 350.8h0M828.9 381.3h0M831.7 370.8h0M817.4 396.4h0M813.9 392.5h0M827.5 412.9h0M814.4 421.2h0M837.7 424h0M827.6 437.6h0M831.6 458.5h0M825.9 458h0M820.8 467h0M825 462.6h0M825.8 457.1h0M834 448.3h0M840.9 441.6h0M843.9 448.8h0M819.9 472.1h0M825.8 471.8h0M829.1 466.3h0M835.1 466.7h0M857.8 335.2h0M875.8 345.1h0M867.5 345.7h0M847.9 328.6h0M842.3 324.4h0M835.8 328.2h0M836.1 338h0M833 306h0M835.5 304.2h0M836.3 311h0M832.8 295.5h0M834.9 307.1h0M833.7 270.2h0M846.2 259.4h0M852.2 259.5h0M842.5 242.8h0M855.7 229h0M852.1 234.3h0M857.4 223.1h0M854.8 215.7h0M857.7 212.8h0M858.7 219.5h0M850.5 207.5h0M675.1 430.2h0M683.9 443.9h0M704.9 446.5h0M711 449.8h0M712.8 458.2h0M716.4 441.2h0M740.8 441.5h0M736.9 447.2h0M738.2 453.4h0M880.4 377.4h0M890.8 363.6h0M876.6 386.2h0M865.8 397.9h0M867.1 386.1h0M865 375.8h0M868 414.6h0M883.8 409.2h0M869.1 422.2h0M876.8 438.6h0M858.6 450.2h0M663.3 373.9h0M650.7 371.7h0M694.2 380.4h0M702.2 386.5h0M705.1 382.1h0M702.9 375.8h0M705.7 392.9h0M715.5 390.6h0M718.2 395.9h0M875.6 329.6h0M864.6 316.7h0M892.2 306.8h0M901 318.2h0M898 324.2h0M645.9 364.7h0M627.7 365.6h0M605.5 373.7h0M599.2 374.3h0M596.3 371.2h0M636.8 361.7h0M631.9 356.1h0M648.3 362.3h0M589.7 470.9h0M575.7 461.4h0M578.2 457.1h0M586.1 464.9h0M573.3 447.3h0M570.2 436.8h0M587.2 441.9h0M574.3 419.1h0M579.6 418.5h0M557.4 416.5h0M552.5 417.5h0M550.6 410.1h0M594 422h0M613.1 385.7h0M622.4 376h0M607.5 371.3h0M639.1 384h0M631.6 395.4h0M624.9 354.3h0M615.7 364.8h0M656.2 358h0M656.6 327.4h0M634.5 335.7h0M638.5 322.6h0M629.4 327.8h0M644 318.7h0M635.5 314.3h0M654 308.1h0M656.8 304.4h0M664.2 322.7h0M836.9 270.7h0M855 273.4h0M865.2 262.8h0M865.6 268.6h0M860.1 277.5h0M870.8 243.4h0M872 232.1h0M868.8 203.6h0M561.1 461.2h0M554.6 463.3h0M581.5 476.9h0M554.4 479.7h0M570.9 486.4h0M587.8 511h0M600.4 528.4h0M606.3 527.1h0M605.3 529.7h0M605.5 523h0M727.1 504h0M718.3 499.7h0M717 491.4h0M725.1 518.2h0M749.5 521.7h0M762.3 522.6h0M751.8 523.1h0M777.1 529.2h0M785.7 530.6h0M759.9 540.5h0M761 546.1h0M813.3 484.2h0M805.4 492.3h0M805.4 505.5h0M797.2 503.2h0M798.8 499.3h0M830 476.5h0M830.6 470.6h0M826 460h0M848.4 473.2h0M630.4 509h0M624.2 508.5h0M623.8 505.7h0M633.3 512h0M619.8 497.5h0M629.1 509.7h0M633.4 511.1h0M633.2 516h0M628.8 517.2h0M624.6 515.7h0M607 489h0M599.4 469.3h0M595.5 456.5h0M615.7 449h0M764.1 533h0M763.3 541.2h0M766 545h0M763.7 549.4h0M742.5 535.2h0M709.7 538.3h0M708.8 552.1h0M695.1 565.1h0M682.9 526.3h0M681.2 538.3h0M678.4 540.4h0M669.1 548.2h0M667.9 548.2h0M660.4 562.9h0M634.3 581.3h0M612.9 581.4h0M617.3 576.6h0M614 567.5h0M615.1 573.5h0M622.5 582.1h0M608.5 563h0M603.2 561.8h0M910.7 326.6h0M913.5 316.3h0M915.4 339.9h0M916.9 327.7h0M914.3 322.5h0M910.3 355.2h0M909.6 369.5h0M901.1 375.8h0M905 372.1h0M907 360.1h0M904 403.8h0M762.2 304.5h0M761.6 315.6h0M754.9 299.4h0M752.6 293.5h0M747.4 289.6h0M758.7 288.5h0M742 287h0M746.2 264h0M728.3 258.7h0M726.5 248.2h0M729.8 242.9h0M731.5 248.6h0M721 247.3h0M740.9 251.2h0M750.4 249.6h0M618.5 587.1h0M625.2 589.6h0M603.9 567.5h0M617.3 567.5h0M626.6 560.7h0M833.5 228.7h0M824.6 222.3h0M818.9 220.9h0M876.3 217.2h0M878.1 207.2h0M867 196.8h0M842.1 227.1h0M840.6 220.6h0M845.2 232.3h0M845.4 243.3h0M854 250h0M816.5 228.5h0M929.4 278.8h0M924 274.6h0M935.1 287.4h0M942.1 296.6h0M942.9 305.8h0M944.5 324.4h0M950.6 318.5h0M945.5 323h0M961.5 297.2h0M938.1 342.5h0M944.7 341.5h0M931.5 340.2h0M942.9 387.8h0M942.7 394.5h0M928.3 397.8h0M890.7 472.2h0M869.4 469.3h0M871.7 458.5h0M874.6 452.5h0M504.5 468.6h0M509.5 463.4h0M521.5 459.4h0M546.2 453.7h0M619 589.4h0M620.4 584.5h0M954.5 289.4h0M872.7 198.1h0M879.4 206.1h0M877.5 225.8h0M882.9 232.4h0M795.2 232.9h0M836 224.1h0M749 567.6h0M549.1 396.3h0M648.5 309.9h0M654.5 313.1h0M723.5 238.6h0M738.5 239.4h0M747.8 242h0M932.5 401.8h0M926.7 405.9h0M926 412.1h0" transform="translate(-0.3,-0.3)"/><path stroke="#a30808" stroke-width="4.100" d="M854 480.3h0M861 456.9h0M870 458.8h0M867.2 443.1h0M875.7 439.4h0M697.6 352.1h0M718.7 338.5h0M739.1 319.6h0M608.4 509.4h0M611.4 524.1h0M628.8 525.6h0M615 564.9h0M528.2 480.4h0M519.4 480.4h0M528 484.1h0M530 464.6h0M548.3 430h0M690.7 346.5h0M699.4 355.5h0M662.3 342.2h0M630.4 346h0M615.2 362.2h0M536.2 417.5h0M562 398.7h0M576.9 397.6h0M927.1 310.1h0M938.6 310.6h0M927.4 343.4h0M923.9 355.3h0M798.3 527.4h0M793.8 534.2h0M782.5 543.3h0M760.6 561.3h0M566.8 377.1h0M600.2 363.5h0M804.4 252.4h0M810.6 254.1h0M794.8 243.4h0M936.2 377.7h0M922.1 387.2h0M929.2 358.9h0M807.2 511.8h0M811.7 500.8h0M830 480.7h0M835.7 485.4h0M844.2 488.8h0M680.1 372.3h0M681.3 429.3h0M669.2 439h0M679.5 451.7h0M797 338h0M795.9 388.3h0M794.5 374.8h0M792.8 299.6h0M779.2 282.3h0M784.5 308.9h0M767.8 308.5h0M770.3 293.5h0M845.8 393.5h0M860.2 408.3h0M608.9 432.9h0M632.8 395h0M636 430.5h0M653.1 448.2h0M629.2 457.2h0M726.1 417h0M734.6 411.3h0M768 405.4h0M780.1 381.3h0M749.5 373.4h0M806.4 381.1h0M813.7 337.6h0M803.9 299.6h0M672.7 447.3h0M669.8 472.9h0M649.8 483.9h0M650.2 521.3h0M785.3 439.2h0M709.4 419h0M686 416.7h0M722.6 405.6h0M874.4 400.4h0M886.4 394.8h0M879.5 417.9h0M786.9 410.5h0M852.2 385.1h0M778.8 508.8h0M776.9 513.9h0M797.6 489.9h0M905.4 374h0M873.9 403.7h0M909.1 403.1h0M904.7 432.8h0M902.8 462h0M884.6 471h0M676.6 512.9h0M760.7 426.1h0M744.5 439.1h0M759.9 444.9h0M774.6 470.2h0M746.3 492.7h0M733.4 499h0M882 324h0M865.7 319.3h0M838.9 430.6h0M851.5 445.6h0M855.7 436h0M874.9 432.9h0M710.6 417.9h0M686.7 496.5h0M690.8 523.5h0M657.4 412.8h0M658.1 408.5h0M669.6 417.3h0M667.1 415.7h0M659.2 426h0M656.2 438.6h0M635.9 433.1h0M666.5 391.9h0M680.8 392.6h0M659.2 410.1h0M634.2 422.6h0M628.9 419.3h0M609.5 436h0M591.4 437.7h0M616 490.7h0M597 482.6h0M583.8 487.5h0M769.9 340.5h0M773.9 344.9h0M741.8 378.4h0M698.9 369.8h0M696.9 403.1h0M736.3 410.6h0M759.5 401.2h0M857.9 282.5h0M844.7 274.2h0M818.6 262.4h0M808.1 270.6h0M758.1 290h0M748.9 276.9h0M833.9 401.9h0M797.3 451.3h0M787.2 363.8h0M761 377h0M749.3 386.3h0M751 366.9h0M735.6 363.3h0M897.2 320h0M943.8 276.2h0M837.5 418h0M840.4 447h0M828.4 452.5h0M848.1 333.5h0M843.3 317.1h0M839.4 304.2h0M858.5 219h0M835.2 199.9h0M676.8 423h0M701.1 441.2h0M707.3 453.2h0M711.2 441.5h0M724.7 444.8h0M736.9 429.4h0M868.6 400.7h0M881.7 435.1h0M867 432.1h0M677 379h0M692.7 375.4h0M722.8 396.2h0M888.6 313.1h0M641.5 375.7h0M635.4 354h0M596.5 477.7h0M577 424.2h0M575.3 400.8h0M605.8 408.6h0M609.1 388.7h0M852.6 263.3h0M862.6 268.4h0M868 239.6h0M567.4 458.2h0M557.4 473h0M603.6 522.7h0M712.1 506.7h0M744.2 520.8h0M761.6 509.7h0M782.1 529.5h0M766.3 543.1h0M803.7 497.4h0M817.7 474.8h0M829.2 482.9h0M847.2 483.2h0M630.1 515.8h0M625.6 513.8h0M636.8 516.9h0M607.2 494.9h0M611.2 481.8h0M611.1 447.4h0M770 533.8h0M745.5 547.3h0M737.9 550h0M672.2 552.4h0M686.1 538.4h0M664.8 568.1h0M647 577.4h0M918.7 300.3h0M918.3 325.9h0M757.7 293.3h0M748.4 259.5h0M615.2 591.8h0M611.5 566.3h0M871.9 211.2h0M883.1 202.3h0M935 281.5h0M928.9 299.5h0M941.8 298.1h0M941.5 310.2h0M956.9 305.7h0M922.9 401h0M872.1 461.1h0M514.4 462.7h0M511.5 464.6h0M526 457.3h0M531.9 464.5h0M613 589.6h0M617 594h0M622 576.1h0M930 276.4h0M867.5 197.4h0M810.9 239.8h0M808.5 233.4h0M746.2 571.2h0M716.9 244.2h0M732.4 240.4h0"/><path stroke="#c01818" stroke-width="3.200" d="M854 480.3h0M861 456.9h0M870 458.8h0M867.2 443.1h0M875.7 439.4h0M697.6 352.1h0M718.7 338.5h0M739.1 319.6h0M608.4 509.4h0M611.4 524.1h0M628.8 525.6h0M615 564.9h0M528.2 480.4h0M519.4 480.4h0M528 484.1h0M530 464.6h0M548.3 430h0M690.7 346.5h0M699.4 355.5h0M662.3 342.2h0M630.4 346h0M615.2 362.2h0M536.2 417.5h0M562 398.7h0M576.9 397.6h0M927.1 310.1h0M938.6 310.6h0M927.4 343.4h0M923.9 355.3h0M798.3 527.4h0M793.8 534.2h0M782.5 543.3h0M760.6 561.3h0M566.8 377.1h0M600.2 363.5h0M804.4 252.4h0M810.6 254.1h0M794.8 243.4h0M936.2 377.7h0M922.1 387.2h0M929.2 358.9h0M807.2 511.8h0M811.7 500.8h0M830 480.7h0M835.7 485.4h0M844.2 488.8h0M680.1 372.3h0M681.3 429.3h0M669.2 439h0M679.5 451.7h0M797 338h0M795.9 388.3h0M794.5 374.8h0M792.8 299.6h0M779.2 282.3h0M784.5 308.9h0M767.8 308.5h0M770.3 293.5h0M845.8 393.5h0M860.2 408.3h0M608.9 432.9h0M632.8 395h0M636 430.5h0M653.1 448.2h0M629.2 457.2h0M726.1 417h0M734.6 411.3h0M768 405.4h0M780.1 381.3h0M749.5 373.4h0M806.4 381.1h0M813.7 337.6h0M803.9 299.6h0M672.7 447.3h0M669.8 472.9h0M649.8 483.9h0M650.2 521.3h0M785.3 439.2h0M709.4 419h0M686 416.7h0M722.6 405.6h0M874.4 400.4h0M886.4 394.8h0M879.5 417.9h0M786.9 410.5h0M852.2 385.1h0M778.8 508.8h0M776.9 513.9h0M797.6 489.9h0M905.4 374h0M873.9 403.7h0M909.1 403.1h0M904.7 432.8h0M902.8 462h0M884.6 471h0M676.6 512.9h0M760.7 426.1h0M744.5 439.1h0M759.9 444.9h0M774.6 470.2h0M746.3 492.7h0M733.4 499h0M882 324h0M865.7 319.3h0M838.9 430.6h0M851.5 445.6h0M855.7 436h0M874.9 432.9h0M710.6 417.9h0M686.7 496.5h0M690.8 523.5h0M657.4 412.8h0M658.1 408.5h0M669.6 417.3h0M667.1 415.7h0M659.2 426h0M656.2 438.6h0M635.9 433.1h0M666.5 391.9h0M680.8 392.6h0M659.2 410.1h0M634.2 422.6h0M628.9 419.3h0M609.5 436h0M591.4 437.7h0M616 490.7h0M597 482.6h0M583.8 487.5h0M769.9 340.5h0M773.9 344.9h0M741.8 378.4h0M698.9 369.8h0M696.9 403.1h0M736.3 410.6h0M759.5 401.2h0M857.9 282.5h0M844.7 274.2h0M818.6 262.4h0M808.1 270.6h0M758.1 290h0M748.9 276.9h0M833.9 401.9h0M797.3 451.3h0M787.2 363.8h0M761 377h0M749.3 386.3h0M751 366.9h0M735.6 363.3h0M897.2 320h0M943.8 276.2h0M837.5 418h0M840.4 447h0M828.4 452.5h0M848.1 333.5h0M843.3 317.1h0M839.4 304.2h0M858.5 219h0M835.2 199.9h0M676.8 423h0M701.1 441.2h0M707.3 453.2h0M711.2 441.5h0M724.7 444.8h0M736.9 429.4h0M868.6 400.7h0M881.7 435.1h0M867 432.1h0M677 379h0M692.7 375.4h0M722.8 396.2h0M888.6 313.1h0M641.5 375.7h0M635.4 354h0M596.5 477.7h0M577 424.2h0M575.3 400.8h0M605.8 408.6h0M609.1 388.7h0M852.6 263.3h0M862.6 268.4h0M868 239.6h0M567.4 458.2h0M557.4 473h0M603.6 522.7h0M712.1 506.7h0M744.2 520.8h0M761.6 509.7h0M782.1 529.5h0M766.3 543.1h0M803.7 497.4h0M817.7 474.8h0M829.2 482.9h0M847.2 483.2h0M630.1 515.8h0M625.6 513.8h0M636.8 516.9h0M607.2 494.9h0M611.2 481.8h0M611.1 447.4h0M770 533.8h0M745.5 547.3h0M737.9 550h0M672.2 552.4h0M686.1 538.4h0M664.8 568.1h0M647 577.4h0M918.7 300.3h0M918.3 325.9h0M757.7 293.3h0M748.4 259.5h0M615.2 591.8h0M611.5 566.3h0M871.9 211.2h0M883.1 202.3h0M935 281.5h0M928.9 299.5h0M941.8 298.1h0M941.5 310.2h0M956.9 305.7h0M922.9 401h0M872.1 461.1h0M514.4 462.7h0M511.5 464.6h0M526 457.3h0M531.9 464.5h0M613 589.6h0M617 594h0M622 576.1h0M930 276.4h0M867.5 197.4h0M810.9 239.8h0M808.5 233.4h0M746.2 571.2h0M716.9 244.2h0M732.4 240.4h0"/><path stroke="#f02020" stroke-width="1.800" d="M854 480.3h0M861 456.9h0M870 458.8h0M867.2 443.1h0M875.7 439.4h0M697.6 352.1h0M718.7 338.5h0M739.1 319.6h0M608.4 509.4h0M611.4 524.1h0M628.8 525.6h0M615 564.9h0M528.2 480.4h0M519.4 480.4h0M528 484.1h0M530 464.6h0M548.3 430h0M690.7 346.5h0M699.4 355.5h0M662.3 342.2h0M630.4 346h0M615.2 362.2h0M536.2 417.5h0M562 398.7h0M576.9 397.6h0M927.1 310.1h0M938.6 310.6h0M927.4 343.4h0M923.9 355.3h0M798.3 527.4h0M793.8 534.2h0M782.5 543.3h0M760.6 561.3h0M566.8 377.1h0M600.2 363.5h0M804.4 252.4h0M810.6 254.1h0M794.8 243.4h0M936.2 377.7h0M922.1 387.2h0M929.2 358.9h0M807.2 511.8h0M811.7 500.8h0M830 480.7h0M835.7 485.4h0M844.2 488.8h0M680.1 372.3h0M681.3 429.3h0M669.2 439h0M679.5 451.7h0M797 338h0M795.9 388.3h0M794.5 374.8h0M792.8 299.6h0M779.2 282.3h0M784.5 308.9h0M767.8 308.5h0M770.3 293.5h0M845.8 393.5h0M860.2 408.3h0M608.9 432.9h0M632.8 395h0M636 430.5h0M653.1 448.2h0M629.2 457.2h0M726.1 417h0M734.6 411.3h0M768 405.4h0M780.1 381.3h0M749.5 373.4h0M806.4 381.1h0M813.7 337.6h0M803.9 299.6h0M672.7 447.3h0M669.8 472.9h0M649.8 483.9h0M650.2 521.3h0M785.3 439.2h0M709.4 419h0M686 416.7h0M722.6 405.6h0M874.4 400.4h0M886.4 394.8h0M879.5 417.9h0M786.9 410.5h0M852.2 385.1h0M778.8 508.8h0M776.9 513.9h0M797.6 489.9h0M905.4 374h0M873.9 403.7h0M909.1 403.1h0M904.7 432.8h0M902.8 462h0M884.6 471h0M676.6 512.9h0M760.7 426.1h0M744.5 439.1h0M759.9 444.9h0M774.6 470.2h0M746.3 492.7h0M733.4 499h0M882 324h0M865.7 319.3h0M838.9 430.6h0M851.5 445.6h0M855.7 436h0M874.9 432.9h0M710.6 417.9h0M686.7 496.5h0M690.8 523.5h0M657.4 412.8h0M658.1 408.5h0M669.6 417.3h0M667.1 415.7h0M659.2 426h0M656.2 438.6h0M635.9 433.1h0M666.5 391.9h0M680.8 392.6h0M659.2 410.1h0M634.2 422.6h0M628.9 419.3h0M609.5 436h0M591.4 437.7h0M616 490.7h0M597 482.6h0M583.8 487.5h0M769.9 340.5h0M773.9 344.9h0M741.8 378.4h0M698.9 369.8h0M696.9 403.1h0M736.3 410.6h0M759.5 401.2h0M857.9 282.5h0M844.7 274.2h0M818.6 262.4h0M808.1 270.6h0M758.1 290h0M748.9 276.9h0M833.9 401.9h0M797.3 451.3h0M787.2 363.8h0M761 377h0M749.3 386.3h0M751 366.9h0M735.6 363.3h0M897.2 320h0M943.8 276.2h0M837.5 418h0M840.4 447h0M828.4 452.5h0M848.1 333.5h0M843.3 317.1h0M839.4 304.2h0M858.5 219h0M835.2 199.9h0M676.8 423h0M701.1 441.2h0M707.3 453.2h0M711.2 441.5h0M724.7 444.8h0M736.9 429.4h0M868.6 400.7h0M881.7 435.1h0M867 432.1h0M677 379h0M692.7 375.4h0M722.8 396.2h0M888.6 313.1h0M641.5 375.7h0M635.4 354h0M596.5 477.7h0M577 424.2h0M575.3 400.8h0M605.8 408.6h0M609.1 388.7h0M852.6 263.3h0M862.6 268.4h0M868 239.6h0M567.4 458.2h0M557.4 473h0M603.6 522.7h0M712.1 506.7h0M744.2 520.8h0M761.6 509.7h0M782.1 529.5h0M766.3 543.1h0M803.7 497.4h0M817.7 474.8h0M829.2 482.9h0M847.2 483.2h0M630.1 515.8h0M625.6 513.8h0M636.8 516.9h0M607.2 494.9h0M611.2 481.8h0M611.1 447.4h0M770 533.8h0M745.5 547.3h0M737.9 550h0M672.2 552.4h0M686.1 538.4h0M664.8 568.1h0M647 577.4h0M918.7 300.3h0M918.3 325.9h0M757.7 293.3h0M748.4 259.5h0M615.2 591.8h0M611.5 566.3h0M871.9 211.2h0M883.1 202.3h0M935 281.5h0M928.9 299.5h0M941.8 298.1h0M941.5 310.2h0M956.9 305.7h0M922.9 401h0M872.1 461.1h0M514.4 462.7h0M511.5 464.6h0M526 457.3h0M531.9 464.5h0M613 589.6h0M617 594h0M622 576.1h0M930 276.4h0M867.5 197.4h0M810.9 239.8h0M808.5 233.4h0M746.2 571.2h0M716.9 244.2h0M732.4 240.4h0" transform="translate(-0.3,-0.3)"/><path stroke="#0a0aa8" stroke-width="4.100" d="M843.7 489.5h0M838.9 472.6h0M889 450.2h0M893.9 471.8h0M895.6 423.3h0M734.5 322h0M618.9 561.8h0M628.6 567.1h0M638.8 560.8h0M612.8 584.7h0M511.4 481.9h0M526.1 462.2h0M696.8 336.3h0M708.4 344.7h0M696.7 365.3h0M659 340.9h0M658.2 345.4h0M650.7 318.8h0M628.7 339.4h0M620.1 349h0M595.7 359.5h0M540.6 418.7h0M541.5 428h0M541.7 390.3h0M579.2 387.2h0M882.9 264.5h0M905.7 281.9h0M889.6 261.4h0M914.4 280.9h0M935.1 320.6h0M945.1 317.6h0M927.5 343.4h0M903.5 333.8h0M906.6 330.8h0M923.4 355.2h0M943.3 333h0M789.8 523.9h0M768.3 553.1h0M752.8 551.7h0M740.9 568.1h0M735.7 533h0M719 533.5h0M587.6 382.3h0M598 378.8h0M600.9 369.4h0M599.2 354.4h0M809.7 241.6h0M804.6 238.6h0M784.5 250.9h0M765.5 262.4h0M933.4 369h0M934.2 357.7h0M945.2 354.3h0M933.2 361.8h0M940.8 355.3h0M811.1 516h0M799.8 511.4h0M830.4 511.7h0M692.6 397.1h0M645.1 451.1h0M675.4 462h0M682.6 474.5h0M679.3 486.2h0M672.1 498.9h0M661.3 481h0M784.8 330.8h0M800.7 361h0M810 284.5h0M797.9 294.9h0M781.3 281.4h0M778.5 292.9h0M768.4 270.2h0M771.8 304.3h0M768.5 288.9h0M775.5 294.2h0M743 346.2h0M825.8 335.6h0M826.5 350.7h0M859.9 356.7h0M840 422.2h0M868.6 415.2h0M614.8 423.6h0M616.6 392.6h0M649.8 388.2h0M644.7 412.6h0M638.2 443.2h0M628.4 462.5h0M619.9 468.8h0M737.1 420.9h0M729.4 413.2h0M761.6 405.9h0M807.3 359.1h0M811.6 342.5h0M801.1 338.2h0M803.4 302.7h0M657.9 476.3h0M650.4 484.5h0M627.3 492.1h0M783.9 449h0M764.1 441.9h0M748.3 445.5h0M743.3 454.2h0M754.3 475h0M713.9 439.7h0M699.1 409.5h0M687.7 408.6h0M881.1 411.1h0M867.1 419.4h0M781.6 413.6h0M779.1 424.6h0M822.1 402.1h0M721.6 469.6h0M733.2 480.9h0M755 499.8h0M795.9 465.3h0M806.8 457.9h0M857.7 345.5h0M897.5 348.2h0M915 342.8h0M907.6 428.8h0M909 438.1h0M892 466h0M669 522.3h0M643.4 559.9h0M650.8 557.3h0M755.3 441.8h0M758 456.9h0M774 487.4h0M758.8 488.8h0M768.3 473.1h0M723 505.7h0M735.3 510.7h0M867.2 306.9h0M854.4 321.7h0M856 309.4h0M658.6 466.6h0M667.1 448.8h0M636.4 475.7h0M623.2 466.7h0M640.8 496.6h0M802.8 424.1h0M797.1 430.1h0M831.5 430.7h0M827.2 453.1h0M897.1 389h0M736 392.9h0M728.9 407.3h0M717.3 414.5h0M698.1 434.5h0M697.5 447.7h0M697.9 463.7h0M690.7 489.6h0M705 492.9h0M709.4 494.7h0M695.1 505h0M661.5 425.8h0M629.9 426.1h0M658.4 386.1h0M671.8 396.8h0M648.4 409.9h0M644 412.2h0M622.3 423.7h0M632.3 427.4h0M612.2 433.9h0M597.4 435.3h0M609.2 443.6h0M589.5 449.4h0M584 426.8h0M647 451.2h0M636.3 477.9h0M622.4 490.3h0M635.8 508.5h0M579.9 473.1h0M605.8 473.2h0M772.4 346.4h0M767.5 338.8h0M720 381.1h0M849.9 278.6h0M809.2 269.4h0M797.5 265.5h0M785.8 272.1h0M752 282.7h0M832.4 412.8h0M824.8 441.9h0M817.1 435.7h0M810.5 443.1h0M834.7 328.5h0M788.4 358.7h0M777.4 373.3h0M767 367.7h0M751.8 369.7h0M738.2 364.3h0M734.7 352.3h0M849.5 293.1h0M862.2 297.3h0M883.3 313.8h0M901 308.2h0M911.8 302.2h0M936.1 278.5h0M847.7 350.4h0M824.3 394.1h0M833.2 416.1h0M829.4 453.1h0M826.4 464.6h0M817.3 470.4h0M855 337.3h0M848.1 321.3h0M827 291h0M839.5 262.5h0M850.7 233.8h0M851.5 210.9h0M865.8 232.6h0M857.9 231.9h0M840.5 197h0M683.7 432.9h0M692.6 436.9h0M680 453.9h0M682.3 446.2h0M722.1 443.2h0M737.3 463.2h0M819.2 372.5h0M887.5 377h0M856.6 375.8h0M862.3 410.9h0M870.5 423.3h0M870.9 412.9h0M852.7 449.4h0M664.2 373.6h0M696.2 386.9h0M885.1 336.1h0M899.5 311.3h0M633 356.1h0M625.7 354.6h0M553.8 423.3h0M596.8 409.9h0M610.5 406.9h0M608.7 394h0M624 418h0M613 368.3h0M632.6 372.6h0M636.9 344.6h0M653.2 345.8h0M655.1 314.8h0M660.9 301.7h0M851.1 263.5h0M835 265.7h0M867.5 257h0M862.4 206.3h0M878 218.3h0M564.6 478.8h0M549.7 475.6h0M589.7 469.6h0M595.2 509.1h0M598.6 523.1h0M610 544.1h0M707 510.7h0M744.3 525.4h0M745.5 520.8h0M812.1 481.4h0M826 480.9h0M837.1 475.2h0M624.9 502.8h0M609.7 482.9h0M601.7 473.4h0M777.4 517.6h0M746.2 519.6h0M733.9 544.2h0M714.8 531.8h0M704.8 546.4h0M692.2 550.9h0M693.5 535.6h0M630 587.9h0M618.5 583.3h0M911.6 365.1h0M764.1 311h0M744.6 246.3h0M757.8 248h0M618 557h0M828.4 227.9h0M830.9 238.4h0M883.9 208.1h0M839.5 231.8h0M833 244.4h0M933 293.9h0M943.6 290.8h0M932.1 404.3h0M889 469h0M880.6 465.1h0M497.2 476.2h0M526.9 410.5h0M711.2 254.2h0M719.4 246h0M742.2 244h0"/><path stroke="#1c1cc8" stroke-width="3.200" d="M843.7 489.5h0M838.9 472.6h0M889 450.2h0M893.9 471.8h0M895.6 423.3h0M734.5 322h0M618.9 561.8h0M628.6 567.1h0M638.8 560.8h0M612.8 584.7h0M511.4 481.9h0M526.1 462.2h0M696.8 336.3h0M708.4 344.7h0M696.7 365.3h0M659 340.9h0M658.2 345.4h0M650.7 318.8h0M628.7 339.4h0M620.1 349h0M595.7 359.5h0M540.6 418.7h0M541.5 428h0M541.7 390.3h0M579.2 387.2h0M882.9 264.5h0M905.7 281.9h0M889.6 261.4h0M914.4 280.9h0M935.1 320.6h0M945.1 317.6h0M927.5 343.4h0M903.5 333.8h0M906.6 330.8h0M923.4 355.2h0M943.3 333h0M789.8 523.9h0M768.3 553.1h0M752.8 551.7h0M740.9 568.1h0M735.7 533h0M719 533.5h0M587.6 382.3h0M598 378.8h0M600.9 369.4h0M599.2 354.4h0M809.7 241.6h0M804.6 238.6h0M784.5 250.9h0M765.5 262.4h0M933.4 369h0M934.2 357.7h0M945.2 354.3h0M933.2 361.8h0M940.8 355.3h0M811.1 516h0M799.8 511.4h0M830.4 511.7h0M692.6 397.1h0M645.1 451.1h0M675.4 462h0M682.6 474.5h0M679.3 486.2h0M672.1 498.9h0M661.3 481h0M784.8 330.8h0M800.7 361h0M810 284.5h0M797.9 294.9h0M781.3 281.4h0M778.5 292.9h0M768.4 270.2h0M771.8 304.3h0M768.5 288.9h0M775.5 294.2h0M743 346.2h0M825.8 335.6h0M826.5 350.7h0M859.9 356.7h0M840 422.2h0M868.6 415.2h0M614.8 423.6h0M616.6 392.6h0M649.8 388.2h0M644.7 412.6h0M638.2 443.2h0M628.4 462.5h0M619.9 468.8h0M737.1 420.9h0M729.4 413.2h0M761.6 405.9h0M807.3 359.1h0M811.6 342.5h0M801.1 338.2h0M803.4 302.7h0M657.9 476.3h0M650.4 484.5h0M627.3 492.1h0M783.9 449h0M764.1 441.9h0M748.3 445.5h0M743.3 454.2h0M754.3 475h0M713.9 439.7h0M699.1 409.5h0M687.7 408.6h0M881.1 411.1h0M867.1 419.4h0M781.6 413.6h0M779.1 424.6h0M822.1 402.1h0M721.6 469.6h0M733.2 480.9h0M755 499.8h0M795.9 465.3h0M806.8 457.9h0M857.7 345.5h0M897.5 348.2h0M915 342.8h0M907.6 428.8h0M909 438.1h0M892 466h0M669 522.3h0M643.4 559.9h0M650.8 557.3h0M755.3 441.8h0M758 456.9h0M774 487.4h0M758.8 488.8h0M768.3 473.1h0M723 505.7h0M735.3 510.7h0M867.2 306.9h0M854.4 321.7h0M856 309.4h0M658.6 466.6h0M667.1 448.8h0M636.4 475.7h0M623.2 466.7h0M640.8 496.6h0M802.8 424.1h0M797.1 430.1h0M831.5 430.7h0M827.2 453.1h0M897.1 389h0M736 392.9h0M728.9 407.3h0M717.3 414.5h0M698.1 434.5h0M697.5 447.7h0M697.9 463.7h0M690.7 489.6h0M705 492.9h0M709.4 494.7h0M695.1 505h0M661.5 425.8h0M629.9 426.1h0M658.4 386.1h0M671.8 396.8h0M648.4 409.9h0M644 412.2h0M622.3 423.7h0M632.3 427.4h0M612.2 433.9h0M597.4 435.3h0M609.2 443.6h0M589.5 449.4h0M584 426.8h0M647 451.2h0M636.3 477.9h0M622.4 490.3h0M635.8 508.5h0M579.9 473.1h0M605.8 473.2h0M772.4 346.4h0M767.5 338.8h0M720 381.1h0M849.9 278.6h0M809.2 269.4h0M797.5 265.5h0M785.8 272.1h0M752 282.7h0M832.4 412.8h0M824.8 441.9h0M817.1 435.7h0M810.5 443.1h0M834.7 328.5h0M788.4 358.7h0M777.4 373.3h0M767 367.7h0M751.8 369.7h0M738.2 364.3h0M734.7 352.3h0M849.5 293.1h0M862.2 297.3h0M883.3 313.8h0M901 308.2h0M911.8 302.2h0M936.1 278.5h0M847.7 350.4h0M824.3 394.1h0M833.2 416.1h0M829.4 453.1h0M826.4 464.6h0M817.3 470.4h0M855 337.3h0M848.1 321.3h0M827 291h0M839.5 262.5h0M850.7 233.8h0M851.5 210.9h0M865.8 232.6h0M857.9 231.9h0M840.5 197h0M683.7 432.9h0M692.6 436.9h0M680 453.9h0M682.3 446.2h0M722.1 443.2h0M737.3 463.2h0M819.2 372.5h0M887.5 377h0M856.6 375.8h0M862.3 410.9h0M870.5 423.3h0M870.9 412.9h0M852.7 449.4h0M664.2 373.6h0M696.2 386.9h0M885.1 336.1h0M899.5 311.3h0M633 356.1h0M625.7 354.6h0M553.8 423.3h0M596.8 409.9h0M610.5 406.9h0M608.7 394h0M624 418h0M613 368.3h0M632.6 372.6h0M636.9 344.6h0M653.2 345.8h0M655.1 314.8h0M660.9 301.7h0M851.1 263.5h0M835 265.7h0M867.5 257h0M862.4 206.3h0M878 218.3h0M564.6 478.8h0M549.7 475.6h0M589.7 469.6h0M595.2 509.1h0M598.6 523.1h0M610 544.1h0M707 510.7h0M744.3 525.4h0M745.5 520.8h0M812.1 481.4h0M826 480.9h0M837.1 475.2h0M624.9 502.8h0M609.7 482.9h0M601.7 473.4h0M777.4 517.6h0M746.2 519.6h0M733.9 544.2h0M714.8 531.8h0M704.8 546.4h0M692.2 550.9h0M693.5 535.6h0M630 587.9h0M618.5 583.3h0M911.6 365.1h0M764.1 311h0M744.6 246.3h0M757.8 248h0M618 557h0M828.4 227.9h0M830.9 238.4h0M883.9 208.1h0M839.5 231.8h0M833 244.4h0M933 293.9h0M943.6 290.8h0M932.1 404.3h0M889 469h0M880.6 465.1h0M497.2 476.2h0M526.9 410.5h0M711.2 254.2h0M719.4 246h0M742.2 244h0"/><path stroke="#2525ee" stroke-width="1.800" d="M843.7 489.5h0M838.9 472.6h0M889 450.2h0M893.9 471.8h0M895.6 423.3h0M734.5 322h0M618.9 561.8h0M628.6 567.1h0M638.8 560.8h0M612.8 584.7h0M511.4 481.9h0M526.1 462.2h0M696.8 336.3h0M708.4 344.7h0M696.7 365.3h0M659 340.9h0M658.2 345.4h0M650.7 318.8h0M628.7 339.4h0M620.1 349h0M595.7 359.5h0M540.6 418.7h0M541.5 428h0M541.7 390.3h0M579.2 387.2h0M882.9 264.5h0M905.7 281.9h0M889.6 261.4h0M914.4 280.9h0M935.1 320.6h0M945.1 317.6h0M927.5 343.4h0M903.5 333.8h0M906.6 330.8h0M923.4 355.2h0M943.3 333h0M789.8 523.9h0M768.3 553.1h0M752.8 551.7h0M740.9 568.1h0M735.7 533h0M719 533.5h0M587.6 382.3h0M598 378.8h0M600.9 369.4h0M599.2 354.4h0M809.7 241.6h0M804.6 238.6h0M784.5 250.9h0M765.5 262.4h0M933.4 369h0M934.2 357.7h0M945.2 354.3h0M933.2 361.8h0M940.8 355.3h0M811.1 516h0M799.8 511.4h0M830.4 511.7h0M692.6 397.1h0M645.1 451.1h0M675.4 462h0M682.6 474.5h0M679.3 486.2h0M672.1 498.9h0M661.3 481h0M784.8 330.8h0M800.7 361h0M810 284.5h0M797.9 294.9h0M781.3 281.4h0M778.5 292.9h0M768.4 270.2h0M771.8 304.3h0M768.5 288.9h0M775.5 294.2h0M743 346.2h0M825.8 335.6h0M826.5 350.7h0M859.9 356.7h0M840 422.2h0M868.6 415.2h0M614.8 423.6h0M616.6 392.6h0M649.8 388.2h0M644.7 412.6h0M638.2 443.2h0M628.4 462.5h0M619.9 468.8h0M737.1 420.9h0M729.4 413.2h0M761.6 405.9h0M807.3 359.1h0M811.6 342.5h0M801.1 338.2h0M803.4 302.7h0M657.9 476.3h0M650.4 484.5h0M627.3 492.1h0M783.9 449h0M764.1 441.9h0M748.3 445.5h0M743.3 454.2h0M754.3 475h0M713.9 439.7h0M699.1 409.5h0M687.7 408.6h0M881.1 411.1h0M867.1 419.4h0M781.6 413.6h0M779.1 424.6h0M822.1 402.1h0M721.6 469.6h0M733.2 480.9h0M755 499.8h0M795.9 465.3h0M806.8 457.9h0M857.7 345.5h0M897.5 348.2h0M915 342.8h0M907.6 428.8h0M909 438.1h0M892 466h0M669 522.3h0M643.4 559.9h0M650.8 557.3h0M755.3 441.8h0M758 456.9h0M774 487.4h0M758.8 488.8h0M768.3 473.1h0M723 505.7h0M735.3 510.7h0M867.2 306.9h0M854.4 321.7h0M856 309.4h0M658.6 466.6h0M667.1 448.8h0M636.4 475.7h0M623.2 466.7h0M640.8 496.6h0M802.8 424.1h0M797.1 430.1h0M831.5 430.7h0M827.2 453.1h0M897.1 389h0M736 392.9h0M728.9 407.3h0M717.3 414.5h0M698.1 434.5h0M697.5 447.7h0M697.9 463.7h0M690.7 489.6h0M705 492.9h0M709.4 494.7h0M695.1 505h0M661.5 425.8h0M629.9 426.1h0M658.4 386.1h0M671.8 396.8h0M648.4 409.9h0M644 412.2h0M622.3 423.7h0M632.3 427.4h0M612.2 433.9h0M597.4 435.3h0M609.2 443.6h0M589.5 449.4h0M584 426.8h0M647 451.2h0M636.3 477.9h0M622.4 490.3h0M635.8 508.5h0M579.9 473.1h0M605.8 473.2h0M772.4 346.4h0M767.5 338.8h0M720 381.1h0M849.9 278.6h0M809.2 269.4h0M797.5 265.5h0M785.8 272.1h0M752 282.7h0M832.4 412.8h0M824.8 441.9h0M817.1 435.7h0M810.5 443.1h0M834.7 328.5h0M788.4 358.7h0M777.4 373.3h0M767 367.7h0M751.8 369.7h0M738.2 364.3h0M734.7 352.3h0M849.5 293.1h0M862.2 297.3h0M883.3 313.8h0M901 308.2h0M911.8 302.2h0M936.1 278.5h0M847.7 350.4h0M824.3 394.1h0M833.2 416.1h0M829.4 453.1h0M826.4 464.6h0M817.3 470.4h0M855 337.3h0M848.1 321.3h0M827 291h0M839.5 262.5h0M850.7 233.8h0M851.5 210.9h0M865.8 232.6h0M857.9 231.9h0M840.5 197h0M683.7 432.9h0M692.6 436.9h0M680 453.9h0M682.3 446.2h0M722.1 443.2h0M737.3 463.2h0M819.2 372.5h0M887.5 377h0M856.6 375.8h0M862.3 410.9h0M870.5 423.3h0M870.9 412.9h0M852.7 449.4h0M664.2 373.6h0M696.2 386.9h0M885.1 336.1h0M899.5 311.3h0M633 356.1h0M625.7 354.6h0M553.8 423.3h0M596.8 409.9h0M610.5 406.9h0M608.7 394h0M624 418h0M613 368.3h0M632.6 372.6h0M636.9 344.6h0M653.2 345.8h0M655.1 314.8h0M660.9 301.7h0M851.1 263.5h0M835 265.7h0M867.5 257h0M862.4 206.3h0M878 218.3h0M564.6 478.8h0M549.7 475.6h0M589.7 469.6h0M595.2 509.1h0M598.6 523.1h0M610 544.1h0M707 510.7h0M744.3 525.4h0M745.5 520.8h0M812.1 481.4h0M826 480.9h0M837.1 475.2h0M624.9 502.8h0M609.7 482.9h0M601.7 473.4h0M777.4 517.6h0M746.2 519.6h0M733.9 544.2h0M714.8 531.8h0M704.8 546.4h0M692.2 550.9h0M693.5 535.6h0M630 587.9h0M618.5 583.3h0M911.6 365.1h0M764.1 311h0M744.6 246.3h0M757.8 248h0M618 557h0M828.4 227.9h0M830.9 238.4h0M883.9 208.1h0M839.5 231.8h0M833 244.4h0M933 293.9h0M943.6 290.8h0M932.1 404.3h0M889 469h0M880.6 465.1h0M497.2 476.2h0M526.9 410.5h0M711.2 254.2h0M719.4 246h0M742.2 244h0" transform="translate(-0.3,-0.3)"/><path stroke="#a9a018" stroke-width="4.100" d="M625.6 406.2h0M612.1 469.3h0"/><path stroke="#c8c030" stroke-width="3.200" d="M625.6 406.2h0M612.1 469.3h0"/><path stroke="#f0e63c" stroke-width="1.800" d="M625.6 406.2h0M612.1 469.3h0" transform="translate(-0.3,-0.3)"/><path stroke="#0a0aa8" stroke-width="4.100" d="M851.1 458.9h0M866.8 460.6h0M871.1 459.3h0M894.3 436.9h0M680.4 345.8h0M703.2 344.1h0M600 516.1h0M627.5 549.3h0M620.4 575.5h0M529.9 480h0M534.1 488.9h0M546.9 433.9h0M687.6 356h0M654.8 330.5h0M638.9 328h0M662.3 319.4h0M615.5 360.9h0M600.4 371.3h0M594.9 351.4h0M541.6 433.8h0M537.5 440.9h0M545.9 418.6h0M891.5 258.6h0M898.6 269.8h0M870.4 271.5h0M935.4 289.8h0M898.4 332.5h0M933.3 333.1h0M940.9 336.4h0M932.9 362.8h0M798.1 526.4h0M705.2 534h0M564.5 383.1h0M576.4 379.5h0M939.5 376.9h0M813.7 501.8h0M813.5 511.9h0M824.4 497.7h0M810.7 493h0M835.4 484.4h0M834.9 488.2h0M692.4 396.3h0M683.1 409.1h0M697.5 397h0M689.1 414.4h0M704.4 402.6h0M675.8 448.7h0M671.5 476.3h0M792.8 332.2h0M792 349h0M801.5 378.4h0M807 392.7h0M811.2 297.8h0M770.1 320.3h0M757 327.4h0M756.9 324.1h0M764.8 328.5h0M752.5 339.7h0M722.5 339h0M831.9 361.9h0M841.2 403.8h0M856.6 409.9h0M614.4 439h0M625.9 393.9h0M640.1 404.7h0M641.1 388.6h0M628.8 467.7h0M722.3 422.5h0M730.6 452.2h0M740 406.4h0M769.6 381h0M754.4 374.3h0M746.6 363.3h0M804.4 370.5h0M784.6 354.8h0M802.9 329.8h0M782.6 334.1h0M671 467.8h0M640.2 488.7h0M635.1 500.4h0M641.7 523.3h0M808.8 434.7h0M775.8 434.4h0M760.1 488.2h0M717.1 450.7h0M711 422.7h0M719.2 398h0M878 355.8h0M890.3 396.1h0M797.1 417.1h0M808.1 409.3h0M848.2 390h0M723.1 453.9h0M746 461.3h0M741 496.4h0M732.8 478.8h0M723.1 478.8h0M745.3 508.9h0M754.4 517.4h0M768.3 495.3h0M778.6 486.1h0M772.1 505.7h0M765 500.8h0M781.7 469.7h0M792 480.2h0M821.7 462.3h0M865.4 339.9h0M853.3 342h0M879.7 347.2h0M886.2 362.6h0M900.8 358.6h0M909 353.6h0M899 370.9h0M907.2 399.7h0M906.2 427.7h0M904.8 456.9h0M721.7 499h0M708.6 496.2h0M698.1 509.2h0M682.1 514h0M656.6 548.3h0M760.7 424.6h0M767.1 477.9h0M743.3 481.2h0M732.8 492.5h0M730.1 520.8h0M616.9 460.9h0M622.9 480.5h0M824.5 449.5h0M843.2 441.5h0M855.4 433.8h0M869.2 432.7h0M847.3 434.3h0M842.1 432.9h0M880.3 421.6h0M892.9 424.1h0M889.6 432.9h0M738.7 380.1h0M711.9 423.7h0M703.3 478.9h0M682 455.3h0M666.5 412.7h0M653.1 414.5h0M657.9 440.7h0M648.1 373.2h0M672.4 395.9h0M661.9 393.3h0M657 410.6h0M635.5 416.6h0M598.9 460.9h0M640.6 485.7h0M621.7 501h0M588.6 486h0M592.2 488.5h0M588 486.3h0M636.5 450.7h0M771 360.7h0M746.4 347.8h0M735 357.8h0M701.6 361.9h0M703.2 376.2h0M734.9 386h0M734 406.9h0M729.4 407.1h0M782 398.7h0M889.1 304.1h0M877.6 292.6h0M825 266.3h0M794.9 292h0M771.2 274.1h0M761 285.8h0M765.9 278.1h0M842.7 403.6h0M830 426.4h0M819.4 462h0M788.6 452.9h0M815.7 345h0M801.7 344.8h0M805.3 339.2h0M754.9 379.2h0M834.2 290.8h0M891.4 320.1h0M927.1 286.7h0M836.6 370.3h0M823.8 384.7h0M831.7 403.1h0M833.9 429.3h0M838.8 441.1h0M820.8 429.4h0M841.1 311.7h0M850.1 250h0M704.2 452.5h0M700.9 470.6h0M873.9 384h0M858.1 380.4h0M881.1 430.4h0M885.5 436.8h0M863.6 442.6h0M871.6 465.1h0M686.1 374.5h0M705.7 370.8h0M710.3 388.1h0M870.3 315.1h0M871.8 302.9h0M886.6 308.8h0M893.9 300.8h0M632.1 370.3h0M592.2 379.2h0M589.2 375.3h0M647.4 362.6h0M643.2 357.5h0M585.4 433.3h0M573.2 429.4h0M612.5 377.5h0M642.8 313.3h0M669.5 304.1h0M860.7 267.6h0M873.3 214.6h0M864.6 204.7h0M870 205.5h0M562.3 454.9h0M544.1 459.8h0M563.4 470h0M593.3 475.7h0M570.8 493.2h0M721.9 491.6h0M733.9 515.2h0M755.9 519.8h0M771.6 519.1h0M762.5 502.1h0M784.1 518.7h0M626.7 514.9h0M634.8 521.5h0M606.3 450.9h0M619.3 454.2h0M778.7 518.7h0M771.7 531h0M734.5 546.9h0M675.6 553h0M667.9 562.6h0M690.6 534.3h0M668.1 554.9h0M654.4 561.8h0M635.9 575.5h0M612.3 573h0M627.1 584.7h0M615.1 560h0M916.1 323.9h0M911.2 335.3h0M892.6 383.5h0M887.7 399.1h0M760.1 304.2h0M756.8 293.9h0M747.5 296.8h0M743.4 280.7h0M737.9 271.2h0M732.5 249h0M616 581h0M610 569h0M839.1 225.4h0M870 217h0M844 221h0M932 279h0M944 309h0M953.8 308.3h0M961.7 304h0M949.8 344.3h0M924 399h0M930.8 397.8h0M941.3 384.8h0M889.6 477.4h0M886.8 468.8h0M907.2 467.7h0M863.8 473.2h0M613.6 599.4h0M956.5 282.2h0M787.9 226.3h0M752.6 580.6h0M637 310.7h0M942.9 385.7h0M940.1 392.3h0"/><path stroke="#1c1cc8" stroke-width="3.200" d="M851.1 458.9h0M866.8 460.6h0M871.1 459.3h0M894.3 436.9h0M680.4 345.8h0M703.2 344.1h0M600 516.1h0M627.5 549.3h0M620.4 575.5h0M529.9 480h0M534.1 488.9h0M546.9 433.9h0M687.6 356h0M654.8 330.5h0M638.9 328h0M662.3 319.4h0M615.5 360.9h0M600.4 371.3h0M594.9 351.4h0M541.6 433.8h0M537.5 440.9h0M545.9 418.6h0M891.5 258.6h0M898.6 269.8h0M870.4 271.5h0M935.4 289.8h0M898.4 332.5h0M933.3 333.1h0M940.9 336.4h0M932.9 362.8h0M798.1 526.4h0M705.2 534h0M564.5 383.1h0M576.4 379.5h0M939.5 376.9h0M813.7 501.8h0M813.5 511.9h0M824.4 497.7h0M810.7 493h0M835.4 484.4h0M834.9 488.2h0M692.4 396.3h0M683.1 409.1h0M697.5 397h0M689.1 414.4h0M704.4 402.6h0M675.8 448.7h0M671.5 476.3h0M792.8 332.2h0M792 349h0M801.5 378.4h0M807 392.7h0M811.2 297.8h0M770.1 320.3h0M757 327.4h0M756.9 324.1h0M764.8 328.5h0M752.5 339.7h0M722.5 339h0M831.9 361.9h0M841.2 403.8h0M856.6 409.9h0M614.4 439h0M625.9 393.9h0M640.1 404.7h0M641.1 388.6h0M628.8 467.7h0M722.3 422.5h0M730.6 452.2h0M740 406.4h0M769.6 381h0M754.4 374.3h0M746.6 363.3h0M804.4 370.5h0M784.6 354.8h0M802.9 329.8h0M782.6 334.1h0M671 467.8h0M640.2 488.7h0M635.1 500.4h0M641.7 523.3h0M808.8 434.7h0M775.8 434.4h0M760.1 488.2h0M717.1 450.7h0M711 422.7h0M719.2 398h0M878 355.8h0M890.3 396.1h0M797.1 417.1h0M808.1 409.3h0M848.2 390h0M723.1 453.9h0M746 461.3h0M741 496.4h0M732.8 478.8h0M723.1 478.8h0M745.3 508.9h0M754.4 517.4h0M768.3 495.3h0M778.6 486.1h0M772.1 505.7h0M765 500.8h0M781.7 469.7h0M792 480.2h0M821.7 462.3h0M865.4 339.9h0M853.3 342h0M879.7 347.2h0M886.2 362.6h0M900.8 358.6h0M909 353.6h0M899 370.9h0M907.2 399.7h0M906.2 427.7h0M904.8 456.9h0M721.7 499h0M708.6 496.2h0M698.1 509.2h0M682.1 514h0M656.6 548.3h0M760.7 424.6h0M767.1 477.9h0M743.3 481.2h0M732.8 492.5h0M730.1 520.8h0M616.9 460.9h0M622.9 480.5h0M824.5 449.5h0M843.2 441.5h0M855.4 433.8h0M869.2 432.7h0M847.3 434.3h0M842.1 432.9h0M880.3 421.6h0M892.9 424.1h0M889.6 432.9h0M738.7 380.1h0M711.9 423.7h0M703.3 478.9h0M682 455.3h0M666.5 412.7h0M653.1 414.5h0M657.9 440.7h0M648.1 373.2h0M672.4 395.9h0M661.9 393.3h0M657 410.6h0M635.5 416.6h0M598.9 460.9h0M640.6 485.7h0M621.7 501h0M588.6 486h0M592.2 488.5h0M588 486.3h0M636.5 450.7h0M771 360.7h0M746.4 347.8h0M735 357.8h0M701.6 361.9h0M703.2 376.2h0M734.9 386h0M734 406.9h0M729.4 407.1h0M782 398.7h0M889.1 304.1h0M877.6 292.6h0M825 266.3h0M794.9 292h0M771.2 274.1h0M761 285.8h0M765.9 278.1h0M842.7 403.6h0M830 426.4h0M819.4 462h0M788.6 452.9h0M815.7 345h0M801.7 344.8h0M805.3 339.2h0M754.9 379.2h0M834.2 290.8h0M891.4 320.1h0M927.1 286.7h0M836.6 370.3h0M823.8 384.7h0M831.7 403.1h0M833.9 429.3h0M838.8 441.1h0M820.8 429.4h0M841.1 311.7h0M850.1 250h0M704.2 452.5h0M700.9 470.6h0M873.9 384h0M858.1 380.4h0M881.1 430.4h0M885.5 436.8h0M863.6 442.6h0M871.6 465.1h0M686.1 374.5h0M705.7 370.8h0M710.3 388.1h0M870.3 315.1h0M871.8 302.9h0M886.6 308.8h0M893.9 300.8h0M632.1 370.3h0M592.2 379.2h0M589.2 375.3h0M647.4 362.6h0M643.2 357.5h0M585.4 433.3h0M573.2 429.4h0M612.5 377.5h0M642.8 313.3h0M669.5 304.1h0M860.7 267.6h0M873.3 214.6h0M864.6 204.7h0M870 205.5h0M562.3 454.9h0M544.1 459.8h0M563.4 470h0M593.3 475.7h0M570.8 493.2h0M721.9 491.6h0M733.9 515.2h0M755.9 519.8h0M771.6 519.1h0M762.5 502.1h0M784.1 518.7h0M626.7 514.9h0M634.8 521.5h0M606.3 450.9h0M619.3 454.2h0M778.7 518.7h0M771.7 531h0M734.5 546.9h0M675.6 553h0M667.9 562.6h0M690.6 534.3h0M668.1 554.9h0M654.4 561.8h0M635.9 575.5h0M612.3 573h0M627.1 584.7h0M615.1 560h0M916.1 323.9h0M911.2 335.3h0M892.6 383.5h0M887.7 399.1h0M760.1 304.2h0M756.8 293.9h0M747.5 296.8h0M743.4 280.7h0M737.9 271.2h0M732.5 249h0M616 581h0M610 569h0M839.1 225.4h0M870 217h0M844 221h0M932 279h0M944 309h0M953.8 308.3h0M961.7 304h0M949.8 344.3h0M924 399h0M930.8 397.8h0M941.3 384.8h0M889.6 477.4h0M886.8 468.8h0M907.2 467.7h0M863.8 473.2h0M613.6 599.4h0M956.5 282.2h0M787.9 226.3h0M752.6 580.6h0M637 310.7h0M942.9 385.7h0M940.1 392.3h0"/><path stroke="#2525ee" stroke-width="1.800" d="M851.1 458.9h0M866.8 460.6h0M871.1 459.3h0M894.3 436.9h0M680.4 345.8h0M703.2 344.1h0M600 516.1h0M627.5 549.3h0M620.4 575.5h0M529.9 480h0M534.1 488.9h0M546.9 433.9h0M687.6 356h0M654.8 330.5h0M638.9 328h0M662.3 319.4h0M615.5 360.9h0M600.4 371.3h0M594.9 351.4h0M541.6 433.8h0M537.5 440.9h0M545.9 418.6h0M891.5 258.6h0M898.6 269.8h0M870.4 271.5h0M935.4 289.8h0M898.4 332.5h0M933.3 333.1h0M940.9 336.4h0M932.9 362.8h0M798.1 526.4h0M705.2 534h0M564.5 383.1h0M576.4 379.5h0M939.5 376.9h0M813.7 501.8h0M813.5 511.9h0M824.4 497.7h0M810.7 493h0M835.4 484.4h0M834.9 488.2h0M692.4 396.3h0M683.1 409.1h0M697.5 397h0M689.1 414.4h0M704.4 402.6h0M675.8 448.7h0M671.5 476.3h0M792.8 332.2h0M792 349h0M801.5 378.4h0M807 392.7h0M811.2 297.8h0M770.1 320.3h0M757 327.4h0M756.9 324.1h0M764.8 328.5h0M752.5 339.7h0M722.5 339h0M831.9 361.9h0M841.2 403.8h0M856.6 409.9h0M614.4 439h0M625.9 393.9h0M640.1 404.7h0M641.1 388.6h0M628.8 467.7h0M722.3 422.5h0M730.6 452.2h0M740 406.4h0M769.6 381h0M754.4 374.3h0M746.6 363.3h0M804.4 370.5h0M784.6 354.8h0M802.9 329.8h0M782.6 334.1h0M671 467.8h0M640.2 488.7h0M635.1 500.4h0M641.7 523.3h0M808.8 434.7h0M775.8 434.4h0M760.1 488.2h0M717.1 450.7h0M711 422.7h0M719.2 398h0M878 355.8h0M890.3 396.1h0M797.1 417.1h0M808.1 409.3h0M848.2 390h0M723.1 453.9h0M746 461.3h0M741 496.4h0M732.8 478.8h0M723.1 478.8h0M745.3 508.9h0M754.4 517.4h0M768.3 495.3h0M778.6 486.1h0M772.1 505.7h0M765 500.8h0M781.7 469.7h0M792 480.2h0M821.7 462.3h0M865.4 339.9h0M853.3 342h0M879.7 347.2h0M886.2 362.6h0M900.8 358.6h0M909 353.6h0M899 370.9h0M907.2 399.7h0M906.2 427.7h0M904.8 456.9h0M721.7 499h0M708.6 496.2h0M698.1 509.2h0M682.1 514h0M656.6 548.3h0M760.7 424.6h0M767.1 477.9h0M743.3 481.2h0M732.8 492.5h0M730.1 520.8h0M616.9 460.9h0M622.9 480.5h0M824.5 449.5h0M843.2 441.5h0M855.4 433.8h0M869.2 432.7h0M847.3 434.3h0M842.1 432.9h0M880.3 421.6h0M892.9 424.1h0M889.6 432.9h0M738.7 380.1h0M711.9 423.7h0M703.3 478.9h0M682 455.3h0M666.5 412.7h0M653.1 414.5h0M657.9 440.7h0M648.1 373.2h0M672.4 395.9h0M661.9 393.3h0M657 410.6h0M635.5 416.6h0M598.9 460.9h0M640.6 485.7h0M621.7 501h0M588.6 486h0M592.2 488.5h0M588 486.3h0M636.5 450.7h0M771 360.7h0M746.4 347.8h0M735 357.8h0M701.6 361.9h0M703.2 376.2h0M734.9 386h0M734 406.9h0M729.4 407.1h0M782 398.7h0M889.1 304.1h0M877.6 292.6h0M825 266.3h0M794.9 292h0M771.2 274.1h0M761 285.8h0M765.9 278.1h0M842.7 403.6h0M830 426.4h0M819.4 462h0M788.6 452.9h0M815.7 345h0M801.7 344.8h0M805.3 339.2h0M754.9 379.2h0M834.2 290.8h0M891.4 320.1h0M927.1 286.7h0M836.6 370.3h0M823.8 384.7h0M831.7 403.1h0M833.9 429.3h0M838.8 441.1h0M820.8 429.4h0M841.1 311.7h0M850.1 250h0M704.2 452.5h0M700.9 470.6h0M873.9 384h0M858.1 380.4h0M881.1 430.4h0M885.5 436.8h0M863.6 442.6h0M871.6 465.1h0M686.1 374.5h0M705.7 370.8h0M710.3 388.1h0M870.3 315.1h0M871.8 302.9h0M886.6 308.8h0M893.9 300.8h0M632.1 370.3h0M592.2 379.2h0M589.2 375.3h0M647.4 362.6h0M643.2 357.5h0M585.4 433.3h0M573.2 429.4h0M612.5 377.5h0M642.8 313.3h0M669.5 304.1h0M860.7 267.6h0M873.3 214.6h0M864.6 204.7h0M870 205.5h0M562.3 454.9h0M544.1 459.8h0M563.4 470h0M593.3 475.7h0M570.8 493.2h0M721.9 491.6h0M733.9 515.2h0M755.9 519.8h0M771.6 519.1h0M762.5 502.1h0M784.1 518.7h0M626.7 514.9h0M634.8 521.5h0M606.3 450.9h0M619.3 454.2h0M778.7 518.7h0M771.7 531h0M734.5 546.9h0M675.6 553h0M667.9 562.6h0M690.6 534.3h0M668.1 554.9h0M654.4 561.8h0M635.9 575.5h0M612.3 573h0M627.1 584.7h0M615.1 560h0M916.1 323.9h0M911.2 335.3h0M892.6 383.5h0M887.7 399.1h0M760.1 304.2h0M756.8 293.9h0M747.5 296.8h0M743.4 280.7h0M737.9 271.2h0M732.5 249h0M616 581h0M610 569h0M839.1 225.4h0M870 217h0M844 221h0M932 279h0M944 309h0M953.8 308.3h0M961.7 304h0M949.8 344.3h0M924 399h0M930.8 397.8h0M941.3 384.8h0M889.6 477.4h0M886.8 468.8h0M907.2 467.7h0M863.8 473.2h0M613.6 599.4h0M956.5 282.2h0M787.9 226.3h0M752.6 580.6h0M637 310.7h0M942.9 385.7h0M940.1 392.3h0" transform="translate(-0.3,-0.3)"/><path stroke="#5c5c5c" stroke-width="4.100" d="M859.4 489.3h0M856.9 461.9h0M856.4 468.4h0M850.7 477.3h0M867.5 454.8h0M858 461h0M875.9 459.4h0M884.2 457.3h0M881.1 451.9h0M875.3 449.7h0M893.2 445.8h0M889.5 440.2h0M688.7 352.5h0M684.2 357.5h0M682.6 343.5h0M722.7 335.3h0M729.3 324.9h0M728 312.7h0M739.2 314.2h0M742.5 302.8h0M613.1 513.4h0M631 540.3h0M629.4 528.8h0M632.5 561.3h0M613.8 590.8h0M536.2 482.5h0M524 476.4h0M517.4 463.5h0M518.3 468.8h0M513.9 473.6h0M535.8 479.8h0M548.3 452.1h0M546.1 454.4h0M543.4 460h0M541.5 437.2h0M702.4 347.1h0M695.6 346.1h0M694.6 350.9h0M693.7 356.6h0M685.3 361.8h0M675.1 354.6h0M669.3 356.6h0M660.6 349.6h0M669.5 354.7h0M666.6 345.3h0M665.2 349.2h0M656.4 336.5h0M648.9 334.8h0M649.3 341.7h0M655.1 345.1h0M649.7 317.7h0M631.7 333.2h0M607.9 348.6h0M606.1 343.1h0M592.8 355.4h0M602.8 354.5h0M589.9 378.5h0M546 436.6h0M541.9 442.7h0M537.4 436.8h0M551 408.9h0M569.7 396.6h0M586 389.8h0M881.9 254.9h0M889 263.4h0M890.5 278.4h0M873 263.8h0M876.6 266.5h0M911.4 280.3h0M906.5 271.3h0M901.5 268.1h0M899.2 261.6h0M919.1 285h0M924.4 285.6h0M920.4 280h0M913.5 279.9h0M935.2 294.4h0M930.3 314h0M929.2 330.6h0M914.1 346h0M910.3 340.2h0M930.5 352.9h0M933 342.5h0M935.7 329.5h0M805.4 523.1h0M793.2 526.6h0M788.4 533.9h0M782 533.4h0M787 534.3h0M772.4 548.9h0M791.9 539.5h0M769.2 541h0M744.8 564.6h0M745.4 546.9h0M742.2 538.1h0M747.8 536.5h0M735.4 539.2h0M728.8 531.6h0M714.2 530.2h0M730.2 527.5h0M711.6 536.3h0M703 539.9h0M707 536.5h0M571.5 382.1h0M583.4 377.6h0M613.5 374.8h0M625.8 384.9h0M626.1 389.9h0M603.9 359.5h0M798.7 254h0M781 238.1h0M758.6 254.2h0M930.5 363.3h0M924.6 373.1h0M925.5 378.5h0M940.7 357h0M941.7 349.8h0M947.2 359.8h0M950.9 365.6h0M934.9 355.8h0M946.4 359.4h0M956.2 363.2h0M929.1 353.9h0M927.3 354.1h0M939.7 362.7h0M809.5 510.6h0M815.8 500.3h0M805.6 514.8h0M792.4 497.1h0M802.4 496.8h0M807.3 522.3h0M799.9 526.8h0M821.1 493.1h0M815.8 491.4h0M796.9 480.1h0M827.6 493h0M840.7 497.8h0M837.3 497.2h0M829.1 505h0M824.8 513h0M691 401.6h0M680.9 422.4h0M697.8 407.6h0M707.6 406.1h0M677.1 431.8h0M676.7 439.1h0M672.2 453.5h0M662.4 451.2h0M681.4 487.3h0M685.6 483.8h0M686.5 478.3h0M675.1 493.3h0M656.5 499.7h0M794.9 342.7h0M797.4 353.3h0M802.5 351h0M794.1 358.4h0M798.7 367.2h0M791.7 351.5h0M804.4 371.7h0M799.8 391.4h0M794.3 380.9h0M816.2 292.5h0M820.2 312h0M814 317.2h0M810.5 314.1h0M809.6 291.1h0M798.7 288.2h0M788.1 282.1h0M792.1 284.4h0M776.8 286.7h0M772.8 295.3h0M768.1 290.8h0M775.3 308.9h0M766.6 316.7h0M767.7 304.7h0M766.1 298.7h0M748.7 345h0M753.5 350h0M855.9 364.9h0M854.9 356.3h0M862.9 359.7h0M860.9 363.4h0M839.3 387.9h0M834.6 383.1h0M848 403.1h0M855.4 419.7h0M843.2 426.1h0M864.4 411.5h0M872.2 410.6h0M866.6 401.4h0M616.4 439.1h0M601.3 425.5h0M620.4 402.9h0M619 386.7h0M645.8 395.6h0M643.2 408.1h0M646.8 418.5h0M628 404.6h0M648.3 425.5h0M643.1 433.1h0M634.9 456.3h0M628.1 462.1h0M623 469.3h0M632.9 461.2h0M636.5 467.6h0M631.9 469.6h0M613.4 471.4h0M619.6 468.7h0M730.4 439.5h0M739.5 415.4h0M744.6 417.9h0M746.6 413.7h0M748.8 409.5h0M774.6 389.4h0M763.2 381.7h0M763.4 387.2h0M770.4 374.3h0M781.1 377.1h0M746.6 369.5h0M799 360h0M793.4 360.5h0M809.8 368.5h0M793.4 341.5h0M809.2 333.3h0M822.1 324.7h0M790.9 334.7h0M664.4 452h0M651.4 478.1h0M647.2 488.5h0M632.5 488.2h0M797.4 434.2h0M781.1 436.4h0M781.4 444.7h0M773.9 449h0M758 440.7h0M747 473.2h0M754.9 465.7h0M749.9 479.6h0M728.2 450.4h0M709.8 434.8h0M706.9 445.8h0M721.2 422.8h0M722.5 439.1h0M725.9 443h0M724.5 447.1h0M715.6 406.5h0M694.3 414.6h0M880 370.5h0M884.3 365.1h0M889.6 365.3h0M874.6 412.4h0M874.5 419.5h0M782.2 418.9h0M791.9 412.3h0M798 406.1h0M814 411h0M803.6 411.2h0M797.9 407.7h0M816.8 390.6h0M808.1 386.7h0M849.6 379.6h0M856.4 381.4h0M714.3 460.3h0M710.4 455h0M702.3 448h0M728.3 472.3h0M734.3 470.5h0M736 460.6h0M743.1 464.8h0M739.9 487h0M763.2 507.6h0M759.3 515.7h0M775.1 504.2h0M783.7 475.2h0M792.8 473.8h0M785.7 448.5h0M820.3 455.7h0M875.4 342.3h0M890.7 347.5h0M894.3 357.1h0M885.7 358.4h0M905.4 353h0M898.2 364.5h0M907.9 389.8h0M903.8 394.8h0M891 402.5h0M880.4 401.4h0M907.7 408.9h0M907.1 418.7h0M898.6 433.9h0M910.6 446.9h0M902.7 447.9h0M901.1 478.5h0M709.4 497h0M694.8 506.7h0M661.9 522.1h0M661 527.7h0M649.6 550.2h0M658 535.1h0M643.9 565.6h0M646.2 560.1h0M628.6 571h0M628.1 565.3h0M621.5 588h0M755.9 416.2h0M763.4 407.6h0M768.6 404.2h0M755.1 427.7h0M759.8 428.6h0M768 424.1h0M778.2 414.7h0M766.8 449.3h0M762.5 466.1h0M767 465.5h0M761.5 461.5h0M758.5 450h0M773.3 475.3h0M761.4 483.2h0M765.4 477.9h0M775.8 468.8h0M745 487.9h0M736.7 483.6h0M732.6 488.8h0M735.1 494.4h0M725.9 483.9h0M728.6 502.7h0M728.6 512.2h0M735.9 517.2h0M724.7 519h0M711.5 522.4h0M864.4 325.5h0M867.5 323.7h0M855 303.6h0M660.5 455.5h0M648.6 469h0M625.2 473.4h0M626.6 462.9h0M629.6 482.8h0M633.9 496.8h0M806.4 429.2h0M826.2 434.5h0M831.9 441.5h0M838.5 419.2h0M846.7 417.8h0M868.5 429.8h0M851.7 430h0M894.1 412.5h0M907.5 393.8h0M901.6 392.6h0M715.3 377.5h0M729.3 407h0M717.1 421.3h0M726.8 418.4h0M710.3 423.1h0M703.5 432.5h0M689.8 454.2h0M671.1 443.5h0M669.8 439h0M678.2 439.6h0M713.8 468h0M698.7 475.1h0M692.5 477.5h0M681.8 460.2h0M689.8 457.8h0M697.6 487.4h0M699.8 496.2h0M687.1 491.9h0M677.4 489.2h0M674.4 482.1h0M682.9 483h0M695.2 512.7h0M696.4 514h0M694.1 507.9h0M693 528.2h0M623.8 422h0M648.7 380h0M659.9 382.6h0M654.2 371.4h0M671.5 395.7h0M666.6 412.4h0M676.3 408.7h0M680.6 403.2h0M655.9 404.3h0M666.7 400h0M634.1 415.7h0M623.3 423.9h0M613.7 428h0M606 430.4h0M622.6 427.9h0M581.8 431.3h0M580.3 424h0M594.1 463.4h0M643.6 477.8h0M636.9 479.3h0M628.1 501.9h0M606.3 490.3h0M614.2 505.9h0M581.3 479h0M573.1 473.3h0M579.6 483.4h0M613 464.2h0M605.3 479.1h0M616.4 456h0M761 355.8h0M755.4 342.6h0M739.9 354.2h0M730.6 353.2h0M739.4 346.4h0M745.8 344h0M725.6 356.9h0M707.7 369.3h0M708.3 381h0M711 359.8h0M711.5 386.5h0M714.9 384.6h0M697.5 398h0M731.7 383.6h0M752.2 392.5h0M772.4 399h0M766.8 396.3h0M756.2 398.1h0M868.2 286.6h0M859.8 284.3h0M843.2 281.6h0M837.7 278.9h0M843.3 280.8h0M814.1 265.6h0M804.8 264.4h0M815.1 252.9h0M802.2 270h0M792.6 269.1h0M791.6 275.6h0M779.5 268.3h0M781.9 257.1h0M779.3 251.4h0M785.8 283.2h0M763.3 280.3h0M851 396.8h0M817.8 416.9h0M833.4 431.9h0M827.2 435.4h0M819.1 441.3h0M815.4 446.8h0M802.4 439.3h0M803.7 432.5h0M788.1 463.5h0M810.6 342.4h0M816.4 343.8h0M834.3 335.8h0M808 348.1h0M796.8 350.1h0M808.8 342.6h0M788 358.9h0M757 374.2h0M740.6 358.9h0M734.3 358.5h0M726.3 365.8h0M840.8 291.1h0M863.6 304h0M838.9 314.2h0M834 312.9h0M870.2 302.9h0M877.3 306.7h0M877.1 299.8h0M872.8 294.9h0M882 314.9h0M888.3 320.1h0M907 307.9h0M900.6 317.6h0M891.3 327.7h0M891 320.7h0M906.4 300.6h0M915.5 291.6h0M911.6 287.8h0M924.8 291.7h0M921.2 286.4h0M932.6 284.7h0M830.1 362.3h0M830.7 348.4h0M835.6 347.3h0M837.2 355.2h0M824.8 383.4h0M826.7 377.5h0M826.7 369.9h0M831.7 375.6h0M823.6 397.8h0M825.3 424h0M820.7 420.9h0M809.1 417.2h0M803.9 418.4h0M837.9 434.4h0M835.1 428.3h0M836.4 422.6h0M832.4 438.1h0M833.8 445h0M828.6 443.1h0M815.9 428.1h0M814.3 423.9h0M817.7 421h0M824.1 425.6h0M838.5 459.6h0M832.1 454.7h0M845.6 439.6h0M823.3 472.9h0M864 336.1h0M873.7 340.5h0M872 348.1h0M838.3 318.3h0M837.4 322.1h0M838.6 332.8h0M838.6 342.5h0M835.1 345.9h0M830.4 343.7h0M830.4 301.2h0M829.8 285.7h0M835.8 288.6h0M836.5 294.1h0M840 298h0M843.2 307.8h0M836 311.8h0M822.2 267h0M840 269.1h0M844.4 252.9h0M852.9 240h0M845 207.6h0M835.2 205.8h0M666.1 424.6h0M687.6 431.5h0M699.5 446.9h0M700.1 451h0M694.9 449.6h0M688.9 452.2h0M683.4 450.6h0M712.9 463.9h0M709.1 468h0M702.4 474.6h0M726 437.8h0M720.5 441.2h0M715.1 438.5h0M738.2 436.3h0M815.6 366.3h0M815 360.5h0M823 366.9h0M885 374.8h0M885.9 368.1h0M880.2 384h0M868.3 393.8h0M864.7 391.1h0M863.3 380.6h0M866.5 405.9h0M877.8 409.5h0M864.8 420h0M868 428.4h0M866.2 414.8h0M874.7 415.7h0M873.8 419.9h0M864.2 436.5h0M856.3 437.7h0M851.2 456.2h0M860.2 460.3h0M656.7 374.9h0M644.1 373.9h0M687.9 380.2h0M873.2 324h0M880.9 331.1h0M891.7 334.9h0M868.3 308.5h0M874.5 309.3h0M878.7 304.9h0M878.3 311.6h0M872.8 315.5h0M893.5 313.8h0M905.2 314.2h0M656.1 359.4h0M635.9 376.5h0M621.2 364.3h0M616.6 368.9h0M610.5 369.4h0M597.1 378.3h0M632.5 362.3h0M620.6 357.6h0M615.2 359.7h0M648.6 355.2h0M642.8 356.4h0M657.9 365.6h0M581.4 461.8h0M584.1 468h0M591.7 476.8h0M572.7 453.8h0M580.3 462.2h0M587.3 470.9h0M581.6 435.7h0M591 438.8h0M582.5 440.1h0M567.2 431h0M570.1 423.5h0M563.8 423.4h0M561.3 427h0M591.3 412.8h0M588.8 407.6h0M582.5 406.1h0M601.9 414.4h0M603.5 408.8h0M614.9 391.2h0M619 395.6h0M617.6 402.1h0M616.2 377.9h0M634.3 379.8h0M628.3 376.2h0M622.3 377.8h0M616.1 370.6h0M640.9 350.4h0M630.6 354.8h0M620.2 358.1h0M615.2 357.8h0M647.3 343.9h0M651.6 348.2h0M651.8 354.5h0M641.3 334.4h0M646.1 330.2h0M662.7 327.9h0M634.7 327.1h0M649 311.4h0M644.2 314h0M639.6 320.6h0M656.7 310.9h0M666.4 316.5h0M661.9 311.6h0M848.4 268.7h0M870 264.1h0M861 281.8h0M867.9 247.2h0M871.8 235.7h0M869.8 220.7h0M877.7 213.6h0M566.9 463.7h0M563.3 476.7h0M569.6 478h0M587.5 473.5h0M557.3 478.7h0M564.9 484.4h0M560.3 479.7h0M577 493.2h0M584.6 478.8h0M584.9 472.2h0M582.5 507.7h0M580 502h0M591.8 517.1h0M595.9 513.8h0M595 532.7h0M589.2 530.3h0M601.9 518.2h0M707 529.7h0M701.1 532.7h0M717 508.4h0M723.2 499.1h0M735.6 522.1h0M731.2 517.8h0M741.9 519.2h0M754.5 526.1h0M764.2 506.4h0M777.1 518.3h0M779.3 523.8h0M767.9 529.1h0M774.2 528h0M818.4 481.8h0M811.4 489.3h0M800.5 506.5h0M825.9 466.5h0M821.2 457.1h0M833.8 481.1h0M843 471.5h0M617.8 502.8h0M626.4 511.3h0M624.7 510.8h0M607.7 477.5h0M599.9 458.7h0M593.6 460.9h0M605.7 457.8h0M611.9 453.8h0M606.2 453.5h0M601.5 458h0M590 459.9h0M777.6 524.6h0M770.8 525h0M767.1 526.9h0M755.4 536.5h0M756 545.4h0M743.8 540.5h0M743.4 524.3h0M740.5 546.4h0M722.3 545.6h0M713.7 541.2h0M718.8 534.5h0M718.3 539h0M699.9 550.6h0M685 549.8h0M690 548h0M674.6 558.5h0M679.5 561.7h0M685 561.5h0M689.4 566h0M685.2 540.3h0M666.1 553.7h0M673.2 546.6h0M658.4 567.6h0M628.7 581.9h0M624.2 585.2h0M616.9 585.9h0M611.7 553.7h0M915.7 305.6h0M904.5 343.5h0M908.5 341.1h0M913.1 342.2h0M915.4 370.5h0M891.9 389.5h0M895.2 395.4h0M901.6 398h0M765.3 298.9h0M763.5 327.1h0M759.6 300.1h0M757.9 303.9h0M767.9 308.9h0M774.6 308.2h0M752.3 286.2h0M739.4 275h0M745.1 272.3h0M740.7 264.5h0M729.1 265.5h0M733.3 269.1h0M737.6 246.5h0M725.7 244.9h0M750.8 254.8h0M745.8 258.9h0M752.3 243.7h0M610 553.1h0M611.6 568.3h0M609.3 573.9h0M836.7 235.2h0M877.9 210.7h0M880.8 218h0M878.4 200.5h0M872.1 193h0M839.8 241.9h0M848.8 248.1h0M830.7 238.8h0M825.7 244.3h0M924.8 269.3h0M919.7 264.5h0M936.2 298.7h0M947.6 300.4h0M947.8 319.7h0M947.1 330.3h0M956.6 300h0M930.1 410.6h0M933.7 391.9h0M929.7 396h0M946.9 383.5h0M937 397.7h0M896.2 470.4h0M873.5 446.5h0M865.9 480h0M867.1 473.8h0M872.5 470.9h0M528.9 460.4h0M541.3 449.3h0M947.5 290.6h0M936.7 283.1h0M934.9 275.5h0M928.1 275.5h0M841.8 196.3h0M856 197.4h0M878.6 199.9h0M885.3 210.1h0M878.7 212.9h0M793.8 227.1h0M800 233.3h0M807 236.7h0M819.1 235.3h0M829.3 232.1h0M530.1 404.5h0M536.9 404.4h0M550.9 390.4h0M557.1 389.6h0M662.5 319.4h0M719.6 240h0M729.1 236.7h0"/><path stroke="#8c8c8c" stroke-width="3.200" d="M859.4 489.3h0M856.9 461.9h0M856.4 468.4h0M850.7 477.3h0M867.5 454.8h0M858 461h0M875.9 459.4h0M884.2 457.3h0M881.1 451.9h0M875.3 449.7h0M893.2 445.8h0M889.5 440.2h0M688.7 352.5h0M684.2 357.5h0M682.6 343.5h0M722.7 335.3h0M729.3 324.9h0M728 312.7h0M739.2 314.2h0M742.5 302.8h0M613.1 513.4h0M631 540.3h0M629.4 528.8h0M632.5 561.3h0M613.8 590.8h0M536.2 482.5h0M524 476.4h0M517.4 463.5h0M518.3 468.8h0M513.9 473.6h0M535.8 479.8h0M548.3 452.1h0M546.1 454.4h0M543.4 460h0M541.5 437.2h0M702.4 347.1h0M695.6 346.1h0M694.6 350.9h0M693.7 356.6h0M685.3 361.8h0M675.1 354.6h0M669.3 356.6h0M660.6 349.6h0M669.5 354.7h0M666.6 345.3h0M665.2 349.2h0M656.4 336.5h0M648.9 334.8h0M649.3 341.7h0M655.1 345.1h0M649.7 317.7h0M631.7 333.2h0M607.9 348.6h0M606.1 343.1h0M592.8 355.4h0M602.8 354.5h0M589.9 378.5h0M546 436.6h0M541.9 442.7h0M537.4 436.8h0M551 408.9h0M569.7 396.6h0M586 389.8h0M881.9 254.9h0M889 263.4h0M890.5 278.4h0M873 263.8h0M876.6 266.5h0M911.4 280.3h0M906.5 271.3h0M901.5 268.1h0M899.2 261.6h0M919.1 285h0M924.4 285.6h0M920.4 280h0M913.5 279.9h0M935.2 294.4h0M930.3 314h0M929.2 330.6h0M914.1 346h0M910.3 340.2h0M930.5 352.9h0M933 342.5h0M935.7 329.5h0M805.4 523.1h0M793.2 526.6h0M788.4 533.9h0M782 533.4h0M787 534.3h0M772.4 548.9h0M791.9 539.5h0M769.2 541h0M744.8 564.6h0M745.4 546.9h0M742.2 538.1h0M747.8 536.5h0M735.4 539.2h0M728.8 531.6h0M714.2 530.2h0M730.2 527.5h0M711.6 536.3h0M703 539.9h0M707 536.5h0M571.5 382.1h0M583.4 377.6h0M613.5 374.8h0M625.8 384.9h0M626.1 389.9h0M603.9 359.5h0M798.7 254h0M781 238.1h0M758.6 254.2h0M930.5 363.3h0M924.6 373.1h0M925.5 378.5h0M940.7 357h0M941.7 349.8h0M947.2 359.8h0M950.9 365.6h0M934.9 355.8h0M946.4 359.4h0M956.2 363.2h0M929.1 353.9h0M927.3 354.1h0M939.7 362.7h0M809.5 510.6h0M815.8 500.3h0M805.6 514.8h0M792.4 497.1h0M802.4 496.8h0M807.3 522.3h0M799.9 526.8h0M821.1 493.1h0M815.8 491.4h0M796.9 480.1h0M827.6 493h0M840.7 497.8h0M837.3 497.2h0M829.1 505h0M824.8 513h0M691 401.6h0M680.9 422.4h0M697.8 407.6h0M707.6 406.1h0M677.1 431.8h0M676.7 439.1h0M672.2 453.5h0M662.4 451.2h0M681.4 487.3h0M685.6 483.8h0M686.5 478.3h0M675.1 493.3h0M656.5 499.7h0M794.9 342.7h0M797.4 353.3h0M802.5 351h0M794.1 358.4h0M798.7 367.2h0M791.7 351.5h0M804.4 371.7h0M799.8 391.4h0M794.3 380.9h0M816.2 292.5h0M820.2 312h0M814 317.2h0M810.5 314.1h0M809.6 291.1h0M798.7 288.2h0M788.1 282.1h0M792.1 284.4h0M776.8 286.7h0M772.8 295.3h0M768.1 290.8h0M775.3 308.9h0M766.6 316.7h0M767.7 304.7h0M766.1 298.7h0M748.7 345h0M753.5 350h0M855.9 364.9h0M854.9 356.3h0M862.9 359.7h0M860.9 363.4h0M839.3 387.9h0M834.6 383.1h0M848 403.1h0M855.4 419.7h0M843.2 426.1h0M864.4 411.5h0M872.2 410.6h0M866.6 401.4h0M616.4 439.1h0M601.3 425.5h0M620.4 402.9h0M619 386.7h0M645.8 395.6h0M643.2 408.1h0M646.8 418.5h0M628 404.6h0M648.3 425.5h0M643.1 433.1h0M634.9 456.3h0M628.1 462.1h0M623 469.3h0M632.9 461.2h0M636.5 467.6h0M631.9 469.6h0M613.4 471.4h0M619.6 468.7h0M730.4 439.5h0M739.5 415.4h0M744.6 417.9h0M746.6 413.7h0M748.8 409.5h0M774.6 389.4h0M763.2 381.7h0M763.4 387.2h0M770.4 374.3h0M781.1 377.1h0M746.6 369.5h0M799 360h0M793.4 360.5h0M809.8 368.5h0M793.4 341.5h0M809.2 333.3h0M822.1 324.7h0M790.9 334.7h0M664.4 452h0M651.4 478.1h0M647.2 488.5h0M632.5 488.2h0M797.4 434.2h0M781.1 436.4h0M781.4 444.7h0M773.9 449h0M758 440.7h0M747 473.2h0M754.9 465.7h0M749.9 479.6h0M728.2 450.4h0M709.8 434.8h0M706.9 445.8h0M721.2 422.8h0M722.5 439.1h0M725.9 443h0M724.5 447.1h0M715.6 406.5h0M694.3 414.6h0M880 370.5h0M884.3 365.1h0M889.6 365.3h0M874.6 412.4h0M874.5 419.5h0M782.2 418.9h0M791.9 412.3h0M798 406.1h0M814 411h0M803.6 411.2h0M797.9 407.7h0M816.8 390.6h0M808.1 386.7h0M849.6 379.6h0M856.4 381.4h0M714.3 460.3h0M710.4 455h0M702.3 448h0M728.3 472.3h0M734.3 470.5h0M736 460.6h0M743.1 464.8h0M739.9 487h0M763.2 507.6h0M759.3 515.7h0M775.1 504.2h0M783.7 475.2h0M792.8 473.8h0M785.7 448.5h0M820.3 455.7h0M875.4 342.3h0M890.7 347.5h0M894.3 357.1h0M885.7 358.4h0M905.4 353h0M898.2 364.5h0M907.9 389.8h0M903.8 394.8h0M891 402.5h0M880.4 401.4h0M907.7 408.9h0M907.1 418.7h0M898.6 433.9h0M910.6 446.9h0M902.7 447.9h0M901.1 478.5h0M709.4 497h0M694.8 506.7h0M661.9 522.1h0M661 527.7h0M649.6 550.2h0M658 535.1h0M643.9 565.6h0M646.2 560.1h0M628.6 571h0M628.1 565.3h0M621.5 588h0M755.9 416.2h0M763.4 407.6h0M768.6 404.2h0M755.1 427.7h0M759.8 428.6h0M768 424.1h0M778.2 414.7h0M766.8 449.3h0M762.5 466.1h0M767 465.5h0M761.5 461.5h0M758.5 450h0M773.3 475.3h0M761.4 483.2h0M765.4 477.9h0M775.8 468.8h0M745 487.9h0M736.7 483.6h0M732.6 488.8h0M735.1 494.4h0M725.9 483.9h0M728.6 502.7h0M728.6 512.2h0M735.9 517.2h0M724.7 519h0M711.5 522.4h0M864.4 325.5h0M867.5 323.7h0M855 303.6h0M660.5 455.5h0M648.6 469h0M625.2 473.4h0M626.6 462.9h0M629.6 482.8h0M633.9 496.8h0M806.4 429.2h0M826.2 434.5h0M831.9 441.5h0M838.5 419.2h0M846.7 417.8h0M868.5 429.8h0M851.7 430h0M894.1 412.5h0M907.5 393.8h0M901.6 392.6h0M715.3 377.5h0M729.3 407h0M717.1 421.3h0M726.8 418.4h0M710.3 423.1h0M703.5 432.5h0M689.8 454.2h0M671.1 443.5h0M669.8 439h0M678.2 439.6h0M713.8 468h0M698.7 475.1h0M692.5 477.5h0M681.8 460.2h0M689.8 457.8h0M697.6 487.4h0M699.8 496.2h0M687.1 491.9h0M677.4 489.2h0M674.4 482.1h0M682.9 483h0M695.2 512.7h0M696.4 514h0M694.1 507.9h0M693 528.2h0M623.8 422h0M648.7 380h0M659.9 382.6h0M654.2 371.4h0M671.5 395.7h0M666.6 412.4h0M676.3 408.7h0M680.6 403.2h0M655.9 404.3h0M666.7 400h0M634.1 415.7h0M623.3 423.9h0M613.7 428h0M606 430.4h0M622.6 427.9h0M581.8 431.3h0M580.3 424h0M594.1 463.4h0M643.6 477.8h0M636.9 479.3h0M628.1 501.9h0M606.3 490.3h0M614.2 505.9h0M581.3 479h0M573.1 473.3h0M579.6 483.4h0M613 464.2h0M605.3 479.1h0M616.4 456h0M761 355.8h0M755.4 342.6h0M739.9 354.2h0M730.6 353.2h0M739.4 346.4h0M745.8 344h0M725.6 356.9h0M707.7 369.3h0M708.3 381h0M711 359.8h0M711.5 386.5h0M714.9 384.6h0M697.5 398h0M731.7 383.6h0M752.2 392.5h0M772.4 399h0M766.8 396.3h0M756.2 398.1h0M868.2 286.6h0M859.8 284.3h0M843.2 281.6h0M837.7 278.9h0M843.3 280.8h0M814.1 265.6h0M804.8 264.4h0M815.1 252.9h0M802.2 270h0M792.6 269.1h0M791.6 275.6h0M779.5 268.3h0M781.9 257.1h0M779.3 251.4h0M785.8 283.2h0M763.3 280.3h0M851 396.8h0M817.8 416.9h0M833.4 431.9h0M827.2 435.4h0M819.1 441.3h0M815.4 446.8h0M802.4 439.3h0M803.7 432.5h0M788.1 463.5h0M810.6 342.4h0M816.4 343.8h0M834.3 335.8h0M808 348.1h0M796.8 350.1h0M808.8 342.6h0M788 358.9h0M757 374.2h0M740.6 358.9h0M734.3 358.5h0M726.3 365.8h0M840.8 291.1h0M863.6 304h0M838.9 314.2h0M834 312.9h0M870.2 302.9h0M877.3 306.7h0M877.1 299.8h0M872.8 294.9h0M882 314.9h0M888.3 320.1h0M907 307.9h0M900.6 317.6h0M891.3 327.7h0M891 320.7h0M906.4 300.6h0M915.5 291.6h0M911.6 287.8h0M924.8 291.7h0M921.2 286.4h0M932.6 284.7h0M830.1 362.3h0M830.7 348.4h0M835.6 347.3h0M837.2 355.2h0M824.8 383.4h0M826.7 377.5h0M826.7 369.9h0M831.7 375.6h0M823.6 397.8h0M825.3 424h0M820.7 420.9h0M809.1 417.2h0M803.9 418.4h0M837.9 434.4h0M835.1 428.3h0M836.4 422.6h0M832.4 438.1h0M833.8 445h0M828.6 443.1h0M815.9 428.1h0M814.3 423.9h0M817.7 421h0M824.1 425.6h0M838.5 459.6h0M832.1 454.7h0M845.6 439.6h0M823.3 472.9h0M864 336.1h0M873.7 340.5h0M872 348.1h0M838.3 318.3h0M837.4 322.1h0M838.6 332.8h0M838.6 342.5h0M835.1 345.9h0M830.4 343.7h0M830.4 301.2h0M829.8 285.7h0M835.8 288.6h0M836.5 294.1h0M840 298h0M843.2 307.8h0M836 311.8h0M822.2 267h0M840 269.1h0M844.4 252.9h0M852.9 240h0M845 207.6h0M835.2 205.8h0M666.1 424.6h0M687.6 431.5h0M699.5 446.9h0M700.1 451h0M694.9 449.6h0M688.9 452.2h0M683.4 450.6h0M712.9 463.9h0M709.1 468h0M702.4 474.6h0M726 437.8h0M720.5 441.2h0M715.1 438.5h0M738.2 436.3h0M815.6 366.3h0M815 360.5h0M823 366.9h0M885 374.8h0M885.9 368.1h0M880.2 384h0M868.3 393.8h0M864.7 391.1h0M863.3 380.6h0M866.5 405.9h0M877.8 409.5h0M864.8 420h0M868 428.4h0M866.2 414.8h0M874.7 415.7h0M873.8 419.9h0M864.2 436.5h0M856.3 437.7h0M851.2 456.2h0M860.2 460.3h0M656.7 374.9h0M644.1 373.9h0M687.9 380.2h0M873.2 324h0M880.9 331.1h0M891.7 334.9h0M868.3 308.5h0M874.5 309.3h0M878.7 304.9h0M878.3 311.6h0M872.8 315.5h0M893.5 313.8h0M905.2 314.2h0M656.1 359.4h0M635.9 376.5h0M621.2 364.3h0M616.6 368.9h0M610.5 369.4h0M597.1 378.3h0M632.5 362.3h0M620.6 357.6h0M615.2 359.7h0M648.6 355.2h0M642.8 356.4h0M657.9 365.6h0M581.4 461.8h0M584.1 468h0M591.7 476.8h0M572.7 453.8h0M580.3 462.2h0M587.3 470.9h0M581.6 435.7h0M591 438.8h0M582.5 440.1h0M567.2 431h0M570.1 423.5h0M563.8 423.4h0M561.3 427h0M591.3 412.8h0M588.8 407.6h0M582.5 406.1h0M601.9 414.4h0M603.5 408.8h0M614.9 391.2h0M619 395.6h0M617.6 402.1h0M616.2 377.9h0M634.3 379.8h0M628.3 376.2h0M622.3 377.8h0M616.1 370.6h0M640.9 350.4h0M630.6 354.8h0M620.2 358.1h0M615.2 357.8h0M647.3 343.9h0M651.6 348.2h0M651.8 354.5h0M641.3 334.4h0M646.1 330.2h0M662.7 327.9h0M634.7 327.1h0M649 311.4h0M644.2 314h0M639.6 320.6h0M656.7 310.9h0M666.4 316.5h0M661.9 311.6h0M848.4 268.7h0M870 264.1h0M861 281.8h0M867.9 247.2h0M871.8 235.7h0M869.8 220.7h0M877.7 213.6h0M566.9 463.7h0M563.3 476.7h0M569.6 478h0M587.5 473.5h0M557.3 478.7h0M564.9 484.4h0M560.3 479.7h0M577 493.2h0M584.6 478.8h0M584.9 472.2h0M582.5 507.7h0M580 502h0M591.8 517.1h0M595.9 513.8h0M595 532.7h0M589.2 530.3h0M601.9 518.2h0M707 529.7h0M701.1 532.7h0M717 508.4h0M723.2 499.1h0M735.6 522.1h0M731.2 517.8h0M741.9 519.2h0M754.5 526.1h0M764.2 506.4h0M777.1 518.3h0M779.3 523.8h0M767.9 529.1h0M774.2 528h0M818.4 481.8h0M811.4 489.3h0M800.5 506.5h0M825.9 466.5h0M821.2 457.1h0M833.8 481.1h0M843 471.5h0M617.8 502.8h0M626.4 511.3h0M624.7 510.8h0M607.7 477.5h0M599.9 458.7h0M593.6 460.9h0M605.7 457.8h0M611.9 453.8h0M606.2 453.5h0M601.5 458h0M590 459.9h0M777.6 524.6h0M770.8 525h0M767.1 526.9h0M755.4 536.5h0M756 545.4h0M743.8 540.5h0M743.4 524.3h0M740.5 546.4h0M722.3 545.6h0M713.7 541.2h0M718.8 534.5h0M718.3 539h0M699.9 550.6h0M685 549.8h0M690 548h0M674.6 558.5h0M679.5 561.7h0M685 561.5h0M689.4 566h0M685.2 540.3h0M666.1 553.7h0M673.2 546.6h0M658.4 567.6h0M628.7 581.9h0M624.2 585.2h0M616.9 585.9h0M611.7 553.7h0M915.7 305.6h0M904.5 343.5h0M908.5 341.1h0M913.1 342.2h0M915.4 370.5h0M891.9 389.5h0M895.2 395.4h0M901.6 398h0M765.3 298.9h0M763.5 327.1h0M759.6 300.1h0M757.9 303.9h0M767.9 308.9h0M774.6 308.2h0M752.3 286.2h0M739.4 275h0M745.1 272.3h0M740.7 264.5h0M729.1 265.5h0M733.3 269.1h0M737.6 246.5h0M725.7 244.9h0M750.8 254.8h0M745.8 258.9h0M752.3 243.7h0M610 553.1h0M611.6 568.3h0M609.3 573.9h0M836.7 235.2h0M877.9 210.7h0M880.8 218h0M878.4 200.5h0M872.1 193h0M839.8 241.9h0M848.8 248.1h0M830.7 238.8h0M825.7 244.3h0M924.8 269.3h0M919.7 264.5h0M936.2 298.7h0M947.6 300.4h0M947.8 319.7h0M947.1 330.3h0M956.6 300h0M930.1 410.6h0M933.7 391.9h0M929.7 396h0M946.9 383.5h0M937 397.7h0M896.2 470.4h0M873.5 446.5h0M865.9 480h0M867.1 473.8h0M872.5 470.9h0M528.9 460.4h0M541.3 449.3h0M947.5 290.6h0M936.7 283.1h0M934.9 275.5h0M928.1 275.5h0M841.8 196.3h0M856 197.4h0M878.6 199.9h0M885.3 210.1h0M878.7 212.9h0M793.8 227.1h0M800 233.3h0M807 236.7h0M819.1 235.3h0M829.3 232.1h0M530.1 404.5h0M536.9 404.4h0M550.9 390.4h0M557.1 389.6h0M662.5 319.4h0M719.6 240h0M729.1 236.7h0"/><path stroke="#b4b4b4" stroke-width="1.800" d="M859.4 489.3h0M856.9 461.9h0M856.4 468.4h0M850.7 477.3h0M867.5 454.8h0M858 461h0M875.9 459.4h0M884.2 457.3h0M881.1 451.9h0M875.3 449.7h0M893.2 445.8h0M889.5 440.2h0M688.7 352.5h0M684.2 357.5h0M682.6 343.5h0M722.7 335.3h0M729.3 324.9h0M728 312.7h0M739.2 314.2h0M742.5 302.8h0M613.1 513.4h0M631 540.3h0M629.4 528.8h0M632.5 561.3h0M613.8 590.8h0M536.2 482.5h0M524 476.4h0M517.4 463.5h0M518.3 468.8h0M513.9 473.6h0M535.8 479.8h0M548.3 452.1h0M546.1 454.4h0M543.4 460h0M541.5 437.2h0M702.4 347.1h0M695.6 346.1h0M694.6 350.9h0M693.7 356.6h0M685.3 361.8h0M675.1 354.6h0M669.3 356.6h0M660.6 349.6h0M669.5 354.7h0M666.6 345.3h0M665.2 349.2h0M656.4 336.5h0M648.9 334.8h0M649.3 341.7h0M655.1 345.1h0M649.7 317.7h0M631.7 333.2h0M607.9 348.6h0M606.1 343.1h0M592.8 355.4h0M602.8 354.5h0M589.9 378.5h0M546 436.6h0M541.9 442.7h0M537.4 436.8h0M551 408.9h0M569.7 396.6h0M586 389.8h0M881.9 254.9h0M889 263.4h0M890.5 278.4h0M873 263.8h0M876.6 266.5h0M911.4 280.3h0M906.5 271.3h0M901.5 268.1h0M899.2 261.6h0M919.1 285h0M924.4 285.6h0M920.4 280h0M913.5 279.9h0M935.2 294.4h0M930.3 314h0M929.2 330.6h0M914.1 346h0M910.3 340.2h0M930.5 352.9h0M933 342.5h0M935.7 329.5h0M805.4 523.1h0M793.2 526.6h0M788.4 533.9h0M782 533.4h0M787 534.3h0M772.4 548.9h0M791.9 539.5h0M769.2 541h0M744.8 564.6h0M745.4 546.9h0M742.2 538.1h0M747.8 536.5h0M735.4 539.2h0M728.8 531.6h0M714.2 530.2h0M730.2 527.5h0M711.6 536.3h0M703 539.9h0M707 536.5h0M571.5 382.1h0M583.4 377.6h0M613.5 374.8h0M625.8 384.9h0M626.1 389.9h0M603.9 359.5h0M798.7 254h0M781 238.1h0M758.6 254.2h0M930.5 363.3h0M924.6 373.1h0M925.5 378.5h0M940.7 357h0M941.7 349.8h0M947.2 359.8h0M950.9 365.6h0M934.9 355.8h0M946.4 359.4h0M956.2 363.2h0M929.1 353.9h0M927.3 354.1h0M939.7 362.7h0M809.5 510.6h0M815.8 500.3h0M805.6 514.8h0M792.4 497.1h0M802.4 496.8h0M807.3 522.3h0M799.9 526.8h0M821.1 493.1h0M815.8 491.4h0M796.9 480.1h0M827.6 493h0M840.7 497.8h0M837.3 497.2h0M829.1 505h0M824.8 513h0M691 401.6h0M680.9 422.4h0M697.8 407.6h0M707.6 406.1h0M677.1 431.8h0M676.7 439.1h0M672.2 453.5h0M662.4 451.2h0M681.4 487.3h0M685.6 483.8h0M686.5 478.3h0M675.1 493.3h0M656.5 499.7h0M794.9 342.7h0M797.4 353.3h0M802.5 351h0M794.1 358.4h0M798.7 367.2h0M791.7 351.5h0M804.4 371.7h0M799.8 391.4h0M794.3 380.9h0M816.2 292.5h0M820.2 312h0M814 317.2h0M810.5 314.1h0M809.6 291.1h0M798.7 288.2h0M788.1 282.1h0M792.1 284.4h0M776.8 286.7h0M772.8 295.3h0M768.1 290.8h0M775.3 308.9h0M766.6 316.7h0M767.7 304.7h0M766.1 298.7h0M748.7 345h0M753.5 350h0M855.9 364.9h0M854.9 356.3h0M862.9 359.7h0M860.9 363.4h0M839.3 387.9h0M834.6 383.1h0M848 403.1h0M855.4 419.7h0M843.2 426.1h0M864.4 411.5h0M872.2 410.6h0M866.6 401.4h0M616.4 439.1h0M601.3 425.5h0M620.4 402.9h0M619 386.7h0M645.8 395.6h0M643.2 408.1h0M646.8 418.5h0M628 404.6h0M648.3 425.5h0M643.1 433.1h0M634.9 456.3h0M628.1 462.1h0M623 469.3h0M632.9 461.2h0M636.5 467.6h0M631.9 469.6h0M613.4 471.4h0M619.6 468.7h0M730.4 439.5h0M739.5 415.4h0M744.6 417.9h0M746.6 413.7h0M748.8 409.5h0M774.6 389.4h0M763.2 381.7h0M763.4 387.2h0M770.4 374.3h0M781.1 377.1h0M746.6 369.5h0M799 360h0M793.4 360.5h0M809.8 368.5h0M793.4 341.5h0M809.2 333.3h0M822.1 324.7h0M790.9 334.7h0M664.4 452h0M651.4 478.1h0M647.2 488.5h0M632.5 488.2h0M797.4 434.2h0M781.1 436.4h0M781.4 444.7h0M773.9 449h0M758 440.7h0M747 473.2h0M754.9 465.7h0M749.9 479.6h0M728.2 450.4h0M709.8 434.8h0M706.9 445.8h0M721.2 422.8h0M722.5 439.1h0M725.9 443h0M724.5 447.1h0M715.6 406.5h0M694.3 414.6h0M880 370.5h0M884.3 365.1h0M889.6 365.3h0M874.6 412.4h0M874.5 419.5h0M782.2 418.9h0M791.9 412.3h0M798 406.1h0M814 411h0M803.6 411.2h0M797.9 407.7h0M816.8 390.6h0M808.1 386.7h0M849.6 379.6h0M856.4 381.4h0M714.3 460.3h0M710.4 455h0M702.3 448h0M728.3 472.3h0M734.3 470.5h0M736 460.6h0M743.1 464.8h0M739.9 487h0M763.2 507.6h0M759.3 515.7h0M775.1 504.2h0M783.7 475.2h0M792.8 473.8h0M785.7 448.5h0M820.3 455.7h0M875.4 342.3h0M890.7 347.5h0M894.3 357.1h0M885.7 358.4h0M905.4 353h0M898.2 364.5h0M907.9 389.8h0M903.8 394.8h0M891 402.5h0M880.4 401.4h0M907.7 408.9h0M907.1 418.7h0M898.6 433.9h0M910.6 446.9h0M902.7 447.9h0M901.1 478.5h0M709.4 497h0M694.8 506.7h0M661.9 522.1h0M661 527.7h0M649.6 550.2h0M658 535.1h0M643.9 565.6h0M646.2 560.1h0M628.6 571h0M628.1 565.3h0M621.5 588h0M755.9 416.2h0M763.4 407.6h0M768.6 404.2h0M755.1 427.7h0M759.8 428.6h0M768 424.1h0M778.2 414.7h0M766.8 449.3h0M762.5 466.1h0M767 465.5h0M761.5 461.5h0M758.5 450h0M773.3 475.3h0M761.4 483.2h0M765.4 477.9h0M775.8 468.8h0M745 487.9h0M736.7 483.6h0M732.6 488.8h0M735.1 494.4h0M725.9 483.9h0M728.6 502.7h0M728.6 512.2h0M735.9 517.2h0M724.7 519h0M711.5 522.4h0M864.4 325.5h0M867.5 323.7h0M855 303.6h0M660.5 455.5h0M648.6 469h0M625.2 473.4h0M626.6 462.9h0M629.6 482.8h0M633.9 496.8h0M806.4 429.2h0M826.2 434.5h0M831.9 441.5h0M838.5 419.2h0M846.7 417.8h0M868.5 429.8h0M851.7 430h0M894.1 412.5h0M907.5 393.8h0M901.6 392.6h0M715.3 377.5h0M729.3 407h0M717.1 421.3h0M726.8 418.4h0M710.3 423.1h0M703.5 432.5h0M689.8 454.2h0M671.1 443.5h0M669.8 439h0M678.2 439.6h0M713.8 468h0M698.7 475.1h0M692.5 477.5h0M681.8 460.2h0M689.8 457.8h0M697.6 487.4h0M699.8 496.2h0M687.1 491.9h0M677.4 489.2h0M674.4 482.1h0M682.9 483h0M695.2 512.7h0M696.4 514h0M694.1 507.9h0M693 528.2h0M623.8 422h0M648.7 380h0M659.9 382.6h0M654.2 371.4h0M671.5 395.7h0M666.6 412.4h0M676.3 408.7h0M680.6 403.2h0M655.9 404.3h0M666.7 400h0M634.1 415.7h0M623.3 423.9h0M613.7 428h0M606 430.4h0M622.6 427.9h0M581.8 431.3h0M580.3 424h0M594.1 463.4h0M643.6 477.8h0M636.9 479.3h0M628.1 501.9h0M606.3 490.3h0M614.2 505.9h0M581.3 479h0M573.1 473.3h0M579.6 483.4h0M613 464.2h0M605.3 479.1h0M616.4 456h0M761 355.8h0M755.4 342.6h0M739.9 354.2h0M730.6 353.2h0M739.4 346.4h0M745.8 344h0M725.6 356.9h0M707.7 369.3h0M708.3 381h0M711 359.8h0M711.5 386.5h0M714.9 384.6h0M697.5 398h0M731.7 383.6h0M752.2 392.5h0M772.4 399h0M766.8 396.3h0M756.2 398.1h0M868.2 286.6h0M859.8 284.3h0M843.2 281.6h0M837.7 278.9h0M843.3 280.8h0M814.1 265.6h0M804.8 264.4h0M815.1 252.9h0M802.2 270h0M792.6 269.1h0M791.6 275.6h0M779.5 268.3h0M781.9 257.1h0M779.3 251.4h0M785.8 283.2h0M763.3 280.3h0M851 396.8h0M817.8 416.9h0M833.4 431.9h0M827.2 435.4h0M819.1 441.3h0M815.4 446.8h0M802.4 439.3h0M803.7 432.5h0M788.1 463.5h0M810.6 342.4h0M816.4 343.8h0M834.3 335.8h0M808 348.1h0M796.8 350.1h0M808.8 342.6h0M788 358.9h0M757 374.2h0M740.6 358.9h0M734.3 358.5h0M726.3 365.8h0M840.8 291.1h0M863.6 304h0M838.9 314.2h0M834 312.9h0M870.2 302.9h0M877.3 306.7h0M877.1 299.8h0M872.8 294.9h0M882 314.9h0M888.3 320.1h0M907 307.9h0M900.6 317.6h0M891.3 327.7h0M891 320.7h0M906.4 300.6h0M915.5 291.6h0M911.6 287.8h0M924.8 291.7h0M921.2 286.4h0M932.6 284.7h0M830.1 362.3h0M830.7 348.4h0M835.6 347.3h0M837.2 355.2h0M824.8 383.4h0M826.7 377.5h0M826.7 369.9h0M831.7 375.6h0M823.6 397.8h0M825.3 424h0M820.7 420.9h0M809.1 417.2h0M803.9 418.4h0M837.9 434.4h0M835.1 428.3h0M836.4 422.6h0M832.4 438.1h0M833.8 445h0M828.6 443.1h0M815.9 428.1h0M814.3 423.9h0M817.7 421h0M824.1 425.6h0M838.5 459.6h0M832.1 454.7h0M845.6 439.6h0M823.3 472.9h0M864 336.1h0M873.7 340.5h0M872 348.1h0M838.3 318.3h0M837.4 322.1h0M838.6 332.8h0M838.6 342.5h0M835.1 345.9h0M830.4 343.7h0M830.4 301.2h0M829.8 285.7h0M835.8 288.6h0M836.5 294.1h0M840 298h0M843.2 307.8h0M836 311.8h0M822.2 267h0M840 269.1h0M844.4 252.9h0M852.9 240h0M845 207.6h0M835.2 205.8h0M666.1 424.6h0M687.6 431.5h0M699.5 446.9h0M700.1 451h0M694.9 449.6h0M688.9 452.2h0M683.4 450.6h0M712.9 463.9h0M709.1 468h0M702.4 474.6h0M726 437.8h0M720.5 441.2h0M715.1 438.5h0M738.2 436.3h0M815.6 366.3h0M815 360.5h0M823 366.9h0M885 374.8h0M885.9 368.1h0M880.2 384h0M868.3 393.8h0M864.7 391.1h0M863.3 380.6h0M866.5 405.9h0M877.8 409.5h0M864.8 420h0M868 428.4h0M866.2 414.8h0M874.7 415.7h0M873.8 419.9h0M864.2 436.5h0M856.3 437.7h0M851.2 456.2h0M860.2 460.3h0M656.7 374.9h0M644.1 373.9h0M687.9 380.2h0M873.2 324h0M880.9 331.1h0M891.7 334.9h0M868.3 308.5h0M874.5 309.3h0M878.7 304.9h0M878.3 311.6h0M872.8 315.5h0M893.5 313.8h0M905.2 314.2h0M656.1 359.4h0M635.9 376.5h0M621.2 364.3h0M616.6 368.9h0M610.5 369.4h0M597.1 378.3h0M632.5 362.3h0M620.6 357.6h0M615.2 359.7h0M648.6 355.2h0M642.8 356.4h0M657.9 365.6h0M581.4 461.8h0M584.1 468h0M591.7 476.8h0M572.7 453.8h0M580.3 462.2h0M587.3 470.9h0M581.6 435.7h0M591 438.8h0M582.5 440.1h0M567.2 431h0M570.1 423.5h0M563.8 423.4h0M561.3 427h0M591.3 412.8h0M588.8 407.6h0M582.5 406.1h0M601.9 414.4h0M603.5 408.8h0M614.9 391.2h0M619 395.6h0M617.6 402.1h0M616.2 377.9h0M634.3 379.8h0M628.3 376.2h0M622.3 377.8h0M616.1 370.6h0M640.9 350.4h0M630.6 354.8h0M620.2 358.1h0M615.2 357.8h0M647.3 343.9h0M651.6 348.2h0M651.8 354.5h0M641.3 334.4h0M646.1 330.2h0M662.7 327.9h0M634.7 327.1h0M649 311.4h0M644.2 314h0M639.6 320.6h0M656.7 310.9h0M666.4 316.5h0M661.9 311.6h0M848.4 268.7h0M870 264.1h0M861 281.8h0M867.9 247.2h0M871.8 235.7h0M869.8 220.7h0M877.7 213.6h0M566.9 463.7h0M563.3 476.7h0M569.6 478h0M587.5 473.5h0M557.3 478.7h0M564.9 484.4h0M560.3 479.7h0M577 493.2h0M584.6 478.8h0M584.9 472.2h0M582.5 507.7h0M580 502h0M591.8 517.1h0M595.9 513.8h0M595 532.7h0M589.2 530.3h0M601.9 518.2h0M707 529.7h0M701.1 532.7h0M717 508.4h0M723.2 499.1h0M735.6 522.1h0M731.2 517.8h0M741.9 519.2h0M754.5 526.1h0M764.2 506.4h0M777.1 518.3h0M779.3 523.8h0M767.9 529.1h0M774.2 528h0M818.4 481.8h0M811.4 489.3h0M800.5 506.5h0M825.9 466.5h0M821.2 457.1h0M833.8 481.1h0M843 471.5h0M617.8 502.8h0M626.4 511.3h0M624.7 510.8h0M607.7 477.5h0M599.9 458.7h0M593.6 460.9h0M605.7 457.8h0M611.9 453.8h0M606.2 453.5h0M601.5 458h0M590 459.9h0M777.6 524.6h0M770.8 525h0M767.1 526.9h0M755.4 536.5h0M756 545.4h0M743.8 540.5h0M743.4 524.3h0M740.5 546.4h0M722.3 545.6h0M713.7 541.2h0M718.8 534.5h0M718.3 539h0M699.9 550.6h0M685 549.8h0M690 548h0M674.6 558.5h0M679.5 561.7h0M685 561.5h0M689.4 566h0M685.2 540.3h0M666.1 553.7h0M673.2 546.6h0M658.4 567.6h0M628.7 581.9h0M624.2 585.2h0M616.9 585.9h0M611.7 553.7h0M915.7 305.6h0M904.5 343.5h0M908.5 341.1h0M913.1 342.2h0M915.4 370.5h0M891.9 389.5h0M895.2 395.4h0M901.6 398h0M765.3 298.9h0M763.5 327.1h0M759.6 300.1h0M757.9 303.9h0M767.9 308.9h0M774.6 308.2h0M752.3 286.2h0M739.4 275h0M745.1 272.3h0M740.7 264.5h0M729.1 265.5h0M733.3 269.1h0M737.6 246.5h0M725.7 244.9h0M750.8 254.8h0M745.8 258.9h0M752.3 243.7h0M610 553.1h0M611.6 568.3h0M609.3 573.9h0M836.7 235.2h0M877.9 210.7h0M880.8 218h0M878.4 200.5h0M872.1 193h0M839.8 241.9h0M848.8 248.1h0M830.7 238.8h0M825.7 244.3h0M924.8 269.3h0M919.7 264.5h0M936.2 298.7h0M947.6 300.4h0M947.8 319.7h0M947.1 330.3h0M956.6 300h0M930.1 410.6h0M933.7 391.9h0M929.7 396h0M946.9 383.5h0M937 397.7h0M896.2 470.4h0M873.5 446.5h0M865.9 480h0M867.1 473.8h0M872.5 470.9h0M528.9 460.4h0M541.3 449.3h0M947.5 290.6h0M936.7 283.1h0M934.9 275.5h0M928.1 275.5h0M841.8 196.3h0M856 197.4h0M878.6 199.9h0M885.3 210.1h0M878.7 212.9h0M793.8 227.1h0M800 233.3h0M807 236.7h0M819.1 235.3h0M829.3 232.1h0M530.1 404.5h0M536.9 404.4h0M550.9 390.4h0M557.1 389.6h0M662.5 319.4h0M719.6 240h0M729.1 236.7h0" transform="translate(-0.3,-0.3)"/><path stroke="#a30808" stroke-width="4.100" d="M839.9 463h0M854.6 469.8h0M856.2 455h0M898.5 470.2h0M873.5 436.5h0M897.1 434.8h0M705.1 339.5h0M744.7 315.1h0M738.1 305.3h0M619.8 523.6h0M607.7 589.3h0M529.6 457.9h0M546.8 458h0M544.8 466.1h0M539 442.2h0M701.3 334.9h0M698 341.3h0M695.5 373.6h0M667.2 349.1h0M659.2 342h0M663.3 324.7h0M668.1 326.4h0M634.1 327.8h0M617.8 348.7h0M599.9 360.2h0M598.7 375.6h0M541.5 413.2h0M554.2 415.1h0M538.9 426h0M582.7 383.7h0M888.3 253.1h0M886.9 269.5h0M906.3 285.3h0M927 294.7h0M928 288.5h0M936.5 285.4h0M770.9 542.3h0M717.2 536.7h0M699.5 534.2h0M576.5 380.3h0M595.8 400.7h0M601.2 378.8h0M597.7 349.5h0M613.8 355.8h0M768.2 251.9h0M945.6 375.1h0M937.9 379h0M916.1 381h0M815 494.9h0M831.4 514.7h0M688.7 374.7h0M686.6 478.1h0M664.1 505.1h0M650.1 499.1h0M809.9 344.7h0M790.4 353.7h0M782.1 352.7h0M806.5 365.8h0M810.3 296.9h0M805.4 277.6h0M752.8 327.6h0M817.3 334.6h0M824.9 355.6h0M838.9 365h0M840.1 364.4h0M622.4 449h0M592.6 430.6h0M616.6 417.6h0M627.9 408.8h0M608 399.4h0M649.1 440.5h0M625.5 475.2h0M731.6 427.6h0M788.7 404.7h0M765.7 374.7h0M792.9 376.2h0M805.7 369.5h0M827.6 328.2h0M798.5 325.7h0M655.4 475.4h0M813.9 437.6h0M772 433.2h0M759.8 447.2h0M757.4 446.7h0M735.9 467.6h0M758.7 476.4h0M878.2 357.5h0M800.7 402.3h0M811.5 405.1h0M696.1 445.3h0M727.7 458.7h0M722.2 476.8h0M722.6 483.6h0M717.4 485.2h0M726.6 471.8h0M743.8 500h0M759 499.4h0M769.2 488.4h0M783.8 464.9h0M799.6 467.1h0M857 350.6h0M902.9 347.9h0M899.3 359.8h0M900.5 419.5h0M904.4 444.5h0M719.9 499.5h0M701.3 497.2h0M665.9 526.8h0M651.8 537.5h0M661.3 525.5h0M666.5 527.4h0M638.8 581.3h0M621.5 581.8h0M767.3 438.3h0M869.4 310.3h0M844.8 314.7h0M851.2 309.4h0M846.9 309.1h0M659.2 468.5h0M644.1 467h0M808.3 422.9h0M818.9 450.3h0M848.5 439.1h0M903.9 406.4h0M902.4 398.2h0M741.2 386.4h0M738.4 404.9h0M693.2 437.4h0M694.9 470.9h0M682.1 487.7h0M696.6 506.9h0M663.9 434.6h0M642.5 426.3h0M639.2 426.5h0M627.2 426.1h0M667 405.3h0M647.6 408h0M631.5 419.6h0M655.9 452.8h0M632.9 492.8h0M592.9 484.3h0M581.9 484h0M612.3 459.8h0M627.1 457.5h0M757.9 349.9h0M757.8 350.1h0M760.7 357.8h0M702.3 367.1h0M705.8 387.6h0M725.4 380.1h0M748.1 388h0M772.2 392.4h0M895.9 296.7h0M892.1 305.3h0M790.7 261.7h0M765 274.5h0M856 402.6h0M820.1 448h0M784.4 450.2h0M813.5 348.7h0M734.2 353.4h0M881.1 312.8h0M881.3 320.1h0M918.3 303.5h0M847.6 354.1h0M834.1 380.8h0M815.2 387h0M840.1 446.1h0M827 469.7h0M845.3 314.1h0M837.2 299.4h0M822.7 283.8h0M856.6 245h0M848 244.5h0M849 227.5h0M868.1 388.8h0M885.8 405.3h0M875 427.1h0M682.7 375.7h0M700.6 393.8h0M894.4 338.2h0M859.9 320.8h0M862.8 305.4h0M898.5 299.6h0M606 358.4h0M642.5 360h0M658.7 358.5h0M578.2 449.4h0M558.9 412.5h0M593 427.4h0M597.5 409.1h0M607.3 375.1h0M641.2 378.8h0M634.2 390.9h0M637.1 340.3h0M645.8 325.3h0M657.1 320.5h0M664 305.2h0M865 252h0M875.7 236.5h0M860.4 217.7h0M873.5 206.4h0M882.2 210.5h0M857.3 205.8h0M581 469.7h0M585.8 521.5h0M700.9 538.1h0M697.4 530.4h0M721.5 515.5h0M738.5 515.7h0M760.2 515.7h0M855.7 479.9h0M616.6 473h0M615.5 477.2h0M789.1 518.5h0M750.9 531.1h0M726.4 542.1h0M713.9 554.6h0M700.5 543.3h0M696.5 531h0M668.3 543.3h0M665.6 561.6h0M626.7 568.9h0M633.4 575.2h0M623.8 592.4h0M610.8 592.9h0M620.2 581.9h0M908.8 340.2h0M917.3 353.9h0M904.4 382.2h0M741.4 292h0M748.8 267.8h0M733.3 254.1h0M735.5 252.7h0M746.7 243.8h0M603.6 577h0M623.3 556h0M856.5 211h0M840 215.1h0M831.1 233.2h0M931.4 346.2h0M875.5 472.6h0M516.5 464.6h0M535.6 450.5h0M545.9 451.3h0M625 571.6h0M941.6 283.8h0M877.5 218.2h0M887.9 231.6h0M747.9 575.4h0M529.3 399.6h0M544.7 394h0M559.1 383.6h0M570.7 385.7h0M677.6 323.5h0M732.9 241.3h0"/><path stroke="#c01818" stroke-width="3.200" d="M839.9 463h0M854.6 469.8h0M856.2 455h0M898.5 470.2h0M873.5 436.5h0M897.1 434.8h0M705.1 339.5h0M744.7 315.1h0M738.1 305.3h0M619.8 523.6h0M607.7 589.3h0M529.6 457.9h0M546.8 458h0M544.8 466.1h0M539 442.2h0M701.3 334.9h0M698 341.3h0M695.5 373.6h0M667.2 349.1h0M659.2 342h0M663.3 324.7h0M668.1 326.4h0M634.1 327.8h0M617.8 348.7h0M599.9 360.2h0M598.7 375.6h0M541.5 413.2h0M554.2 415.1h0M538.9 426h0M582.7 383.7h0M888.3 253.1h0M886.9 269.5h0M906.3 285.3h0M927 294.7h0M928 288.5h0M936.5 285.4h0M770.9 542.3h0M717.2 536.7h0M699.5 534.2h0M576.5 380.3h0M595.8 400.7h0M601.2 378.8h0M597.7 349.5h0M613.8 355.8h0M768.2 251.9h0M945.6 375.1h0M937.9 379h0M916.1 381h0M815 494.9h0M831.4 514.7h0M688.7 374.7h0M686.6 478.1h0M664.1 505.1h0M650.1 499.1h0M809.9 344.7h0M790.4 353.7h0M782.1 352.7h0M806.5 365.8h0M810.3 296.9h0M805.4 277.6h0M752.8 327.6h0M817.3 334.6h0M824.9 355.6h0M838.9 365h0M840.1 364.4h0M622.4 449h0M592.6 430.6h0M616.6 417.6h0M627.9 408.8h0M608 399.4h0M649.1 440.5h0M625.5 475.2h0M731.6 427.6h0M788.7 404.7h0M765.7 374.7h0M792.9 376.2h0M805.7 369.5h0M827.6 328.2h0M798.5 325.7h0M655.4 475.4h0M813.9 437.6h0M772 433.2h0M759.8 447.2h0M757.4 446.7h0M735.9 467.6h0M758.7 476.4h0M878.2 357.5h0M800.7 402.3h0M811.5 405.1h0M696.1 445.3h0M727.7 458.7h0M722.2 476.8h0M722.6 483.6h0M717.4 485.2h0M726.6 471.8h0M743.8 500h0M759 499.4h0M769.2 488.4h0M783.8 464.9h0M799.6 467.1h0M857 350.6h0M902.9 347.9h0M899.3 359.8h0M900.5 419.5h0M904.4 444.5h0M719.9 499.5h0M701.3 497.2h0M665.9 526.8h0M651.8 537.5h0M661.3 525.5h0M666.5 527.4h0M638.8 581.3h0M621.5 581.8h0M767.3 438.3h0M869.4 310.3h0M844.8 314.7h0M851.2 309.4h0M846.9 309.1h0M659.2 468.5h0M644.1 467h0M808.3 422.9h0M818.9 450.3h0M848.5 439.1h0M903.9 406.4h0M902.4 398.2h0M741.2 386.4h0M738.4 404.9h0M693.2 437.4h0M694.9 470.9h0M682.1 487.7h0M696.6 506.9h0M663.9 434.6h0M642.5 426.3h0M639.2 426.5h0M627.2 426.1h0M667 405.3h0M647.6 408h0M631.5 419.6h0M655.9 452.8h0M632.9 492.8h0M592.9 484.3h0M581.9 484h0M612.3 459.8h0M627.1 457.5h0M757.9 349.9h0M757.8 350.1h0M760.7 357.8h0M702.3 367.1h0M705.8 387.6h0M725.4 380.1h0M748.1 388h0M772.2 392.4h0M895.9 296.7h0M892.1 305.3h0M790.7 261.7h0M765 274.5h0M856 402.6h0M820.1 448h0M784.4 450.2h0M813.5 348.7h0M734.2 353.4h0M881.1 312.8h0M881.3 320.1h0M918.3 303.5h0M847.6 354.1h0M834.1 380.8h0M815.2 387h0M840.1 446.1h0M827 469.7h0M845.3 314.1h0M837.2 299.4h0M822.7 283.8h0M856.6 245h0M848 244.5h0M849 227.5h0M868.1 388.8h0M885.8 405.3h0M875 427.1h0M682.7 375.7h0M700.6 393.8h0M894.4 338.2h0M859.9 320.8h0M862.8 305.4h0M898.5 299.6h0M606 358.4h0M642.5 360h0M658.7 358.5h0M578.2 449.4h0M558.9 412.5h0M593 427.4h0M597.5 409.1h0M607.3 375.1h0M641.2 378.8h0M634.2 390.9h0M637.1 340.3h0M645.8 325.3h0M657.1 320.5h0M664 305.2h0M865 252h0M875.7 236.5h0M860.4 217.7h0M873.5 206.4h0M882.2 210.5h0M857.3 205.8h0M581 469.7h0M585.8 521.5h0M700.9 538.1h0M697.4 530.4h0M721.5 515.5h0M738.5 515.7h0M760.2 515.7h0M855.7 479.9h0M616.6 473h0M615.5 477.2h0M789.1 518.5h0M750.9 531.1h0M726.4 542.1h0M713.9 554.6h0M700.5 543.3h0M696.5 531h0M668.3 543.3h0M665.6 561.6h0M626.7 568.9h0M633.4 575.2h0M623.8 592.4h0M610.8 592.9h0M620.2 581.9h0M908.8 340.2h0M917.3 353.9h0M904.4 382.2h0M741.4 292h0M748.8 267.8h0M733.3 254.1h0M735.5 252.7h0M746.7 243.8h0M603.6 577h0M623.3 556h0M856.5 211h0M840 215.1h0M831.1 233.2h0M931.4 346.2h0M875.5 472.6h0M516.5 464.6h0M535.6 450.5h0M545.9 451.3h0M625 571.6h0M941.6 283.8h0M877.5 218.2h0M887.9 231.6h0M747.9 575.4h0M529.3 399.6h0M544.7 394h0M559.1 383.6h0M570.7 385.7h0M677.6 323.5h0M732.9 241.3h0"/><path stroke="#f02020" stroke-width="1.800" d="M839.9 463h0M854.6 469.8h0M856.2 455h0M898.5 470.2h0M873.5 436.5h0M897.1 434.8h0M705.1 339.5h0M744.7 315.1h0M738.1 305.3h0M619.8 523.6h0M607.7 589.3h0M529.6 457.9h0M546.8 458h0M544.8 466.1h0M539 442.2h0M701.3 334.9h0M698 341.3h0M695.5 373.6h0M667.2 349.1h0M659.2 342h0M663.3 324.7h0M668.1 326.4h0M634.1 327.8h0M617.8 348.7h0M599.9 360.2h0M598.7 375.6h0M541.5 413.2h0M554.2 415.1h0M538.9 426h0M582.7 383.7h0M888.3 253.1h0M886.9 269.5h0M906.3 285.3h0M927 294.7h0M928 288.5h0M936.5 285.4h0M770.9 542.3h0M717.2 536.7h0M699.5 534.2h0M576.5 380.3h0M595.8 400.7h0M601.2 378.8h0M597.7 349.5h0M613.8 355.8h0M768.2 251.9h0M945.6 375.1h0M937.9 379h0M916.1 381h0M815 494.9h0M831.4 514.7h0M688.7 374.7h0M686.6 478.1h0M664.1 505.1h0M650.1 499.1h0M809.9 344.7h0M790.4 353.7h0M782.1 352.7h0M806.5 365.8h0M810.3 296.9h0M805.4 277.6h0M752.8 327.6h0M817.3 334.6h0M824.9 355.6h0M838.9 365h0M840.1 364.4h0M622.4 449h0M592.6 430.6h0M616.6 417.6h0M627.9 408.8h0M608 399.4h0M649.1 440.5h0M625.5 475.2h0M731.6 427.6h0M788.7 404.7h0M765.7 374.7h0M792.9 376.2h0M805.7 369.5h0M827.6 328.2h0M798.5 325.7h0M655.4 475.4h0M813.9 437.6h0M772 433.2h0M759.8 447.2h0M757.4 446.7h0M735.9 467.6h0M758.7 476.4h0M878.2 357.5h0M800.7 402.3h0M811.5 405.1h0M696.1 445.3h0M727.7 458.7h0M722.2 476.8h0M722.6 483.6h0M717.4 485.2h0M726.6 471.8h0M743.8 500h0M759 499.4h0M769.2 488.4h0M783.8 464.9h0M799.6 467.1h0M857 350.6h0M902.9 347.9h0M899.3 359.8h0M900.5 419.5h0M904.4 444.5h0M719.9 499.5h0M701.3 497.2h0M665.9 526.8h0M651.8 537.5h0M661.3 525.5h0M666.5 527.4h0M638.8 581.3h0M621.5 581.8h0M767.3 438.3h0M869.4 310.3h0M844.8 314.7h0M851.2 309.4h0M846.9 309.1h0M659.2 468.5h0M644.1 467h0M808.3 422.9h0M818.9 450.3h0M848.5 439.1h0M903.9 406.4h0M902.4 398.2h0M741.2 386.4h0M738.4 404.9h0M693.2 437.4h0M694.9 470.9h0M682.1 487.7h0M696.6 506.9h0M663.9 434.6h0M642.5 426.3h0M639.2 426.5h0M627.2 426.1h0M667 405.3h0M647.6 408h0M631.5 419.6h0M655.9 452.8h0M632.9 492.8h0M592.9 484.3h0M581.9 484h0M612.3 459.8h0M627.1 457.5h0M757.9 349.9h0M757.8 350.1h0M760.7 357.8h0M702.3 367.1h0M705.8 387.6h0M725.4 380.1h0M748.1 388h0M772.2 392.4h0M895.9 296.7h0M892.1 305.3h0M790.7 261.7h0M765 274.5h0M856 402.6h0M820.1 448h0M784.4 450.2h0M813.5 348.7h0M734.2 353.4h0M881.1 312.8h0M881.3 320.1h0M918.3 303.5h0M847.6 354.1h0M834.1 380.8h0M815.2 387h0M840.1 446.1h0M827 469.7h0M845.3 314.1h0M837.2 299.4h0M822.7 283.8h0M856.6 245h0M848 244.5h0M849 227.5h0M868.1 388.8h0M885.8 405.3h0M875 427.1h0M682.7 375.7h0M700.6 393.8h0M894.4 338.2h0M859.9 320.8h0M862.8 305.4h0M898.5 299.6h0M606 358.4h0M642.5 360h0M658.7 358.5h0M578.2 449.4h0M558.9 412.5h0M593 427.4h0M597.5 409.1h0M607.3 375.1h0M641.2 378.8h0M634.2 390.9h0M637.1 340.3h0M645.8 325.3h0M657.1 320.5h0M664 305.2h0M865 252h0M875.7 236.5h0M860.4 217.7h0M873.5 206.4h0M882.2 210.5h0M857.3 205.8h0M581 469.7h0M585.8 521.5h0M700.9 538.1h0M697.4 530.4h0M721.5 515.5h0M738.5 515.7h0M760.2 515.7h0M855.7 479.9h0M616.6 473h0M615.5 477.2h0M789.1 518.5h0M750.9 531.1h0M726.4 542.1h0M713.9 554.6h0M700.5 543.3h0M696.5 531h0M668.3 543.3h0M665.6 561.6h0M626.7 568.9h0M633.4 575.2h0M623.8 592.4h0M610.8 592.9h0M620.2 581.9h0M908.8 340.2h0M917.3 353.9h0M904.4 382.2h0M741.4 292h0M748.8 267.8h0M733.3 254.1h0M735.5 252.7h0M746.7 243.8h0M603.6 577h0M623.3 556h0M856.5 211h0M840 215.1h0M831.1 233.2h0M931.4 346.2h0M875.5 472.6h0M516.5 464.6h0M535.6 450.5h0M545.9 451.3h0M625 571.6h0M941.6 283.8h0M877.5 218.2h0M887.9 231.6h0M747.9 575.4h0M529.3 399.6h0M544.7 394h0M559.1 383.6h0M570.7 385.7h0M677.6 323.5h0M732.9 241.3h0" transform="translate(-0.3,-0.3)"/><path stroke="#a9a018" stroke-width="4.100" d="M675.2 355.8h0M719.8 521.3h0M656.1 363.6h0"/><path stroke="#c8c030" stroke-width="3.200" d="M675.2 355.8h0M719.8 521.3h0M656.1 363.6h0"/><path stroke="#f0e63c" stroke-width="1.800" d="M675.2 355.8h0M719.8 521.3h0M656.1 363.6h0" transform="translate(-0.3,-0.3)"/></g><circle cx="867.8" cy="376.8" r="15" fill="url(#sg)"/><circle cx="845.7" cy="384.6" r="14" fill="url(#sg)"/><circle cx="825.0" cy="388.5" r="14" fill="url(#sg)"/><circle cx="832.5" cy="348.9" r="15" fill="url(#sg)"/><circle cx="853.2" cy="366.7" r="15" fill="url(#sg)"/><path fill="none" stroke="#8a8a8a" stroke-width="1" d="M819 387L827 386M827 386L822 396M822 396L829 395M829 395L835 391M835 391L842 388M842 388L849 387M849 387L845 395M845 395L838 398M838 398L831 400M831 400L824 401"/><circle cx="819" cy="387" r="1.700" fill="#2525ee" stroke="#0a0aa8" stroke-width="0.600"/><circle cx="827" cy="386" r="1.700" fill="#f02020" stroke="#a30808" stroke-width="0.600"/><circle cx="822" cy="396" r="1.700" fill="#2525ee" stroke="#0a0aa8" stroke-width="0.600"/><circle cx="829" cy="395" r="1.700" fill="#b4b4b4" stroke="#5c5c5c" stroke-width="0.600"/><circle cx="835" cy="391" r="1.700" fill="#b4b4b4" stroke="#5c5c5c" stroke-width="0.600"/><circle cx="842" cy="388" r="1.700" fill="#b4b4b4" stroke="#5c5c5c" stroke-width="0.600"/><circle cx="849" cy="387" r="1.700" fill="#2525ee" stroke="#0a0aa8" stroke-width="0.600"/><circle cx="845" cy="395" r="1.700" fill="#2525ee" stroke="#0a0aa8" stroke-width="0.600"/><circle cx="838" cy="398" r="1.700" fill="#b4b4b4" stroke="#5c5c5c" stroke-width="0.600"/><circle cx="831" cy="400" r="1.700" fill="#b4b4b4" stroke="#5c5c5c" stroke-width="0.600"/><circle cx="824" cy="401" r="1.700" fill="#b4b4b4" stroke="#5c5c5c" stroke-width="0.600"/></svg>
<div class="t" style="left:246.5px;top:664.4px;font-size:54px;line-height:64px;font-weight:700;color:rgba(255,255,255,0.042);">Click each docking score.</div>
<div class="t" style="left:246.5px;top:728.9px;font-size:54px;line-height:64px;font-weight:700;color:rgba(255,255,255,0.042);">You can visualize other complexes.</div>
<div class="t" style="left:246.5px;top:793.4px;font-size:54px;line-height:64px;font-weight:700;color:rgba(255,255,255,0.042);">The complexes are listed in order of docking score.</div>
<svg style="left:130px;top:665px;" width="130" height="70" viewBox="0 0 130 70"><g opacity="0.035"><path d="M118 57L14 15" stroke="#ff2a2a" stroke-width="4" fill="none"/><path d="M9 12l18 -2l-7 16z" fill="#ff2a2a"/></g></svg>
</div></body></html>
